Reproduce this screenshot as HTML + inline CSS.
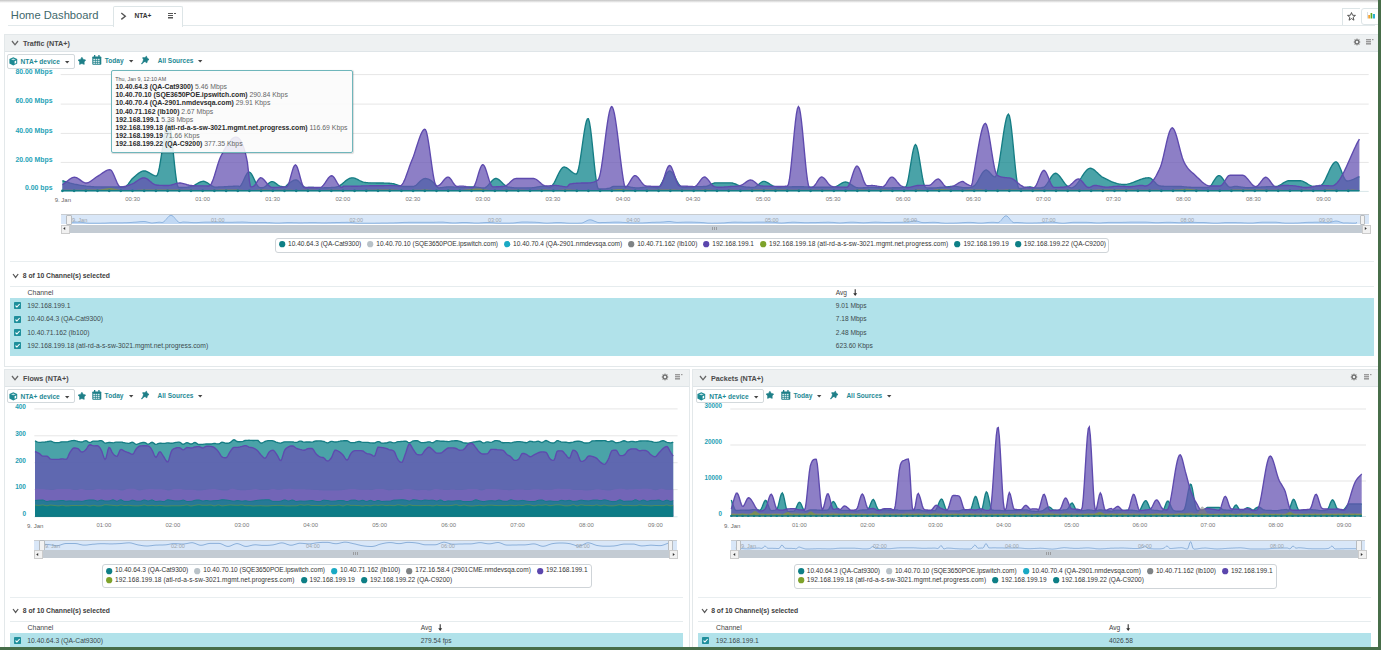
<!DOCTYPE html><html><head><meta charset="utf-8"><style>
html,body{margin:0;padding:0;}
body{width:1381px;height:650px;overflow:hidden;position:relative;background:#fff;font-family:"Liberation Sans", sans-serif;}
.t{position:absolute;white-space:nowrap;line-height:1;font-family:"Liberation Sans", sans-serif;}
svg{overflow:visible}
</style></head><body>
<div style="position:absolute;left:0px;top:0px;width:1381px;height:3px;background:linear-gradient(#c3c3c3,#e8e8e8 60%,#fff)"></div>
<div class="t" style="left:10.8px;top:9.82px;font-size:11.2px;font-weight:normal;color:#41686b;">Home Dashboard</div>
<div style="position:absolute;left:8px;top:25px;width:1367px;height:1px;background:#e2e9eb"></div>
<div style="position:absolute;left:113px;top:6px;width:68px;height:20px;border:1px solid #dde5e7;border-bottom:none;border-radius:2px 2px 0 0;background:#fff"></div>
<svg style="position:absolute;left:120px;top:12px" width="8" height="9"><path d="M1.3,1 L5.3,4.2 L1.3,7.4" fill="none" stroke="#555" stroke-width="1.4"/></svg>
<div class="t" style="left:134.5px;top:13.21px;font-size:6.6px;font-weight:bold;color:#333;">NTA+</div>
<svg style="position:absolute;left:168px;top:13px" width="9" height="7"><rect x="0" y="0" width="5" height="1" fill="#555"/><rect x="0" y="2" width="5" height="1" fill="#555"/><rect x="0" y="4" width="5" height="1.5" fill="#555"/><rect x="6" y="0" width="2" height="1" fill="#555"/></svg>
<div style="position:absolute;left:1342px;top:8px;width:17px;height:16px;border-left:1px solid #dde5e7;border-top:1px solid #dde5e7;background:#fff"></div>
<svg style="position:absolute;left:1347px;top:12px" width="9" height="9" viewBox="0 0 10 10"><path d="M5,0.6 L6.2,3.6 L9.4,3.8 L6.9,5.8 L7.7,9.1 L5,7.3 L2.3,9.1 L3.1,5.8 L0.6,3.8 L3.8,3.6 Z" fill="none" stroke="#444" stroke-width="1"/></svg>
<div style="position:absolute;left:1361px;top:8px;width:20px;height:15px;border:1px solid #dde5e7;border-radius:3px;background:#fff"></div>
<svg style="position:absolute;left:1367px;top:12px" width="9" height="7"><rect x="0" y="0" width="1" height="6.5" fill="#d8dde2"/><rect x="1.3" y="3" width="1.6" height="3.5" fill="#f39a1e"/><rect x="3.6" y="1" width="1.6" height="5.5" fill="#5eab1f"/><rect x="5.8" y="2" width="2.2" height="4.5" fill="#2ab0cf"/></svg>
<!--PANELS-->
<div style="position:absolute;left:4px;top:34px;width:1373px;height:331px;border:1px solid #e3e8ea;background:#fff"></div>
<div style="position:absolute;left:5px;top:35px;width:1373px;height:16px;background:#eef1f2;border-bottom:1px solid #dfe5e8"></div>
<svg style="position:absolute;left:10.5px;top:39.5px" width="8" height="5.8"><path d="M1,1 L4.0,4.8 L7,1" fill="none" stroke="#666" stroke-width="1.3"/></svg>
<div class="t" style="left:23.0px;top:39.51px;font-size:7.2px;font-weight:bold;color:#4a4a4a;">Traffic (NTA+)</div>
<svg style="position:absolute;left:1351.7px;top:36.6px" width="10" height="10"><g transform="translate(5,5)"><path d="M3.38,-0.33 L3.38,0.33 L2.34,0.71 L2.16,1.15 L2.63,2.16 L2.16,2.63 L1.15,2.16 L0.71,2.34 L0.33,3.38 L-0.33,3.38 L-0.71,2.34 L-1.15,2.16 L-2.16,2.63 L-2.63,2.16 L-2.16,1.15 L-2.34,0.71 L-3.38,0.33 L-3.38,-0.33 L-2.34,-0.71 L-2.16,-1.15 L-2.63,-2.16 L-2.16,-2.63 L-1.15,-2.16 L-0.71,-2.34 L-0.33,-3.38 L0.33,-3.38 L0.71,-2.34 L1.15,-2.16 L2.16,-2.63 L2.63,-2.16 L2.16,-1.15 L2.34,-0.71 Z M1.22,0 A1.22,1.22 0 1 0 -1.22,0 A1.22,1.22 0 1 0 1.22,0 Z" fill="#707070" fill-rule="evenodd"/></g></svg>
<svg style="position:absolute;left:1366px;top:39px" width="9" height="7"><rect x="0" y="0" width="5" height="1.4" fill="#9a9a9a"/><rect x="0" y="2" width="5" height="1.4" fill="#9a9a9a"/><rect x="0" y="4" width="5" height="1.6" fill="#9a9a9a"/><rect x="6" y="0" width="1.5" height="1.2" fill="#9a9a9a"/></svg>
<div style="position:absolute;left:4px;top:369px;width:684px;height:281px;border:1px solid #e3e8ea;border-bottom:none;background:#fff"></div>
<div style="position:absolute;left:5px;top:370px;width:684px;height:16px;background:#eef1f2;border-bottom:1px solid #dfe5e8"></div>
<svg style="position:absolute;left:10.5px;top:374.5px" width="8" height="5.8"><path d="M1,1 L4.0,4.8 L7,1" fill="none" stroke="#666" stroke-width="1.3"/></svg>
<div class="t" style="left:23.0px;top:374.51px;font-size:7.2px;font-weight:bold;color:#4a4a4a;">Flows (NTA+)</div>
<svg style="position:absolute;left:660.3px;top:371.6px" width="10" height="10"><g transform="translate(5,5)"><path d="M3.38,-0.33 L3.38,0.33 L2.34,0.71 L2.16,1.15 L2.63,2.16 L2.16,2.63 L1.15,2.16 L0.71,2.34 L0.33,3.38 L-0.33,3.38 L-0.71,2.34 L-1.15,2.16 L-2.16,2.63 L-2.63,2.16 L-2.16,1.15 L-2.34,0.71 L-3.38,0.33 L-3.38,-0.33 L-2.34,-0.71 L-2.16,-1.15 L-2.63,-2.16 L-2.16,-2.63 L-1.15,-2.16 L-0.71,-2.34 L-0.33,-3.38 L0.33,-3.38 L0.71,-2.34 L1.15,-2.16 L2.16,-2.63 L2.63,-2.16 L2.16,-1.15 L2.34,-0.71 Z M1.22,0 A1.22,1.22 0 1 0 -1.22,0 A1.22,1.22 0 1 0 1.22,0 Z" fill="#707070" fill-rule="evenodd"/></g></svg>
<svg style="position:absolute;left:675px;top:374px" width="9" height="7"><rect x="0" y="0" width="5" height="1.4" fill="#9a9a9a"/><rect x="0" y="2" width="5" height="1.4" fill="#9a9a9a"/><rect x="0" y="4" width="5" height="1.6" fill="#9a9a9a"/><rect x="6" y="0" width="1.5" height="1.2" fill="#9a9a9a"/></svg>
<div style="position:absolute;left:692px;top:369px;width:685px;height:281px;border:1px solid #e3e8ea;border-bottom:none;background:#fff"></div>
<div style="position:absolute;left:693px;top:370px;width:685px;height:16px;background:#eef1f2;border-bottom:1px solid #dfe5e8"></div>
<svg style="position:absolute;left:698.5px;top:374.5px" width="8" height="5.8"><path d="M1,1 L4.0,4.8 L7,1" fill="none" stroke="#666" stroke-width="1.3"/></svg>
<div class="t" style="left:711.0px;top:374.51px;font-size:7.2px;font-weight:bold;color:#4a4a4a;">Packets (NTA+)</div>
<svg style="position:absolute;left:1349px;top:371.6px" width="10" height="10"><g transform="translate(5,5)"><path d="M3.38,-0.33 L3.38,0.33 L2.34,0.71 L2.16,1.15 L2.63,2.16 L2.16,2.63 L1.15,2.16 L0.71,2.34 L0.33,3.38 L-0.33,3.38 L-0.71,2.34 L-1.15,2.16 L-2.16,2.63 L-2.63,2.16 L-2.16,1.15 L-2.34,0.71 L-3.38,0.33 L-3.38,-0.33 L-2.34,-0.71 L-2.16,-1.15 L-2.63,-2.16 L-2.16,-2.63 L-1.15,-2.16 L-0.71,-2.34 L-0.33,-3.38 L0.33,-3.38 L0.71,-2.34 L1.15,-2.16 L2.16,-2.63 L2.63,-2.16 L2.16,-1.15 L2.34,-0.71 Z M1.22,0 A1.22,1.22 0 1 0 -1.22,0 A1.22,1.22 0 1 0 1.22,0 Z" fill="#707070" fill-rule="evenodd"/></g></svg>
<svg style="position:absolute;left:1364px;top:374px" width="9" height="7"><rect x="0" y="0" width="5" height="1.4" fill="#9a9a9a"/><rect x="0" y="2" width="5" height="1.4" fill="#9a9a9a"/><rect x="0" y="4" width="5" height="1.6" fill="#9a9a9a"/><rect x="6" y="0" width="1.5" height="1.2" fill="#9a9a9a"/></svg>
<svg style="position:absolute;left:0;top:0" width="1381" height="650"><rect x="60.7" y="74.1" width="1308" height="1" fill="#e6e6e6"/><rect x="60.7" y="103.6" width="1308" height="1" fill="#e6e6e6"/><rect x="60.7" y="132.9" width="1308" height="1" fill="#e6e6e6"/><rect x="60.7" y="161.9" width="1308" height="1" fill="#e6e6e6"/><rect x="60.7" y="190.9" width="1308" height="1" fill="#d8e6e8"/><path d="M62.4,191.1 L62.4,180.7 63.4,181.0 64.4,181.3 65.4,181.6 66.4,181.9 67.4,182.2 68.4,182.5 69.4,182.8 70.4,183.1 71.4,183.3 72.4,183.6 73.4,183.8 74.4,184.1 75.4,184.3 76.4,184.5 77.4,184.7 78.4,184.9 79.4,185.1 80.4,185.3 81.4,185.4 82.4,185.6 83.4,185.7 84.4,185.9 85.4,186.0 86.4,186.2 87.4,186.3 88.4,186.4 89.4,186.5 90.4,186.5 91.4,186.6 92.4,186.7 93.4,186.7 94.4,186.8 95.4,186.8 96.4,186.8 97.4,186.9 98.4,186.9 99.4,186.9 100.4,186.9 101.4,187.0 102.4,187.0 103.4,187.0 104.4,187.0 105.4,187.0 106.4,187.0 107.4,187.0 108.4,187.0 109.4,187.0 110.4,187.0 111.4,187.0 112.4,187.0 113.4,187.0 114.4,187.0 115.4,187.0 116.4,187.0 117.4,187.0 118.4,187.0 119.4,187.0 120.4,187.0 121.4,187.0 122.4,187.0 123.4,187.0 124.4,187.0 125.4,186.8 126.4,186.1 127.4,185.1 128.4,183.9 129.4,182.5 130.4,181.1 131.4,179.7 132.4,178.6 133.4,177.7 134.4,176.8 135.4,175.9 136.4,175.0 137.4,174.2 138.4,173.4 139.4,172.7 140.4,172.1 141.4,171.6 142.4,171.2 143.4,171.0 144.4,170.9 145.4,171.0 146.4,171.3 147.4,171.8 148.4,172.3 149.4,172.9 150.4,173.5 151.4,174.1 152.4,174.7 153.4,175.2 154.4,175.6 155.4,175.9 156.4,176.0 157.4,174.9 158.4,171.9 159.4,167.4 160.4,161.7 161.4,155.3 162.4,148.5 163.4,141.7 164.4,135.3 165.4,129.6 166.4,125.1 167.4,122.1 168.4,121.0 169.4,122.8 170.4,127.8 171.4,135.1 172.4,144.0 173.4,153.8 174.4,163.5 175.4,172.6 176.4,180.1 177.4,185.3 178.4,187.5 179.4,187.5 180.4,187.5 181.4,187.5 182.4,187.5 183.4,187.4 184.4,187.4 185.4,187.3 186.4,187.3 187.4,187.2 188.4,187.0 189.4,186.9 190.4,186.7 191.4,186.5 192.4,186.2 193.4,185.8 194.4,185.3 195.4,184.7 196.4,184.1 197.4,183.5 198.4,182.9 199.4,182.4 200.4,182.0 201.4,181.6 202.4,181.4 203.4,181.3 204.4,181.4 205.4,181.8 206.4,182.3 207.4,182.9 208.4,183.5 209.4,184.3 210.4,185.0 211.4,185.7 212.4,186.2 213.4,186.7 214.4,187.0 215.4,187.1 216.4,187.1 217.4,187.1 218.4,187.0 219.4,187.0 220.4,186.9 221.4,186.9 222.4,186.8 223.4,186.8 224.4,186.7 225.4,186.7 226.4,186.6 227.4,186.6 228.4,186.5 229.4,186.5 230.4,186.4 231.4,186.3 232.4,186.3 233.4,186.2 234.4,186.2 235.4,186.1 236.4,186.1 237.4,186.1 238.4,186.1 239.4,186.7 240.4,186.0 241.4,184.6 242.4,182.8 243.4,180.7 244.4,178.5 245.4,176.4 246.4,174.5 247.4,173.0 248.4,172.2 249.4,172.1 250.4,172.7 251.4,174.0 252.4,175.7 253.4,177.6 254.4,179.8 255.4,181.9 256.4,183.9 257.4,185.5 258.4,186.8 259.4,187.4 260.4,187.7 261.4,187.7 262.4,187.7 263.4,187.5 264.4,187.0 265.4,186.4 266.4,185.5 267.4,184.5 268.4,183.6 269.4,182.7 270.4,182.1 271.4,181.7 272.4,181.6 273.4,181.9 274.4,182.4 275.4,183.1 276.4,183.8 277.4,184.6 278.4,185.3 279.4,185.9 280.4,186.3 281.4,186.5 282.4,186.7 283.4,186.9 284.4,186.9 285.4,186.9 286.4,185.7 287.4,184.7 288.4,183.9 289.4,183.0 290.4,182.3 291.4,181.6 292.4,181.0 293.4,180.5 294.4,180.2 295.4,180.0 296.4,180.0 297.4,180.4 298.4,181.1 299.4,182.1 300.4,183.2 301.4,184.3 302.4,185.4 303.4,186.4 304.4,187.1 305.4,187.6 306.4,187.7 307.4,187.6 308.4,187.4 309.4,187.4 310.4,187.5 311.4,187.5 312.4,187.5 313.4,187.5 314.4,187.6 315.4,187.6 316.4,187.7 317.4,187.7 318.4,187.7 319.4,187.8 320.4,187.8 321.4,187.8 322.4,187.8 323.4,187.8 324.4,187.7 325.4,187.7 326.4,187.7 327.4,187.7 328.4,187.7 329.4,187.6 330.4,187.6 331.4,187.5 332.4,187.4 333.4,187.3 334.4,187.3 335.4,187.1 336.4,187.0 337.4,186.7 338.4,186.3 339.4,185.8 340.4,185.2 341.4,184.4 342.4,183.7 343.4,182.8 344.4,182.0 345.4,181.1 346.4,180.3 347.4,179.6 348.4,179.0 349.4,178.4 350.4,178.1 351.4,177.8 352.4,177.8 353.4,177.9 354.4,178.2 355.4,178.5 356.4,179.0 357.4,179.4 358.4,179.9 359.4,180.5 360.4,181.0 361.4,181.4 362.4,181.8 363.4,182.2 364.4,182.4 365.4,182.5 366.4,182.6 367.4,182.7 368.4,182.8 369.4,182.8 370.4,182.8 371.4,182.9 372.4,182.9 373.4,182.9 374.4,182.9 375.4,182.9 376.4,183.0 377.4,183.0 378.4,183.0 379.4,183.0 380.4,183.0 381.4,183.0 382.4,183.0 383.4,183.0 384.4,183.1 385.4,183.1 386.4,183.1 387.4,183.1 388.4,183.2 389.4,183.2 390.4,183.3 391.4,183.4 392.4,183.6 393.4,183.7 394.4,184.0 395.4,184.3 396.4,184.6 397.4,185.0 398.4,185.3 399.4,185.6 400.4,185.9 401.4,186.2 402.4,186.4 403.4,186.5 404.4,186.5 405.4,186.5 406.4,186.5 407.4,186.5 408.4,186.5 409.4,186.5 410.4,186.5 411.4,186.5 412.4,186.5 413.4,186.5 414.4,186.2 415.4,185.7 416.4,185.0 417.4,184.1 418.4,183.1 419.4,182.1 420.4,181.1 421.4,180.2 422.4,179.5 423.4,178.9 424.4,178.6 425.4,178.5 426.4,178.6 427.4,178.9 428.4,179.2 429.4,179.7 430.4,180.2 431.4,180.9 432.4,181.7 433.4,182.6 434.4,183.5 435.4,184.6 436.4,185.7 437.4,187.3 438.4,187.8 439.4,187.8 440.4,187.7 441.4,187.6 442.4,187.5 443.4,187.3 444.4,187.2 445.4,187.1 446.4,187.0 447.4,186.9 448.4,186.8 449.4,186.8 450.4,186.8 451.4,186.8 452.4,186.9 453.4,187.0 454.4,187.1 455.4,187.2 456.4,187.3 457.4,187.4 458.4,187.5 459.4,187.5 460.4,187.6 461.4,187.6 462.4,187.6 463.4,187.5 464.4,187.5 465.4,187.4 466.4,187.3 467.4,187.2 468.4,187.1 469.4,187.0 470.4,187.0 471.4,186.9 472.4,186.9 473.4,186.9 474.4,186.9 475.4,187.0 476.4,187.1 477.4,187.3 478.4,187.4 479.4,187.6 480.4,187.7 481.4,187.8 482.4,187.9 483.4,188.0 484.4,187.9 485.4,187.6 486.4,186.9 487.4,186.0 488.4,185.0 489.4,183.8 490.4,182.7 491.4,181.5 492.4,180.5 493.4,179.6 494.4,178.9 495.4,178.5 496.4,178.5 497.4,178.8 498.4,179.4 499.4,180.1 500.4,180.9 501.4,181.9 502.4,182.9 503.4,183.9 504.4,184.8 505.4,185.6 506.4,186.3 507.4,186.8 508.4,187.1 509.4,187.2 510.4,187.4 511.4,187.5 512.4,187.6 513.4,187.7 514.4,187.8 515.4,187.8 516.4,187.8 517.4,187.9 518.4,187.9 519.4,187.9 520.4,187.9 521.4,187.9 522.4,187.9 523.4,187.9 524.4,187.9 525.4,187.9 526.4,187.9 527.4,187.8 528.4,187.8 529.4,187.8 530.4,187.8 531.4,187.8 532.4,187.7 533.4,187.6 534.4,187.5 535.4,187.3 536.4,187.1 537.4,186.9 538.4,186.8 539.4,186.6 540.4,186.4 541.4,186.3 542.4,186.2 543.4,186.2 544.4,186.3 545.4,186.4 546.4,186.5 547.4,186.7 548.4,186.9 549.4,187.0 550.4,187.0 551.4,186.4 552.4,185.4 553.4,184.0 554.4,182.3 555.4,180.4 556.4,178.3 557.4,176.1 558.4,174.0 559.4,172.1 560.4,170.3 561.4,168.8 562.4,167.7 563.4,167.1 564.4,167.0 565.4,167.3 566.4,167.7 567.4,168.3 568.4,169.0 569.4,169.9 570.4,170.7 571.4,171.6 572.4,172.3 573.4,173.0 574.4,173.6 575.4,173.9 576.4,174.0 577.4,172.6 578.4,169.3 579.4,164.4 580.4,158.3 581.4,151.6 582.4,144.5 583.4,137.5 584.4,131.0 585.4,125.5 586.4,121.3 587.4,118.9 588.4,118.8 589.4,121.9 590.4,127.9 591.4,135.9 592.4,145.3 593.4,155.3 594.4,165.1 595.4,174.2 596.4,181.7 597.4,186.8 598.4,189.0 599.4,189.0 600.4,189.0 601.4,189.0 602.4,189.0 603.4,188.9 604.4,188.9 605.4,188.8 606.4,188.7 607.4,188.5 608.4,188.4 609.4,188.1 610.4,187.9 611.4,187.3 612.4,186.7 613.4,186.3 614.4,186.3 615.4,186.3 616.4,186.3 617.4,186.3 618.4,186.3 619.4,186.3 620.4,186.3 621.4,186.3 622.4,186.3 623.4,186.4 624.4,186.4 625.4,186.4 626.4,186.5 627.4,186.6 628.4,186.7 629.4,186.9 630.4,187.1 631.4,187.3 632.4,187.4 633.4,187.6 634.4,187.7 635.4,187.8 636.4,187.9 637.4,187.9 638.4,187.9 639.4,187.8 640.4,187.7 641.4,187.6 642.4,187.5 643.4,187.4 644.4,187.2 645.4,187.1 646.4,187.0 647.4,186.9 648.4,186.9 649.4,186.9 650.4,186.9 651.4,187.0 652.4,187.2 653.4,187.3 654.4,187.4 655.4,187.5 656.4,187.6 657.4,187.7 658.4,187.5 659.4,186.7 660.4,185.4 661.4,183.7 662.4,181.8 663.4,179.8 664.4,177.7 665.4,175.7 666.4,173.9 667.4,172.5 668.4,171.5 669.4,171.0 670.4,171.2 671.4,171.9 672.4,173.0 673.4,174.5 674.4,176.2 675.4,178.1 676.4,180.0 677.4,181.8 678.4,183.5 679.4,185.0 680.4,186.2 681.4,186.9 682.4,187.2 683.4,187.2 684.4,187.3 685.4,187.2 686.4,187.2 687.4,187.1 688.4,187.1 689.4,187.0 690.4,186.9 691.4,186.8 692.4,186.7 693.4,186.7 694.4,186.6 695.4,186.6 696.4,186.6 697.4,186.6 698.4,186.6 699.4,186.6 700.4,186.6 701.4,186.6 702.4,186.6 703.4,186.5 704.4,186.5 705.4,186.5 706.4,186.3 707.4,186.0 708.4,185.6 709.4,185.1 710.4,184.7 711.4,184.2 712.4,183.7 713.4,183.3 714.4,183.0 715.4,182.8 716.4,182.8 717.4,182.8 718.4,182.8 719.4,182.8 720.4,182.8 721.4,182.8 722.4,182.8 723.4,182.8 724.4,182.8 725.4,182.8 726.4,182.8 727.4,182.8 728.4,182.8 729.4,182.8 730.4,182.8 731.4,182.9 732.4,183.0 733.4,183.3 734.4,183.6 735.4,184.0 736.4,184.4 737.4,184.9 738.4,185.3 739.4,185.7 740.4,186.1 741.4,186.4 742.4,186.6 743.4,186.7 744.4,186.9 745.4,187.0 746.4,187.1 747.4,187.1 748.4,187.2 749.4,187.2 750.4,187.3 751.4,187.3 752.4,187.3 753.4,187.3 754.4,187.2 755.4,186.9 756.4,186.3 757.4,185.5 758.4,184.7 759.4,183.8 760.4,183.0 761.4,182.3 762.4,181.7 763.4,181.4 764.4,181.4 765.4,181.7 766.4,182.1 767.4,182.6 768.4,183.2 769.4,183.8 770.4,184.5 771.4,185.1 772.4,185.7 773.4,186.2 774.4,186.5 775.4,186.7 776.4,186.9 777.4,187.0 778.4,187.0 779.4,187.0 780.4,187.0 781.4,187.0 782.4,186.9 783.4,186.9 784.4,186.9 785.4,186.9 786.4,186.8 787.4,186.8 788.4,186.8 789.4,186.8 790.4,186.8 791.4,186.8 792.4,186.7 793.4,186.7 794.4,186.7 795.4,186.7 796.4,186.7 797.4,186.7 798.4,186.7 799.4,186.7 800.4,186.7 801.4,186.7 802.4,186.7 803.4,186.7 804.4,186.8 805.4,186.8 806.4,186.9 807.4,186.9 808.4,187.0 809.4,187.1 810.4,187.1 811.4,187.1 812.4,187.2 813.4,187.2 814.4,187.2 815.4,187.2 816.4,187.2 817.4,187.2 818.4,187.2 819.4,187.2 820.4,187.2 821.4,187.2 822.4,187.2 823.4,187.2 824.4,187.2 825.4,187.2 826.4,187.2 827.4,187.2 828.4,187.2 829.4,187.2 830.4,187.2 831.4,187.3 832.4,187.3 833.4,187.3 834.4,187.2 835.4,186.9 836.4,186.4 837.4,185.9 838.4,185.3 839.4,184.6 840.4,184.0 841.4,183.4 842.4,182.8 843.4,182.4 844.4,182.1 845.4,182.0 846.4,182.1 847.4,182.4 848.4,182.9 849.4,183.4 850.4,184.1 851.4,184.7 852.4,185.4 853.4,186.1 854.4,186.7 855.4,187.2 856.4,187.6 857.4,187.7 858.4,187.8 859.4,187.8 860.4,187.8 861.4,187.8 862.4,187.8 863.4,187.7 864.4,187.7 865.4,187.6 866.4,187.6 867.4,187.5 868.4,187.5 869.4,187.4 870.4,187.4 871.4,187.4 872.4,187.4 873.4,187.4 874.4,187.4 875.4,187.5 876.4,187.5 877.4,187.6 878.4,187.7 879.4,187.7 880.4,187.8 881.4,187.8 882.4,187.8 883.4,187.9 884.4,187.9 885.4,187.8 886.4,187.8 887.4,187.8 888.4,187.8 889.4,187.8 890.4,187.8 891.4,187.8 892.4,187.7 893.4,187.7 894.4,187.7 895.4,187.7 896.4,187.7 897.4,187.7 898.4,187.7 899.4,187.7 900.4,187.6 901.4,187.6 902.4,187.5 903.4,187.4 904.4,187.2 905.4,187.1 906.4,185.9 907.4,182.8 908.4,178.1 909.4,172.4 910.4,166.2 911.4,160.0 912.4,154.2 913.4,149.4 914.4,146.0 915.4,144.6 916.4,145.6 917.4,148.6 918.4,153.1 919.4,158.8 920.4,165.0 921.4,171.3 922.4,177.2 923.4,182.2 924.4,185.8 925.4,187.4 926.4,187.7 927.4,187.9 928.4,187.9 929.4,188.0 930.4,188.0 931.4,188.0 932.4,188.0 933.4,187.9 934.4,187.9 935.4,187.8 936.4,187.8 937.4,187.7 938.4,187.6 939.4,187.5 940.4,187.5 941.4,187.4 942.4,187.3 943.4,187.2 944.4,187.1 945.4,187.0 946.4,186.9 947.4,186.8 948.4,186.7 949.4,186.6 950.4,186.5 951.4,186.4 952.4,186.4 953.4,186.3 954.4,186.3 955.4,186.4 956.4,186.5 957.4,186.6 958.4,186.8 959.4,187.0 960.4,187.1 961.4,187.3 962.4,187.5 963.4,187.6 964.4,187.7 965.4,187.7 966.4,187.7 967.4,187.7 968.4,187.7 969.4,187.6 970.4,187.4 971.4,187.2 972.4,186.8 973.4,186.3 974.4,185.7 975.4,184.7 976.4,183.4 977.4,181.8 978.4,180.0 979.4,178.2 980.4,176.3 981.4,174.6 982.4,173.0 983.4,171.7 984.4,170.7 985.4,170.1 986.4,170.0 987.4,170.5 988.4,171.2 989.4,172.2 990.4,173.4 991.4,174.5 992.4,175.6 993.4,176.4 994.4,176.9 995.4,176.8 996.4,175.1 997.4,171.8 998.4,167.1 999.4,161.3 1000.4,154.9 1001.4,148.0 1002.4,141.1 1003.4,134.3 1004.4,128.1 1005.4,122.6 1006.4,118.3 1007.4,115.4 1008.4,114.2 1009.4,115.7 1010.4,120.6 1011.4,128.1 1012.4,137.3 1013.4,147.6 1014.4,158.2 1015.4,168.3 1016.4,177.1 1017.4,183.9 1018.4,187.8 1019.4,188.5 1020.4,188.4 1021.4,188.3 1022.4,188.2 1023.4,188.0 1024.4,187.8 1025.4,187.6 1026.4,187.4 1027.4,187.2 1028.4,187.1 1029.4,187.0 1030.4,187.0 1031.4,187.1 1032.4,187.3 1033.4,187.6 1034.4,187.8 1035.4,187.9 1036.4,187.9 1037.4,187.9 1038.4,187.9 1039.4,187.9 1040.4,187.8 1041.4,187.7 1042.4,187.5 1043.4,187.3 1044.4,186.9 1045.4,186.0 1046.4,184.7 1047.4,183.3 1048.4,181.7 1049.4,180.0 1050.4,178.3 1051.4,176.7 1052.4,175.4 1053.4,174.3 1054.4,173.6 1055.4,173.3 1056.4,173.5 1057.4,174.0 1058.4,174.9 1059.4,176.0 1060.4,177.2 1061.4,178.6 1062.4,180.0 1063.4,181.5 1064.4,182.8 1065.4,184.1 1066.4,185.2 1067.4,186.1 1068.4,186.8 1069.4,187.4 1070.4,187.7 1071.4,187.8 1072.4,187.6 1073.4,187.1 1074.4,186.5 1075.4,185.7 1076.4,184.6 1077.4,183.4 1078.4,182.1 1079.4,180.6 1080.4,179.0 1081.4,177.5 1082.4,175.9 1083.4,174.4 1084.4,172.9 1085.4,171.6 1086.4,170.5 1087.4,169.5 1088.4,168.8 1089.4,168.4 1090.4,168.3 1091.4,168.5 1092.4,168.9 1093.4,169.4 1094.4,170.1 1095.4,171.0 1096.4,171.9 1097.4,172.8 1098.4,173.8 1099.4,174.7 1100.4,175.6 1101.4,176.5 1102.4,177.2 1103.4,177.7 1104.4,178.2 1105.4,178.7 1106.4,179.2 1107.4,179.7 1108.4,180.2 1109.4,180.7 1110.4,181.1 1111.4,181.6 1112.4,182.0 1113.4,182.3 1114.4,182.7 1115.4,183.0 1116.4,183.3 1117.4,183.6 1118.4,183.8 1119.4,184.1 1120.4,184.2 1121.4,184.4 1122.4,184.4 1123.4,184.5 1124.4,184.5 1125.4,184.4 1126.4,184.3 1127.4,184.2 1128.4,183.9 1129.4,183.7 1130.4,183.4 1131.4,183.0 1132.4,182.7 1133.4,182.3 1134.4,181.9 1135.4,181.5 1136.4,181.1 1137.4,180.7 1138.4,180.3 1139.4,179.9 1140.4,179.5 1141.4,179.2 1142.4,178.8 1143.4,178.5 1144.4,178.3 1145.4,178.0 1146.4,177.9 1147.4,177.8 1148.4,177.7 1149.4,177.8 1150.4,178.1 1151.4,178.8 1152.4,179.7 1153.4,180.7 1154.4,181.7 1155.4,182.8 1156.4,183.9 1157.4,184.8 1158.4,185.5 1159.4,185.9 1160.4,186.0 1161.4,186.1 1162.4,186.2 1163.4,186.2 1164.4,186.3 1165.4,186.3 1166.4,186.3 1167.4,186.4 1168.4,186.4 1169.4,186.4 1170.4,186.4 1171.4,186.4 1172.4,186.4 1173.4,186.5 1174.4,186.5 1175.4,186.5 1176.4,186.5 1177.4,186.5 1178.4,186.5 1179.4,186.5 1180.4,186.5 1181.4,186.5 1182.4,186.6 1183.4,186.7 1184.4,186.8 1185.4,186.9 1186.4,187.0 1187.4,187.1 1188.4,187.1 1189.4,187.2 1190.4,187.2 1191.4,187.3 1192.4,187.3 1193.4,187.3 1194.4,187.3 1195.4,187.3 1196.4,187.4 1197.4,187.4 1198.4,187.4 1199.4,187.4 1200.4,187.4 1201.4,187.4 1202.4,187.5 1203.4,187.5 1204.4,187.5 1205.4,187.5 1206.4,187.5 1207.4,187.5 1208.4,187.5 1209.4,187.0 1210.4,186.1 1211.4,184.8 1212.4,183.3 1213.4,181.7 1214.4,180.1 1215.4,178.6 1216.4,177.3 1217.4,176.3 1218.4,175.7 1219.4,175.6 1220.4,176.1 1221.4,177.0 1222.4,178.2 1223.4,179.7 1224.4,181.2 1225.4,182.8 1226.4,184.3 1227.4,185.5 1228.4,186.5 1229.4,187.1 1230.4,187.2 1231.4,187.1 1232.4,186.9 1233.4,186.7 1234.4,186.5 1235.4,186.4 1236.4,186.4 1237.4,186.5 1238.4,186.6 1239.4,186.8 1240.4,186.9 1241.4,187.1 1242.4,187.2 1243.4,187.4 1244.4,187.5 1245.4,187.6 1246.4,187.6 1247.4,187.7 1248.4,187.7 1249.4,187.6 1250.4,187.6 1251.4,187.6 1252.4,187.5 1253.4,187.5 1254.4,187.4 1255.4,187.3 1256.4,187.3 1257.4,187.2 1258.4,187.2 1259.4,187.1 1260.4,187.1 1261.4,187.0 1262.4,186.9 1263.4,186.9 1264.4,186.8 1265.4,186.8 1266.4,186.7 1267.4,186.7 1268.4,186.6 1269.4,186.6 1270.4,186.6 1271.4,186.6 1272.4,186.6 1273.4,186.6 1274.4,186.5 1275.4,186.5 1276.4,186.5 1277.4,186.3 1278.4,185.9 1279.4,185.4 1280.4,184.9 1281.4,184.3 1282.4,183.6 1283.4,182.9 1284.4,182.3 1285.4,181.8 1286.4,181.3 1287.4,180.9 1288.4,180.7 1289.4,180.7 1290.4,180.7 1291.4,180.7 1292.4,180.7 1293.4,180.7 1294.4,180.7 1295.4,180.7 1296.4,180.7 1297.4,180.7 1298.4,180.7 1299.4,180.7 1300.4,180.7 1301.4,180.9 1302.4,181.2 1303.4,181.6 1304.4,182.1 1305.4,182.6 1306.4,183.2 1307.4,183.8 1308.4,184.5 1309.4,185.0 1310.4,185.5 1311.4,186.0 1312.4,186.3 1313.4,186.5 1314.4,186.5 1315.4,186.4 1316.4,186.2 1317.4,186.1 1318.4,186.1 1319.4,186.1 1320.4,185.9 1321.4,185.3 1322.4,184.3 1323.4,182.9 1324.4,181.2 1325.4,179.2 1326.4,177.1 1327.4,174.9 1328.4,172.7 1329.4,170.5 1330.4,168.4 1331.4,166.5 1332.4,164.8 1333.4,163.5 1334.4,162.5 1335.4,161.9 1336.4,161.9 1337.4,162.7 1338.4,164.1 1339.4,166.2 1340.4,168.6 1341.4,171.1 1342.4,173.7 1343.4,176.2 1344.4,178.3 1345.4,179.9 1346.4,180.8 1347.4,181.0 1348.4,180.9 1349.4,180.7 1350.4,180.4 1351.4,180.1 1352.4,179.7 1353.4,179.3 1354.4,178.8 1355.4,178.3 1356.4,177.9 1357.4,177.4 1358.4,177.0 1359.4,176.6 L1359.4,191.1 Z" fill="rgba(14,132,139,0.75)"/><path d="M62.4,180.7 L63.4,181.0 L64.4,181.3 L65.4,181.6 L66.4,181.9 L67.4,182.2 L68.4,182.5 L69.4,182.8 L70.4,183.1 L71.4,183.3 L72.4,183.6 L73.4,183.8 L74.4,184.1 L75.4,184.3 L76.4,184.5 L77.4,184.7 L78.4,184.9 L79.4,185.1 L80.4,185.3 L81.4,185.4 L82.4,185.6 L83.4,185.7 L84.4,185.9 L85.4,186.0 L86.4,186.2 L87.4,186.3 L88.4,186.4 L89.4,186.5 L90.4,186.5 L91.4,186.6 L92.4,186.7 L93.4,186.7 L94.4,186.8 L95.4,186.8 L96.4,186.8 L97.4,186.9 L98.4,186.9 L99.4,186.9 L100.4,186.9 L101.4,187.0 L102.4,187.0 L103.4,187.0 L104.4,187.0 L105.4,187.0 L106.4,187.0 L107.4,187.0 L108.4,187.0 L109.4,187.0 L110.4,187.0 L111.4,187.0 L112.4,187.0 L113.4,187.0 L114.4,187.0 L115.4,187.0 L116.4,187.0 L117.4,187.0 L118.4,187.0 L119.4,187.0 L120.4,187.0 L121.4,187.0 L122.4,187.0 L123.4,187.0 L124.4,187.0 L125.4,186.8 L126.4,186.1 L127.4,185.1 L128.4,183.9 L129.4,182.5 L130.4,181.1 L131.4,179.7 L132.4,178.6 L133.4,177.7 L134.4,176.8 L135.4,175.9 L136.4,175.0 L137.4,174.2 L138.4,173.4 L139.4,172.7 L140.4,172.1 L141.4,171.6 L142.4,171.2 L143.4,171.0 L144.4,170.9 L145.4,171.0 L146.4,171.3 L147.4,171.8 L148.4,172.3 L149.4,172.9 L150.4,173.5 L151.4,174.1 L152.4,174.7 L153.4,175.2 L154.4,175.6 L155.4,175.9 L156.4,176.0 L157.4,174.9 L158.4,171.9 L159.4,167.4 L160.4,161.7 L161.4,155.3 L162.4,148.5 L163.4,141.7 L164.4,135.3 L165.4,129.6 L166.4,125.1 L167.4,122.1 L168.4,121.0 L169.4,122.8 L170.4,127.8 L171.4,135.1 L172.4,144.0 L173.4,153.8 L174.4,163.5 L175.4,172.6 L176.4,180.1 L177.4,185.3 L178.4,187.5 L179.4,187.5 L180.4,187.5 L181.4,187.5 L182.4,187.5 L183.4,187.4 L184.4,187.4 L185.4,187.3 L186.4,187.3 L187.4,187.2 L188.4,187.0 L189.4,186.9 L190.4,186.7 L191.4,186.5 L192.4,186.2 L193.4,185.8 L194.4,185.3 L195.4,184.7 L196.4,184.1 L197.4,183.5 L198.4,182.9 L199.4,182.4 L200.4,182.0 L201.4,181.6 L202.4,181.4 L203.4,181.3 L204.4,181.4 L205.4,181.8 L206.4,182.3 L207.4,182.9 L208.4,183.5 L209.4,184.3 L210.4,185.0 L211.4,185.7 L212.4,186.2 L213.4,186.7 L214.4,187.0 L215.4,187.1 L216.4,187.1 L217.4,187.1 L218.4,187.0 L219.4,187.0 L220.4,186.9 L221.4,186.9 L222.4,186.8 L223.4,186.8 L224.4,186.7 L225.4,186.7 L226.4,186.6 L227.4,186.6 L228.4,186.5 L229.4,186.5 L230.4,186.4 L231.4,186.3 L232.4,186.3 L233.4,186.2 L234.4,186.2 L235.4,186.1 L236.4,186.1 L237.4,186.1 L238.4,186.1 L239.4,186.7 L240.4,186.0 L241.4,184.6 L242.4,182.8 L243.4,180.7 L244.4,178.5 L245.4,176.4 L246.4,174.5 L247.4,173.0 L248.4,172.2 L249.4,172.1 L250.4,172.7 L251.4,174.0 L252.4,175.7 L253.4,177.6 L254.4,179.8 L255.4,181.9 L256.4,183.9 L257.4,185.5 L258.4,186.8 L259.4,187.4 L260.4,187.7 L261.4,187.7 L262.4,187.7 L263.4,187.5 L264.4,187.0 L265.4,186.4 L266.4,185.5 L267.4,184.5 L268.4,183.6 L269.4,182.7 L270.4,182.1 L271.4,181.7 L272.4,181.6 L273.4,181.9 L274.4,182.4 L275.4,183.1 L276.4,183.8 L277.4,184.6 L278.4,185.3 L279.4,185.9 L280.4,186.3 L281.4,186.5 L282.4,186.7 L283.4,186.9 L284.4,186.9 L285.4,186.9 L286.4,185.7 L287.4,184.7 L288.4,183.9 L289.4,183.0 L290.4,182.3 L291.4,181.6 L292.4,181.0 L293.4,180.5 L294.4,180.2 L295.4,180.0 L296.4,180.0 L297.4,180.4 L298.4,181.1 L299.4,182.1 L300.4,183.2 L301.4,184.3 L302.4,185.4 L303.4,186.4 L304.4,187.1 L305.4,187.6 L306.4,187.7 L307.4,187.6 L308.4,187.4 L309.4,187.4 L310.4,187.5 L311.4,187.5 L312.4,187.5 L313.4,187.5 L314.4,187.6 L315.4,187.6 L316.4,187.7 L317.4,187.7 L318.4,187.7 L319.4,187.8 L320.4,187.8 L321.4,187.8 L322.4,187.8 L323.4,187.8 L324.4,187.7 L325.4,187.7 L326.4,187.7 L327.4,187.7 L328.4,187.7 L329.4,187.6 L330.4,187.6 L331.4,187.5 L332.4,187.4 L333.4,187.3 L334.4,187.3 L335.4,187.1 L336.4,187.0 L337.4,186.7 L338.4,186.3 L339.4,185.8 L340.4,185.2 L341.4,184.4 L342.4,183.7 L343.4,182.8 L344.4,182.0 L345.4,181.1 L346.4,180.3 L347.4,179.6 L348.4,179.0 L349.4,178.4 L350.4,178.1 L351.4,177.8 L352.4,177.8 L353.4,177.9 L354.4,178.2 L355.4,178.5 L356.4,179.0 L357.4,179.4 L358.4,179.9 L359.4,180.5 L360.4,181.0 L361.4,181.4 L362.4,181.8 L363.4,182.2 L364.4,182.4 L365.4,182.5 L366.4,182.6 L367.4,182.7 L368.4,182.8 L369.4,182.8 L370.4,182.8 L371.4,182.9 L372.4,182.9 L373.4,182.9 L374.4,182.9 L375.4,182.9 L376.4,183.0 L377.4,183.0 L378.4,183.0 L379.4,183.0 L380.4,183.0 L381.4,183.0 L382.4,183.0 L383.4,183.0 L384.4,183.1 L385.4,183.1 L386.4,183.1 L387.4,183.1 L388.4,183.2 L389.4,183.2 L390.4,183.3 L391.4,183.4 L392.4,183.6 L393.4,183.7 L394.4,184.0 L395.4,184.3 L396.4,184.6 L397.4,185.0 L398.4,185.3 L399.4,185.6 L400.4,185.9 L401.4,186.2 L402.4,186.4 L403.4,186.5 L404.4,186.5 L405.4,186.5 L406.4,186.5 L407.4,186.5 L408.4,186.5 L409.4,186.5 L410.4,186.5 L411.4,186.5 L412.4,186.5 L413.4,186.5 L414.4,186.2 L415.4,185.7 L416.4,185.0 L417.4,184.1 L418.4,183.1 L419.4,182.1 L420.4,181.1 L421.4,180.2 L422.4,179.5 L423.4,178.9 L424.4,178.6 L425.4,178.5 L426.4,178.6 L427.4,178.9 L428.4,179.2 L429.4,179.7 L430.4,180.2 L431.4,180.9 L432.4,181.7 L433.4,182.6 L434.4,183.5 L435.4,184.6 L436.4,185.7 L437.4,187.3 L438.4,187.8 L439.4,187.8 L440.4,187.7 L441.4,187.6 L442.4,187.5 L443.4,187.3 L444.4,187.2 L445.4,187.1 L446.4,187.0 L447.4,186.9 L448.4,186.8 L449.4,186.8 L450.4,186.8 L451.4,186.8 L452.4,186.9 L453.4,187.0 L454.4,187.1 L455.4,187.2 L456.4,187.3 L457.4,187.4 L458.4,187.5 L459.4,187.5 L460.4,187.6 L461.4,187.6 L462.4,187.6 L463.4,187.5 L464.4,187.5 L465.4,187.4 L466.4,187.3 L467.4,187.2 L468.4,187.1 L469.4,187.0 L470.4,187.0 L471.4,186.9 L472.4,186.9 L473.4,186.9 L474.4,186.9 L475.4,187.0 L476.4,187.1 L477.4,187.3 L478.4,187.4 L479.4,187.6 L480.4,187.7 L481.4,187.8 L482.4,187.9 L483.4,188.0 L484.4,187.9 L485.4,187.6 L486.4,186.9 L487.4,186.0 L488.4,185.0 L489.4,183.8 L490.4,182.7 L491.4,181.5 L492.4,180.5 L493.4,179.6 L494.4,178.9 L495.4,178.5 L496.4,178.5 L497.4,178.8 L498.4,179.4 L499.4,180.1 L500.4,180.9 L501.4,181.9 L502.4,182.9 L503.4,183.9 L504.4,184.8 L505.4,185.6 L506.4,186.3 L507.4,186.8 L508.4,187.1 L509.4,187.2 L510.4,187.4 L511.4,187.5 L512.4,187.6 L513.4,187.7 L514.4,187.8 L515.4,187.8 L516.4,187.8 L517.4,187.9 L518.4,187.9 L519.4,187.9 L520.4,187.9 L521.4,187.9 L522.4,187.9 L523.4,187.9 L524.4,187.9 L525.4,187.9 L526.4,187.9 L527.4,187.8 L528.4,187.8 L529.4,187.8 L530.4,187.8 L531.4,187.8 L532.4,187.7 L533.4,187.6 L534.4,187.5 L535.4,187.3 L536.4,187.1 L537.4,186.9 L538.4,186.8 L539.4,186.6 L540.4,186.4 L541.4,186.3 L542.4,186.2 L543.4,186.2 L544.4,186.3 L545.4,186.4 L546.4,186.5 L547.4,186.7 L548.4,186.9 L549.4,187.0 L550.4,187.0 L551.4,186.4 L552.4,185.4 L553.4,184.0 L554.4,182.3 L555.4,180.4 L556.4,178.3 L557.4,176.1 L558.4,174.0 L559.4,172.1 L560.4,170.3 L561.4,168.8 L562.4,167.7 L563.4,167.1 L564.4,167.0 L565.4,167.3 L566.4,167.7 L567.4,168.3 L568.4,169.0 L569.4,169.9 L570.4,170.7 L571.4,171.6 L572.4,172.3 L573.4,173.0 L574.4,173.6 L575.4,173.9 L576.4,174.0 L577.4,172.6 L578.4,169.3 L579.4,164.4 L580.4,158.3 L581.4,151.6 L582.4,144.5 L583.4,137.5 L584.4,131.0 L585.4,125.5 L586.4,121.3 L587.4,118.9 L588.4,118.8 L589.4,121.9 L590.4,127.9 L591.4,135.9 L592.4,145.3 L593.4,155.3 L594.4,165.1 L595.4,174.2 L596.4,181.7 L597.4,186.8 L598.4,189.0 L599.4,189.0 L600.4,189.0 L601.4,189.0 L602.4,189.0 L603.4,188.9 L604.4,188.9 L605.4,188.8 L606.4,188.7 L607.4,188.5 L608.4,188.4 L609.4,188.1 L610.4,187.9 L611.4,187.3 L612.4,186.7 L613.4,186.3 L614.4,186.3 L615.4,186.3 L616.4,186.3 L617.4,186.3 L618.4,186.3 L619.4,186.3 L620.4,186.3 L621.4,186.3 L622.4,186.3 L623.4,186.4 L624.4,186.4 L625.4,186.4 L626.4,186.5 L627.4,186.6 L628.4,186.7 L629.4,186.9 L630.4,187.1 L631.4,187.3 L632.4,187.4 L633.4,187.6 L634.4,187.7 L635.4,187.8 L636.4,187.9 L637.4,187.9 L638.4,187.9 L639.4,187.8 L640.4,187.7 L641.4,187.6 L642.4,187.5 L643.4,187.4 L644.4,187.2 L645.4,187.1 L646.4,187.0 L647.4,186.9 L648.4,186.9 L649.4,186.9 L650.4,186.9 L651.4,187.0 L652.4,187.2 L653.4,187.3 L654.4,187.4 L655.4,187.5 L656.4,187.6 L657.4,187.7 L658.4,187.5 L659.4,186.7 L660.4,185.4 L661.4,183.7 L662.4,181.8 L663.4,179.8 L664.4,177.7 L665.4,175.7 L666.4,173.9 L667.4,172.5 L668.4,171.5 L669.4,171.0 L670.4,171.2 L671.4,171.9 L672.4,173.0 L673.4,174.5 L674.4,176.2 L675.4,178.1 L676.4,180.0 L677.4,181.8 L678.4,183.5 L679.4,185.0 L680.4,186.2 L681.4,186.9 L682.4,187.2 L683.4,187.2 L684.4,187.3 L685.4,187.2 L686.4,187.2 L687.4,187.1 L688.4,187.1 L689.4,187.0 L690.4,186.9 L691.4,186.8 L692.4,186.7 L693.4,186.7 L694.4,186.6 L695.4,186.6 L696.4,186.6 L697.4,186.6 L698.4,186.6 L699.4,186.6 L700.4,186.6 L701.4,186.6 L702.4,186.6 L703.4,186.5 L704.4,186.5 L705.4,186.5 L706.4,186.3 L707.4,186.0 L708.4,185.6 L709.4,185.1 L710.4,184.7 L711.4,184.2 L712.4,183.7 L713.4,183.3 L714.4,183.0 L715.4,182.8 L716.4,182.8 L717.4,182.8 L718.4,182.8 L719.4,182.8 L720.4,182.8 L721.4,182.8 L722.4,182.8 L723.4,182.8 L724.4,182.8 L725.4,182.8 L726.4,182.8 L727.4,182.8 L728.4,182.8 L729.4,182.8 L730.4,182.8 L731.4,182.9 L732.4,183.0 L733.4,183.3 L734.4,183.6 L735.4,184.0 L736.4,184.4 L737.4,184.9 L738.4,185.3 L739.4,185.7 L740.4,186.1 L741.4,186.4 L742.4,186.6 L743.4,186.7 L744.4,186.9 L745.4,187.0 L746.4,187.1 L747.4,187.1 L748.4,187.2 L749.4,187.2 L750.4,187.3 L751.4,187.3 L752.4,187.3 L753.4,187.3 L754.4,187.2 L755.4,186.9 L756.4,186.3 L757.4,185.5 L758.4,184.7 L759.4,183.8 L760.4,183.0 L761.4,182.3 L762.4,181.7 L763.4,181.4 L764.4,181.4 L765.4,181.7 L766.4,182.1 L767.4,182.6 L768.4,183.2 L769.4,183.8 L770.4,184.5 L771.4,185.1 L772.4,185.7 L773.4,186.2 L774.4,186.5 L775.4,186.7 L776.4,186.9 L777.4,187.0 L778.4,187.0 L779.4,187.0 L780.4,187.0 L781.4,187.0 L782.4,186.9 L783.4,186.9 L784.4,186.9 L785.4,186.9 L786.4,186.8 L787.4,186.8 L788.4,186.8 L789.4,186.8 L790.4,186.8 L791.4,186.8 L792.4,186.7 L793.4,186.7 L794.4,186.7 L795.4,186.7 L796.4,186.7 L797.4,186.7 L798.4,186.7 L799.4,186.7 L800.4,186.7 L801.4,186.7 L802.4,186.7 L803.4,186.7 L804.4,186.8 L805.4,186.8 L806.4,186.9 L807.4,186.9 L808.4,187.0 L809.4,187.1 L810.4,187.1 L811.4,187.1 L812.4,187.2 L813.4,187.2 L814.4,187.2 L815.4,187.2 L816.4,187.2 L817.4,187.2 L818.4,187.2 L819.4,187.2 L820.4,187.2 L821.4,187.2 L822.4,187.2 L823.4,187.2 L824.4,187.2 L825.4,187.2 L826.4,187.2 L827.4,187.2 L828.4,187.2 L829.4,187.2 L830.4,187.2 L831.4,187.3 L832.4,187.3 L833.4,187.3 L834.4,187.2 L835.4,186.9 L836.4,186.4 L837.4,185.9 L838.4,185.3 L839.4,184.6 L840.4,184.0 L841.4,183.4 L842.4,182.8 L843.4,182.4 L844.4,182.1 L845.4,182.0 L846.4,182.1 L847.4,182.4 L848.4,182.9 L849.4,183.4 L850.4,184.1 L851.4,184.7 L852.4,185.4 L853.4,186.1 L854.4,186.7 L855.4,187.2 L856.4,187.6 L857.4,187.7 L858.4,187.8 L859.4,187.8 L860.4,187.8 L861.4,187.8 L862.4,187.8 L863.4,187.7 L864.4,187.7 L865.4,187.6 L866.4,187.6 L867.4,187.5 L868.4,187.5 L869.4,187.4 L870.4,187.4 L871.4,187.4 L872.4,187.4 L873.4,187.4 L874.4,187.4 L875.4,187.5 L876.4,187.5 L877.4,187.6 L878.4,187.7 L879.4,187.7 L880.4,187.8 L881.4,187.8 L882.4,187.8 L883.4,187.9 L884.4,187.9 L885.4,187.8 L886.4,187.8 L887.4,187.8 L888.4,187.8 L889.4,187.8 L890.4,187.8 L891.4,187.8 L892.4,187.7 L893.4,187.7 L894.4,187.7 L895.4,187.7 L896.4,187.7 L897.4,187.7 L898.4,187.7 L899.4,187.7 L900.4,187.6 L901.4,187.6 L902.4,187.5 L903.4,187.4 L904.4,187.2 L905.4,187.1 L906.4,185.9 L907.4,182.8 L908.4,178.1 L909.4,172.4 L910.4,166.2 L911.4,160.0 L912.4,154.2 L913.4,149.4 L914.4,146.0 L915.4,144.6 L916.4,145.6 L917.4,148.6 L918.4,153.1 L919.4,158.8 L920.4,165.0 L921.4,171.3 L922.4,177.2 L923.4,182.2 L924.4,185.8 L925.4,187.4 L926.4,187.7 L927.4,187.9 L928.4,187.9 L929.4,188.0 L930.4,188.0 L931.4,188.0 L932.4,188.0 L933.4,187.9 L934.4,187.9 L935.4,187.8 L936.4,187.8 L937.4,187.7 L938.4,187.6 L939.4,187.5 L940.4,187.5 L941.4,187.4 L942.4,187.3 L943.4,187.2 L944.4,187.1 L945.4,187.0 L946.4,186.9 L947.4,186.8 L948.4,186.7 L949.4,186.6 L950.4,186.5 L951.4,186.4 L952.4,186.4 L953.4,186.3 L954.4,186.3 L955.4,186.4 L956.4,186.5 L957.4,186.6 L958.4,186.8 L959.4,187.0 L960.4,187.1 L961.4,187.3 L962.4,187.5 L963.4,187.6 L964.4,187.7 L965.4,187.7 L966.4,187.7 L967.4,187.7 L968.4,187.7 L969.4,187.6 L970.4,187.4 L971.4,187.2 L972.4,186.8 L973.4,186.3 L974.4,185.7 L975.4,184.7 L976.4,183.4 L977.4,181.8 L978.4,180.0 L979.4,178.2 L980.4,176.3 L981.4,174.6 L982.4,173.0 L983.4,171.7 L984.4,170.7 L985.4,170.1 L986.4,170.0 L987.4,170.5 L988.4,171.2 L989.4,172.2 L990.4,173.4 L991.4,174.5 L992.4,175.6 L993.4,176.4 L994.4,176.9 L995.4,176.8 L996.4,175.1 L997.4,171.8 L998.4,167.1 L999.4,161.3 L1000.4,154.9 L1001.4,148.0 L1002.4,141.1 L1003.4,134.3 L1004.4,128.1 L1005.4,122.6 L1006.4,118.3 L1007.4,115.4 L1008.4,114.2 L1009.4,115.7 L1010.4,120.6 L1011.4,128.1 L1012.4,137.3 L1013.4,147.6 L1014.4,158.2 L1015.4,168.3 L1016.4,177.1 L1017.4,183.9 L1018.4,187.8 L1019.4,188.5 L1020.4,188.4 L1021.4,188.3 L1022.4,188.2 L1023.4,188.0 L1024.4,187.8 L1025.4,187.6 L1026.4,187.4 L1027.4,187.2 L1028.4,187.1 L1029.4,187.0 L1030.4,187.0 L1031.4,187.1 L1032.4,187.3 L1033.4,187.6 L1034.4,187.8 L1035.4,187.9 L1036.4,187.9 L1037.4,187.9 L1038.4,187.9 L1039.4,187.9 L1040.4,187.8 L1041.4,187.7 L1042.4,187.5 L1043.4,187.3 L1044.4,186.9 L1045.4,186.0 L1046.4,184.7 L1047.4,183.3 L1048.4,181.7 L1049.4,180.0 L1050.4,178.3 L1051.4,176.7 L1052.4,175.4 L1053.4,174.3 L1054.4,173.6 L1055.4,173.3 L1056.4,173.5 L1057.4,174.0 L1058.4,174.9 L1059.4,176.0 L1060.4,177.2 L1061.4,178.6 L1062.4,180.0 L1063.4,181.5 L1064.4,182.8 L1065.4,184.1 L1066.4,185.2 L1067.4,186.1 L1068.4,186.8 L1069.4,187.4 L1070.4,187.7 L1071.4,187.8 L1072.4,187.6 L1073.4,187.1 L1074.4,186.5 L1075.4,185.7 L1076.4,184.6 L1077.4,183.4 L1078.4,182.1 L1079.4,180.6 L1080.4,179.0 L1081.4,177.5 L1082.4,175.9 L1083.4,174.4 L1084.4,172.9 L1085.4,171.6 L1086.4,170.5 L1087.4,169.5 L1088.4,168.8 L1089.4,168.4 L1090.4,168.3 L1091.4,168.5 L1092.4,168.9 L1093.4,169.4 L1094.4,170.1 L1095.4,171.0 L1096.4,171.9 L1097.4,172.8 L1098.4,173.8 L1099.4,174.7 L1100.4,175.6 L1101.4,176.5 L1102.4,177.2 L1103.4,177.7 L1104.4,178.2 L1105.4,178.7 L1106.4,179.2 L1107.4,179.7 L1108.4,180.2 L1109.4,180.7 L1110.4,181.1 L1111.4,181.6 L1112.4,182.0 L1113.4,182.3 L1114.4,182.7 L1115.4,183.0 L1116.4,183.3 L1117.4,183.6 L1118.4,183.8 L1119.4,184.1 L1120.4,184.2 L1121.4,184.4 L1122.4,184.4 L1123.4,184.5 L1124.4,184.5 L1125.4,184.4 L1126.4,184.3 L1127.4,184.2 L1128.4,183.9 L1129.4,183.7 L1130.4,183.4 L1131.4,183.0 L1132.4,182.7 L1133.4,182.3 L1134.4,181.9 L1135.4,181.5 L1136.4,181.1 L1137.4,180.7 L1138.4,180.3 L1139.4,179.9 L1140.4,179.5 L1141.4,179.2 L1142.4,178.8 L1143.4,178.5 L1144.4,178.3 L1145.4,178.0 L1146.4,177.9 L1147.4,177.8 L1148.4,177.7 L1149.4,177.8 L1150.4,178.1 L1151.4,178.8 L1152.4,179.7 L1153.4,180.7 L1154.4,181.7 L1155.4,182.8 L1156.4,183.9 L1157.4,184.8 L1158.4,185.5 L1159.4,185.9 L1160.4,186.0 L1161.4,186.1 L1162.4,186.2 L1163.4,186.2 L1164.4,186.3 L1165.4,186.3 L1166.4,186.3 L1167.4,186.4 L1168.4,186.4 L1169.4,186.4 L1170.4,186.4 L1171.4,186.4 L1172.4,186.4 L1173.4,186.5 L1174.4,186.5 L1175.4,186.5 L1176.4,186.5 L1177.4,186.5 L1178.4,186.5 L1179.4,186.5 L1180.4,186.5 L1181.4,186.5 L1182.4,186.6 L1183.4,186.7 L1184.4,186.8 L1185.4,186.9 L1186.4,187.0 L1187.4,187.1 L1188.4,187.1 L1189.4,187.2 L1190.4,187.2 L1191.4,187.3 L1192.4,187.3 L1193.4,187.3 L1194.4,187.3 L1195.4,187.3 L1196.4,187.4 L1197.4,187.4 L1198.4,187.4 L1199.4,187.4 L1200.4,187.4 L1201.4,187.4 L1202.4,187.5 L1203.4,187.5 L1204.4,187.5 L1205.4,187.5 L1206.4,187.5 L1207.4,187.5 L1208.4,187.5 L1209.4,187.0 L1210.4,186.1 L1211.4,184.8 L1212.4,183.3 L1213.4,181.7 L1214.4,180.1 L1215.4,178.6 L1216.4,177.3 L1217.4,176.3 L1218.4,175.7 L1219.4,175.6 L1220.4,176.1 L1221.4,177.0 L1222.4,178.2 L1223.4,179.7 L1224.4,181.2 L1225.4,182.8 L1226.4,184.3 L1227.4,185.5 L1228.4,186.5 L1229.4,187.1 L1230.4,187.2 L1231.4,187.1 L1232.4,186.9 L1233.4,186.7 L1234.4,186.5 L1235.4,186.4 L1236.4,186.4 L1237.4,186.5 L1238.4,186.6 L1239.4,186.8 L1240.4,186.9 L1241.4,187.1 L1242.4,187.2 L1243.4,187.4 L1244.4,187.5 L1245.4,187.6 L1246.4,187.6 L1247.4,187.7 L1248.4,187.7 L1249.4,187.6 L1250.4,187.6 L1251.4,187.6 L1252.4,187.5 L1253.4,187.5 L1254.4,187.4 L1255.4,187.3 L1256.4,187.3 L1257.4,187.2 L1258.4,187.2 L1259.4,187.1 L1260.4,187.1 L1261.4,187.0 L1262.4,186.9 L1263.4,186.9 L1264.4,186.8 L1265.4,186.8 L1266.4,186.7 L1267.4,186.7 L1268.4,186.6 L1269.4,186.6 L1270.4,186.6 L1271.4,186.6 L1272.4,186.6 L1273.4,186.6 L1274.4,186.5 L1275.4,186.5 L1276.4,186.5 L1277.4,186.3 L1278.4,185.9 L1279.4,185.4 L1280.4,184.9 L1281.4,184.3 L1282.4,183.6 L1283.4,182.9 L1284.4,182.3 L1285.4,181.8 L1286.4,181.3 L1287.4,180.9 L1288.4,180.7 L1289.4,180.7 L1290.4,180.7 L1291.4,180.7 L1292.4,180.7 L1293.4,180.7 L1294.4,180.7 L1295.4,180.7 L1296.4,180.7 L1297.4,180.7 L1298.4,180.7 L1299.4,180.7 L1300.4,180.7 L1301.4,180.9 L1302.4,181.2 L1303.4,181.6 L1304.4,182.1 L1305.4,182.6 L1306.4,183.2 L1307.4,183.8 L1308.4,184.5 L1309.4,185.0 L1310.4,185.5 L1311.4,186.0 L1312.4,186.3 L1313.4,186.5 L1314.4,186.5 L1315.4,186.4 L1316.4,186.2 L1317.4,186.1 L1318.4,186.1 L1319.4,186.1 L1320.4,185.9 L1321.4,185.3 L1322.4,184.3 L1323.4,182.9 L1324.4,181.2 L1325.4,179.2 L1326.4,177.1 L1327.4,174.9 L1328.4,172.7 L1329.4,170.5 L1330.4,168.4 L1331.4,166.5 L1332.4,164.8 L1333.4,163.5 L1334.4,162.5 L1335.4,161.9 L1336.4,161.9 L1337.4,162.7 L1338.4,164.1 L1339.4,166.2 L1340.4,168.6 L1341.4,171.1 L1342.4,173.7 L1343.4,176.2 L1344.4,178.3 L1345.4,179.9 L1346.4,180.8 L1347.4,181.0 L1348.4,180.9 L1349.4,180.7 L1350.4,180.4 L1351.4,180.1 L1352.4,179.7 L1353.4,179.3 L1354.4,178.8 L1355.4,178.3 L1356.4,177.9 L1357.4,177.4 L1358.4,177.0 L1359.4,176.6" fill="none" stroke="#157d84" stroke-width="1.35"/><path d="M62.4,191.1 L62.4,184.8 63.4,184.1 64.4,183.4 65.4,182.6 66.4,181.8 67.4,181.0 68.4,180.2 69.4,179.4 70.4,178.7 71.4,178.1 72.4,177.7 73.4,177.4 74.4,177.2 75.4,177.3 76.4,177.6 77.4,178.0 78.4,178.7 79.4,179.4 80.4,180.1 81.4,180.9 82.4,181.6 83.4,182.2 84.4,182.7 85.4,183.0 86.4,183.0 87.4,182.8 88.4,182.5 89.4,182.0 90.4,181.4 91.4,180.8 92.4,180.0 93.4,179.3 94.4,178.5 95.4,177.7 96.4,177.0 97.4,176.4 98.4,175.8 99.4,175.2 100.4,174.5 101.4,173.8 102.4,173.1 103.4,172.4 104.4,171.8 105.4,171.2 106.4,170.6 107.4,170.2 108.4,169.9 109.4,169.7 110.4,169.8 111.4,170.5 112.4,172.0 113.4,174.0 114.4,176.3 115.4,178.7 116.4,181.1 117.4,183.4 118.4,185.2 119.4,186.5 120.4,187.0 121.4,187.0 122.4,186.9 123.4,186.7 124.4,186.5 125.4,186.3 126.4,186.0 127.4,185.7 128.4,185.4 129.4,185.0 130.4,184.6 131.4,184.2 132.4,183.8 133.4,183.3 134.4,182.8 135.4,182.1 136.4,181.4 137.4,180.7 138.4,180.0 139.4,179.4 140.4,178.8 141.4,178.4 142.4,178.0 143.4,177.8 144.4,177.8 145.4,178.1 146.4,178.5 147.4,179.1 148.4,179.9 149.4,180.7 150.4,181.6 151.4,182.4 152.4,183.2 153.4,183.9 154.4,184.5 155.4,184.9 156.4,185.0 157.4,185.2 158.4,185.2 159.4,185.3 160.4,185.4 161.4,185.4 162.4,185.4 163.4,185.5 164.4,185.5 165.4,185.5 166.4,185.5 167.4,185.5 168.4,185.5 169.4,185.4 170.4,185.2 171.4,185.0 172.4,184.7 173.4,184.4 174.4,184.1 175.4,183.7 176.4,183.5 177.4,183.2 178.4,183.1 179.4,183.0 180.4,183.0 181.4,183.1 182.4,183.3 183.4,183.6 184.4,183.9 185.4,184.2 186.4,184.5 187.4,184.8 188.4,185.0 189.4,185.3 190.4,185.4 191.4,185.5 192.4,185.6 193.4,185.7 194.4,185.7 195.4,185.7 196.4,185.8 197.4,185.8 198.4,185.8 199.4,185.8 200.4,185.8 201.4,185.8 202.4,185.8 203.4,185.9 204.4,185.9 205.4,185.9 206.4,185.9 207.4,186.0 208.4,186.0 209.4,185.9 210.4,185.1 211.4,183.6 212.4,181.4 213.4,178.8 214.4,175.8 215.4,172.5 216.4,169.1 217.4,165.8 218.4,162.6 219.4,159.7 220.4,157.2 221.4,155.2 222.4,153.4 223.4,151.5 224.4,149.7 225.4,147.9 226.4,146.3 227.4,144.7 228.4,143.2 229.4,141.8 230.4,140.6 231.4,139.5 232.4,138.6 233.4,137.9 234.4,137.4 235.4,137.1 236.4,137.1 237.4,137.4 238.4,138.0 239.4,138.9 240.4,140.2 241.4,142.0 242.4,144.1 243.4,146.7 244.4,149.7 245.4,153.2 246.4,157.3 247.4,162.4 248.4,171.1 249.4,180.6 250.4,186.4 251.4,186.8 252.4,186.7 253.4,186.3 254.4,185.7 255.4,184.5 256.4,182.9 257.4,181.2 258.4,179.7 259.4,178.5 260.4,177.8 261.4,177.9 262.4,178.4 263.4,179.2 264.4,180.3 265.4,181.5 266.4,182.7 267.4,184.0 268.4,185.2 269.4,186.1 270.4,186.9 271.4,187.3 272.4,187.4 273.4,187.5 274.4,187.5 275.4,187.4 276.4,187.4 277.4,187.3 278.4,187.3 279.4,187.2 280.4,187.1 281.4,187.1 282.4,187.0 283.4,187.0 284.4,186.9 285.4,186.9 286.4,187.1 287.4,186.4 288.4,184.3 289.4,181.4 290.4,177.8 291.4,174.1 292.4,170.6 293.4,167.6 294.4,165.6 295.4,164.8 296.4,165.6 297.4,167.6 298.4,170.7 299.4,174.2 300.4,178.0 301.4,181.5 302.4,184.6 303.4,186.7 304.4,187.5 305.4,187.5 306.4,187.5 307.4,187.5 308.4,187.5 309.4,187.5 310.4,187.5 311.4,187.5 312.4,187.5 313.4,187.5 314.4,187.5 315.4,187.5 316.4,187.5 317.4,187.5 318.4,187.4 319.4,187.4 320.4,187.4 321.4,187.2 322.4,186.3 323.4,185.2 324.4,183.8 325.4,182.4 326.4,180.8 327.4,179.4 328.4,178.0 329.4,176.9 330.4,176.2 331.4,175.8 332.4,176.0 333.4,176.8 334.4,178.0 335.4,179.6 336.4,181.3 337.4,183.0 338.4,184.6 339.4,186.0 340.4,187.0 341.4,187.4 342.4,187.1 343.4,186.2 344.4,186.1 345.4,186.1 346.4,186.1 347.4,186.1 348.4,186.1 349.4,186.1 350.4,186.1 351.4,186.2 352.4,186.2 353.4,186.2 354.4,186.2 355.4,186.2 356.4,186.2 357.4,186.2 358.4,186.1 359.4,186.1 360.4,186.1 361.4,186.0 362.4,185.9 363.4,185.9 364.4,185.9 365.4,185.8 366.4,185.8 367.4,185.8 368.4,185.8 369.4,185.7 370.4,185.7 371.4,185.7 372.4,185.7 373.4,185.7 374.4,185.7 375.4,185.7 376.4,185.7 377.4,185.7 378.4,185.7 379.4,185.7 380.4,185.7 381.4,185.7 382.4,185.7 383.4,185.7 384.4,185.6 385.4,185.6 386.4,185.6 387.4,185.6 388.4,185.6 389.4,185.5 390.4,185.5 391.4,185.5 392.4,185.6 393.4,185.6 394.4,185.7 395.4,185.8 396.4,185.8 397.4,185.9 398.4,186.0 399.4,186.0 400.4,185.9 401.4,185.3 402.4,184.2 403.4,182.5 404.4,180.4 405.4,178.0 406.4,175.3 407.4,172.5 408.4,169.6 409.4,166.8 410.4,164.0 411.4,161.4 412.4,159.1 413.4,156.5 414.4,153.6 415.4,150.5 416.4,147.3 417.4,144.2 418.4,141.1 419.4,138.2 420.4,135.5 421.4,133.2 422.4,131.3 423.4,130.0 424.4,129.3 425.4,129.5 426.4,131.8 427.4,136.0 428.4,141.6 429.4,148.2 430.4,155.4 431.4,162.7 432.4,169.7 433.4,176.0 434.4,181.1 435.4,184.6 436.4,186.0 437.4,186.0 438.4,185.7 439.4,185.2 440.4,184.3 441.4,183.2 442.4,182.0 443.4,180.7 444.4,179.5 445.4,178.4 446.4,177.6 447.4,177.1 448.4,177.1 449.4,177.6 450.4,178.7 451.4,180.0 452.4,181.6 453.4,183.1 454.4,184.5 455.4,185.6 456.4,186.3 457.4,186.4 458.4,186.3 459.4,186.2 460.4,186.1 461.4,186.1 462.4,186.1 463.4,186.2 464.4,186.3 465.4,186.5 466.4,186.7 467.4,186.8 468.4,187.0 469.4,187.2 470.4,187.3 471.4,187.4 472.4,187.5 473.4,187.2 474.4,185.9 475.4,183.6 476.4,180.7 477.4,177.4 478.4,174.0 479.4,170.7 480.4,167.9 481.4,165.8 482.4,164.7 483.4,164.8 484.4,166.1 485.4,168.3 486.4,171.2 487.4,174.4 488.4,177.7 489.4,180.9 490.4,183.6 491.4,185.6 492.4,186.7 493.4,186.8 494.4,186.8 495.4,186.8 496.4,186.7 497.4,186.7 498.4,186.7 499.4,186.6 500.4,186.6 501.4,186.5 502.4,186.5 503.4,186.3 504.4,186.1 505.4,185.9 506.4,185.4 507.4,184.7 508.4,183.9 509.4,183.0 510.4,182.0 511.4,181.1 512.4,180.2 513.4,179.4 514.4,178.9 515.4,178.6 516.4,178.5 517.4,178.5 518.4,178.5 519.4,178.5 520.4,178.5 521.4,178.5 522.4,178.5 523.4,178.5 524.4,178.5 525.4,178.5 526.4,178.5 527.4,178.5 528.4,178.5 529.4,178.5 530.4,178.5 531.4,178.5 532.4,178.5 533.4,178.5 534.4,178.6 535.4,179.0 536.4,179.5 537.4,180.2 538.4,181.1 539.4,181.9 540.4,182.8 541.4,183.7 542.4,184.5 543.4,185.2 544.4,185.7 545.4,185.9 546.4,186.0 547.4,186.0 548.4,185.9 549.4,185.8 550.4,185.7 551.4,185.6 552.4,185.5 553.4,185.5 554.4,185.4 555.4,185.4 556.4,185.5 557.4,185.6 558.4,185.7 559.4,185.9 560.4,186.1 561.4,186.2 562.4,186.4 563.4,186.6 564.4,186.7 565.4,186.8 566.4,186.9 567.4,186.6 568.4,185.5 569.4,184.3 570.4,183.9 571.4,183.8 572.4,183.6 573.4,183.5 574.4,183.4 575.4,183.3 576.4,183.2 577.4,183.2 578.4,183.1 579.4,183.1 580.4,183.1 581.4,183.0 582.4,183.0 583.4,183.0 584.4,183.0 585.4,183.0 586.4,183.0 587.4,183.0 588.4,182.9 589.4,182.9 590.4,182.8 591.4,182.6 592.4,182.4 593.4,182.2 594.4,181.9 595.4,181.5 596.4,181.0 597.4,180.4 598.4,179.6 599.4,177.1 600.4,172.9 601.4,167.4 602.4,160.7 603.4,153.4 604.4,145.7 605.4,137.8 606.4,130.2 607.4,123.1 608.4,116.9 609.4,111.9 610.4,108.4 611.4,106.7 612.4,107.1 613.4,109.6 614.4,113.7 615.4,119.3 616.4,126.0 617.4,133.5 618.4,141.6 619.4,150.0 620.4,158.3 621.4,166.3 622.4,173.7 623.4,180.2 624.4,185.5 625.4,187.3 626.4,186.8 627.4,185.7 628.4,184.2 629.4,182.5 630.4,180.8 631.4,179.1 632.4,177.6 633.4,176.4 634.4,175.7 635.4,175.6 636.4,176.1 637.4,176.9 638.4,178.0 639.4,179.3 640.4,180.7 641.4,182.1 642.4,183.4 643.4,184.5 644.4,185.3 645.4,185.8 646.4,186.0 647.4,186.1 648.4,186.1 649.4,186.2 650.4,186.2 651.4,186.3 652.4,186.3 653.4,186.3 654.4,186.4 655.4,186.4 656.4,186.4 657.4,186.4 658.4,186.4 659.4,186.4 660.4,186.1 661.4,184.6 662.4,182.4 663.4,179.7 664.4,176.6 665.4,173.5 666.4,170.6 667.4,168.1 668.4,166.3 669.4,165.5 670.4,165.9 671.4,167.2 672.4,169.4 673.4,172.0 674.4,175.0 675.4,178.0 676.4,180.9 677.4,183.3 678.4,185.0 679.4,185.9 680.4,186.0 681.4,186.1 682.4,186.1 683.4,186.1 684.4,186.1 685.4,186.1 686.4,186.2 687.4,186.2 688.4,186.3 689.4,186.4 690.4,186.4 691.4,186.5 692.4,186.5 693.4,186.6 694.4,186.6 695.4,186.3 696.4,185.6 697.4,184.5 698.4,183.2 699.4,181.8 700.4,180.4 701.4,179.1 702.4,178.0 703.4,177.3 704.4,177.0 705.4,177.2 706.4,177.9 707.4,178.9 708.4,180.1 709.4,181.4 710.4,182.8 711.4,184.1 712.4,185.2 713.4,186.1 714.4,186.7 715.4,186.9 716.4,187.1 717.4,187.2 718.4,187.2 719.4,187.2 720.4,187.2 721.4,187.2 722.4,187.1 723.4,187.1 724.4,187.0 725.4,186.9 726.4,186.8 727.4,186.8 728.4,186.7 729.4,186.6 730.4,186.5 731.4,186.4 732.4,186.4 733.4,186.3 734.4,186.3 735.4,186.2 736.4,186.2 737.4,186.1 738.4,186.0 739.4,185.8 740.4,185.5 741.4,185.2 742.4,184.7 743.4,184.0 744.4,183.3 745.4,182.6 746.4,181.8 747.4,181.2 748.4,180.6 749.4,180.2 750.4,180.0 751.4,180.1 752.4,180.4 753.4,181.0 754.4,181.7 755.4,182.5 756.4,183.4 757.4,184.2 758.4,184.9 759.4,185.5 760.4,185.8 761.4,185.9 762.4,186.0 763.4,186.1 764.4,186.1 765.4,186.1 766.4,186.1 767.4,186.1 768.4,186.1 769.4,186.2 770.4,186.2 771.4,186.3 772.4,186.3 773.4,186.4 774.4,186.4 775.4,186.4 776.4,186.4 777.4,186.5 778.4,186.5 779.4,186.5 780.4,186.5 781.4,186.4 782.4,186.4 783.4,186.4 784.4,186.3 785.4,186.2 786.4,186.2 787.4,186.0 788.4,184.4 789.4,179.5 790.4,172.1 791.4,162.9 792.4,152.6 793.4,141.8 794.4,131.3 795.4,121.9 796.4,114.1 797.4,108.8 798.4,106.6 799.4,108.1 800.4,113.0 801.4,120.5 802.4,129.9 803.4,140.4 804.4,151.4 805.4,162.1 806.4,171.8 807.4,179.7 808.4,185.2 809.4,187.4 810.4,187.4 811.4,187.3 812.4,187.2 813.4,186.7 814.4,185.8 815.4,184.5 816.4,183.0 817.4,181.4 818.4,179.8 819.4,178.5 820.4,177.5 821.4,177.0 822.4,177.1 823.4,177.7 824.4,178.6 825.4,179.7 826.4,181.0 827.4,182.3 828.4,183.6 829.4,184.7 830.4,185.6 831.4,186.1 832.4,186.5 833.4,186.7 834.4,186.8 835.4,186.9 836.4,186.9 837.4,187.0 838.4,187.0 839.4,187.1 840.4,187.1 841.4,187.1 842.4,187.1 843.4,187.1 844.4,187.2 845.4,187.2 846.4,187.2 847.4,187.1 848.4,186.0 849.4,184.1 850.4,181.5 851.4,178.5 852.4,175.3 853.4,172.3 854.4,169.5 855.4,167.5 856.4,166.2 857.4,166.1 858.4,167.1 859.4,168.9 860.4,171.3 861.4,174.1 862.4,177.0 863.4,179.9 864.4,182.4 865.4,184.4 866.4,185.5 867.4,185.7 868.4,185.7 869.4,185.6 870.4,185.6 871.4,185.5 872.4,185.5 873.4,185.6 874.4,185.7 875.4,185.8 876.4,186.0 877.4,186.2 878.4,186.3 879.4,186.5 880.4,186.6 881.4,186.7 882.4,186.8 883.4,186.6 884.4,185.9 885.4,184.8 886.4,183.3 887.4,181.7 888.4,180.1 889.4,178.7 890.4,177.6 891.4,177.1 892.4,177.1 893.4,177.6 894.4,178.4 895.4,179.5 896.4,180.8 897.4,182.1 898.4,183.3 899.4,184.5 900.4,185.4 901.4,186.0 902.4,186.5 903.4,186.9 904.4,187.2 905.4,187.4 906.4,187.5 907.4,187.5 908.4,187.5 909.4,187.3 910.4,187.1 911.4,186.9 912.4,186.6 913.4,186.3 914.4,186.1 915.4,185.9 916.4,185.7 917.4,185.5 918.4,185.5 919.4,185.4 920.4,185.4 921.4,185.4 922.4,185.4 923.4,185.4 924.4,185.4 925.4,185.4 926.4,185.4 927.4,185.4 928.4,185.4 929.4,185.4 930.4,185.0 931.4,184.3 932.4,183.3 933.4,182.3 934.4,181.2 935.4,180.3 936.4,179.5 937.4,179.1 938.4,179.0 939.4,179.5 940.4,180.5 941.4,181.7 942.4,183.0 943.4,184.4 944.4,185.6 945.4,186.6 946.4,187.2 947.4,187.3 948.4,187.2 949.4,187.1 950.4,186.9 951.4,186.6 952.4,186.3 953.4,186.0 954.4,185.6 955.4,185.0 956.4,184.4 957.4,183.8 958.4,183.1 959.4,182.5 960.4,182.0 961.4,181.6 962.4,181.4 963.4,181.7 964.4,182.5 965.4,183.2 966.4,183.8 967.4,184.4 968.4,184.9 969.4,185.4 970.4,185.7 971.4,185.9 972.4,182.4 973.4,175.9 974.4,170.3 975.4,164.4 976.4,158.4 977.4,152.5 978.4,146.8 979.4,141.3 980.4,136.3 981.4,132.0 982.4,128.3 983.4,125.6 984.4,123.9 985.4,123.4 986.4,124.6 987.4,127.6 988.4,131.9 989.4,137.3 990.4,143.4 991.4,149.8 992.4,156.2 993.4,162.2 994.4,167.4 995.4,171.6 996.4,174.2 997.4,175.3 998.4,175.8 999.4,176.3 1000.4,176.7 1001.4,177.0 1002.4,177.2 1003.4,177.4 1004.4,177.5 1005.4,177.6 1006.4,177.7 1007.4,177.8 1008.4,177.8 1009.4,177.9 1010.4,178.1 1011.4,178.4 1012.4,178.8 1013.4,179.4 1014.4,180.1 1015.4,180.9 1016.4,181.7 1017.4,182.5 1018.4,183.4 1019.4,184.2 1020.4,185.0 1021.4,185.6 1022.4,186.2 1023.4,186.8 1024.4,187.1 1025.4,187.2 1026.4,187.3 1027.4,187.4 1028.4,187.5 1029.4,187.5 1030.4,187.5 1031.4,187.6 1032.4,187.6 1033.4,187.6 1034.4,187.4 1035.4,186.5 1036.4,184.9 1037.4,182.7 1038.4,180.3 1039.4,177.7 1040.4,175.2 1041.4,173.1 1042.4,171.4 1043.4,170.5 1044.4,170.5 1045.4,171.4 1046.4,173.0 1047.4,175.2 1048.4,177.6 1049.4,180.1 1050.4,182.6 1051.4,184.7 1052.4,186.3 1053.4,187.2 1054.4,187.3 1055.4,187.3 1056.4,187.3 1057.4,187.3 1058.4,187.3 1059.4,187.3 1060.4,187.2 1061.4,187.2 1062.4,187.2 1063.4,187.1 1064.4,187.0 1065.4,186.9 1066.4,186.7 1067.4,186.5 1068.4,186.1 1069.4,185.6 1070.4,185.0 1071.4,184.1 1072.4,183.2 1073.4,182.2 1074.4,181.3 1075.4,180.4 1076.4,179.7 1077.4,179.2 1078.4,179.0 1079.4,179.2 1080.4,179.7 1081.4,180.6 1082.4,181.8 1083.4,183.0 1084.4,184.3 1085.4,185.5 1086.4,186.5 1087.4,187.2 1088.4,187.5 1089.4,187.4 1090.4,187.1 1091.4,186.6 1092.4,186.1 1093.4,185.7 1094.4,185.4 1095.4,185.5 1096.4,185.5 1097.4,185.7 1098.4,185.9 1099.4,186.0 1100.4,186.3 1101.4,186.5 1102.4,186.7 1103.4,186.9 1104.4,187.0 1105.4,187.1 1106.4,187.1 1107.4,187.1 1108.4,187.1 1109.4,187.0 1110.4,186.9 1111.4,186.8 1112.4,186.6 1113.4,186.5 1114.4,186.4 1115.4,186.3 1116.4,186.3 1117.4,186.2 1118.4,186.2 1119.4,186.2 1120.4,186.3 1121.4,186.3 1122.4,186.3 1123.4,186.4 1124.4,186.5 1125.4,186.5 1126.4,186.6 1127.4,186.6 1128.4,186.7 1129.4,186.7 1130.4,186.7 1131.4,186.6 1132.4,186.5 1133.4,186.4 1134.4,186.3 1135.4,186.1 1136.4,185.9 1137.4,185.8 1138.4,185.6 1139.4,185.5 1140.4,185.5 1141.4,185.4 1142.4,185.5 1143.4,185.7 1144.4,186.0 1145.4,186.0 1146.4,185.8 1147.4,185.5 1148.4,185.0 1149.4,184.3 1150.4,183.5 1151.4,182.5 1152.4,181.3 1153.4,180.0 1154.4,178.6 1155.4,177.0 1156.4,175.3 1157.4,173.4 1158.4,171.4 1159.4,169.3 1160.4,167.0 1161.4,164.1 1162.4,160.5 1163.4,156.4 1164.4,152.0 1165.4,147.6 1166.4,143.2 1167.4,139.0 1168.4,135.2 1169.4,132.1 1170.4,129.7 1171.4,128.2 1172.4,127.8 1173.4,128.6 1174.4,130.2 1175.4,132.7 1176.4,135.8 1177.4,139.3 1178.4,143.1 1179.4,147.0 1180.4,150.9 1181.4,154.5 1182.4,157.9 1183.4,160.6 1184.4,162.8 1185.4,164.6 1186.4,166.2 1187.4,167.6 1188.4,168.9 1189.4,170.0 1190.4,171.0 1191.4,171.9 1192.4,172.8 1193.4,173.6 1194.4,174.5 1195.4,175.4 1196.4,176.4 1197.4,177.4 1198.4,178.3 1199.4,179.3 1200.4,180.3 1201.4,181.3 1202.4,182.2 1203.4,183.0 1204.4,183.8 1205.4,184.4 1206.4,185.0 1207.4,185.5 1208.4,185.8 1209.4,186.0 1210.4,186.0 1211.4,186.0 1212.4,186.0 1213.4,186.0 1214.4,186.0 1215.4,186.0 1216.4,186.0 1217.4,186.0 1218.4,186.0 1219.4,186.0 1220.4,185.9 1221.4,185.4 1222.4,184.4 1223.4,183.1 1224.4,181.6 1225.4,180.0 1226.4,178.4 1227.4,177.0 1228.4,175.9 1229.4,175.3 1230.4,175.2 1231.4,175.2 1232.4,175.2 1233.4,175.2 1234.4,175.2 1235.4,175.2 1236.4,175.2 1237.4,175.2 1238.4,175.2 1239.4,175.2 1240.4,175.2 1241.4,175.2 1242.4,175.2 1243.4,175.4 1244.4,175.9 1245.4,176.6 1246.4,177.6 1247.4,178.7 1248.4,179.9 1249.4,181.2 1250.4,182.4 1251.4,183.6 1252.4,184.7 1253.4,185.6 1254.4,186.2 1255.4,186.6 1256.4,186.5 1257.4,185.9 1258.4,185.0 1259.4,183.8 1260.4,182.5 1261.4,181.1 1262.4,179.8 1263.4,178.6 1264.4,177.8 1265.4,177.3 1266.4,177.4 1267.4,178.0 1268.4,178.9 1269.4,180.1 1270.4,181.5 1271.4,183.0 1272.4,184.3 1273.4,185.5 1274.4,186.4 1275.4,186.8 1276.4,186.9 1277.4,186.7 1278.4,186.4 1279.4,186.1 1280.4,185.8 1281.4,185.6 1282.4,185.5 1283.4,185.5 1284.4,185.5 1285.4,185.5 1286.4,185.5 1287.4,185.5 1288.4,185.5 1289.4,185.6 1290.4,185.6 1291.4,185.6 1292.4,185.7 1293.4,185.8 1294.4,185.8 1295.4,185.9 1296.4,186.1 1297.4,186.3 1298.4,186.5 1299.4,186.7 1300.4,186.9 1301.4,187.0 1302.4,187.2 1303.4,187.3 1304.4,187.4 1305.4,187.5 1306.4,187.5 1307.4,187.4 1308.4,187.4 1309.4,187.2 1310.4,187.1 1311.4,186.9 1312.4,186.7 1313.4,186.5 1314.4,186.4 1315.4,186.2 1316.4,186.0 1317.4,185.8 1318.4,185.7 1319.4,185.5 1320.4,185.5 1321.4,185.5 1322.4,185.5 1323.4,185.6 1324.4,185.6 1325.4,185.6 1326.4,185.7 1327.4,185.7 1328.4,185.7 1329.4,185.8 1330.4,185.8 1331.4,185.8 1332.4,185.8 1333.4,185.6 1334.4,185.1 1335.4,184.4 1336.4,183.6 1337.4,182.5 1338.4,181.3 1339.4,179.9 1340.4,178.4 1341.4,176.7 1342.4,174.9 1343.4,173.0 1344.4,171.0 1345.4,168.9 1346.4,166.7 1347.4,164.5 1348.4,162.3 1349.4,160.0 1350.4,157.8 1351.4,155.5 1352.4,153.2 1353.4,151.0 1354.4,148.8 1355.4,146.7 1356.4,144.6 1357.4,142.6 1358.4,140.8 1359.4,139.0 L1359.4,191.1 Z" fill="rgba(103,84,179,0.75)"/><path d="M62.4,184.8 L63.4,184.1 L64.4,183.4 L65.4,182.6 L66.4,181.8 L67.4,181.0 L68.4,180.2 L69.4,179.4 L70.4,178.7 L71.4,178.1 L72.4,177.7 L73.4,177.4 L74.4,177.2 L75.4,177.3 L76.4,177.6 L77.4,178.0 L78.4,178.7 L79.4,179.4 L80.4,180.1 L81.4,180.9 L82.4,181.6 L83.4,182.2 L84.4,182.7 L85.4,183.0 L86.4,183.0 L87.4,182.8 L88.4,182.5 L89.4,182.0 L90.4,181.4 L91.4,180.8 L92.4,180.0 L93.4,179.3 L94.4,178.5 L95.4,177.7 L96.4,177.0 L97.4,176.4 L98.4,175.8 L99.4,175.2 L100.4,174.5 L101.4,173.8 L102.4,173.1 L103.4,172.4 L104.4,171.8 L105.4,171.2 L106.4,170.6 L107.4,170.2 L108.4,169.9 L109.4,169.7 L110.4,169.8 L111.4,170.5 L112.4,172.0 L113.4,174.0 L114.4,176.3 L115.4,178.7 L116.4,181.1 L117.4,183.4 L118.4,185.2 L119.4,186.5 L120.4,187.0 L121.4,187.0 L122.4,186.9 L123.4,186.7 L124.4,186.5 L125.4,186.3 L126.4,186.0 L127.4,185.7 L128.4,185.4 L129.4,185.0 L130.4,184.6 L131.4,184.2 L132.4,183.8 L133.4,183.3 L134.4,182.8 L135.4,182.1 L136.4,181.4 L137.4,180.7 L138.4,180.0 L139.4,179.4 L140.4,178.8 L141.4,178.4 L142.4,178.0 L143.4,177.8 L144.4,177.8 L145.4,178.1 L146.4,178.5 L147.4,179.1 L148.4,179.9 L149.4,180.7 L150.4,181.6 L151.4,182.4 L152.4,183.2 L153.4,183.9 L154.4,184.5 L155.4,184.9 L156.4,185.0 L157.4,185.2 L158.4,185.2 L159.4,185.3 L160.4,185.4 L161.4,185.4 L162.4,185.4 L163.4,185.5 L164.4,185.5 L165.4,185.5 L166.4,185.5 L167.4,185.5 L168.4,185.5 L169.4,185.4 L170.4,185.2 L171.4,185.0 L172.4,184.7 L173.4,184.4 L174.4,184.1 L175.4,183.7 L176.4,183.5 L177.4,183.2 L178.4,183.1 L179.4,183.0 L180.4,183.0 L181.4,183.1 L182.4,183.3 L183.4,183.6 L184.4,183.9 L185.4,184.2 L186.4,184.5 L187.4,184.8 L188.4,185.0 L189.4,185.3 L190.4,185.4 L191.4,185.5 L192.4,185.6 L193.4,185.7 L194.4,185.7 L195.4,185.7 L196.4,185.8 L197.4,185.8 L198.4,185.8 L199.4,185.8 L200.4,185.8 L201.4,185.8 L202.4,185.8 L203.4,185.9 L204.4,185.9 L205.4,185.9 L206.4,185.9 L207.4,186.0 L208.4,186.0 L209.4,185.9 L210.4,185.1 L211.4,183.6 L212.4,181.4 L213.4,178.8 L214.4,175.8 L215.4,172.5 L216.4,169.1 L217.4,165.8 L218.4,162.6 L219.4,159.7 L220.4,157.2 L221.4,155.2 L222.4,153.4 L223.4,151.5 L224.4,149.7 L225.4,147.9 L226.4,146.3 L227.4,144.7 L228.4,143.2 L229.4,141.8 L230.4,140.6 L231.4,139.5 L232.4,138.6 L233.4,137.9 L234.4,137.4 L235.4,137.1 L236.4,137.1 L237.4,137.4 L238.4,138.0 L239.4,138.9 L240.4,140.2 L241.4,142.0 L242.4,144.1 L243.4,146.7 L244.4,149.7 L245.4,153.2 L246.4,157.3 L247.4,162.4 L248.4,171.1 L249.4,180.6 L250.4,186.4 L251.4,186.8 L252.4,186.7 L253.4,186.3 L254.4,185.7 L255.4,184.5 L256.4,182.9 L257.4,181.2 L258.4,179.7 L259.4,178.5 L260.4,177.8 L261.4,177.9 L262.4,178.4 L263.4,179.2 L264.4,180.3 L265.4,181.5 L266.4,182.7 L267.4,184.0 L268.4,185.2 L269.4,186.1 L270.4,186.9 L271.4,187.3 L272.4,187.4 L273.4,187.5 L274.4,187.5 L275.4,187.4 L276.4,187.4 L277.4,187.3 L278.4,187.3 L279.4,187.2 L280.4,187.1 L281.4,187.1 L282.4,187.0 L283.4,187.0 L284.4,186.9 L285.4,186.9 L286.4,187.1 L287.4,186.4 L288.4,184.3 L289.4,181.4 L290.4,177.8 L291.4,174.1 L292.4,170.6 L293.4,167.6 L294.4,165.6 L295.4,164.8 L296.4,165.6 L297.4,167.6 L298.4,170.7 L299.4,174.2 L300.4,178.0 L301.4,181.5 L302.4,184.6 L303.4,186.7 L304.4,187.5 L305.4,187.5 L306.4,187.5 L307.4,187.5 L308.4,187.5 L309.4,187.5 L310.4,187.5 L311.4,187.5 L312.4,187.5 L313.4,187.5 L314.4,187.5 L315.4,187.5 L316.4,187.5 L317.4,187.5 L318.4,187.4 L319.4,187.4 L320.4,187.4 L321.4,187.2 L322.4,186.3 L323.4,185.2 L324.4,183.8 L325.4,182.4 L326.4,180.8 L327.4,179.4 L328.4,178.0 L329.4,176.9 L330.4,176.2 L331.4,175.8 L332.4,176.0 L333.4,176.8 L334.4,178.0 L335.4,179.6 L336.4,181.3 L337.4,183.0 L338.4,184.6 L339.4,186.0 L340.4,187.0 L341.4,187.4 L342.4,187.1 L343.4,186.2 L344.4,186.1 L345.4,186.1 L346.4,186.1 L347.4,186.1 L348.4,186.1 L349.4,186.1 L350.4,186.1 L351.4,186.2 L352.4,186.2 L353.4,186.2 L354.4,186.2 L355.4,186.2 L356.4,186.2 L357.4,186.2 L358.4,186.1 L359.4,186.1 L360.4,186.1 L361.4,186.0 L362.4,185.9 L363.4,185.9 L364.4,185.9 L365.4,185.8 L366.4,185.8 L367.4,185.8 L368.4,185.8 L369.4,185.7 L370.4,185.7 L371.4,185.7 L372.4,185.7 L373.4,185.7 L374.4,185.7 L375.4,185.7 L376.4,185.7 L377.4,185.7 L378.4,185.7 L379.4,185.7 L380.4,185.7 L381.4,185.7 L382.4,185.7 L383.4,185.7 L384.4,185.6 L385.4,185.6 L386.4,185.6 L387.4,185.6 L388.4,185.6 L389.4,185.5 L390.4,185.5 L391.4,185.5 L392.4,185.6 L393.4,185.6 L394.4,185.7 L395.4,185.8 L396.4,185.8 L397.4,185.9 L398.4,186.0 L399.4,186.0 L400.4,185.9 L401.4,185.3 L402.4,184.2 L403.4,182.5 L404.4,180.4 L405.4,178.0 L406.4,175.3 L407.4,172.5 L408.4,169.6 L409.4,166.8 L410.4,164.0 L411.4,161.4 L412.4,159.1 L413.4,156.5 L414.4,153.6 L415.4,150.5 L416.4,147.3 L417.4,144.2 L418.4,141.1 L419.4,138.2 L420.4,135.5 L421.4,133.2 L422.4,131.3 L423.4,130.0 L424.4,129.3 L425.4,129.5 L426.4,131.8 L427.4,136.0 L428.4,141.6 L429.4,148.2 L430.4,155.4 L431.4,162.7 L432.4,169.7 L433.4,176.0 L434.4,181.1 L435.4,184.6 L436.4,186.0 L437.4,186.0 L438.4,185.7 L439.4,185.2 L440.4,184.3 L441.4,183.2 L442.4,182.0 L443.4,180.7 L444.4,179.5 L445.4,178.4 L446.4,177.6 L447.4,177.1 L448.4,177.1 L449.4,177.6 L450.4,178.7 L451.4,180.0 L452.4,181.6 L453.4,183.1 L454.4,184.5 L455.4,185.6 L456.4,186.3 L457.4,186.4 L458.4,186.3 L459.4,186.2 L460.4,186.1 L461.4,186.1 L462.4,186.1 L463.4,186.2 L464.4,186.3 L465.4,186.5 L466.4,186.7 L467.4,186.8 L468.4,187.0 L469.4,187.2 L470.4,187.3 L471.4,187.4 L472.4,187.5 L473.4,187.2 L474.4,185.9 L475.4,183.6 L476.4,180.7 L477.4,177.4 L478.4,174.0 L479.4,170.7 L480.4,167.9 L481.4,165.8 L482.4,164.7 L483.4,164.8 L484.4,166.1 L485.4,168.3 L486.4,171.2 L487.4,174.4 L488.4,177.7 L489.4,180.9 L490.4,183.6 L491.4,185.6 L492.4,186.7 L493.4,186.8 L494.4,186.8 L495.4,186.8 L496.4,186.7 L497.4,186.7 L498.4,186.7 L499.4,186.6 L500.4,186.6 L501.4,186.5 L502.4,186.5 L503.4,186.3 L504.4,186.1 L505.4,185.9 L506.4,185.4 L507.4,184.7 L508.4,183.9 L509.4,183.0 L510.4,182.0 L511.4,181.1 L512.4,180.2 L513.4,179.4 L514.4,178.9 L515.4,178.6 L516.4,178.5 L517.4,178.5 L518.4,178.5 L519.4,178.5 L520.4,178.5 L521.4,178.5 L522.4,178.5 L523.4,178.5 L524.4,178.5 L525.4,178.5 L526.4,178.5 L527.4,178.5 L528.4,178.5 L529.4,178.5 L530.4,178.5 L531.4,178.5 L532.4,178.5 L533.4,178.5 L534.4,178.6 L535.4,179.0 L536.4,179.5 L537.4,180.2 L538.4,181.1 L539.4,181.9 L540.4,182.8 L541.4,183.7 L542.4,184.5 L543.4,185.2 L544.4,185.7 L545.4,185.9 L546.4,186.0 L547.4,186.0 L548.4,185.9 L549.4,185.8 L550.4,185.7 L551.4,185.6 L552.4,185.5 L553.4,185.5 L554.4,185.4 L555.4,185.4 L556.4,185.5 L557.4,185.6 L558.4,185.7 L559.4,185.9 L560.4,186.1 L561.4,186.2 L562.4,186.4 L563.4,186.6 L564.4,186.7 L565.4,186.8 L566.4,186.9 L567.4,186.6 L568.4,185.5 L569.4,184.3 L570.4,183.9 L571.4,183.8 L572.4,183.6 L573.4,183.5 L574.4,183.4 L575.4,183.3 L576.4,183.2 L577.4,183.2 L578.4,183.1 L579.4,183.1 L580.4,183.1 L581.4,183.0 L582.4,183.0 L583.4,183.0 L584.4,183.0 L585.4,183.0 L586.4,183.0 L587.4,183.0 L588.4,182.9 L589.4,182.9 L590.4,182.8 L591.4,182.6 L592.4,182.4 L593.4,182.2 L594.4,181.9 L595.4,181.5 L596.4,181.0 L597.4,180.4 L598.4,179.6 L599.4,177.1 L600.4,172.9 L601.4,167.4 L602.4,160.7 L603.4,153.4 L604.4,145.7 L605.4,137.8 L606.4,130.2 L607.4,123.1 L608.4,116.9 L609.4,111.9 L610.4,108.4 L611.4,106.7 L612.4,107.1 L613.4,109.6 L614.4,113.7 L615.4,119.3 L616.4,126.0 L617.4,133.5 L618.4,141.6 L619.4,150.0 L620.4,158.3 L621.4,166.3 L622.4,173.7 L623.4,180.2 L624.4,185.5 L625.4,187.3 L626.4,186.8 L627.4,185.7 L628.4,184.2 L629.4,182.5 L630.4,180.8 L631.4,179.1 L632.4,177.6 L633.4,176.4 L634.4,175.7 L635.4,175.6 L636.4,176.1 L637.4,176.9 L638.4,178.0 L639.4,179.3 L640.4,180.7 L641.4,182.1 L642.4,183.4 L643.4,184.5 L644.4,185.3 L645.4,185.8 L646.4,186.0 L647.4,186.1 L648.4,186.1 L649.4,186.2 L650.4,186.2 L651.4,186.3 L652.4,186.3 L653.4,186.3 L654.4,186.4 L655.4,186.4 L656.4,186.4 L657.4,186.4 L658.4,186.4 L659.4,186.4 L660.4,186.1 L661.4,184.6 L662.4,182.4 L663.4,179.7 L664.4,176.6 L665.4,173.5 L666.4,170.6 L667.4,168.1 L668.4,166.3 L669.4,165.5 L670.4,165.9 L671.4,167.2 L672.4,169.4 L673.4,172.0 L674.4,175.0 L675.4,178.0 L676.4,180.9 L677.4,183.3 L678.4,185.0 L679.4,185.9 L680.4,186.0 L681.4,186.1 L682.4,186.1 L683.4,186.1 L684.4,186.1 L685.4,186.1 L686.4,186.2 L687.4,186.2 L688.4,186.3 L689.4,186.4 L690.4,186.4 L691.4,186.5 L692.4,186.5 L693.4,186.6 L694.4,186.6 L695.4,186.3 L696.4,185.6 L697.4,184.5 L698.4,183.2 L699.4,181.8 L700.4,180.4 L701.4,179.1 L702.4,178.0 L703.4,177.3 L704.4,177.0 L705.4,177.2 L706.4,177.9 L707.4,178.9 L708.4,180.1 L709.4,181.4 L710.4,182.8 L711.4,184.1 L712.4,185.2 L713.4,186.1 L714.4,186.7 L715.4,186.9 L716.4,187.1 L717.4,187.2 L718.4,187.2 L719.4,187.2 L720.4,187.2 L721.4,187.2 L722.4,187.1 L723.4,187.1 L724.4,187.0 L725.4,186.9 L726.4,186.8 L727.4,186.8 L728.4,186.7 L729.4,186.6 L730.4,186.5 L731.4,186.4 L732.4,186.4 L733.4,186.3 L734.4,186.3 L735.4,186.2 L736.4,186.2 L737.4,186.1 L738.4,186.0 L739.4,185.8 L740.4,185.5 L741.4,185.2 L742.4,184.7 L743.4,184.0 L744.4,183.3 L745.4,182.6 L746.4,181.8 L747.4,181.2 L748.4,180.6 L749.4,180.2 L750.4,180.0 L751.4,180.1 L752.4,180.4 L753.4,181.0 L754.4,181.7 L755.4,182.5 L756.4,183.4 L757.4,184.2 L758.4,184.9 L759.4,185.5 L760.4,185.8 L761.4,185.9 L762.4,186.0 L763.4,186.1 L764.4,186.1 L765.4,186.1 L766.4,186.1 L767.4,186.1 L768.4,186.1 L769.4,186.2 L770.4,186.2 L771.4,186.3 L772.4,186.3 L773.4,186.4 L774.4,186.4 L775.4,186.4 L776.4,186.4 L777.4,186.5 L778.4,186.5 L779.4,186.5 L780.4,186.5 L781.4,186.4 L782.4,186.4 L783.4,186.4 L784.4,186.3 L785.4,186.2 L786.4,186.2 L787.4,186.0 L788.4,184.4 L789.4,179.5 L790.4,172.1 L791.4,162.9 L792.4,152.6 L793.4,141.8 L794.4,131.3 L795.4,121.9 L796.4,114.1 L797.4,108.8 L798.4,106.6 L799.4,108.1 L800.4,113.0 L801.4,120.5 L802.4,129.9 L803.4,140.4 L804.4,151.4 L805.4,162.1 L806.4,171.8 L807.4,179.7 L808.4,185.2 L809.4,187.4 L810.4,187.4 L811.4,187.3 L812.4,187.2 L813.4,186.7 L814.4,185.8 L815.4,184.5 L816.4,183.0 L817.4,181.4 L818.4,179.8 L819.4,178.5 L820.4,177.5 L821.4,177.0 L822.4,177.1 L823.4,177.7 L824.4,178.6 L825.4,179.7 L826.4,181.0 L827.4,182.3 L828.4,183.6 L829.4,184.7 L830.4,185.6 L831.4,186.1 L832.4,186.5 L833.4,186.7 L834.4,186.8 L835.4,186.9 L836.4,186.9 L837.4,187.0 L838.4,187.0 L839.4,187.1 L840.4,187.1 L841.4,187.1 L842.4,187.1 L843.4,187.1 L844.4,187.2 L845.4,187.2 L846.4,187.2 L847.4,187.1 L848.4,186.0 L849.4,184.1 L850.4,181.5 L851.4,178.5 L852.4,175.3 L853.4,172.3 L854.4,169.5 L855.4,167.5 L856.4,166.2 L857.4,166.1 L858.4,167.1 L859.4,168.9 L860.4,171.3 L861.4,174.1 L862.4,177.0 L863.4,179.9 L864.4,182.4 L865.4,184.4 L866.4,185.5 L867.4,185.7 L868.4,185.7 L869.4,185.6 L870.4,185.6 L871.4,185.5 L872.4,185.5 L873.4,185.6 L874.4,185.7 L875.4,185.8 L876.4,186.0 L877.4,186.2 L878.4,186.3 L879.4,186.5 L880.4,186.6 L881.4,186.7 L882.4,186.8 L883.4,186.6 L884.4,185.9 L885.4,184.8 L886.4,183.3 L887.4,181.7 L888.4,180.1 L889.4,178.7 L890.4,177.6 L891.4,177.1 L892.4,177.1 L893.4,177.6 L894.4,178.4 L895.4,179.5 L896.4,180.8 L897.4,182.1 L898.4,183.3 L899.4,184.5 L900.4,185.4 L901.4,186.0 L902.4,186.5 L903.4,186.9 L904.4,187.2 L905.4,187.4 L906.4,187.5 L907.4,187.5 L908.4,187.5 L909.4,187.3 L910.4,187.1 L911.4,186.9 L912.4,186.6 L913.4,186.3 L914.4,186.1 L915.4,185.9 L916.4,185.7 L917.4,185.5 L918.4,185.5 L919.4,185.4 L920.4,185.4 L921.4,185.4 L922.4,185.4 L923.4,185.4 L924.4,185.4 L925.4,185.4 L926.4,185.4 L927.4,185.4 L928.4,185.4 L929.4,185.4 L930.4,185.0 L931.4,184.3 L932.4,183.3 L933.4,182.3 L934.4,181.2 L935.4,180.3 L936.4,179.5 L937.4,179.1 L938.4,179.0 L939.4,179.5 L940.4,180.5 L941.4,181.7 L942.4,183.0 L943.4,184.4 L944.4,185.6 L945.4,186.6 L946.4,187.2 L947.4,187.3 L948.4,187.2 L949.4,187.1 L950.4,186.9 L951.4,186.6 L952.4,186.3 L953.4,186.0 L954.4,185.6 L955.4,185.0 L956.4,184.4 L957.4,183.8 L958.4,183.1 L959.4,182.5 L960.4,182.0 L961.4,181.6 L962.4,181.4 L963.4,181.7 L964.4,182.5 L965.4,183.2 L966.4,183.8 L967.4,184.4 L968.4,184.9 L969.4,185.4 L970.4,185.7 L971.4,185.9 L972.4,182.4 L973.4,175.9 L974.4,170.3 L975.4,164.4 L976.4,158.4 L977.4,152.5 L978.4,146.8 L979.4,141.3 L980.4,136.3 L981.4,132.0 L982.4,128.3 L983.4,125.6 L984.4,123.9 L985.4,123.4 L986.4,124.6 L987.4,127.6 L988.4,131.9 L989.4,137.3 L990.4,143.4 L991.4,149.8 L992.4,156.2 L993.4,162.2 L994.4,167.4 L995.4,171.6 L996.4,174.2 L997.4,175.3 L998.4,175.8 L999.4,176.3 L1000.4,176.7 L1001.4,177.0 L1002.4,177.2 L1003.4,177.4 L1004.4,177.5 L1005.4,177.6 L1006.4,177.7 L1007.4,177.8 L1008.4,177.8 L1009.4,177.9 L1010.4,178.1 L1011.4,178.4 L1012.4,178.8 L1013.4,179.4 L1014.4,180.1 L1015.4,180.9 L1016.4,181.7 L1017.4,182.5 L1018.4,183.4 L1019.4,184.2 L1020.4,185.0 L1021.4,185.6 L1022.4,186.2 L1023.4,186.8 L1024.4,187.1 L1025.4,187.2 L1026.4,187.3 L1027.4,187.4 L1028.4,187.5 L1029.4,187.5 L1030.4,187.5 L1031.4,187.6 L1032.4,187.6 L1033.4,187.6 L1034.4,187.4 L1035.4,186.5 L1036.4,184.9 L1037.4,182.7 L1038.4,180.3 L1039.4,177.7 L1040.4,175.2 L1041.4,173.1 L1042.4,171.4 L1043.4,170.5 L1044.4,170.5 L1045.4,171.4 L1046.4,173.0 L1047.4,175.2 L1048.4,177.6 L1049.4,180.1 L1050.4,182.6 L1051.4,184.7 L1052.4,186.3 L1053.4,187.2 L1054.4,187.3 L1055.4,187.3 L1056.4,187.3 L1057.4,187.3 L1058.4,187.3 L1059.4,187.3 L1060.4,187.2 L1061.4,187.2 L1062.4,187.2 L1063.4,187.1 L1064.4,187.0 L1065.4,186.9 L1066.4,186.7 L1067.4,186.5 L1068.4,186.1 L1069.4,185.6 L1070.4,185.0 L1071.4,184.1 L1072.4,183.2 L1073.4,182.2 L1074.4,181.3 L1075.4,180.4 L1076.4,179.7 L1077.4,179.2 L1078.4,179.0 L1079.4,179.2 L1080.4,179.7 L1081.4,180.6 L1082.4,181.8 L1083.4,183.0 L1084.4,184.3 L1085.4,185.5 L1086.4,186.5 L1087.4,187.2 L1088.4,187.5 L1089.4,187.4 L1090.4,187.1 L1091.4,186.6 L1092.4,186.1 L1093.4,185.7 L1094.4,185.4 L1095.4,185.5 L1096.4,185.5 L1097.4,185.7 L1098.4,185.9 L1099.4,186.0 L1100.4,186.3 L1101.4,186.5 L1102.4,186.7 L1103.4,186.9 L1104.4,187.0 L1105.4,187.1 L1106.4,187.1 L1107.4,187.1 L1108.4,187.1 L1109.4,187.0 L1110.4,186.9 L1111.4,186.8 L1112.4,186.6 L1113.4,186.5 L1114.4,186.4 L1115.4,186.3 L1116.4,186.3 L1117.4,186.2 L1118.4,186.2 L1119.4,186.2 L1120.4,186.3 L1121.4,186.3 L1122.4,186.3 L1123.4,186.4 L1124.4,186.5 L1125.4,186.5 L1126.4,186.6 L1127.4,186.6 L1128.4,186.7 L1129.4,186.7 L1130.4,186.7 L1131.4,186.6 L1132.4,186.5 L1133.4,186.4 L1134.4,186.3 L1135.4,186.1 L1136.4,185.9 L1137.4,185.8 L1138.4,185.6 L1139.4,185.5 L1140.4,185.5 L1141.4,185.4 L1142.4,185.5 L1143.4,185.7 L1144.4,186.0 L1145.4,186.0 L1146.4,185.8 L1147.4,185.5 L1148.4,185.0 L1149.4,184.3 L1150.4,183.5 L1151.4,182.5 L1152.4,181.3 L1153.4,180.0 L1154.4,178.6 L1155.4,177.0 L1156.4,175.3 L1157.4,173.4 L1158.4,171.4 L1159.4,169.3 L1160.4,167.0 L1161.4,164.1 L1162.4,160.5 L1163.4,156.4 L1164.4,152.0 L1165.4,147.6 L1166.4,143.2 L1167.4,139.0 L1168.4,135.2 L1169.4,132.1 L1170.4,129.7 L1171.4,128.2 L1172.4,127.8 L1173.4,128.6 L1174.4,130.2 L1175.4,132.7 L1176.4,135.8 L1177.4,139.3 L1178.4,143.1 L1179.4,147.0 L1180.4,150.9 L1181.4,154.5 L1182.4,157.9 L1183.4,160.6 L1184.4,162.8 L1185.4,164.6 L1186.4,166.2 L1187.4,167.6 L1188.4,168.9 L1189.4,170.0 L1190.4,171.0 L1191.4,171.9 L1192.4,172.8 L1193.4,173.6 L1194.4,174.5 L1195.4,175.4 L1196.4,176.4 L1197.4,177.4 L1198.4,178.3 L1199.4,179.3 L1200.4,180.3 L1201.4,181.3 L1202.4,182.2 L1203.4,183.0 L1204.4,183.8 L1205.4,184.4 L1206.4,185.0 L1207.4,185.5 L1208.4,185.8 L1209.4,186.0 L1210.4,186.0 L1211.4,186.0 L1212.4,186.0 L1213.4,186.0 L1214.4,186.0 L1215.4,186.0 L1216.4,186.0 L1217.4,186.0 L1218.4,186.0 L1219.4,186.0 L1220.4,185.9 L1221.4,185.4 L1222.4,184.4 L1223.4,183.1 L1224.4,181.6 L1225.4,180.0 L1226.4,178.4 L1227.4,177.0 L1228.4,175.9 L1229.4,175.3 L1230.4,175.2 L1231.4,175.2 L1232.4,175.2 L1233.4,175.2 L1234.4,175.2 L1235.4,175.2 L1236.4,175.2 L1237.4,175.2 L1238.4,175.2 L1239.4,175.2 L1240.4,175.2 L1241.4,175.2 L1242.4,175.2 L1243.4,175.4 L1244.4,175.9 L1245.4,176.6 L1246.4,177.6 L1247.4,178.7 L1248.4,179.9 L1249.4,181.2 L1250.4,182.4 L1251.4,183.6 L1252.4,184.7 L1253.4,185.6 L1254.4,186.2 L1255.4,186.6 L1256.4,186.5 L1257.4,185.9 L1258.4,185.0 L1259.4,183.8 L1260.4,182.5 L1261.4,181.1 L1262.4,179.8 L1263.4,178.6 L1264.4,177.8 L1265.4,177.3 L1266.4,177.4 L1267.4,178.0 L1268.4,178.9 L1269.4,180.1 L1270.4,181.5 L1271.4,183.0 L1272.4,184.3 L1273.4,185.5 L1274.4,186.4 L1275.4,186.8 L1276.4,186.9 L1277.4,186.7 L1278.4,186.4 L1279.4,186.1 L1280.4,185.8 L1281.4,185.6 L1282.4,185.5 L1283.4,185.5 L1284.4,185.5 L1285.4,185.5 L1286.4,185.5 L1287.4,185.5 L1288.4,185.5 L1289.4,185.6 L1290.4,185.6 L1291.4,185.6 L1292.4,185.7 L1293.4,185.8 L1294.4,185.8 L1295.4,185.9 L1296.4,186.1 L1297.4,186.3 L1298.4,186.5 L1299.4,186.7 L1300.4,186.9 L1301.4,187.0 L1302.4,187.2 L1303.4,187.3 L1304.4,187.4 L1305.4,187.5 L1306.4,187.5 L1307.4,187.4 L1308.4,187.4 L1309.4,187.2 L1310.4,187.1 L1311.4,186.9 L1312.4,186.7 L1313.4,186.5 L1314.4,186.4 L1315.4,186.2 L1316.4,186.0 L1317.4,185.8 L1318.4,185.7 L1319.4,185.5 L1320.4,185.5 L1321.4,185.5 L1322.4,185.5 L1323.4,185.6 L1324.4,185.6 L1325.4,185.6 L1326.4,185.7 L1327.4,185.7 L1328.4,185.7 L1329.4,185.8 L1330.4,185.8 L1331.4,185.8 L1332.4,185.8 L1333.4,185.6 L1334.4,185.1 L1335.4,184.4 L1336.4,183.6 L1337.4,182.5 L1338.4,181.3 L1339.4,179.9 L1340.4,178.4 L1341.4,176.7 L1342.4,174.9 L1343.4,173.0 L1344.4,171.0 L1345.4,168.9 L1346.4,166.7 L1347.4,164.5 L1348.4,162.3 L1349.4,160.0 L1350.4,157.8 L1351.4,155.5 L1352.4,153.2 L1353.4,151.0 L1354.4,148.8 L1355.4,146.7 L1356.4,144.6 L1357.4,142.6 L1358.4,140.8 L1359.4,139.0" fill="none" stroke="#5e4aae" stroke-width="1.35"/><path d="M62.4,191.1 L62.4,189.8 63.4,189.8 64.4,189.8 65.4,189.8 66.4,189.8 67.4,189.8 68.4,189.8 69.4,189.8 70.4,189.8 71.4,189.8 72.4,189.8 73.4,189.8 74.4,189.8 75.4,189.8 76.4,189.8 77.4,189.8 78.4,189.7 79.4,189.7 80.4,189.7 81.4,189.7 82.4,189.7 83.4,189.6 84.4,189.6 85.4,189.6 86.4,189.6 87.4,189.6 88.4,189.6 89.4,189.6 90.4,189.6 91.4,189.6 92.4,189.6 93.4,189.6 94.4,189.6 95.4,189.6 96.4,189.6 97.4,189.6 98.4,189.6 99.4,189.6 100.4,189.5 101.4,189.3 102.4,189.1 103.4,188.9 104.4,188.7 105.4,188.5 106.4,188.4 107.4,188.2 108.4,188.1 109.4,188.0 110.4,188.0 111.4,188.1 112.4,188.2 113.4,188.4 114.4,188.6 115.4,188.9 116.4,189.1 117.4,189.4 118.4,189.6 119.4,189.8 120.4,190.0 121.4,190.1 122.4,190.1 123.4,190.1 124.4,190.1 125.4,190.1 126.4,190.1 127.4,190.1 128.4,190.1 129.4,190.1 130.4,190.0 131.4,190.0 132.4,190.0 133.4,190.0 134.4,189.9 135.4,189.9 136.4,189.9 137.4,189.8 138.4,189.8 139.4,189.7 140.4,189.7 141.4,189.6 142.4,189.6 143.4,189.6 144.4,189.6 145.4,189.6 146.4,189.6 147.4,189.6 148.4,189.6 149.4,189.6 150.4,189.6 151.4,189.6 152.4,189.6 153.4,189.6 154.4,189.6 155.4,189.6 156.4,189.6 157.4,189.6 158.4,189.6 159.4,189.6 160.4,189.6 161.4,189.6 162.4,189.6 163.4,189.6 164.4,189.5 165.4,189.5 166.4,189.5 167.4,189.5 168.4,189.5 169.4,189.5 170.4,189.5 171.4,189.5 172.4,189.5 173.4,189.6 174.4,189.6 175.4,189.6 176.4,189.6 177.4,189.6 178.4,189.6 179.4,189.7 180.4,189.7 181.4,189.7 182.4,189.7 183.4,189.7 184.4,189.7 185.4,189.7 186.4,189.7 187.4,189.7 188.4,189.7 189.4,189.7 190.4,189.7 191.4,189.7 192.4,189.8 193.4,189.8 194.4,189.8 195.4,189.9 196.4,189.9 197.4,189.9 198.4,190.0 199.4,190.0 200.4,190.0 201.4,190.0 202.4,190.0 203.4,190.0 204.4,190.0 205.4,190.0 206.4,190.0 207.4,190.0 208.4,189.9 209.4,189.9 210.4,189.9 211.4,189.8 212.4,189.8 213.4,189.8 214.4,189.7 215.4,189.7 216.4,189.7 217.4,189.7 218.4,189.7 219.4,189.6 220.4,189.6 221.4,189.6 222.4,189.6 223.4,189.6 224.4,189.6 225.4,189.6 226.4,189.6 227.4,189.6 228.4,189.6 229.4,189.6 230.4,189.6 231.4,189.6 232.4,189.6 233.4,189.6 234.4,189.6 235.4,189.6 236.4,189.6 237.4,189.6 238.4,189.7 239.4,189.7 240.4,189.7 241.4,189.8 242.4,189.8 243.4,189.9 244.4,189.9 245.4,190.0 246.4,190.0 247.4,190.0 248.4,190.1 249.4,190.1 250.4,190.1 251.4,190.1 252.4,190.0 253.4,190.0 254.4,189.9 255.4,189.9 256.4,189.8 257.4,189.7 258.4,189.7 259.4,189.6 260.4,189.6 261.4,189.5 262.4,189.5 263.4,189.6 264.4,189.6 265.4,189.6 266.4,189.7 267.4,189.7 268.4,189.7 269.4,189.8 270.4,189.8 271.4,189.8 272.4,189.9 273.4,189.9 274.4,189.9 275.4,189.9 276.4,189.9 277.4,189.8 278.4,189.8 279.4,189.8 280.4,189.8 281.4,189.8 282.4,189.7 283.4,189.7 284.4,189.7 285.4,189.7 286.4,189.7 287.4,189.7 288.4,189.8 289.4,189.8 290.4,189.8 291.4,189.8 292.4,189.8 293.4,189.9 294.4,189.9 295.4,189.9 296.4,189.9 297.4,189.9 298.4,189.9 299.4,189.9 300.4,189.9 301.4,189.8 302.4,189.8 303.4,189.8 304.4,189.8 305.4,189.7 306.4,189.7 307.4,189.7 308.4,189.7 309.4,189.7 310.4,189.7 311.4,189.7 312.4,189.8 313.4,189.8 314.4,189.8 315.4,189.8 316.4,189.9 317.4,189.9 318.4,189.9 319.4,189.9 320.4,189.9 321.4,189.9 322.4,189.9 323.4,189.9 324.4,189.9 325.4,189.9 326.4,189.9 327.4,189.8 328.4,189.8 329.4,189.8 330.4,189.8 331.4,189.8 332.4,189.8 333.4,189.8 334.4,189.8 335.4,189.8 336.4,189.8 337.4,189.8 338.4,189.8 339.4,189.8 340.4,189.9 341.4,189.9 342.4,189.9 343.4,189.9 344.4,189.9 345.4,189.9 346.4,189.9 347.4,189.9 348.4,190.0 349.4,190.0 350.4,190.0 351.4,190.0 352.4,190.0 353.4,190.0 354.4,190.0 355.4,190.0 356.4,190.0 357.4,190.0 358.4,190.0 359.4,190.0 360.4,190.0 361.4,190.0 362.4,190.0 363.4,189.9 364.4,189.9 365.4,189.9 366.4,189.9 367.4,189.8 368.4,189.8 369.4,189.8 370.4,189.8 371.4,189.8 372.4,189.7 373.4,189.7 374.4,189.7 375.4,189.7 376.4,189.6 377.4,189.6 378.4,189.6 379.4,189.6 380.4,189.6 381.4,189.6 382.4,189.6 383.4,189.6 384.4,189.5 385.4,189.5 386.4,189.5 387.4,189.5 388.4,189.5 389.4,189.5 390.4,189.5 391.4,189.5 392.4,189.6 393.4,189.6 394.4,189.7 395.4,189.7 396.4,189.8 397.4,189.8 398.4,189.9 399.4,190.0 400.4,190.0 401.4,190.1 402.4,190.1 403.4,190.1 404.4,190.1 405.4,190.0 406.4,190.0 407.4,190.0 408.4,190.0 409.4,189.9 410.4,189.9 411.4,189.9 412.4,189.8 413.4,189.8 414.4,189.8 415.4,189.8 416.4,189.8 417.4,189.7 418.4,189.7 419.4,189.7 420.4,189.7 421.4,189.7 422.4,189.6 423.4,189.6 424.4,189.6 425.4,189.6 426.4,189.6 427.4,189.6 428.4,189.7 429.4,189.7 430.4,189.8 431.4,189.8 432.4,189.9 433.4,189.9 434.4,190.0 435.4,190.0 436.4,190.1 437.4,190.1 438.4,190.1 439.4,190.1 440.4,190.0 441.4,190.0 442.4,190.0 443.4,190.0 444.4,189.9 445.4,189.9 446.4,189.9 447.4,189.9 448.4,189.9 449.4,189.8 450.4,189.8 451.4,189.9 452.4,189.9 453.4,189.9 454.4,189.9 455.4,189.9 456.4,189.9 457.4,189.9 458.4,189.9 459.4,189.9 460.4,189.9 461.4,189.9 462.4,189.9 463.4,189.8 464.4,189.7 465.4,189.6 466.4,189.5 467.4,189.4 468.4,189.3 469.4,189.2 470.4,189.1 471.4,189.0 472.4,188.9 473.4,188.8 474.4,188.7 475.4,188.6 476.4,188.5 477.4,188.5 478.4,188.5 479.4,188.5 480.4,188.6 481.4,188.7 482.4,188.9 483.4,189.0 484.4,189.2 485.4,189.4 486.4,189.5 487.4,189.7 488.4,189.8 489.4,189.9 490.4,189.9 491.4,190.0 492.4,190.0 493.4,190.0 494.4,190.0 495.4,190.0 496.4,190.0 497.4,190.0 498.4,190.0 499.4,190.0 500.4,189.9 501.4,189.9 502.4,189.8 503.4,189.8 504.4,189.8 505.4,189.7 506.4,189.7 507.4,189.7 508.4,189.7 509.4,189.7 510.4,189.7 511.4,189.7 512.4,189.7 513.4,189.7 514.4,189.7 515.4,189.7 516.4,189.7 517.4,189.7 518.4,189.7 519.4,189.7 520.4,189.7 521.4,189.7 522.4,189.8 523.4,189.8 524.4,189.8 525.4,189.9 526.4,189.9 527.4,189.9 528.4,190.0 529.4,190.0 530.4,190.0 531.4,190.0 532.4,190.0 533.4,190.0 534.4,190.0 535.4,189.9 536.4,189.9 537.4,189.8 538.4,189.8 539.4,189.7 540.4,189.7 541.4,189.6 542.4,189.6 543.4,189.6 544.4,189.6 545.4,189.6 546.4,189.6 547.4,189.7 548.4,189.7 549.4,189.8 550.4,189.8 551.4,189.9 552.4,189.9 553.4,189.9 554.4,190.0 555.4,190.0 556.4,189.9 557.4,189.9 558.4,189.9 559.4,189.8 560.4,189.8 561.4,189.7 562.4,189.7 563.4,189.6 564.4,189.6 565.4,189.6 566.4,189.6 567.4,189.6 568.4,189.6 569.4,189.6 570.4,189.6 571.4,189.7 572.4,189.7 573.4,189.8 574.4,189.8 575.4,189.8 576.4,189.9 577.4,189.9 578.4,189.9 579.4,189.9 580.4,189.9 581.4,189.9 582.4,189.9 583.4,189.9 584.4,189.9 585.4,189.9 586.4,189.9 587.4,189.9 588.4,189.9 589.4,189.9 590.4,189.9 591.4,189.9 592.4,189.9 593.4,189.9 594.4,190.0 595.4,190.0 596.4,190.0 597.4,190.0 598.4,190.0 599.4,190.1 600.4,190.1 601.4,190.1 602.4,190.1 603.4,190.1 604.4,190.1 605.4,190.0 606.4,190.0 607.4,190.0 608.4,190.0 609.4,189.9 610.4,189.9 611.4,189.8 612.4,189.7 613.4,189.6 614.4,189.4 615.4,189.3 616.4,189.2 617.4,189.1 618.4,189.0 619.4,189.0 620.4,189.0 621.4,189.0 622.4,189.1 623.4,189.2 624.4,189.3 625.4,189.4 626.4,189.5 627.4,189.6 628.4,189.7 629.4,189.7 630.4,189.8 631.4,189.8 632.4,189.9 633.4,189.9 634.4,190.0 635.4,190.0 636.4,190.0 637.4,190.0 638.4,190.0 639.4,190.0 640.4,190.0 641.4,190.0 642.4,189.9 643.4,189.9 644.4,189.9 645.4,189.9 646.4,189.9 647.4,189.8 648.4,189.8 649.4,189.8 650.4,189.8 651.4,189.8 652.4,189.7 653.4,189.7 654.4,189.7 655.4,189.7 656.4,189.7 657.4,189.7 658.4,189.6 659.4,189.6 660.4,189.6 661.4,189.6 662.4,189.6 663.4,189.6 664.4,189.6 665.4,189.6 666.4,189.6 667.4,189.6 668.4,189.6 669.4,189.6 670.4,189.6 671.4,189.6 672.4,189.6 673.4,189.6 674.4,189.6 675.4,189.6 676.4,189.7 677.4,189.7 678.4,189.7 679.4,189.7 680.4,189.8 681.4,189.8 682.4,189.8 683.4,189.8 684.4,189.8 685.4,189.8 686.4,189.8 687.4,189.8 688.4,189.8 689.4,189.8 690.4,189.8 691.4,189.8 692.4,189.8 693.4,189.8 694.4,189.8 695.4,189.8 696.4,189.8 697.4,189.8 698.4,189.8 699.4,189.7 700.4,189.7 701.4,189.7 702.4,189.6 703.4,189.6 704.4,189.6 705.4,189.6 706.4,189.5 707.4,189.5 708.4,189.6 709.4,189.6 710.4,189.6 711.4,189.7 712.4,189.7 713.4,189.8 714.4,189.9 715.4,189.9 716.4,190.0 717.4,190.0 718.4,190.0 719.4,190.0 720.4,190.0 721.4,190.0 722.4,190.0 723.4,190.0 724.4,189.9 725.4,189.9 726.4,189.9 727.4,189.9 728.4,189.8 729.4,189.8 730.4,189.8 731.4,189.8 732.4,189.8 733.4,189.8 734.4,189.8 735.4,189.8 736.4,189.9 737.4,189.9 738.4,189.9 739.4,189.9 740.4,189.9 741.4,189.9 742.4,189.9 743.4,189.9 744.4,189.9 745.4,189.9 746.4,189.9 747.4,189.8 748.4,189.8 749.4,189.7 750.4,189.7 751.4,189.7 752.4,189.7 753.4,189.6 754.4,189.6 755.4,189.6 756.4,189.6 757.4,189.6 758.4,189.6 759.4,189.6 760.4,189.6 761.4,189.6 762.4,189.6 763.4,189.6 764.4,189.6 765.4,189.6 766.4,189.6 767.4,189.6 768.4,189.6 769.4,189.6 770.4,189.6 771.4,189.6 772.4,189.6 773.4,189.6 774.4,189.5 775.4,189.5 776.4,189.5 777.4,189.5 778.4,189.5 779.4,189.5 780.4,189.5 781.4,189.5 782.4,189.6 783.4,189.6 784.4,189.6 785.4,189.6 786.4,189.7 787.4,189.7 788.4,189.7 789.4,189.7 790.4,189.7 791.4,189.7 792.4,189.7 793.4,189.7 794.4,189.7 795.4,189.7 796.4,189.7 797.4,189.7 798.4,189.7 799.4,189.7 800.4,189.7 801.4,189.7 802.4,189.7 803.4,189.7 804.4,189.7 805.4,189.7 806.4,189.7 807.4,189.7 808.4,189.7 809.4,189.7 810.4,189.7 811.4,189.7 812.4,189.8 813.4,189.8 814.4,189.8 815.4,189.8 816.4,189.7 817.4,189.7 818.4,189.7 819.4,189.7 820.4,189.7 821.4,189.7 822.4,189.7 823.4,189.7 824.4,189.7 825.4,189.7 826.4,189.7 827.4,189.8 828.4,189.8 829.4,189.8 830.4,189.8 831.4,189.9 832.4,189.9 833.4,189.9 834.4,190.0 835.4,190.0 836.4,190.0 837.4,190.0 838.4,190.0 839.4,190.0 840.4,190.0 841.4,190.0 842.4,190.0 843.4,190.0 844.4,190.0 845.4,190.0 846.4,190.0 847.4,190.0 848.4,190.0 849.4,190.0 850.4,190.0 851.4,190.0 852.4,189.9 853.4,189.9 854.4,189.8 855.4,189.8 856.4,189.7 857.4,189.7 858.4,189.6 859.4,189.6 860.4,189.6 861.4,189.6 862.4,189.6 863.4,189.6 864.4,189.6 865.4,189.7 866.4,189.7 867.4,189.7 868.4,189.7 869.4,189.7 870.4,189.7 871.4,189.7 872.4,189.7 873.4,189.7 874.4,189.7 875.4,189.7 876.4,189.7 877.4,189.7 878.4,189.7 879.4,189.6 880.4,189.6 881.4,189.6 882.4,189.6 883.4,189.6 884.4,189.6 885.4,189.6 886.4,189.6 887.4,189.7 888.4,189.7 889.4,189.7 890.4,189.8 891.4,189.8 892.4,189.8 893.4,189.9 894.4,189.9 895.4,189.9 896.4,189.9 897.4,189.9 898.4,190.0 899.4,190.0 900.4,190.0 901.4,190.0 902.4,190.0 903.4,190.1 904.4,190.1 905.4,190.1 906.4,190.1 907.4,190.1 908.4,190.1 909.4,190.0 910.4,190.0 911.4,189.9 912.4,189.9 913.4,189.8 914.4,189.8 915.4,189.7 916.4,189.7 917.4,189.6 918.4,189.6 919.4,189.6 920.4,189.7 921.4,189.7 922.4,189.7 923.4,189.8 924.4,189.9 925.4,189.9 926.4,190.0 927.4,190.0 928.4,190.1 929.4,190.1 930.4,190.1 931.4,190.0 932.4,189.9 933.4,189.8 934.4,189.6 935.4,189.5 936.4,189.3 937.4,189.2 938.4,189.1 939.4,189.0 940.4,189.0 941.4,189.0 942.4,189.1 943.4,189.1 944.4,189.2 945.4,189.3 946.4,189.3 947.4,189.4 948.4,189.5 949.4,189.6 950.4,189.7 951.4,189.8 952.4,189.9 953.4,189.9 954.4,190.0 955.4,190.0 956.4,189.9 957.4,189.9 958.4,189.9 959.4,189.9 960.4,189.8 961.4,189.8 962.4,189.8 963.4,189.7 964.4,189.7 965.4,189.7 966.4,189.7 967.4,189.6 968.4,189.6 969.4,189.6 970.4,189.6 971.4,189.6 972.4,189.6 973.4,189.5 974.4,189.5 975.4,189.5 976.4,189.5 977.4,189.5 978.4,189.5 979.4,189.5 980.4,189.6 981.4,189.6 982.4,189.7 983.4,189.7 984.4,189.8 985.4,189.9 986.4,189.9 987.4,189.9 988.4,190.0 989.4,190.0 990.4,190.0 991.4,189.9 992.4,189.9 993.4,189.9 994.4,189.9 995.4,189.8 996.4,189.8 997.4,189.8 998.4,189.8 999.4,189.7 1000.4,189.7 1001.4,189.7 1002.4,189.7 1003.4,189.7 1004.4,189.7 1005.4,189.6 1006.4,189.6 1007.4,189.6 1008.4,189.6 1009.4,189.6 1010.4,189.6 1011.4,189.6 1012.4,189.6 1013.4,189.6 1014.4,189.6 1015.4,189.6 1016.4,189.6 1017.4,189.7 1018.4,189.7 1019.4,189.7 1020.4,189.7 1021.4,189.7 1022.4,189.8 1023.4,189.8 1024.4,189.8 1025.4,189.8 1026.4,189.8 1027.4,189.7 1028.4,189.7 1029.4,189.7 1030.4,189.7 1031.4,189.7 1032.4,189.7 1033.4,189.7 1034.4,189.6 1035.4,189.6 1036.4,189.6 1037.4,189.6 1038.4,189.6 1039.4,189.7 1040.4,189.7 1041.4,189.7 1042.4,189.7 1043.4,189.7 1044.4,189.7 1045.4,189.7 1046.4,189.7 1047.4,189.7 1048.4,189.7 1049.4,189.8 1050.4,189.8 1051.4,189.8 1052.4,189.8 1053.4,189.8 1054.4,189.8 1055.4,189.8 1056.4,189.8 1057.4,189.8 1058.4,189.8 1059.4,189.8 1060.4,189.8 1061.4,189.8 1062.4,189.8 1063.4,189.8 1064.4,189.8 1065.4,189.8 1066.4,189.8 1067.4,189.8 1068.4,189.8 1069.4,189.8 1070.4,189.8 1071.4,189.8 1072.4,189.8 1073.4,189.8 1074.4,189.8 1075.4,189.8 1076.4,189.8 1077.4,189.8 1078.4,189.8 1079.4,189.8 1080.4,189.8 1081.4,189.8 1082.4,189.9 1083.4,189.9 1084.4,189.8 1085.4,189.8 1086.4,189.8 1087.4,189.8 1088.4,189.8 1089.4,189.8 1090.4,189.7 1091.4,189.7 1092.4,189.7 1093.4,189.7 1094.4,189.7 1095.4,189.7 1096.4,189.7 1097.4,189.6 1098.4,189.6 1099.4,189.6 1100.4,189.6 1101.4,189.6 1102.4,189.6 1103.4,189.6 1104.4,189.6 1105.4,189.6 1106.4,189.6 1107.4,189.6 1108.4,189.6 1109.4,189.6 1110.4,189.6 1111.4,189.6 1112.4,189.6 1113.4,189.6 1114.4,189.6 1115.4,189.6 1116.4,189.6 1117.4,189.6 1118.4,189.6 1119.4,189.6 1120.4,189.6 1121.4,189.6 1122.4,189.6 1123.4,189.6 1124.4,189.6 1125.4,189.6 1126.4,189.6 1127.4,189.6 1128.4,189.6 1129.4,189.6 1130.4,189.6 1131.4,189.6 1132.4,189.6 1133.4,189.6 1134.4,189.7 1135.4,189.7 1136.4,189.7 1137.4,189.7 1138.4,189.8 1139.4,189.8 1140.4,189.8 1141.4,189.8 1142.4,189.8 1143.4,189.8 1144.4,189.8 1145.4,189.8 1146.4,189.8 1147.4,189.8 1148.4,189.8 1149.4,189.7 1150.4,189.7 1151.4,189.7 1152.4,189.7 1153.4,189.7 1154.4,189.7 1155.4,189.7 1156.4,189.8 1157.4,189.8 1158.4,189.8 1159.4,189.9 1160.4,189.9 1161.4,189.9 1162.4,190.0 1163.4,190.0 1164.4,190.0 1165.4,190.0 1166.4,190.0 1167.4,190.0 1168.4,189.9 1169.4,189.9 1170.4,189.9 1171.4,189.8 1172.4,189.8 1173.4,189.7 1174.4,189.7 1175.4,189.6 1176.4,189.6 1177.4,189.5 1178.4,189.5 1179.4,189.4 1180.4,189.3 1181.4,189.2 1182.4,189.1 1183.4,189.0 1184.4,188.9 1185.4,188.8 1186.4,188.8 1187.4,188.8 1188.4,188.8 1189.4,188.9 1190.4,189.0 1191.4,189.1 1192.4,189.2 1193.4,189.3 1194.4,189.4 1195.4,189.5 1196.4,189.6 1197.4,189.7 1198.4,189.7 1199.4,189.8 1200.4,189.8 1201.4,189.8 1202.4,189.9 1203.4,189.9 1204.4,189.9 1205.4,189.9 1206.4,189.9 1207.4,189.9 1208.4,189.9 1209.4,189.9 1210.4,189.9 1211.4,189.9 1212.4,189.9 1213.4,189.9 1214.4,190.0 1215.4,190.0 1216.4,190.0 1217.4,190.0 1218.4,190.0 1219.4,190.1 1220.4,190.1 1221.4,190.1 1222.4,190.1 1223.4,190.1 1224.4,190.1 1225.4,190.1 1226.4,190.0 1227.4,190.0 1228.4,189.9 1229.4,189.8 1230.4,189.8 1231.4,189.7 1232.4,189.6 1233.4,189.6 1234.4,189.6 1235.4,189.5 1236.4,189.5 1237.4,189.5 1238.4,189.5 1239.4,189.5 1240.4,189.5 1241.4,189.5 1242.4,189.5 1243.4,189.5 1244.4,189.5 1245.4,189.5 1246.4,189.5 1247.4,189.5 1248.4,189.5 1249.4,189.5 1250.4,189.5 1251.4,189.5 1252.4,189.5 1253.4,189.5 1254.4,189.5 1255.4,189.6 1256.4,189.6 1257.4,189.6 1258.4,189.6 1259.4,189.6 1260.4,189.6 1261.4,189.6 1262.4,189.6 1263.4,189.6 1264.4,189.7 1265.4,189.7 1266.4,189.7 1267.4,189.7 1268.4,189.7 1269.4,189.7 1270.4,189.7 1271.4,189.7 1272.4,189.8 1273.4,189.8 1274.4,189.8 1275.4,189.8 1276.4,189.8 1277.4,189.8 1278.4,189.8 1279.4,189.8 1280.4,189.8 1281.4,189.8 1282.4,189.8 1283.4,189.9 1284.4,189.9 1285.4,189.9 1286.4,189.9 1287.4,189.9 1288.4,189.9 1289.4,189.9 1290.4,189.9 1291.4,189.9 1292.4,189.9 1293.4,189.9 1294.4,189.9 1295.4,189.9 1296.4,189.9 1297.4,189.9 1298.4,189.9 1299.4,189.8 1300.4,189.8 1301.4,189.8 1302.4,189.8 1303.4,189.7 1304.4,189.7 1305.4,189.7 1306.4,189.7 1307.4,189.7 1308.4,189.8 1309.4,189.8 1310.4,189.8 1311.4,189.9 1312.4,189.9 1313.4,190.0 1314.4,190.0 1315.4,190.0 1316.4,190.1 1317.4,190.1 1318.4,190.1 1319.4,190.0 1320.4,190.0 1321.4,189.9 1322.4,189.9 1323.4,189.8 1324.4,189.7 1325.4,189.6 1326.4,189.6 1327.4,189.5 1328.4,189.5 1329.4,189.5 1330.4,189.5 1331.4,189.5 1332.4,189.6 1333.4,189.6 1334.4,189.7 1335.4,189.8 1336.4,189.8 1337.4,189.9 1338.4,189.9 1339.4,190.0 1340.4,190.0 1341.4,190.0 1342.4,190.0 1343.4,190.0 1344.4,189.9 1345.4,189.9 1346.4,189.8 1347.4,189.8 1348.4,189.7 1349.4,189.7 1350.4,189.7 1351.4,189.6 1352.4,189.6 1353.4,189.6 1354.4,189.7 1355.4,189.7 1356.4,189.8 1357.4,189.9 1358.4,190.0 1359.4,190.0 L1359.4,191.1 Z" fill="rgba(130,160,40,0.6)"/><path d="M62.4,190.79999999999998 L1359.4,190.79999999999998" stroke="#137f88" stroke-width="1.4"/><circle cx="62.4" cy="190.79999999999998" r="1.35" fill="#137f88"/><circle cx="74.1" cy="190.79999999999998" r="1.35" fill="#137f88"/><circle cx="85.8" cy="190.79999999999998" r="1.35" fill="#137f88"/><circle cx="97.5" cy="190.79999999999998" r="1.35" fill="#137f88"/><circle cx="109.2" cy="190.79999999999998" r="1.35" fill="#137f88"/><circle cx="120.8" cy="190.79999999999998" r="1.35" fill="#137f88"/><circle cx="132.5" cy="190.79999999999998" r="1.35" fill="#137f88"/><circle cx="144.2" cy="190.79999999999998" r="1.35" fill="#137f88"/><circle cx="155.9" cy="190.79999999999998" r="1.35" fill="#137f88"/><circle cx="167.6" cy="190.79999999999998" r="1.35" fill="#137f88"/><circle cx="179.3" cy="190.79999999999998" r="1.35" fill="#137f88"/><circle cx="191.0" cy="190.79999999999998" r="1.35" fill="#137f88"/><circle cx="202.7" cy="190.79999999999998" r="1.35" fill="#137f88"/><circle cx="214.4" cy="190.79999999999998" r="1.35" fill="#137f88"/><circle cx="226.1" cy="190.79999999999998" r="1.35" fill="#137f88"/><circle cx="237.8" cy="190.79999999999998" r="1.35" fill="#137f88"/><circle cx="249.4" cy="190.79999999999998" r="1.35" fill="#137f88"/><circle cx="261.1" cy="190.79999999999998" r="1.35" fill="#137f88"/><circle cx="272.8" cy="190.79999999999998" r="1.35" fill="#137f88"/><circle cx="284.5" cy="190.79999999999998" r="1.35" fill="#137f88"/><circle cx="296.2" cy="190.79999999999998" r="1.35" fill="#137f88"/><circle cx="307.9" cy="190.79999999999998" r="1.35" fill="#137f88"/><circle cx="319.6" cy="190.79999999999998" r="1.35" fill="#137f88"/><circle cx="331.3" cy="190.79999999999998" r="1.35" fill="#137f88"/><circle cx="343.0" cy="190.79999999999998" r="1.35" fill="#137f88"/><circle cx="354.6" cy="190.79999999999998" r="1.35" fill="#137f88"/><circle cx="366.3" cy="190.79999999999998" r="1.35" fill="#137f88"/><circle cx="378.0" cy="190.79999999999998" r="1.35" fill="#137f88"/><circle cx="389.7" cy="190.79999999999998" r="1.35" fill="#137f88"/><circle cx="401.4" cy="190.79999999999998" r="1.35" fill="#137f88"/><circle cx="413.1" cy="190.79999999999998" r="1.35" fill="#137f88"/><circle cx="424.8" cy="190.79999999999998" r="1.35" fill="#137f88"/><circle cx="436.5" cy="190.79999999999998" r="1.35" fill="#137f88"/><circle cx="448.2" cy="190.79999999999998" r="1.35" fill="#137f88"/><circle cx="459.9" cy="190.79999999999998" r="1.35" fill="#137f88"/><circle cx="471.5" cy="190.79999999999998" r="1.35" fill="#137f88"/><circle cx="483.2" cy="190.79999999999998" r="1.35" fill="#137f88"/><circle cx="494.9" cy="190.79999999999998" r="1.35" fill="#137f88"/><circle cx="506.6" cy="190.79999999999998" r="1.35" fill="#137f88"/><circle cx="518.3" cy="190.79999999999998" r="1.35" fill="#137f88"/><circle cx="530.0" cy="190.79999999999998" r="1.35" fill="#137f88"/><circle cx="541.7" cy="190.79999999999998" r="1.35" fill="#137f88"/><circle cx="553.4" cy="190.79999999999998" r="1.35" fill="#137f88"/><circle cx="565.1" cy="190.79999999999998" r="1.35" fill="#137f88"/><circle cx="576.8" cy="190.79999999999998" r="1.35" fill="#137f88"/><circle cx="588.4" cy="190.79999999999998" r="1.35" fill="#137f88"/><circle cx="600.1" cy="190.79999999999998" r="1.35" fill="#137f88"/><circle cx="611.8" cy="190.79999999999998" r="1.35" fill="#137f88"/><circle cx="623.5" cy="190.79999999999998" r="1.35" fill="#137f88"/><circle cx="635.2" cy="190.79999999999998" r="1.35" fill="#137f88"/><circle cx="646.9" cy="190.79999999999998" r="1.35" fill="#137f88"/><circle cx="658.6" cy="190.79999999999998" r="1.35" fill="#137f88"/><circle cx="670.3" cy="190.79999999999998" r="1.35" fill="#137f88"/><circle cx="682.0" cy="190.79999999999998" r="1.35" fill="#137f88"/><circle cx="693.7" cy="190.79999999999998" r="1.35" fill="#137f88"/><circle cx="705.3" cy="190.79999999999998" r="1.35" fill="#137f88"/><circle cx="717.0" cy="190.79999999999998" r="1.35" fill="#137f88"/><circle cx="728.7" cy="190.79999999999998" r="1.35" fill="#137f88"/><circle cx="740.4" cy="190.79999999999998" r="1.35" fill="#137f88"/><circle cx="752.1" cy="190.79999999999998" r="1.35" fill="#137f88"/><circle cx="763.8" cy="190.79999999999998" r="1.35" fill="#137f88"/><circle cx="775.5" cy="190.79999999999998" r="1.35" fill="#137f88"/><circle cx="787.2" cy="190.79999999999998" r="1.35" fill="#137f88"/><circle cx="798.9" cy="190.79999999999998" r="1.35" fill="#137f88"/><circle cx="810.6" cy="190.79999999999998" r="1.35" fill="#137f88"/><circle cx="822.2" cy="190.79999999999998" r="1.35" fill="#137f88"/><circle cx="833.9" cy="190.79999999999998" r="1.35" fill="#137f88"/><circle cx="845.6" cy="190.79999999999998" r="1.35" fill="#137f88"/><circle cx="857.3" cy="190.79999999999998" r="1.35" fill="#137f88"/><circle cx="869.0" cy="190.79999999999998" r="1.35" fill="#137f88"/><circle cx="880.7" cy="190.79999999999998" r="1.35" fill="#137f88"/><circle cx="892.4" cy="190.79999999999998" r="1.35" fill="#137f88"/><circle cx="904.1" cy="190.79999999999998" r="1.35" fill="#137f88"/><circle cx="915.8" cy="190.79999999999998" r="1.35" fill="#137f88"/><circle cx="927.5" cy="190.79999999999998" r="1.35" fill="#137f88"/><circle cx="939.1" cy="190.79999999999998" r="1.35" fill="#137f88"/><circle cx="950.8" cy="190.79999999999998" r="1.35" fill="#137f88"/><circle cx="962.5" cy="190.79999999999998" r="1.35" fill="#137f88"/><circle cx="974.2" cy="190.79999999999998" r="1.35" fill="#137f88"/><circle cx="985.9" cy="190.79999999999998" r="1.35" fill="#137f88"/><circle cx="997.6" cy="190.79999999999998" r="1.35" fill="#137f88"/><circle cx="1009.3" cy="190.79999999999998" r="1.35" fill="#137f88"/><circle cx="1021.0" cy="190.79999999999998" r="1.35" fill="#137f88"/><circle cx="1032.7" cy="190.79999999999998" r="1.35" fill="#137f88"/><circle cx="1044.4" cy="190.79999999999998" r="1.35" fill="#137f88"/><circle cx="1056.0" cy="190.79999999999998" r="1.35" fill="#137f88"/><circle cx="1067.7" cy="190.79999999999998" r="1.35" fill="#137f88"/><circle cx="1079.4" cy="190.79999999999998" r="1.35" fill="#137f88"/><circle cx="1091.1" cy="190.79999999999998" r="1.35" fill="#137f88"/><circle cx="1102.8" cy="190.79999999999998" r="1.35" fill="#137f88"/><circle cx="1114.5" cy="190.79999999999998" r="1.35" fill="#137f88"/><circle cx="1126.2" cy="190.79999999999998" r="1.35" fill="#137f88"/><circle cx="1137.9" cy="190.79999999999998" r="1.35" fill="#137f88"/><circle cx="1149.6" cy="190.79999999999998" r="1.35" fill="#137f88"/><circle cx="1161.3" cy="190.79999999999998" r="1.35" fill="#137f88"/><circle cx="1173.0" cy="190.79999999999998" r="1.35" fill="#137f88"/><circle cx="1184.6" cy="190.79999999999998" r="1.35" fill="#137f88"/><circle cx="1196.3" cy="190.79999999999998" r="1.35" fill="#137f88"/><circle cx="1208.0" cy="190.79999999999998" r="1.35" fill="#137f88"/><circle cx="1219.7" cy="190.79999999999998" r="1.35" fill="#137f88"/><circle cx="1231.4" cy="190.79999999999998" r="1.35" fill="#137f88"/><circle cx="1243.1" cy="190.79999999999998" r="1.35" fill="#137f88"/><circle cx="1254.8" cy="190.79999999999998" r="1.35" fill="#137f88"/><circle cx="1266.5" cy="190.79999999999998" r="1.35" fill="#137f88"/><circle cx="1278.2" cy="190.79999999999998" r="1.35" fill="#137f88"/><circle cx="1289.9" cy="190.79999999999998" r="1.35" fill="#137f88"/><circle cx="1301.5" cy="190.79999999999998" r="1.35" fill="#137f88"/><circle cx="1313.2" cy="190.79999999999998" r="1.35" fill="#137f88"/><circle cx="1324.9" cy="190.79999999999998" r="1.35" fill="#137f88"/><circle cx="1336.6" cy="190.79999999999998" r="1.35" fill="#137f88"/><circle cx="1348.3" cy="190.79999999999998" r="1.35" fill="#137f88"/></svg>
<div class="t" style="left:15.1px;top:68.86px;font-size:6.9px;font-weight:bold;color:#26a3b8;width:37.5px;text-align:right">80.00 Mbps</div>
<div class="t" style="left:15.1px;top:98.36px;font-size:6.9px;font-weight:bold;color:#26a3b8;width:37.5px;text-align:right">60.00 Mbps</div>
<div class="t" style="left:15.1px;top:127.66px;font-size:6.9px;font-weight:bold;color:#26a3b8;width:37.5px;text-align:right">40.00 Mbps</div>
<div class="t" style="left:15.1px;top:156.66px;font-size:6.9px;font-weight:bold;color:#26a3b8;width:37.5px;text-align:right">20.00 Mbps</div>
<div class="t" style="left:24.5px;top:185.46px;font-size:6.9px;font-weight:bold;color:#26a3b8;width:28px;text-align:right">0.00 bps</div>
<div class="t" style="left:54.7px;top:196.72px;font-size:6.0px;font-weight:normal;color:#666;">9. Jan</div>
<div class="t" style="left:124.2px;top:196.81px;font-size:5.9px;font-weight:normal;color:#777;width:17px;text-align:center">00:30</div>
<div class="t" style="left:194.2px;top:196.81px;font-size:5.9px;font-weight:normal;color:#777;width:17px;text-align:center">01:00</div>
<div class="t" style="left:264.2px;top:196.81px;font-size:5.9px;font-weight:normal;color:#777;width:17px;text-align:center">01:30</div>
<div class="t" style="left:334.3px;top:196.81px;font-size:5.9px;font-weight:normal;color:#777;width:17px;text-align:center">02:00</div>
<div class="t" style="left:404.4px;top:196.81px;font-size:5.9px;font-weight:normal;color:#777;width:17px;text-align:center">02:30</div>
<div class="t" style="left:474.4px;top:196.81px;font-size:5.9px;font-weight:normal;color:#777;width:17px;text-align:center">03:00</div>
<div class="t" style="left:544.4px;top:196.81px;font-size:5.9px;font-weight:normal;color:#777;width:17px;text-align:center">03:30</div>
<div class="t" style="left:614.5px;top:196.81px;font-size:5.9px;font-weight:normal;color:#777;width:17px;text-align:center">04:00</div>
<div class="t" style="left:684.5px;top:196.81px;font-size:5.9px;font-weight:normal;color:#777;width:17px;text-align:center">04:30</div>
<div class="t" style="left:754.6px;top:196.81px;font-size:5.9px;font-weight:normal;color:#777;width:17px;text-align:center">05:00</div>
<div class="t" style="left:824.6px;top:196.81px;font-size:5.9px;font-weight:normal;color:#777;width:17px;text-align:center">05:30</div>
<div class="t" style="left:894.7px;top:196.81px;font-size:5.9px;font-weight:normal;color:#777;width:17px;text-align:center">06:00</div>
<div class="t" style="left:964.8px;top:196.81px;font-size:5.9px;font-weight:normal;color:#777;width:17px;text-align:center">06:30</div>
<div class="t" style="left:1034.8px;top:196.81px;font-size:5.9px;font-weight:normal;color:#777;width:17px;text-align:center">07:00</div>
<div class="t" style="left:1104.8px;top:196.81px;font-size:5.9px;font-weight:normal;color:#777;width:17px;text-align:center">07:30</div>
<div class="t" style="left:1174.9px;top:196.81px;font-size:5.9px;font-weight:normal;color:#777;width:17px;text-align:center">08:00</div>
<div class="t" style="left:1244.9px;top:196.81px;font-size:5.9px;font-weight:normal;color:#777;width:17px;text-align:center">08:30</div>
<div class="t" style="left:1315.0px;top:196.81px;font-size:5.9px;font-weight:normal;color:#777;width:17px;text-align:center">09:00</div>
<div style="position:absolute;left:61px;top:214px;width:1308px;height:1px;background:#c8ccd0"></div>
<div style="position:absolute;left:61px;top:215px;width:1308px;height:9px;background:#d9e7f8"></div>
<svg style="position:absolute;left:0;top:0" width="1381" height="650"><path d="M66.0,224 L66.0,222.8 67.0,222.8 68.0,222.7 69.0,222.6 70.0,222.5 71.0,222.4 72.0,222.3 73.0,222.3 74.0,222.2 75.0,222.1 76.0,222.1 77.0,222.1 78.0,222.1 79.0,222.1 80.0,222.2 81.0,222.3 82.0,222.4 83.0,222.5 84.0,222.7 85.0,222.8 86.0,222.9 87.0,223.1 88.0,223.1 89.0,223.2 90.0,223.2 91.0,223.2 92.0,223.2 93.0,223.2 94.0,223.2 95.0,223.2 96.0,223.2 97.0,223.2 98.0,223.2 99.0,223.2 100.0,223.2 101.0,223.2 102.0,223.1 103.0,223.1 104.0,223.1 105.0,223.1 106.0,223.0 107.0,223.0 108.0,222.9 109.0,222.9 110.0,222.8 111.0,222.8 112.0,222.8 113.0,222.8 114.0,222.8 115.0,222.8 116.0,222.8 117.0,222.8 118.0,222.8 119.0,222.8 120.0,222.8 121.0,222.8 122.0,222.8 123.0,222.8 124.0,222.7 125.0,222.7 126.0,222.7 127.0,222.7 128.0,222.6 129.0,222.6 130.0,222.5 131.0,222.5 132.0,222.4 133.0,222.3 134.0,222.2 135.0,222.2 136.0,222.1 137.0,222.0 138.0,221.9 139.0,221.8 140.0,221.7 141.0,221.6 142.0,221.6 143.0,221.5 144.0,221.5 145.0,221.6 146.0,221.7 147.0,222.0 148.0,222.2 149.0,222.5 150.0,222.7 151.0,222.9 152.0,223.0 153.0,222.9 154.0,222.8 155.0,222.7 156.0,222.6 157.0,222.4 158.0,222.3 159.0,222.2 160.0,222.2 161.0,222.4 162.0,222.5 163.0,222.3 164.0,221.6 165.0,220.7 166.0,219.5 167.0,218.3 168.0,217.2 169.0,216.2 170.0,215.5 171.0,215.3 172.0,215.6 173.0,216.2 174.0,217.2 175.0,218.4 176.0,219.6 177.0,220.8 178.0,221.7 179.0,222.4 180.0,222.7 181.0,222.5 182.0,222.2 183.0,222.0 184.0,222.0 185.0,222.1 186.0,222.1 187.0,222.2 188.0,222.2 189.0,222.3 190.0,222.4 191.0,222.5 192.0,222.5 193.0,222.6 194.0,222.6 195.0,222.6 196.0,222.6 197.0,222.6 198.0,222.5 199.0,222.5 200.0,222.4 201.0,222.3 202.0,222.3 203.0,222.2 204.0,222.2 205.0,222.1 206.0,222.1 207.0,222.1 208.0,222.1 209.0,222.1 210.0,222.1 211.0,222.1 212.0,222.1 213.0,222.1 214.0,222.2 215.0,222.2 216.0,222.2 217.0,222.2 218.0,222.2 219.0,222.2 220.0,222.2 221.0,222.3 222.0,222.3 223.0,222.3 224.0,222.3 225.0,222.3 226.0,222.3 227.0,222.3 228.0,222.3 229.0,222.3 230.0,222.3 231.0,222.3 232.0,222.3 233.0,222.3 234.0,222.2 235.0,222.2 236.0,222.2 237.0,222.1 238.0,222.1 239.0,222.1 240.0,222.1 241.0,222.0 242.0,222.0 243.0,222.0 244.0,222.1 245.0,222.1 246.0,222.2 247.0,222.2 248.0,222.3 249.0,222.4 250.0,222.4 251.0,222.5 252.0,222.5 253.0,222.6 254.0,222.6 255.0,222.6 256.0,222.6 257.0,222.6 258.0,222.5 259.0,222.5 260.0,222.5 261.0,222.5 262.0,222.5 263.0,222.5 264.0,222.5 265.0,222.5 266.0,222.5 267.0,222.6 268.0,222.6 269.0,222.6 270.0,222.7 271.0,222.8 272.0,222.8 273.0,222.9 274.0,222.9 275.0,223.0 276.0,223.0 277.0,223.0 278.0,223.0 279.0,223.0 280.0,223.0 281.0,222.9 282.0,222.9 283.0,222.8 284.0,222.8 285.0,222.7 286.0,222.7 287.0,222.6 288.0,222.6 289.0,222.6 290.0,222.6 291.0,222.6 292.0,222.6 293.0,222.7 294.0,222.7 295.0,222.7 296.0,222.7 297.0,222.7 298.0,222.8 299.0,222.8 300.0,222.8 301.0,222.8 302.0,222.8 303.0,222.8 304.0,222.7 305.0,222.7 306.0,222.7 307.0,222.7 308.0,222.7 309.0,222.6 310.0,222.6 311.0,222.6 312.0,222.6 313.0,222.6 314.0,222.6 315.0,222.6 316.0,222.6 317.0,222.7 318.0,222.7 319.0,222.7 320.0,222.7 321.0,222.8 322.0,222.8 323.0,222.8 324.0,222.8 325.0,222.8 326.0,222.8 327.0,222.8 328.0,222.7 329.0,222.7 330.0,222.7 331.0,222.7 332.0,222.6 333.0,222.6 334.0,222.6 335.0,222.6 336.0,222.5 337.0,222.5 338.0,222.5 339.0,222.5 340.0,222.5 341.0,222.4 342.0,222.4 343.0,222.4 344.0,222.4 345.0,222.4 346.0,222.3 347.0,222.3 348.0,222.3 349.0,222.4 350.0,222.4 351.0,222.5 352.0,222.6 353.0,222.7 354.0,222.8 355.0,222.9 356.0,223.0 357.0,223.1 358.0,223.2 359.0,223.2 360.0,223.2 361.0,223.2 362.0,223.2 363.0,223.2 364.0,223.2 365.0,223.2 366.0,223.2 367.0,223.2 368.0,223.2 369.0,223.2 370.0,223.2 371.0,223.2 372.0,223.2 373.0,223.2 374.0,223.2 375.0,223.2 376.0,223.1 377.0,223.1 378.0,223.1 379.0,223.1 380.0,223.1 381.0,223.0 382.0,223.0 383.0,223.0 384.0,223.0 385.0,223.0 386.0,223.0 387.0,223.0 388.0,223.0 389.0,222.9 390.0,222.9 391.0,222.9 392.0,222.9 393.0,222.9 394.0,222.9 395.0,222.8 396.0,222.8 397.0,222.8 398.0,222.7 399.0,222.7 400.0,222.6 401.0,222.6 402.0,222.5 403.0,222.5 404.0,222.4 405.0,222.4 406.0,222.4 407.0,222.4 408.0,222.3 409.0,222.3 410.0,222.3 411.0,222.3 412.0,222.3 413.0,222.3 414.0,222.3 415.0,222.3 416.0,222.3 417.0,222.3 418.0,222.3 419.0,222.3 420.0,222.3 421.0,222.3 422.0,222.3 423.0,222.3 424.0,222.3 425.0,222.3 426.0,222.3 427.0,222.3 428.0,222.3 429.0,222.3 430.0,222.3 431.0,222.3 432.0,222.3 433.0,222.3 434.0,222.3 435.0,222.2 436.0,222.2 437.0,222.2 438.0,222.1 439.0,222.1 440.0,222.1 441.0,222.1 442.0,222.1 443.0,222.1 444.0,222.2 445.0,222.3 446.0,222.4 447.0,222.5 448.0,222.6 449.0,222.7 450.0,222.8 451.0,222.8 452.0,222.9 453.0,222.9 454.0,222.9 455.0,222.9 456.0,222.9 457.0,222.8 458.0,222.8 459.0,222.7 460.0,222.6 461.0,222.6 462.0,222.5 463.0,222.5 464.0,222.5 465.0,222.5 466.0,222.5 467.0,222.5 468.0,222.6 469.0,222.6 470.0,222.7 471.0,222.8 472.0,222.8 473.0,222.9 474.0,223.0 475.0,223.0 476.0,223.0 477.0,223.0 478.0,223.0 479.0,223.0 480.0,222.9 481.0,222.8 482.0,222.8 483.0,222.7 484.0,222.6 485.0,222.6 486.0,222.5 487.0,222.5 488.0,222.5 489.0,222.5 490.0,222.5 491.0,222.6 492.0,222.6 493.0,222.7 494.0,222.8 495.0,222.9 496.0,223.0 497.0,223.0 498.0,223.1 499.0,223.1 500.0,223.1 501.0,223.1 502.0,223.1 503.0,223.1 504.0,223.1 505.0,223.1 506.0,223.1 507.0,223.1 508.0,223.1 509.0,223.1 510.0,223.1 511.0,223.0 512.0,223.0 513.0,223.0 514.0,222.9 515.0,222.8 516.0,222.7 517.0,222.5 518.0,222.4 519.0,222.3 520.0,222.2 521.0,222.1 522.0,222.0 523.0,222.0 524.0,222.0 525.0,222.0 526.0,222.0 527.0,222.0 528.0,222.0 529.0,222.1 530.0,222.1 531.0,222.1 532.0,222.1 533.0,222.2 534.0,222.2 535.0,222.2 536.0,222.3 537.0,222.4 538.0,222.4 539.0,222.5 540.0,222.6 541.0,222.7 542.0,222.8 543.0,222.9 544.0,223.0 545.0,223.0 546.0,223.1 547.0,223.1 548.0,223.1 549.0,223.0 550.0,223.0 551.0,222.9 552.0,222.9 553.0,222.8 554.0,222.7 555.0,222.7 556.0,222.6 557.0,222.6 558.0,222.6 559.0,222.6 560.0,222.6 561.0,222.6 562.0,222.7 563.0,222.8 564.0,222.8 565.0,222.9 566.0,223.0 567.0,223.1 568.0,223.1 569.0,223.2 570.0,223.2 571.0,223.2 572.0,223.2 573.0,223.2 574.0,223.2 575.0,223.2 576.0,223.2 577.0,223.2 578.0,223.2 579.0,223.1 580.0,223.1 581.0,223.1 582.0,223.0 583.0,222.7 584.0,222.2 585.0,221.7 586.0,221.2 587.0,220.6 588.0,220.2 589.0,219.9 590.0,219.8 591.0,219.9 592.0,220.1 593.0,220.5 594.0,221.0 595.0,221.4 596.0,221.8 597.0,222.2 598.0,222.5 599.0,222.6 600.0,222.6 601.0,222.6 602.0,222.5 603.0,222.5 604.0,222.5 605.0,222.5 606.0,222.5 607.0,222.4 608.0,222.4 609.0,222.4 610.0,222.3 611.0,222.3 612.0,222.2 613.0,222.2 614.0,222.1 615.0,222.1 616.0,222.1 617.0,222.1 618.0,222.1 619.0,222.1 620.0,222.2 621.0,222.2 622.0,222.3 623.0,222.4 624.0,222.4 625.0,222.5 626.0,222.6 627.0,222.7 628.0,222.7 629.0,222.8 630.0,222.8 631.0,222.8 632.0,222.8 633.0,222.9 634.0,222.9 635.0,222.9 636.0,222.9 637.0,222.9 638.0,222.9 639.0,222.9 640.0,222.9 641.0,222.9 642.0,222.9 643.0,222.9 644.0,222.8 645.0,222.8 646.0,222.7 647.0,222.7 648.0,222.6 649.0,222.5 650.0,222.5 651.0,222.4 652.0,222.3 653.0,222.3 654.0,222.3 655.0,222.3 656.0,222.2 657.0,222.2 658.0,222.2 659.0,222.2 660.0,222.2 661.0,222.1 662.0,222.0 663.0,222.0 664.0,221.9 665.0,221.8 666.0,221.7 667.0,221.6 668.0,221.5 669.0,221.5 670.0,221.5 671.0,221.6 672.0,221.8 673.0,221.9 674.0,222.1 675.0,222.2 676.0,222.3 677.0,222.4 678.0,222.4 679.0,222.3 680.0,222.3 681.0,222.3 682.0,222.2 683.0,222.2 684.0,222.2 685.0,222.1 686.0,222.1 687.0,222.1 688.0,222.1 689.0,222.1 690.0,222.1 691.0,222.1 692.0,222.1 693.0,222.2 694.0,222.2 695.0,222.2 696.0,222.3 697.0,222.3 698.0,222.3 699.0,222.4 700.0,222.4 701.0,222.5 702.0,222.6 703.0,222.6 704.0,222.7 705.0,222.8 706.0,222.9 707.0,223.0 708.0,223.1 709.0,223.1 710.0,223.1 711.0,223.2 712.0,223.2 713.0,223.2 714.0,223.1 715.0,223.1 716.0,223.1 717.0,223.1 718.0,223.1 719.0,223.0 720.0,223.0 721.0,223.0 722.0,222.9 723.0,222.9 724.0,222.9 725.0,222.8 726.0,222.7 727.0,222.6 728.0,222.5 729.0,222.4 730.0,222.4 731.0,222.3 732.0,222.2 733.0,222.2 734.0,222.1 735.0,222.1 736.0,222.1 737.0,222.2 738.0,222.2 739.0,222.2 740.0,222.2 741.0,222.2 742.0,222.2 743.0,222.3 744.0,222.3 745.0,222.3 746.0,222.3 747.0,222.3 748.0,222.3 749.0,222.3 750.0,222.3 751.0,222.2 752.0,222.2 753.0,222.2 754.0,222.2 755.0,222.2 756.0,222.1 757.0,222.1 758.0,222.1 759.0,222.1 760.0,222.1 761.0,222.1 762.0,222.1 763.0,222.1 764.0,222.1 765.0,222.1 766.0,222.1 767.0,222.1 768.0,222.1 769.0,222.1 770.0,222.1 771.0,222.1 772.0,222.2 773.0,222.2 774.0,222.3 775.0,222.4 776.0,222.6 777.0,222.7 778.0,222.8 779.0,222.9 780.0,222.9 781.0,223.0 782.0,223.0 783.0,222.9 784.0,222.9 785.0,222.8 786.0,222.7 787.0,222.6 788.0,222.5 789.0,222.4 790.0,222.4 791.0,222.3 792.0,222.2 793.0,222.2 794.0,222.2 795.0,222.2 796.0,222.3 797.0,222.3 798.0,222.4 799.0,222.4 800.0,222.5 801.0,222.5 802.0,222.6 803.0,222.6 804.0,222.7 805.0,222.7 806.0,222.7 807.0,222.7 808.0,222.7 809.0,222.7 810.0,222.6 811.0,222.6 812.0,222.6 813.0,222.6 814.0,222.6 815.0,222.6 816.0,222.6 817.0,222.5 818.0,222.5 819.0,222.5 820.0,222.4 821.0,222.4 822.0,222.4 823.0,222.3 824.0,222.3 825.0,222.3 826.0,222.3 827.0,222.2 828.0,222.2 829.0,222.2 830.0,222.3 831.0,222.3 832.0,222.4 833.0,222.4 834.0,222.5 835.0,222.6 836.0,222.7 837.0,222.8 838.0,222.8 839.0,222.9 840.0,222.9 841.0,222.9 842.0,222.8 843.0,222.8 844.0,222.7 845.0,222.6 846.0,222.5 847.0,222.4 848.0,222.3 849.0,222.3 850.0,222.2 851.0,222.2 852.0,222.2 853.0,222.2 854.0,222.2 855.0,222.3 856.0,222.3 857.0,222.4 858.0,222.5 859.0,222.6 860.0,222.6 861.0,222.7 862.0,222.7 863.0,222.8 864.0,222.8 865.0,222.7 866.0,222.7 867.0,222.6 868.0,222.6 869.0,222.5 870.0,222.4 871.0,222.3 872.0,222.3 873.0,222.2 874.0,222.2 875.0,222.1 876.0,222.1 877.0,222.2 878.0,222.2 879.0,222.2 880.0,222.3 881.0,222.3 882.0,222.4 883.0,222.4 884.0,222.4 885.0,222.5 886.0,222.5 887.0,222.5 888.0,222.5 889.0,222.5 890.0,222.5 891.0,222.4 892.0,222.4 893.0,222.4 894.0,222.4 895.0,222.3 896.0,222.3 897.0,222.3 898.0,222.3 899.0,222.3 900.0,222.3 901.0,222.3 902.0,222.3 903.0,222.2 904.0,222.2 905.0,222.2 906.0,222.2 907.0,222.2 908.0,222.2 909.0,222.0 910.0,221.8 911.0,221.5 912.0,221.2 913.0,221.0 914.0,220.9 915.0,220.8 916.0,220.9 917.0,221.1 918.0,221.4 919.0,221.7 920.0,222.0 921.0,222.3 922.0,222.5 923.0,222.6 924.0,222.6 925.0,222.6 926.0,222.6 927.0,222.5 928.0,222.5 929.0,222.4 930.0,222.4 931.0,222.4 932.0,222.3 933.0,222.3 934.0,222.3 935.0,222.3 936.0,222.4 937.0,222.5 938.0,222.5 939.0,222.6 940.0,222.8 941.0,222.9 942.0,223.0 943.0,223.0 944.0,223.1 945.0,223.2 946.0,223.2 947.0,223.2 948.0,223.2 949.0,223.1 950.0,223.1 951.0,223.1 952.0,223.1 953.0,223.1 954.0,223.1 955.0,223.0 956.0,223.0 957.0,223.0 958.0,222.9 959.0,222.9 960.0,222.8 961.0,222.8 962.0,222.7 963.0,222.6 964.0,222.6 965.0,222.5 966.0,222.5 967.0,222.4 968.0,222.4 969.0,222.4 970.0,222.4 971.0,222.4 972.0,222.5 973.0,222.5 974.0,222.6 975.0,222.7 976.0,222.8 977.0,222.9 978.0,223.0 979.0,223.0 980.0,223.0 981.0,223.1 982.0,223.0 983.0,223.0 984.0,222.9 985.0,222.8 986.0,222.7 987.0,222.6 988.0,222.5 989.0,222.4 990.0,222.4 991.0,222.3 992.0,222.3 993.0,222.3 994.0,222.3 995.0,222.4 996.0,222.5 997.0,222.6 998.0,222.6 999.0,222.3 1000.0,221.5 1001.0,220.5 1002.0,219.2 1003.0,218.0 1004.0,216.9 1005.0,216.1 1006.0,215.8 1007.0,216.1 1008.0,216.9 1009.0,218.0 1010.0,219.3 1011.0,220.5 1012.0,221.6 1013.0,222.4 1014.0,222.7 1015.0,222.6 1016.0,222.5 1017.0,222.5 1018.0,222.5 1019.0,222.6 1020.0,222.6 1021.0,222.7 1022.0,222.7 1023.0,222.8 1024.0,222.9 1025.0,222.9 1026.0,223.0 1027.0,223.0 1028.0,223.0 1029.0,223.0 1030.0,223.0 1031.0,223.0 1032.0,223.0 1033.0,223.0 1034.0,222.9 1035.0,222.9 1036.0,222.9 1037.0,222.9 1038.0,222.8 1039.0,222.8 1040.0,222.8 1041.0,222.7 1042.0,222.6 1043.0,222.6 1044.0,222.5 1045.0,222.4 1046.0,222.3 1047.0,222.3 1048.0,222.2 1049.0,222.2 1050.0,222.1 1051.0,222.1 1052.0,222.1 1053.0,222.2 1054.0,222.3 1055.0,222.4 1056.0,222.5 1057.0,222.6 1058.0,222.8 1059.0,222.9 1060.0,223.0 1061.0,223.1 1062.0,223.2 1063.0,223.2 1064.0,223.2 1065.0,223.1 1066.0,223.0 1067.0,222.9 1068.0,222.8 1069.0,222.7 1070.0,222.6 1071.0,222.5 1072.0,222.4 1073.0,222.3 1074.0,222.3 1075.0,222.3 1076.0,222.3 1077.0,222.3 1078.0,222.3 1079.0,222.3 1080.0,222.3 1081.0,222.3 1082.0,222.3 1083.0,222.3 1084.0,222.3 1085.0,222.3 1086.0,222.3 1087.0,222.3 1088.0,222.4 1089.0,222.4 1090.0,222.5 1091.0,222.5 1092.0,222.6 1093.0,222.7 1094.0,222.8 1095.0,222.8 1096.0,222.9 1097.0,222.9 1098.0,222.9 1099.0,222.9 1100.0,222.9 1101.0,222.9 1102.0,222.8 1103.0,222.7 1104.0,222.7 1105.0,222.6 1106.0,222.6 1107.0,222.5 1108.0,222.4 1109.0,222.4 1110.0,222.4 1111.0,222.4 1112.0,222.4 1113.0,222.4 1114.0,222.4 1115.0,222.4 1116.0,222.4 1117.0,222.4 1118.0,222.4 1119.0,222.4 1120.0,222.4 1121.0,222.4 1122.0,222.4 1123.0,222.3 1124.0,222.3 1125.0,222.3 1126.0,222.3 1127.0,222.2 1128.0,222.2 1129.0,222.2 1130.0,222.1 1131.0,222.1 1132.0,222.1 1133.0,222.1 1134.0,222.1 1135.0,222.1 1136.0,222.1 1137.0,222.1 1138.0,222.1 1139.0,222.1 1140.0,222.1 1141.0,222.1 1142.0,222.1 1143.0,222.1 1144.0,222.1 1145.0,222.1 1146.0,222.1 1147.0,222.2 1148.0,222.2 1149.0,222.3 1150.0,222.3 1151.0,222.4 1152.0,222.5 1153.0,222.6 1154.0,222.6 1155.0,222.7 1156.0,222.7 1157.0,222.7 1158.0,222.7 1159.0,222.7 1160.0,222.6 1161.0,222.6 1162.0,222.5 1163.0,222.5 1164.0,222.4 1165.0,222.4 1166.0,222.3 1167.0,222.3 1168.0,222.3 1169.0,222.3 1170.0,222.3 1171.0,222.3 1172.0,222.4 1173.0,222.4 1174.0,222.5 1175.0,222.5 1176.0,222.6 1177.0,222.6 1178.0,222.7 1179.0,222.7 1180.0,222.7 1181.0,222.7 1182.0,222.7 1183.0,222.7 1184.0,222.7 1185.0,222.6 1186.0,222.6 1187.0,222.6 1188.0,222.5 1189.0,222.5 1190.0,222.5 1191.0,222.5 1192.0,222.4 1193.0,222.4 1194.0,222.4 1195.0,222.4 1196.0,222.4 1197.0,222.5 1198.0,222.5 1199.0,222.5 1200.0,222.5 1201.0,222.5 1202.0,222.5 1203.0,222.5 1204.0,222.5 1205.0,222.6 1206.0,222.6 1207.0,222.7 1208.0,222.8 1209.0,222.8 1210.0,222.9 1211.0,223.0 1212.0,223.0 1213.0,223.1 1214.0,223.1 1215.0,223.1 1216.0,223.1 1217.0,223.1 1218.0,223.1 1219.0,223.0 1220.0,223.0 1221.0,222.9 1222.0,222.8 1223.0,222.8 1224.0,222.7 1225.0,222.6 1226.0,222.6 1227.0,222.6 1228.0,222.6 1229.0,222.6 1230.0,222.6 1231.0,222.6 1232.0,222.6 1233.0,222.6 1234.0,222.6 1235.0,222.6 1236.0,222.6 1237.0,222.7 1238.0,222.7 1239.0,222.7 1240.0,222.7 1241.0,222.7 1242.0,222.8 1243.0,222.8 1244.0,222.9 1245.0,222.9 1246.0,222.9 1247.0,223.0 1248.0,223.0 1249.0,223.0 1250.0,223.0 1251.0,223.0 1252.0,223.0 1253.0,223.0 1254.0,222.9 1255.0,222.8 1256.0,222.7 1257.0,222.6 1258.0,222.5 1259.0,222.4 1260.0,222.3 1261.0,222.3 1262.0,222.2 1263.0,222.2 1264.0,222.2 1265.0,222.2 1266.0,222.2 1267.0,222.2 1268.0,222.2 1269.0,222.2 1270.0,222.2 1271.0,222.2 1272.0,222.2 1273.0,222.2 1274.0,222.2 1275.0,222.2 1276.0,222.2 1277.0,222.3 1278.0,222.4 1279.0,222.5 1280.0,222.6 1281.0,222.7 1282.0,222.9 1283.0,222.9 1284.0,223.0 1285.0,223.1 1286.0,223.1 1287.0,223.1 1288.0,223.1 1289.0,223.1 1290.0,223.1 1291.0,223.1 1292.0,223.1 1293.0,223.1 1294.0,223.1 1295.0,223.0 1296.0,223.0 1297.0,223.0 1298.0,223.0 1299.0,222.9 1300.0,222.9 1301.0,222.8 1302.0,222.7 1303.0,222.7 1304.0,222.6 1305.0,222.5 1306.0,222.4 1307.0,222.4 1308.0,222.3 1309.0,222.3 1310.0,222.3 1311.0,222.3 1312.0,222.3 1313.0,222.3 1314.0,222.2 1315.0,222.2 1316.0,222.2 1317.0,222.2 1318.0,222.2 1319.0,222.2 1320.0,222.2 1321.0,222.2 1322.0,222.3 1323.0,222.3 1324.0,222.4 1325.0,222.5 1326.0,222.6 1327.0,222.7 1328.0,222.8 1329.0,222.7 1330.0,222.5 1331.0,222.2 1332.0,221.9 1333.0,221.6 1334.0,221.3 1335.0,221.1 1336.0,221.0 1337.0,221.1 1338.0,221.3 1339.0,221.6 1340.0,222.0 1341.0,222.3 1342.0,222.6 1343.0,222.9 1344.0,223.0 1345.0,222.9 1346.0,222.9 1347.0,222.9 1348.0,222.9 1349.0,223.0 1350.0,223.0 1351.0,223.0 1352.0,223.1 1353.0,223.1 1354.0,223.1 1355.0,223.1 1356.0,223.1 1357.0,222.2 L1357.0,224 Z" fill="rgba(120,170,230,0.25)"/><path d="M66.0,222.8 L67.0,222.8 L68.0,222.7 L69.0,222.6 L70.0,222.5 L71.0,222.4 L72.0,222.3 L73.0,222.3 L74.0,222.2 L75.0,222.1 L76.0,222.1 L77.0,222.1 L78.0,222.1 L79.0,222.1 L80.0,222.2 L81.0,222.3 L82.0,222.4 L83.0,222.5 L84.0,222.7 L85.0,222.8 L86.0,222.9 L87.0,223.1 L88.0,223.1 L89.0,223.2 L90.0,223.2 L91.0,223.2 L92.0,223.2 L93.0,223.2 L94.0,223.2 L95.0,223.2 L96.0,223.2 L97.0,223.2 L98.0,223.2 L99.0,223.2 L100.0,223.2 L101.0,223.2 L102.0,223.1 L103.0,223.1 L104.0,223.1 L105.0,223.1 L106.0,223.0 L107.0,223.0 L108.0,222.9 L109.0,222.9 L110.0,222.8 L111.0,222.8 L112.0,222.8 L113.0,222.8 L114.0,222.8 L115.0,222.8 L116.0,222.8 L117.0,222.8 L118.0,222.8 L119.0,222.8 L120.0,222.8 L121.0,222.8 L122.0,222.8 L123.0,222.8 L124.0,222.7 L125.0,222.7 L126.0,222.7 L127.0,222.7 L128.0,222.6 L129.0,222.6 L130.0,222.5 L131.0,222.5 L132.0,222.4 L133.0,222.3 L134.0,222.2 L135.0,222.2 L136.0,222.1 L137.0,222.0 L138.0,221.9 L139.0,221.8 L140.0,221.7 L141.0,221.6 L142.0,221.6 L143.0,221.5 L144.0,221.5 L145.0,221.6 L146.0,221.7 L147.0,222.0 L148.0,222.2 L149.0,222.5 L150.0,222.7 L151.0,222.9 L152.0,223.0 L153.0,222.9 L154.0,222.8 L155.0,222.7 L156.0,222.6 L157.0,222.4 L158.0,222.3 L159.0,222.2 L160.0,222.2 L161.0,222.4 L162.0,222.5 L163.0,222.3 L164.0,221.6 L165.0,220.7 L166.0,219.5 L167.0,218.3 L168.0,217.2 L169.0,216.2 L170.0,215.5 L171.0,215.3 L172.0,215.6 L173.0,216.2 L174.0,217.2 L175.0,218.4 L176.0,219.6 L177.0,220.8 L178.0,221.7 L179.0,222.4 L180.0,222.7 L181.0,222.5 L182.0,222.2 L183.0,222.0 L184.0,222.0 L185.0,222.1 L186.0,222.1 L187.0,222.2 L188.0,222.2 L189.0,222.3 L190.0,222.4 L191.0,222.5 L192.0,222.5 L193.0,222.6 L194.0,222.6 L195.0,222.6 L196.0,222.6 L197.0,222.6 L198.0,222.5 L199.0,222.5 L200.0,222.4 L201.0,222.3 L202.0,222.3 L203.0,222.2 L204.0,222.2 L205.0,222.1 L206.0,222.1 L207.0,222.1 L208.0,222.1 L209.0,222.1 L210.0,222.1 L211.0,222.1 L212.0,222.1 L213.0,222.1 L214.0,222.2 L215.0,222.2 L216.0,222.2 L217.0,222.2 L218.0,222.2 L219.0,222.2 L220.0,222.2 L221.0,222.3 L222.0,222.3 L223.0,222.3 L224.0,222.3 L225.0,222.3 L226.0,222.3 L227.0,222.3 L228.0,222.3 L229.0,222.3 L230.0,222.3 L231.0,222.3 L232.0,222.3 L233.0,222.3 L234.0,222.2 L235.0,222.2 L236.0,222.2 L237.0,222.1 L238.0,222.1 L239.0,222.1 L240.0,222.1 L241.0,222.0 L242.0,222.0 L243.0,222.0 L244.0,222.1 L245.0,222.1 L246.0,222.2 L247.0,222.2 L248.0,222.3 L249.0,222.4 L250.0,222.4 L251.0,222.5 L252.0,222.5 L253.0,222.6 L254.0,222.6 L255.0,222.6 L256.0,222.6 L257.0,222.6 L258.0,222.5 L259.0,222.5 L260.0,222.5 L261.0,222.5 L262.0,222.5 L263.0,222.5 L264.0,222.5 L265.0,222.5 L266.0,222.5 L267.0,222.6 L268.0,222.6 L269.0,222.6 L270.0,222.7 L271.0,222.8 L272.0,222.8 L273.0,222.9 L274.0,222.9 L275.0,223.0 L276.0,223.0 L277.0,223.0 L278.0,223.0 L279.0,223.0 L280.0,223.0 L281.0,222.9 L282.0,222.9 L283.0,222.8 L284.0,222.8 L285.0,222.7 L286.0,222.7 L287.0,222.6 L288.0,222.6 L289.0,222.6 L290.0,222.6 L291.0,222.6 L292.0,222.6 L293.0,222.7 L294.0,222.7 L295.0,222.7 L296.0,222.7 L297.0,222.7 L298.0,222.8 L299.0,222.8 L300.0,222.8 L301.0,222.8 L302.0,222.8 L303.0,222.8 L304.0,222.7 L305.0,222.7 L306.0,222.7 L307.0,222.7 L308.0,222.7 L309.0,222.6 L310.0,222.6 L311.0,222.6 L312.0,222.6 L313.0,222.6 L314.0,222.6 L315.0,222.6 L316.0,222.6 L317.0,222.7 L318.0,222.7 L319.0,222.7 L320.0,222.7 L321.0,222.8 L322.0,222.8 L323.0,222.8 L324.0,222.8 L325.0,222.8 L326.0,222.8 L327.0,222.8 L328.0,222.7 L329.0,222.7 L330.0,222.7 L331.0,222.7 L332.0,222.6 L333.0,222.6 L334.0,222.6 L335.0,222.6 L336.0,222.5 L337.0,222.5 L338.0,222.5 L339.0,222.5 L340.0,222.5 L341.0,222.4 L342.0,222.4 L343.0,222.4 L344.0,222.4 L345.0,222.4 L346.0,222.3 L347.0,222.3 L348.0,222.3 L349.0,222.4 L350.0,222.4 L351.0,222.5 L352.0,222.6 L353.0,222.7 L354.0,222.8 L355.0,222.9 L356.0,223.0 L357.0,223.1 L358.0,223.2 L359.0,223.2 L360.0,223.2 L361.0,223.2 L362.0,223.2 L363.0,223.2 L364.0,223.2 L365.0,223.2 L366.0,223.2 L367.0,223.2 L368.0,223.2 L369.0,223.2 L370.0,223.2 L371.0,223.2 L372.0,223.2 L373.0,223.2 L374.0,223.2 L375.0,223.2 L376.0,223.1 L377.0,223.1 L378.0,223.1 L379.0,223.1 L380.0,223.1 L381.0,223.0 L382.0,223.0 L383.0,223.0 L384.0,223.0 L385.0,223.0 L386.0,223.0 L387.0,223.0 L388.0,223.0 L389.0,222.9 L390.0,222.9 L391.0,222.9 L392.0,222.9 L393.0,222.9 L394.0,222.9 L395.0,222.8 L396.0,222.8 L397.0,222.8 L398.0,222.7 L399.0,222.7 L400.0,222.6 L401.0,222.6 L402.0,222.5 L403.0,222.5 L404.0,222.4 L405.0,222.4 L406.0,222.4 L407.0,222.4 L408.0,222.3 L409.0,222.3 L410.0,222.3 L411.0,222.3 L412.0,222.3 L413.0,222.3 L414.0,222.3 L415.0,222.3 L416.0,222.3 L417.0,222.3 L418.0,222.3 L419.0,222.3 L420.0,222.3 L421.0,222.3 L422.0,222.3 L423.0,222.3 L424.0,222.3 L425.0,222.3 L426.0,222.3 L427.0,222.3 L428.0,222.3 L429.0,222.3 L430.0,222.3 L431.0,222.3 L432.0,222.3 L433.0,222.3 L434.0,222.3 L435.0,222.2 L436.0,222.2 L437.0,222.2 L438.0,222.1 L439.0,222.1 L440.0,222.1 L441.0,222.1 L442.0,222.1 L443.0,222.1 L444.0,222.2 L445.0,222.3 L446.0,222.4 L447.0,222.5 L448.0,222.6 L449.0,222.7 L450.0,222.8 L451.0,222.8 L452.0,222.9 L453.0,222.9 L454.0,222.9 L455.0,222.9 L456.0,222.9 L457.0,222.8 L458.0,222.8 L459.0,222.7 L460.0,222.6 L461.0,222.6 L462.0,222.5 L463.0,222.5 L464.0,222.5 L465.0,222.5 L466.0,222.5 L467.0,222.5 L468.0,222.6 L469.0,222.6 L470.0,222.7 L471.0,222.8 L472.0,222.8 L473.0,222.9 L474.0,223.0 L475.0,223.0 L476.0,223.0 L477.0,223.0 L478.0,223.0 L479.0,223.0 L480.0,222.9 L481.0,222.8 L482.0,222.8 L483.0,222.7 L484.0,222.6 L485.0,222.6 L486.0,222.5 L487.0,222.5 L488.0,222.5 L489.0,222.5 L490.0,222.5 L491.0,222.6 L492.0,222.6 L493.0,222.7 L494.0,222.8 L495.0,222.9 L496.0,223.0 L497.0,223.0 L498.0,223.1 L499.0,223.1 L500.0,223.1 L501.0,223.1 L502.0,223.1 L503.0,223.1 L504.0,223.1 L505.0,223.1 L506.0,223.1 L507.0,223.1 L508.0,223.1 L509.0,223.1 L510.0,223.1 L511.0,223.0 L512.0,223.0 L513.0,223.0 L514.0,222.9 L515.0,222.8 L516.0,222.7 L517.0,222.5 L518.0,222.4 L519.0,222.3 L520.0,222.2 L521.0,222.1 L522.0,222.0 L523.0,222.0 L524.0,222.0 L525.0,222.0 L526.0,222.0 L527.0,222.0 L528.0,222.0 L529.0,222.1 L530.0,222.1 L531.0,222.1 L532.0,222.1 L533.0,222.2 L534.0,222.2 L535.0,222.2 L536.0,222.3 L537.0,222.4 L538.0,222.4 L539.0,222.5 L540.0,222.6 L541.0,222.7 L542.0,222.8 L543.0,222.9 L544.0,223.0 L545.0,223.0 L546.0,223.1 L547.0,223.1 L548.0,223.1 L549.0,223.0 L550.0,223.0 L551.0,222.9 L552.0,222.9 L553.0,222.8 L554.0,222.7 L555.0,222.7 L556.0,222.6 L557.0,222.6 L558.0,222.6 L559.0,222.6 L560.0,222.6 L561.0,222.6 L562.0,222.7 L563.0,222.8 L564.0,222.8 L565.0,222.9 L566.0,223.0 L567.0,223.1 L568.0,223.1 L569.0,223.2 L570.0,223.2 L571.0,223.2 L572.0,223.2 L573.0,223.2 L574.0,223.2 L575.0,223.2 L576.0,223.2 L577.0,223.2 L578.0,223.2 L579.0,223.1 L580.0,223.1 L581.0,223.1 L582.0,223.0 L583.0,222.7 L584.0,222.2 L585.0,221.7 L586.0,221.2 L587.0,220.6 L588.0,220.2 L589.0,219.9 L590.0,219.8 L591.0,219.9 L592.0,220.1 L593.0,220.5 L594.0,221.0 L595.0,221.4 L596.0,221.8 L597.0,222.2 L598.0,222.5 L599.0,222.6 L600.0,222.6 L601.0,222.6 L602.0,222.5 L603.0,222.5 L604.0,222.5 L605.0,222.5 L606.0,222.5 L607.0,222.4 L608.0,222.4 L609.0,222.4 L610.0,222.3 L611.0,222.3 L612.0,222.2 L613.0,222.2 L614.0,222.1 L615.0,222.1 L616.0,222.1 L617.0,222.1 L618.0,222.1 L619.0,222.1 L620.0,222.2 L621.0,222.2 L622.0,222.3 L623.0,222.4 L624.0,222.4 L625.0,222.5 L626.0,222.6 L627.0,222.7 L628.0,222.7 L629.0,222.8 L630.0,222.8 L631.0,222.8 L632.0,222.8 L633.0,222.9 L634.0,222.9 L635.0,222.9 L636.0,222.9 L637.0,222.9 L638.0,222.9 L639.0,222.9 L640.0,222.9 L641.0,222.9 L642.0,222.9 L643.0,222.9 L644.0,222.8 L645.0,222.8 L646.0,222.7 L647.0,222.7 L648.0,222.6 L649.0,222.5 L650.0,222.5 L651.0,222.4 L652.0,222.3 L653.0,222.3 L654.0,222.3 L655.0,222.3 L656.0,222.2 L657.0,222.2 L658.0,222.2 L659.0,222.2 L660.0,222.2 L661.0,222.1 L662.0,222.0 L663.0,222.0 L664.0,221.9 L665.0,221.8 L666.0,221.7 L667.0,221.6 L668.0,221.5 L669.0,221.5 L670.0,221.5 L671.0,221.6 L672.0,221.8 L673.0,221.9 L674.0,222.1 L675.0,222.2 L676.0,222.3 L677.0,222.4 L678.0,222.4 L679.0,222.3 L680.0,222.3 L681.0,222.3 L682.0,222.2 L683.0,222.2 L684.0,222.2 L685.0,222.1 L686.0,222.1 L687.0,222.1 L688.0,222.1 L689.0,222.1 L690.0,222.1 L691.0,222.1 L692.0,222.1 L693.0,222.2 L694.0,222.2 L695.0,222.2 L696.0,222.3 L697.0,222.3 L698.0,222.3 L699.0,222.4 L700.0,222.4 L701.0,222.5 L702.0,222.6 L703.0,222.6 L704.0,222.7 L705.0,222.8 L706.0,222.9 L707.0,223.0 L708.0,223.1 L709.0,223.1 L710.0,223.1 L711.0,223.2 L712.0,223.2 L713.0,223.2 L714.0,223.1 L715.0,223.1 L716.0,223.1 L717.0,223.1 L718.0,223.1 L719.0,223.0 L720.0,223.0 L721.0,223.0 L722.0,222.9 L723.0,222.9 L724.0,222.9 L725.0,222.8 L726.0,222.7 L727.0,222.6 L728.0,222.5 L729.0,222.4 L730.0,222.4 L731.0,222.3 L732.0,222.2 L733.0,222.2 L734.0,222.1 L735.0,222.1 L736.0,222.1 L737.0,222.2 L738.0,222.2 L739.0,222.2 L740.0,222.2 L741.0,222.2 L742.0,222.2 L743.0,222.3 L744.0,222.3 L745.0,222.3 L746.0,222.3 L747.0,222.3 L748.0,222.3 L749.0,222.3 L750.0,222.3 L751.0,222.2 L752.0,222.2 L753.0,222.2 L754.0,222.2 L755.0,222.2 L756.0,222.1 L757.0,222.1 L758.0,222.1 L759.0,222.1 L760.0,222.1 L761.0,222.1 L762.0,222.1 L763.0,222.1 L764.0,222.1 L765.0,222.1 L766.0,222.1 L767.0,222.1 L768.0,222.1 L769.0,222.1 L770.0,222.1 L771.0,222.1 L772.0,222.2 L773.0,222.2 L774.0,222.3 L775.0,222.4 L776.0,222.6 L777.0,222.7 L778.0,222.8 L779.0,222.9 L780.0,222.9 L781.0,223.0 L782.0,223.0 L783.0,222.9 L784.0,222.9 L785.0,222.8 L786.0,222.7 L787.0,222.6 L788.0,222.5 L789.0,222.4 L790.0,222.4 L791.0,222.3 L792.0,222.2 L793.0,222.2 L794.0,222.2 L795.0,222.2 L796.0,222.3 L797.0,222.3 L798.0,222.4 L799.0,222.4 L800.0,222.5 L801.0,222.5 L802.0,222.6 L803.0,222.6 L804.0,222.7 L805.0,222.7 L806.0,222.7 L807.0,222.7 L808.0,222.7 L809.0,222.7 L810.0,222.6 L811.0,222.6 L812.0,222.6 L813.0,222.6 L814.0,222.6 L815.0,222.6 L816.0,222.6 L817.0,222.5 L818.0,222.5 L819.0,222.5 L820.0,222.4 L821.0,222.4 L822.0,222.4 L823.0,222.3 L824.0,222.3 L825.0,222.3 L826.0,222.3 L827.0,222.2 L828.0,222.2 L829.0,222.2 L830.0,222.3 L831.0,222.3 L832.0,222.4 L833.0,222.4 L834.0,222.5 L835.0,222.6 L836.0,222.7 L837.0,222.8 L838.0,222.8 L839.0,222.9 L840.0,222.9 L841.0,222.9 L842.0,222.8 L843.0,222.8 L844.0,222.7 L845.0,222.6 L846.0,222.5 L847.0,222.4 L848.0,222.3 L849.0,222.3 L850.0,222.2 L851.0,222.2 L852.0,222.2 L853.0,222.2 L854.0,222.2 L855.0,222.3 L856.0,222.3 L857.0,222.4 L858.0,222.5 L859.0,222.6 L860.0,222.6 L861.0,222.7 L862.0,222.7 L863.0,222.8 L864.0,222.8 L865.0,222.7 L866.0,222.7 L867.0,222.6 L868.0,222.6 L869.0,222.5 L870.0,222.4 L871.0,222.3 L872.0,222.3 L873.0,222.2 L874.0,222.2 L875.0,222.1 L876.0,222.1 L877.0,222.2 L878.0,222.2 L879.0,222.2 L880.0,222.3 L881.0,222.3 L882.0,222.4 L883.0,222.4 L884.0,222.4 L885.0,222.5 L886.0,222.5 L887.0,222.5 L888.0,222.5 L889.0,222.5 L890.0,222.5 L891.0,222.4 L892.0,222.4 L893.0,222.4 L894.0,222.4 L895.0,222.3 L896.0,222.3 L897.0,222.3 L898.0,222.3 L899.0,222.3 L900.0,222.3 L901.0,222.3 L902.0,222.3 L903.0,222.2 L904.0,222.2 L905.0,222.2 L906.0,222.2 L907.0,222.2 L908.0,222.2 L909.0,222.0 L910.0,221.8 L911.0,221.5 L912.0,221.2 L913.0,221.0 L914.0,220.9 L915.0,220.8 L916.0,220.9 L917.0,221.1 L918.0,221.4 L919.0,221.7 L920.0,222.0 L921.0,222.3 L922.0,222.5 L923.0,222.6 L924.0,222.6 L925.0,222.6 L926.0,222.6 L927.0,222.5 L928.0,222.5 L929.0,222.4 L930.0,222.4 L931.0,222.4 L932.0,222.3 L933.0,222.3 L934.0,222.3 L935.0,222.3 L936.0,222.4 L937.0,222.5 L938.0,222.5 L939.0,222.6 L940.0,222.8 L941.0,222.9 L942.0,223.0 L943.0,223.0 L944.0,223.1 L945.0,223.2 L946.0,223.2 L947.0,223.2 L948.0,223.2 L949.0,223.1 L950.0,223.1 L951.0,223.1 L952.0,223.1 L953.0,223.1 L954.0,223.1 L955.0,223.0 L956.0,223.0 L957.0,223.0 L958.0,222.9 L959.0,222.9 L960.0,222.8 L961.0,222.8 L962.0,222.7 L963.0,222.6 L964.0,222.6 L965.0,222.5 L966.0,222.5 L967.0,222.4 L968.0,222.4 L969.0,222.4 L970.0,222.4 L971.0,222.4 L972.0,222.5 L973.0,222.5 L974.0,222.6 L975.0,222.7 L976.0,222.8 L977.0,222.9 L978.0,223.0 L979.0,223.0 L980.0,223.0 L981.0,223.1 L982.0,223.0 L983.0,223.0 L984.0,222.9 L985.0,222.8 L986.0,222.7 L987.0,222.6 L988.0,222.5 L989.0,222.4 L990.0,222.4 L991.0,222.3 L992.0,222.3 L993.0,222.3 L994.0,222.3 L995.0,222.4 L996.0,222.5 L997.0,222.6 L998.0,222.6 L999.0,222.3 L1000.0,221.5 L1001.0,220.5 L1002.0,219.2 L1003.0,218.0 L1004.0,216.9 L1005.0,216.1 L1006.0,215.8 L1007.0,216.1 L1008.0,216.9 L1009.0,218.0 L1010.0,219.3 L1011.0,220.5 L1012.0,221.6 L1013.0,222.4 L1014.0,222.7 L1015.0,222.6 L1016.0,222.5 L1017.0,222.5 L1018.0,222.5 L1019.0,222.6 L1020.0,222.6 L1021.0,222.7 L1022.0,222.7 L1023.0,222.8 L1024.0,222.9 L1025.0,222.9 L1026.0,223.0 L1027.0,223.0 L1028.0,223.0 L1029.0,223.0 L1030.0,223.0 L1031.0,223.0 L1032.0,223.0 L1033.0,223.0 L1034.0,222.9 L1035.0,222.9 L1036.0,222.9 L1037.0,222.9 L1038.0,222.8 L1039.0,222.8 L1040.0,222.8 L1041.0,222.7 L1042.0,222.6 L1043.0,222.6 L1044.0,222.5 L1045.0,222.4 L1046.0,222.3 L1047.0,222.3 L1048.0,222.2 L1049.0,222.2 L1050.0,222.1 L1051.0,222.1 L1052.0,222.1 L1053.0,222.2 L1054.0,222.3 L1055.0,222.4 L1056.0,222.5 L1057.0,222.6 L1058.0,222.8 L1059.0,222.9 L1060.0,223.0 L1061.0,223.1 L1062.0,223.2 L1063.0,223.2 L1064.0,223.2 L1065.0,223.1 L1066.0,223.0 L1067.0,222.9 L1068.0,222.8 L1069.0,222.7 L1070.0,222.6 L1071.0,222.5 L1072.0,222.4 L1073.0,222.3 L1074.0,222.3 L1075.0,222.3 L1076.0,222.3 L1077.0,222.3 L1078.0,222.3 L1079.0,222.3 L1080.0,222.3 L1081.0,222.3 L1082.0,222.3 L1083.0,222.3 L1084.0,222.3 L1085.0,222.3 L1086.0,222.3 L1087.0,222.3 L1088.0,222.4 L1089.0,222.4 L1090.0,222.5 L1091.0,222.5 L1092.0,222.6 L1093.0,222.7 L1094.0,222.8 L1095.0,222.8 L1096.0,222.9 L1097.0,222.9 L1098.0,222.9 L1099.0,222.9 L1100.0,222.9 L1101.0,222.9 L1102.0,222.8 L1103.0,222.7 L1104.0,222.7 L1105.0,222.6 L1106.0,222.6 L1107.0,222.5 L1108.0,222.4 L1109.0,222.4 L1110.0,222.4 L1111.0,222.4 L1112.0,222.4 L1113.0,222.4 L1114.0,222.4 L1115.0,222.4 L1116.0,222.4 L1117.0,222.4 L1118.0,222.4 L1119.0,222.4 L1120.0,222.4 L1121.0,222.4 L1122.0,222.4 L1123.0,222.3 L1124.0,222.3 L1125.0,222.3 L1126.0,222.3 L1127.0,222.2 L1128.0,222.2 L1129.0,222.2 L1130.0,222.1 L1131.0,222.1 L1132.0,222.1 L1133.0,222.1 L1134.0,222.1 L1135.0,222.1 L1136.0,222.1 L1137.0,222.1 L1138.0,222.1 L1139.0,222.1 L1140.0,222.1 L1141.0,222.1 L1142.0,222.1 L1143.0,222.1 L1144.0,222.1 L1145.0,222.1 L1146.0,222.1 L1147.0,222.2 L1148.0,222.2 L1149.0,222.3 L1150.0,222.3 L1151.0,222.4 L1152.0,222.5 L1153.0,222.6 L1154.0,222.6 L1155.0,222.7 L1156.0,222.7 L1157.0,222.7 L1158.0,222.7 L1159.0,222.7 L1160.0,222.6 L1161.0,222.6 L1162.0,222.5 L1163.0,222.5 L1164.0,222.4 L1165.0,222.4 L1166.0,222.3 L1167.0,222.3 L1168.0,222.3 L1169.0,222.3 L1170.0,222.3 L1171.0,222.3 L1172.0,222.4 L1173.0,222.4 L1174.0,222.5 L1175.0,222.5 L1176.0,222.6 L1177.0,222.6 L1178.0,222.7 L1179.0,222.7 L1180.0,222.7 L1181.0,222.7 L1182.0,222.7 L1183.0,222.7 L1184.0,222.7 L1185.0,222.6 L1186.0,222.6 L1187.0,222.6 L1188.0,222.5 L1189.0,222.5 L1190.0,222.5 L1191.0,222.5 L1192.0,222.4 L1193.0,222.4 L1194.0,222.4 L1195.0,222.4 L1196.0,222.4 L1197.0,222.5 L1198.0,222.5 L1199.0,222.5 L1200.0,222.5 L1201.0,222.5 L1202.0,222.5 L1203.0,222.5 L1204.0,222.5 L1205.0,222.6 L1206.0,222.6 L1207.0,222.7 L1208.0,222.8 L1209.0,222.8 L1210.0,222.9 L1211.0,223.0 L1212.0,223.0 L1213.0,223.1 L1214.0,223.1 L1215.0,223.1 L1216.0,223.1 L1217.0,223.1 L1218.0,223.1 L1219.0,223.0 L1220.0,223.0 L1221.0,222.9 L1222.0,222.8 L1223.0,222.8 L1224.0,222.7 L1225.0,222.6 L1226.0,222.6 L1227.0,222.6 L1228.0,222.6 L1229.0,222.6 L1230.0,222.6 L1231.0,222.6 L1232.0,222.6 L1233.0,222.6 L1234.0,222.6 L1235.0,222.6 L1236.0,222.6 L1237.0,222.7 L1238.0,222.7 L1239.0,222.7 L1240.0,222.7 L1241.0,222.7 L1242.0,222.8 L1243.0,222.8 L1244.0,222.9 L1245.0,222.9 L1246.0,222.9 L1247.0,223.0 L1248.0,223.0 L1249.0,223.0 L1250.0,223.0 L1251.0,223.0 L1252.0,223.0 L1253.0,223.0 L1254.0,222.9 L1255.0,222.8 L1256.0,222.7 L1257.0,222.6 L1258.0,222.5 L1259.0,222.4 L1260.0,222.3 L1261.0,222.3 L1262.0,222.2 L1263.0,222.2 L1264.0,222.2 L1265.0,222.2 L1266.0,222.2 L1267.0,222.2 L1268.0,222.2 L1269.0,222.2 L1270.0,222.2 L1271.0,222.2 L1272.0,222.2 L1273.0,222.2 L1274.0,222.2 L1275.0,222.2 L1276.0,222.2 L1277.0,222.3 L1278.0,222.4 L1279.0,222.5 L1280.0,222.6 L1281.0,222.7 L1282.0,222.9 L1283.0,222.9 L1284.0,223.0 L1285.0,223.1 L1286.0,223.1 L1287.0,223.1 L1288.0,223.1 L1289.0,223.1 L1290.0,223.1 L1291.0,223.1 L1292.0,223.1 L1293.0,223.1 L1294.0,223.1 L1295.0,223.0 L1296.0,223.0 L1297.0,223.0 L1298.0,223.0 L1299.0,222.9 L1300.0,222.9 L1301.0,222.8 L1302.0,222.7 L1303.0,222.7 L1304.0,222.6 L1305.0,222.5 L1306.0,222.4 L1307.0,222.4 L1308.0,222.3 L1309.0,222.3 L1310.0,222.3 L1311.0,222.3 L1312.0,222.3 L1313.0,222.3 L1314.0,222.2 L1315.0,222.2 L1316.0,222.2 L1317.0,222.2 L1318.0,222.2 L1319.0,222.2 L1320.0,222.2 L1321.0,222.2 L1322.0,222.3 L1323.0,222.3 L1324.0,222.4 L1325.0,222.5 L1326.0,222.6 L1327.0,222.7 L1328.0,222.8 L1329.0,222.7 L1330.0,222.5 L1331.0,222.2 L1332.0,221.9 L1333.0,221.6 L1334.0,221.3 L1335.0,221.1 L1336.0,221.0 L1337.0,221.1 L1338.0,221.3 L1339.0,221.6 L1340.0,222.0 L1341.0,222.3 L1342.0,222.6 L1343.0,222.9 L1344.0,223.0 L1345.0,222.9 L1346.0,222.9 L1347.0,222.9 L1348.0,222.9 L1349.0,223.0 L1350.0,223.0 L1351.0,223.0 L1352.0,223.1 L1353.0,223.1 L1354.0,223.1 L1355.0,223.1 L1356.0,223.1 L1357.0,222.2" fill="none" stroke="#7fa9d9" stroke-width="0.8"/></svg>
<div class="t" style="left:211.0px;top:217.73px;font-size:5.4px;font-weight:normal;color:#9aa3aa;">01:00</div>
<div class="t" style="left:349.5px;top:217.73px;font-size:5.4px;font-weight:normal;color:#9aa3aa;">02:00</div>
<div class="t" style="left:488.0px;top:217.73px;font-size:5.4px;font-weight:normal;color:#9aa3aa;">03:00</div>
<div class="t" style="left:626.5px;top:217.73px;font-size:5.4px;font-weight:normal;color:#9aa3aa;">04:00</div>
<div class="t" style="left:765.0px;top:217.73px;font-size:5.4px;font-weight:normal;color:#9aa3aa;">05:00</div>
<div class="t" style="left:903.5px;top:217.73px;font-size:5.4px;font-weight:normal;color:#9aa3aa;">06:00</div>
<div class="t" style="left:1042.0px;top:217.73px;font-size:5.4px;font-weight:normal;color:#9aa3aa;">07:00</div>
<div class="t" style="left:1180.5px;top:217.73px;font-size:5.4px;font-weight:normal;color:#9aa3aa;">08:00</div>
<div class="t" style="left:1319.0px;top:217.73px;font-size:5.4px;font-weight:normal;color:#9aa3aa;">09:00</div>
<div class="t" style="left:72.0px;top:217.56px;font-size:5.6px;font-weight:normal;color:#9aa3aa;">9. Jan</div>
<div style="position:absolute;left:65.5px;top:214.5px;width:4px;height:8.5px;border:0.5px solid #b8bcc0;background:#f2f2f2;border-radius:1px"></div>
<div style="position:absolute;left:1359.5px;top:214.5px;width:3px;height:8.5px;border:0.5px solid #b8bcc0;background:#f2f2f2;border-radius:1px"></div>
<div style="position:absolute;left:61px;top:224.5px;width:1308px;height:8px;background:#c3cbd3"></div>
<div style="position:absolute;left:60.5px;top:224.5px;width:7px;height:7.5px;background:#f1f1f1;border:0.5px solid #ccc"></div>
<div style="position:absolute;left:1361.5px;top:224.5px;width:7px;height:7.5px;background:#f1f1f1;border:0.5px solid #ccc"></div>
<svg style="position:absolute;left:62px;top:226px" width="5" height="5"><path d="M3.2,1 L1.2,2.5 L3.2,4 Z" fill="#333"/></svg>
<svg style="position:absolute;left:1363px;top:226px" width="5" height="5"><path d="M1.8,1 L3.8,2.5 L1.8,4 Z" fill="#333"/></svg>
<svg style="position:absolute;left:712px;top:226.5px" width="6" height="4"><rect x="0" y="0" width="0.7" height="3" fill="#888"/><rect x="2" y="0" width="0.7" height="3" fill="#888"/><rect x="4" y="0" width="0.7" height="3" fill="#888"/></svg>
<div style="position:absolute;left:275px;top:237.5px;width:832px;height:13px;border:1px solid #cfd4d8;border-radius:3px;background:#fff"></div>
<svg style="position:absolute;left:279.1px;top:241.4px" width="7" height="7"><circle cx="3.2" cy="3.2" r="3.1" fill="#0e7f86"/></svg>
<div class="t" style="left:288.1px;top:241.38px;font-size:6.52px;font-weight:normal;color:#333;">10.40.64.3 (QA-Cat9300)</div>
<svg style="position:absolute;left:367.31310546875005px;top:241.4px" width="7" height="7"><circle cx="3.2" cy="3.2" r="3.1" fill="#b9c2c8"/></svg>
<div class="t" style="left:376.3px;top:241.38px;font-size:6.52px;font-weight:normal;color:#333;">10.40.70.10 (SQE3650POE.ipswitch.com)</div>
<svg style="position:absolute;left:504.08238281250004px;top:241.4px" width="7" height="7"><circle cx="3.2" cy="3.2" r="3.1" fill="#1aa9c4"/></svg>
<div class="t" style="left:513.1px;top:241.38px;font-size:6.52px;font-weight:normal;color:#333;">10.40.70.4 (QA-2901.nmdevsqa.com)</div>
<svg style="position:absolute;left:628.17140625px;top:241.4px" width="7" height="7"><circle cx="3.2" cy="3.2" r="3.1" fill="#7f8385"/></svg>
<div class="t" style="left:637.2px;top:241.38px;font-size:6.52px;font-weight:normal;color:#333;">10.40.71.162 (lb100)</div>
<svg style="position:absolute;left:703.3476953125px;top:241.4px" width="7" height="7"><circle cx="3.2" cy="3.2" r="3.1" fill="#5b46ad"/></svg>
<div class="t" style="left:712.3px;top:241.38px;font-size:6.52px;font-weight:normal;color:#333;">192.168.199.1</div>
<svg style="position:absolute;left:760.04322265625px;top:241.4px" width="7" height="7"><circle cx="3.2" cy="3.2" r="3.1" fill="#7ea22a"/></svg>
<div class="t" style="left:769.0px;top:241.38px;font-size:6.52px;font-weight:normal;color:#333;letter-spacing:0.084px">192.168.199.18 (atl-rd-a-s-sw-3021.mgmt.net.progress.com)</div>
<svg style="position:absolute;left:954.49909375px;top:241.4px" width="7" height="7"><circle cx="3.2" cy="3.2" r="3.1" fill="#0e7f86"/></svg>
<div class="t" style="left:963.5px;top:241.38px;font-size:6.52px;font-weight:normal;color:#333;">192.168.199.19</div>
<svg style="position:absolute;left:1014.820734375px;top:241.4px" width="7" height="7"><circle cx="3.2" cy="3.2" r="3.1" fill="#0e7f86"/></svg>
<div class="t" style="left:1023.8px;top:241.38px;font-size:6.52px;font-weight:normal;color:#333;">192.168.199.22 (QA-C9200)</div>
<div style="position:absolute;left:10px;top:261px;width:1364px;height:1px;background:#e9eef0"></div>
<svg style="position:absolute;left:12.4px;top:272.8px" width="7.2" height="5.4"><path d="M1,1 L3.6,4.4 L6.2,1" fill="none" stroke="#555" stroke-width="1.2"/></svg>
<div class="t" style="left:22.8px;top:272.79px;font-size:6.75px;font-weight:bold;color:#404040;">8 of 10 Channel(s) selected</div>
<div style="position:absolute;left:10px;top:285.9px;width:1364px;height:1px;background:#e6ecee"></div>
<div class="t" style="left:27.6px;top:289.96px;font-size:6.9px;font-weight:normal;color:#444;">Channel</div>
<div class="t" style="left:835.8px;top:290.21px;font-size:6.6px;font-weight:normal;color:#444;">Avg</div>
<svg style="position:absolute;left:852.8px;top:289px" width="5" height="8"><path d="M2.2,0.3 L2.2,6" stroke="#333" stroke-width="1.1"/><path d="M0.2,4.3 L2.2,7 L4.2,4.3 Z" fill="#333"/></svg>
<div style="position:absolute;left:10px;top:298.4px;width:1364px;height:57.32px;background:#b1e2ea"></div>
<svg style="position:absolute;left:13.6px;top:302.265px" width="7" height="7" viewBox="0 0 7 7"><rect x="0" y="0" width="7" height="7" rx="0.8" fill="#1f8f9c"/><path d="M1.5,3.6 L2.9,5 L5.6,2" fill="none" stroke="#fff" stroke-width="1.1"/></svg>
<div class="t" style="left:27.3px;top:302.85px;font-size:6.75px;font-weight:normal;color:#3d4a4d;">192.168.199.1</div>
<div class="t" style="left:835.8px;top:302.98px;font-size:6.6px;font-weight:normal;color:#3d4a4d;">9.01 Mbps</div>
<svg style="position:absolute;left:13.6px;top:315.59499999999997px" width="7" height="7" viewBox="0 0 7 7"><rect x="0" y="0" width="7" height="7" rx="0.8" fill="#1f8f9c"/><path d="M1.5,3.6 L2.9,5 L5.6,2" fill="none" stroke="#fff" stroke-width="1.1"/></svg>
<div class="t" style="left:27.3px;top:316.18px;font-size:6.75px;font-weight:normal;color:#3d4a4d;">10.40.64.3 (QA-Cat9300)</div>
<div class="t" style="left:835.8px;top:316.31px;font-size:6.6px;font-weight:normal;color:#3d4a4d;">7.18 Mbps</div>
<svg style="position:absolute;left:13.6px;top:328.92499999999995px" width="7" height="7" viewBox="0 0 7 7"><rect x="0" y="0" width="7" height="7" rx="0.8" fill="#1f8f9c"/><path d="M1.5,3.6 L2.9,5 L5.6,2" fill="none" stroke="#fff" stroke-width="1.1"/></svg>
<div class="t" style="left:27.3px;top:329.51px;font-size:6.75px;font-weight:normal;color:#3d4a4d;">10.40.71.162 (lb100)</div>
<div class="t" style="left:835.8px;top:329.64px;font-size:6.6px;font-weight:normal;color:#3d4a4d;">2.48 Mbps</div>
<svg style="position:absolute;left:13.6px;top:342.25499999999994px" width="7" height="7" viewBox="0 0 7 7"><rect x="0" y="0" width="7" height="7" rx="0.8" fill="#1f8f9c"/><path d="M1.5,3.6 L2.9,5 L5.6,2" fill="none" stroke="#fff" stroke-width="1.1"/></svg>
<div class="t" style="left:27.3px;top:342.84px;font-size:6.75px;font-weight:normal;color:#3d4a4d;">192.168.199.18 (atl-rd-a-s-sw-3021.mgmt.net.progress.com)</div>
<div class="t" style="left:835.8px;top:342.97px;font-size:6.6px;font-weight:normal;color:#3d4a4d;">623.60 Kbps</div>
<div style="position:absolute;left:111px;top:70px;width:240px;height:81px;border:1px solid #6fb6bb;border-radius:2px;background:rgba(250,250,250,0.88);box-shadow:0.5px 0.5px 1px rgba(0,0,0,0.15)"></div>
<div class="t" style="left:115.3px;top:76.87px;font-size:5.35px;font-weight:normal;color:#555;">Thu, Jan 9, 12:10 AM</div>
<div class="t" style="left:115.5px;top:84.20px;font-size:6.85px;font-weight:normal;color:#333;"><b style="color:#2a2a2a">10.40.64.3 (QA-Cat9300)</b> <span style="color:#666">5.46 Mbps</span></div>
<div class="t" style="left:115.5px;top:92.30px;font-size:6.85px;font-weight:normal;color:#333;"><b style="color:#2a2a2a">10.40.70.10 (SQE3650POE.ipswitch.com)</b> <span style="color:#666">290.84 Kbps</span></div>
<div class="t" style="left:115.5px;top:100.40px;font-size:6.85px;font-weight:normal;color:#333;"><b style="color:#2a2a2a">10.40.70.4 (QA-2901.nmdevsqa.com)</b> <span style="color:#666">29.91 Kbps</span></div>
<div class="t" style="left:115.5px;top:108.50px;font-size:6.85px;font-weight:normal;color:#333;"><b style="color:#2a2a2a">10.40.71.162 (lb100)</b> <span style="color:#666">2.67 Mbps</span></div>
<div class="t" style="left:115.5px;top:116.60px;font-size:6.85px;font-weight:normal;color:#333;"><b style="color:#2a2a2a">192.168.199.1</b> <span style="color:#666">5.38 Mbps</span></div>
<div class="t" style="left:115.5px;top:124.70px;font-size:6.85px;font-weight:normal;color:#333;"><b style="color:#2a2a2a">192.168.199.18 (atl-rd-a-s-sw-3021.mgmt.net.progress.com)</b> <span style="color:#666">116.69 Kbps</span></div>
<div class="t" style="left:115.5px;top:132.80px;font-size:6.85px;font-weight:normal;color:#333;"><b style="color:#2a2a2a">192.168.199.19</b> <span style="color:#666">71.66 Kbps</span></div>
<div class="t" style="left:115.5px;top:140.90px;font-size:6.85px;font-weight:normal;color:#333;"><b style="color:#2a2a2a">192.168.199.22 (QA-C9200)</b> <span style="color:#666">377.35 Kbps</span></div>
<svg style="position:absolute;left:0;top:0" width="1381" height="650"><rect x="34.3" y="408.4" width="643.3" height="1" fill="#e6e6e6"/><rect x="34.3" y="435.3" width="643.3" height="1" fill="#e6e6e6"/><rect x="34.3" y="462.2" width="643.3" height="1" fill="#e6e6e6"/><rect x="34.3" y="489.1" width="643.3" height="1" fill="#e6e6e6"/><rect x="34.3" y="516.3" width="643.3" height="1" fill="#d8e6e8"/><path d="M35.0,516.5 L35.0,440.9 36.0,441.3 37.0,441.8 38.0,442.2 39.0,442.3 40.0,442.3 41.0,442.3 42.0,442.2 43.0,442.1 44.0,442.1 45.0,442.0 46.0,441.8 47.0,441.7 48.0,441.5 49.0,441.3 50.0,441.1 51.0,441.1 52.0,441.5 53.0,442.0 54.0,442.5 55.0,442.6 56.0,442.6 57.0,442.6 58.0,442.6 59.0,442.6 60.0,442.3 61.0,442.0 62.0,441.8 63.0,441.8 64.0,441.8 65.0,441.8 66.0,441.8 67.0,441.8 68.0,441.6 69.0,441.3 70.0,441.1 71.0,440.9 72.0,440.7 73.0,440.6 74.0,440.5 75.0,440.6 76.0,440.9 77.0,441.2 78.0,441.5 79.0,441.7 80.0,441.9 81.0,442.0 82.0,442.0 83.0,441.7 84.0,441.2 85.0,440.8 86.0,440.7 87.0,441.2 88.0,441.9 89.0,442.4 90.0,442.5 91.0,442.1 92.0,441.6 93.0,441.2 94.0,441.1 95.0,441.1 96.0,441.1 97.0,441.1 98.0,441.1 99.0,440.9 100.0,440.7 101.0,440.6 102.0,440.8 103.0,441.6 104.0,442.5 105.0,443.1 106.0,443.0 107.0,442.8 108.0,442.6 109.0,442.4 110.0,442.5 111.0,442.6 112.0,442.7 113.0,442.8 114.0,442.7 115.0,442.4 116.0,442.2 117.0,442.1 118.0,442.1 119.0,442.1 120.0,442.1 121.0,442.1 122.0,442.2 123.0,442.5 124.0,442.7 125.0,442.9 126.0,443.1 127.0,443.2 128.0,443.3 129.0,443.3 130.0,443.0 131.0,442.6 132.0,442.3 133.0,442.4 134.0,443.0 135.0,443.8 136.0,444.4 137.0,444.4 138.0,444.0 139.0,443.5 140.0,443.1 141.0,442.8 142.0,442.6 143.0,442.5 144.0,442.4 145.0,442.6 146.0,443.2 147.0,443.8 148.0,444.1 149.0,443.9 150.0,443.3 151.0,442.6 152.0,442.3 153.0,442.7 154.0,443.4 155.0,444.1 156.0,444.4 157.0,444.2 158.0,443.7 159.0,443.3 160.0,443.2 161.0,443.2 162.0,443.3 163.0,443.4 164.0,443.4 165.0,443.3 166.0,443.1 167.0,442.9 168.0,442.9 169.0,443.0 170.0,443.1 171.0,443.2 172.0,443.2 173.0,443.1 174.0,442.8 175.0,442.6 176.0,442.4 177.0,442.3 178.0,442.2 179.0,442.1 180.0,442.3 181.0,443.0 182.0,443.8 183.0,444.2 184.0,444.1 185.0,443.5 186.0,442.9 187.0,442.6 188.0,442.8 189.0,443.3 190.0,443.8 191.0,444.0 192.0,443.8 193.0,443.3 194.0,442.7 195.0,442.5 196.0,442.9 197.0,443.6 198.0,444.3 199.0,444.5 200.0,444.5 201.0,444.4 202.0,444.4 203.0,444.3 204.0,444.2 205.0,444.1 206.0,444.0 207.0,444.0 208.0,444.0 209.0,444.0 210.0,444.0 211.0,444.0 212.0,443.8 213.0,443.6 214.0,443.5 215.0,443.5 216.0,443.7 217.0,443.8 218.0,443.9 219.0,443.8 220.0,443.3 221.0,442.7 222.0,442.3 223.0,442.4 224.0,442.7 225.0,443.1 226.0,443.2 227.0,443.2 228.0,443.2 229.0,443.0 230.0,442.7 231.0,441.9 232.0,441.0 233.0,440.1 234.0,439.8 235.0,440.2 236.0,440.9 237.0,441.5 238.0,441.7 239.0,441.7 240.0,441.7 241.0,441.6 242.0,441.6 243.0,441.3 244.0,440.8 245.0,440.5 246.0,440.3 247.0,440.3 248.0,440.3 249.0,440.2 250.0,440.3 251.0,440.3 252.0,440.4 253.0,440.5 254.0,440.5 255.0,440.4 256.0,440.3 257.0,440.3 258.0,440.5 259.0,441.4 260.0,442.5 261.0,443.1 262.0,443.0 263.0,442.5 264.0,442.0 265.0,441.5 266.0,441.2 267.0,440.9 268.0,440.7 269.0,440.6 270.0,440.6 271.0,440.6 272.0,440.6 273.0,440.8 274.0,441.1 275.0,441.6 276.0,442.1 277.0,442.4 278.0,442.7 279.0,442.9 280.0,443.1 281.0,443.1 282.0,442.7 283.0,442.3 284.0,441.9 285.0,441.8 286.0,441.8 287.0,441.8 288.0,441.8 289.0,441.8 290.0,441.8 291.0,441.8 292.0,441.9 293.0,442.0 294.0,442.2 295.0,442.3 296.0,442.4 297.0,442.3 298.0,441.9 299.0,441.4 300.0,441.1 301.0,441.2 302.0,441.5 303.0,441.9 304.0,442.1 305.0,442.1 306.0,442.0 307.0,442.0 308.0,441.9 309.0,442.0 310.0,442.0 311.0,442.1 312.0,442.1 313.0,441.9 314.0,441.5 315.0,441.1 316.0,441.0 317.0,441.0 318.0,440.9 319.0,440.9 320.0,440.9 321.0,441.0 322.0,441.1 323.0,441.3 324.0,441.5 325.0,442.0 326.0,442.5 327.0,442.9 328.0,442.8 329.0,442.4 330.0,441.8 331.0,441.4 332.0,441.4 333.0,441.6 334.0,441.9 335.0,442.0 336.0,442.0 337.0,441.8 338.0,441.6 339.0,441.3 340.0,441.2 341.0,441.0 342.0,440.9 343.0,440.8 344.0,440.7 345.0,440.7 346.0,440.7 347.0,440.7 348.0,441.0 349.0,441.7 350.0,442.4 351.0,442.6 352.0,442.6 353.0,442.6 354.0,442.6 355.0,442.5 356.0,442.2 357.0,441.9 358.0,441.6 359.0,441.5 360.0,441.7 361.0,442.0 362.0,442.2 363.0,442.3 364.0,442.3 365.0,442.3 366.0,442.3 367.0,442.3 368.0,442.4 369.0,442.6 370.0,442.8 371.0,442.9 372.0,442.9 373.0,443.0 374.0,443.0 375.0,442.9 376.0,442.4 377.0,441.9 378.0,441.6 379.0,441.7 380.0,442.2 381.0,442.8 382.0,443.1 383.0,443.1 384.0,443.1 385.0,443.0 386.0,443.0 387.0,442.8 388.0,442.5 389.0,442.2 390.0,442.0 391.0,442.2 392.0,442.5 393.0,442.7 394.0,442.8 395.0,442.6 396.0,442.3 397.0,441.9 398.0,441.7 399.0,441.6 400.0,441.6 401.0,441.5 402.0,441.4 403.0,441.3 404.0,441.2 405.0,441.2 406.0,441.2 407.0,441.7 408.0,442.3 409.0,442.7 410.0,442.7 411.0,442.2 412.0,441.5 413.0,441.0 414.0,440.8 415.0,440.7 416.0,440.7 417.0,440.7 418.0,440.9 419.0,441.5 420.0,442.2 421.0,442.6 422.0,442.6 423.0,442.6 424.0,442.6 425.0,442.5 426.0,442.4 427.0,442.1 428.0,441.8 429.0,441.8 430.0,441.9 431.0,442.3 432.0,442.6 433.0,442.7 434.0,442.2 435.0,441.5 436.0,440.8 437.0,440.6 438.0,440.8 439.0,440.9 440.0,441.1 441.0,441.2 442.0,441.2 443.0,441.2 444.0,441.2 445.0,441.3 446.0,441.4 447.0,441.5 448.0,441.6 449.0,441.6 450.0,441.4 451.0,441.2 452.0,441.0 453.0,440.9 454.0,440.8 455.0,440.7 456.0,440.7 457.0,440.7 458.0,440.9 459.0,441.1 460.0,441.4 461.0,441.7 462.0,442.1 463.0,442.6 464.0,442.8 465.0,443.0 466.0,443.0 467.0,443.1 468.0,443.1 469.0,443.0 470.0,442.8 471.0,442.6 472.0,442.4 473.0,442.2 474.0,442.0 475.0,441.9 476.0,441.7 477.0,441.5 478.0,441.3 479.0,441.2 480.0,441.2 481.0,441.7 482.0,442.4 483.0,442.9 484.0,442.9 485.0,442.6 486.0,442.2 487.0,441.9 488.0,441.9 489.0,442.1 490.0,442.3 491.0,442.4 492.0,442.2 493.0,441.7 494.0,441.0 495.0,440.6 496.0,440.6 497.0,440.7 498.0,440.8 499.0,441.0 500.0,441.4 501.0,442.0 502.0,442.5 503.0,442.7 504.0,442.7 505.0,442.6 506.0,442.6 507.0,442.6 508.0,442.6 509.0,442.7 510.0,442.8 511.0,442.8 512.0,442.7 513.0,442.4 514.0,442.2 515.0,442.0 516.0,441.9 517.0,441.7 518.0,441.6 519.0,441.6 520.0,441.7 521.0,441.8 522.0,441.9 523.0,442.1 524.0,442.3 525.0,442.5 526.0,442.7 527.0,442.6 528.0,442.2 529.0,441.7 530.0,441.3 531.0,441.4 532.0,441.5 533.0,441.8 534.0,441.9 535.0,441.8 536.0,441.6 537.0,441.3 538.0,441.2 539.0,441.4 540.0,441.8 541.0,442.3 542.0,442.5 543.0,442.2 544.0,441.5 545.0,440.8 546.0,440.5 547.0,440.8 548.0,441.3 549.0,441.9 550.0,442.3 551.0,442.6 552.0,442.8 553.0,443.0 554.0,442.9 555.0,442.4 556.0,441.4 557.0,440.7 558.0,440.6 559.0,441.0 560.0,441.5 561.0,441.9 562.0,442.1 563.0,442.1 564.0,442.1 565.0,442.2 566.0,442.2 567.0,442.4 568.0,442.6 569.0,442.7 570.0,442.7 571.0,442.5 572.0,442.3 573.0,442.1 574.0,441.8 575.0,441.5 576.0,441.3 577.0,441.2 578.0,441.2 579.0,441.2 580.0,441.4 581.0,441.6 582.0,441.9 583.0,442.4 584.0,442.8 585.0,443.0 586.0,443.0 587.0,443.0 588.0,442.9 589.0,442.8 590.0,442.4 591.0,441.7 592.0,441.0 593.0,440.8 594.0,440.8 595.0,440.8 596.0,440.7 597.0,440.7 598.0,440.7 599.0,440.7 600.0,440.7 601.0,440.7 602.0,440.7 603.0,440.6 604.0,440.6 605.0,440.6 606.0,441.0 607.0,441.4 608.0,441.6 609.0,441.6 610.0,441.3 611.0,441.0 612.0,440.9 613.0,441.1 614.0,441.7 615.0,442.4 616.0,442.8 617.0,442.7 618.0,442.6 619.0,442.4 620.0,442.2 621.0,441.8 622.0,441.4 623.0,441.0 624.0,440.8 625.0,441.0 626.0,441.4 627.0,441.8 628.0,441.9 629.0,441.8 630.0,441.6 631.0,441.4 632.0,441.4 633.0,441.5 634.0,441.6 635.0,441.8 636.0,441.8 637.0,441.6 638.0,441.4 639.0,441.1 640.0,441.0 641.0,441.0 642.0,440.9 643.0,440.9 644.0,440.9 645.0,440.9 646.0,440.9 647.0,441.0 648.0,441.0 649.0,441.1 650.0,441.3 651.0,441.4 652.0,441.7 653.0,442.0 654.0,442.2 655.0,442.3 656.0,442.3 657.0,442.3 658.0,442.1 659.0,441.9 660.0,441.6 661.0,441.1 662.0,440.8 663.0,440.6 664.0,440.9 665.0,441.4 666.0,442.0 667.0,442.4 668.0,442.6 669.0,442.7 670.0,442.8 671.0,442.8 672.0,442.5 673.0,442.1 673.2,442.0 L673.2,516.5 Z" fill="rgba(14,132,139,0.75)"/><path d="M35.0,440.9 L36.0,441.3 L37.0,441.8 L38.0,442.2 L39.0,442.3 L40.0,442.3 L41.0,442.3 L42.0,442.2 L43.0,442.1 L44.0,442.1 L45.0,442.0 L46.0,441.8 L47.0,441.7 L48.0,441.5 L49.0,441.3 L50.0,441.1 L51.0,441.1 L52.0,441.5 L53.0,442.0 L54.0,442.5 L55.0,442.6 L56.0,442.6 L57.0,442.6 L58.0,442.6 L59.0,442.6 L60.0,442.3 L61.0,442.0 L62.0,441.8 L63.0,441.8 L64.0,441.8 L65.0,441.8 L66.0,441.8 L67.0,441.8 L68.0,441.6 L69.0,441.3 L70.0,441.1 L71.0,440.9 L72.0,440.7 L73.0,440.6 L74.0,440.5 L75.0,440.6 L76.0,440.9 L77.0,441.2 L78.0,441.5 L79.0,441.7 L80.0,441.9 L81.0,442.0 L82.0,442.0 L83.0,441.7 L84.0,441.2 L85.0,440.8 L86.0,440.7 L87.0,441.2 L88.0,441.9 L89.0,442.4 L90.0,442.5 L91.0,442.1 L92.0,441.6 L93.0,441.2 L94.0,441.1 L95.0,441.1 L96.0,441.1 L97.0,441.1 L98.0,441.1 L99.0,440.9 L100.0,440.7 L101.0,440.6 L102.0,440.8 L103.0,441.6 L104.0,442.5 L105.0,443.1 L106.0,443.0 L107.0,442.8 L108.0,442.6 L109.0,442.4 L110.0,442.5 L111.0,442.6 L112.0,442.7 L113.0,442.8 L114.0,442.7 L115.0,442.4 L116.0,442.2 L117.0,442.1 L118.0,442.1 L119.0,442.1 L120.0,442.1 L121.0,442.1 L122.0,442.2 L123.0,442.5 L124.0,442.7 L125.0,442.9 L126.0,443.1 L127.0,443.2 L128.0,443.3 L129.0,443.3 L130.0,443.0 L131.0,442.6 L132.0,442.3 L133.0,442.4 L134.0,443.0 L135.0,443.8 L136.0,444.4 L137.0,444.4 L138.0,444.0 L139.0,443.5 L140.0,443.1 L141.0,442.8 L142.0,442.6 L143.0,442.5 L144.0,442.4 L145.0,442.6 L146.0,443.2 L147.0,443.8 L148.0,444.1 L149.0,443.9 L150.0,443.3 L151.0,442.6 L152.0,442.3 L153.0,442.7 L154.0,443.4 L155.0,444.1 L156.0,444.4 L157.0,444.2 L158.0,443.7 L159.0,443.3 L160.0,443.2 L161.0,443.2 L162.0,443.3 L163.0,443.4 L164.0,443.4 L165.0,443.3 L166.0,443.1 L167.0,442.9 L168.0,442.9 L169.0,443.0 L170.0,443.1 L171.0,443.2 L172.0,443.2 L173.0,443.1 L174.0,442.8 L175.0,442.6 L176.0,442.4 L177.0,442.3 L178.0,442.2 L179.0,442.1 L180.0,442.3 L181.0,443.0 L182.0,443.8 L183.0,444.2 L184.0,444.1 L185.0,443.5 L186.0,442.9 L187.0,442.6 L188.0,442.8 L189.0,443.3 L190.0,443.8 L191.0,444.0 L192.0,443.8 L193.0,443.3 L194.0,442.7 L195.0,442.5 L196.0,442.9 L197.0,443.6 L198.0,444.3 L199.0,444.5 L200.0,444.5 L201.0,444.4 L202.0,444.4 L203.0,444.3 L204.0,444.2 L205.0,444.1 L206.0,444.0 L207.0,444.0 L208.0,444.0 L209.0,444.0 L210.0,444.0 L211.0,444.0 L212.0,443.8 L213.0,443.6 L214.0,443.5 L215.0,443.5 L216.0,443.7 L217.0,443.8 L218.0,443.9 L219.0,443.8 L220.0,443.3 L221.0,442.7 L222.0,442.3 L223.0,442.4 L224.0,442.7 L225.0,443.1 L226.0,443.2 L227.0,443.2 L228.0,443.2 L229.0,443.0 L230.0,442.7 L231.0,441.9 L232.0,441.0 L233.0,440.1 L234.0,439.8 L235.0,440.2 L236.0,440.9 L237.0,441.5 L238.0,441.7 L239.0,441.7 L240.0,441.7 L241.0,441.6 L242.0,441.6 L243.0,441.3 L244.0,440.8 L245.0,440.5 L246.0,440.3 L247.0,440.3 L248.0,440.3 L249.0,440.2 L250.0,440.3 L251.0,440.3 L252.0,440.4 L253.0,440.5 L254.0,440.5 L255.0,440.4 L256.0,440.3 L257.0,440.3 L258.0,440.5 L259.0,441.4 L260.0,442.5 L261.0,443.1 L262.0,443.0 L263.0,442.5 L264.0,442.0 L265.0,441.5 L266.0,441.2 L267.0,440.9 L268.0,440.7 L269.0,440.6 L270.0,440.6 L271.0,440.6 L272.0,440.6 L273.0,440.8 L274.0,441.1 L275.0,441.6 L276.0,442.1 L277.0,442.4 L278.0,442.7 L279.0,442.9 L280.0,443.1 L281.0,443.1 L282.0,442.7 L283.0,442.3 L284.0,441.9 L285.0,441.8 L286.0,441.8 L287.0,441.8 L288.0,441.8 L289.0,441.8 L290.0,441.8 L291.0,441.8 L292.0,441.9 L293.0,442.0 L294.0,442.2 L295.0,442.3 L296.0,442.4 L297.0,442.3 L298.0,441.9 L299.0,441.4 L300.0,441.1 L301.0,441.2 L302.0,441.5 L303.0,441.9 L304.0,442.1 L305.0,442.1 L306.0,442.0 L307.0,442.0 L308.0,441.9 L309.0,442.0 L310.0,442.0 L311.0,442.1 L312.0,442.1 L313.0,441.9 L314.0,441.5 L315.0,441.1 L316.0,441.0 L317.0,441.0 L318.0,440.9 L319.0,440.9 L320.0,440.9 L321.0,441.0 L322.0,441.1 L323.0,441.3 L324.0,441.5 L325.0,442.0 L326.0,442.5 L327.0,442.9 L328.0,442.8 L329.0,442.4 L330.0,441.8 L331.0,441.4 L332.0,441.4 L333.0,441.6 L334.0,441.9 L335.0,442.0 L336.0,442.0 L337.0,441.8 L338.0,441.6 L339.0,441.3 L340.0,441.2 L341.0,441.0 L342.0,440.9 L343.0,440.8 L344.0,440.7 L345.0,440.7 L346.0,440.7 L347.0,440.7 L348.0,441.0 L349.0,441.7 L350.0,442.4 L351.0,442.6 L352.0,442.6 L353.0,442.6 L354.0,442.6 L355.0,442.5 L356.0,442.2 L357.0,441.9 L358.0,441.6 L359.0,441.5 L360.0,441.7 L361.0,442.0 L362.0,442.2 L363.0,442.3 L364.0,442.3 L365.0,442.3 L366.0,442.3 L367.0,442.3 L368.0,442.4 L369.0,442.6 L370.0,442.8 L371.0,442.9 L372.0,442.9 L373.0,443.0 L374.0,443.0 L375.0,442.9 L376.0,442.4 L377.0,441.9 L378.0,441.6 L379.0,441.7 L380.0,442.2 L381.0,442.8 L382.0,443.1 L383.0,443.1 L384.0,443.1 L385.0,443.0 L386.0,443.0 L387.0,442.8 L388.0,442.5 L389.0,442.2 L390.0,442.0 L391.0,442.2 L392.0,442.5 L393.0,442.7 L394.0,442.8 L395.0,442.6 L396.0,442.3 L397.0,441.9 L398.0,441.7 L399.0,441.6 L400.0,441.6 L401.0,441.5 L402.0,441.4 L403.0,441.3 L404.0,441.2 L405.0,441.2 L406.0,441.2 L407.0,441.7 L408.0,442.3 L409.0,442.7 L410.0,442.7 L411.0,442.2 L412.0,441.5 L413.0,441.0 L414.0,440.8 L415.0,440.7 L416.0,440.7 L417.0,440.7 L418.0,440.9 L419.0,441.5 L420.0,442.2 L421.0,442.6 L422.0,442.6 L423.0,442.6 L424.0,442.6 L425.0,442.5 L426.0,442.4 L427.0,442.1 L428.0,441.8 L429.0,441.8 L430.0,441.9 L431.0,442.3 L432.0,442.6 L433.0,442.7 L434.0,442.2 L435.0,441.5 L436.0,440.8 L437.0,440.6 L438.0,440.8 L439.0,440.9 L440.0,441.1 L441.0,441.2 L442.0,441.2 L443.0,441.2 L444.0,441.2 L445.0,441.3 L446.0,441.4 L447.0,441.5 L448.0,441.6 L449.0,441.6 L450.0,441.4 L451.0,441.2 L452.0,441.0 L453.0,440.9 L454.0,440.8 L455.0,440.7 L456.0,440.7 L457.0,440.7 L458.0,440.9 L459.0,441.1 L460.0,441.4 L461.0,441.7 L462.0,442.1 L463.0,442.6 L464.0,442.8 L465.0,443.0 L466.0,443.0 L467.0,443.1 L468.0,443.1 L469.0,443.0 L470.0,442.8 L471.0,442.6 L472.0,442.4 L473.0,442.2 L474.0,442.0 L475.0,441.9 L476.0,441.7 L477.0,441.5 L478.0,441.3 L479.0,441.2 L480.0,441.2 L481.0,441.7 L482.0,442.4 L483.0,442.9 L484.0,442.9 L485.0,442.6 L486.0,442.2 L487.0,441.9 L488.0,441.9 L489.0,442.1 L490.0,442.3 L491.0,442.4 L492.0,442.2 L493.0,441.7 L494.0,441.0 L495.0,440.6 L496.0,440.6 L497.0,440.7 L498.0,440.8 L499.0,441.0 L500.0,441.4 L501.0,442.0 L502.0,442.5 L503.0,442.7 L504.0,442.7 L505.0,442.6 L506.0,442.6 L507.0,442.6 L508.0,442.6 L509.0,442.7 L510.0,442.8 L511.0,442.8 L512.0,442.7 L513.0,442.4 L514.0,442.2 L515.0,442.0 L516.0,441.9 L517.0,441.7 L518.0,441.6 L519.0,441.6 L520.0,441.7 L521.0,441.8 L522.0,441.9 L523.0,442.1 L524.0,442.3 L525.0,442.5 L526.0,442.7 L527.0,442.6 L528.0,442.2 L529.0,441.7 L530.0,441.3 L531.0,441.4 L532.0,441.5 L533.0,441.8 L534.0,441.9 L535.0,441.8 L536.0,441.6 L537.0,441.3 L538.0,441.2 L539.0,441.4 L540.0,441.8 L541.0,442.3 L542.0,442.5 L543.0,442.2 L544.0,441.5 L545.0,440.8 L546.0,440.5 L547.0,440.8 L548.0,441.3 L549.0,441.9 L550.0,442.3 L551.0,442.6 L552.0,442.8 L553.0,443.0 L554.0,442.9 L555.0,442.4 L556.0,441.4 L557.0,440.7 L558.0,440.6 L559.0,441.0 L560.0,441.5 L561.0,441.9 L562.0,442.1 L563.0,442.1 L564.0,442.1 L565.0,442.2 L566.0,442.2 L567.0,442.4 L568.0,442.6 L569.0,442.7 L570.0,442.7 L571.0,442.5 L572.0,442.3 L573.0,442.1 L574.0,441.8 L575.0,441.5 L576.0,441.3 L577.0,441.2 L578.0,441.2 L579.0,441.2 L580.0,441.4 L581.0,441.6 L582.0,441.9 L583.0,442.4 L584.0,442.8 L585.0,443.0 L586.0,443.0 L587.0,443.0 L588.0,442.9 L589.0,442.8 L590.0,442.4 L591.0,441.7 L592.0,441.0 L593.0,440.8 L594.0,440.8 L595.0,440.8 L596.0,440.7 L597.0,440.7 L598.0,440.7 L599.0,440.7 L600.0,440.7 L601.0,440.7 L602.0,440.7 L603.0,440.6 L604.0,440.6 L605.0,440.6 L606.0,441.0 L607.0,441.4 L608.0,441.6 L609.0,441.6 L610.0,441.3 L611.0,441.0 L612.0,440.9 L613.0,441.1 L614.0,441.7 L615.0,442.4 L616.0,442.8 L617.0,442.7 L618.0,442.6 L619.0,442.4 L620.0,442.2 L621.0,441.8 L622.0,441.4 L623.0,441.0 L624.0,440.8 L625.0,441.0 L626.0,441.4 L627.0,441.8 L628.0,441.9 L629.0,441.8 L630.0,441.6 L631.0,441.4 L632.0,441.4 L633.0,441.5 L634.0,441.6 L635.0,441.8 L636.0,441.8 L637.0,441.6 L638.0,441.4 L639.0,441.1 L640.0,441.0 L641.0,441.0 L642.0,440.9 L643.0,440.9 L644.0,440.9 L645.0,440.9 L646.0,440.9 L647.0,441.0 L648.0,441.0 L649.0,441.1 L650.0,441.3 L651.0,441.4 L652.0,441.7 L653.0,442.0 L654.0,442.2 L655.0,442.3 L656.0,442.3 L657.0,442.3 L658.0,442.1 L659.0,441.9 L660.0,441.6 L661.0,441.1 L662.0,440.8 L663.0,440.6 L664.0,440.9 L665.0,441.4 L666.0,442.0 L667.0,442.4 L668.0,442.6 L669.0,442.7 L670.0,442.8 L671.0,442.8 L672.0,442.5 L673.0,442.1 L673.2,442.0" fill="none" stroke="#157d84" stroke-width="1.35"/><path d="M35.0,516.5 L35.0,451.5 36.0,451.9 37.0,452.3 38.0,452.8 39.0,453.3 40.0,454.1 41.0,455.1 42.0,455.9 43.0,456.1 44.0,456.1 45.0,456.1 46.0,456.1 47.0,456.1 48.0,456.8 49.0,457.8 50.0,458.8 51.0,459.2 52.0,459.3 53.0,459.4 54.0,459.4 55.0,459.4 56.0,459.4 57.0,459.4 58.0,459.4 59.0,459.4 60.0,459.2 61.0,459.0 62.0,458.9 63.0,458.9 64.0,459.1 65.0,459.2 66.0,459.3 67.0,458.8 68.0,456.8 69.0,454.4 70.0,452.4 71.0,450.9 72.0,449.5 73.0,448.4 74.0,448.0 75.0,448.0 76.0,448.1 77.0,448.3 78.0,448.6 79.0,449.5 80.0,450.7 81.0,451.7 82.0,452.0 83.0,451.8 84.0,451.3 85.0,450.5 86.0,449.6 87.0,448.0 88.0,446.3 89.0,445.0 90.0,444.8 91.0,445.0 92.0,445.4 93.0,445.7 94.0,445.8 95.0,445.8 96.0,445.7 97.0,445.7 98.0,445.8 99.0,446.6 100.0,448.0 101.0,449.6 102.0,451.8 103.0,454.9 104.0,457.8 105.0,459.4 106.0,458.1 107.0,454.1 108.0,449.7 109.0,447.4 110.0,448.0 111.0,449.9 112.0,452.1 113.0,453.7 114.0,454.8 115.0,455.7 116.0,456.2 117.0,456.4 118.0,455.0 119.0,452.5 120.0,450.2 121.0,449.4 122.0,449.7 123.0,450.3 124.0,450.9 125.0,451.4 126.0,451.8 127.0,452.2 128.0,452.5 129.0,452.9 130.0,453.4 131.0,453.9 132.0,454.2 133.0,454.1 134.0,452.8 135.0,450.8 136.0,449.1 137.0,447.9 138.0,447.1 139.0,446.4 140.0,446.0 141.0,445.8 142.0,445.8 143.0,445.7 144.0,445.7 145.0,445.7 146.0,445.7 147.0,445.8 148.0,445.9 149.0,446.3 150.0,447.2 151.0,448.5 152.0,450.0 153.0,452.0 154.0,454.5 155.0,456.5 156.0,457.3 157.0,456.2 158.0,454.1 159.0,452.2 160.0,451.7 161.0,452.5 162.0,454.0 163.0,455.7 164.0,457.2 165.0,458.9 166.0,460.5 167.0,461.7 168.0,461.7 169.0,459.3 170.0,455.6 171.0,452.2 172.0,450.2 173.0,449.2 174.0,448.7 175.0,448.3 176.0,448.0 177.0,447.7 178.0,447.6 179.0,447.6 180.0,447.8 181.0,448.5 182.0,449.4 183.0,449.9 184.0,449.7 185.0,448.8 186.0,448.0 187.0,447.5 188.0,447.6 189.0,447.7 190.0,447.9 191.0,448.0 192.0,447.9 193.0,447.6 194.0,447.2 195.0,447.0 196.0,446.8 197.0,446.7 198.0,446.6 199.0,446.6 200.0,446.9 201.0,447.4 202.0,447.9 203.0,448.0 204.0,447.5 205.0,446.8 206.0,446.3 207.0,446.2 208.0,446.2 209.0,446.2 210.0,446.3 211.0,446.4 212.0,446.6 213.0,446.9 214.0,447.4 215.0,448.1 216.0,448.9 217.0,449.9 218.0,451.1 219.0,452.5 220.0,454.2 221.0,455.9 222.0,457.0 223.0,457.4 224.0,457.6 225.0,457.7 226.0,457.7 227.0,457.1 228.0,455.5 229.0,453.5 230.0,451.8 231.0,450.4 232.0,449.0 233.0,447.9 234.0,447.4 235.0,447.3 236.0,447.3 237.0,447.3 238.0,447.3 239.0,447.1 240.0,446.9 241.0,446.6 242.0,446.4 243.0,446.1 244.0,445.8 245.0,445.7 246.0,445.6 247.0,446.0 248.0,446.5 249.0,447.1 250.0,447.4 251.0,447.5 252.0,447.6 253.0,447.8 254.0,448.3 255.0,448.8 256.0,449.5 257.0,450.3 258.0,451.2 259.0,452.5 260.0,453.7 261.0,454.9 262.0,456.0 263.0,457.0 264.0,457.9 265.0,458.2 266.0,457.6 267.0,455.8 268.0,453.8 269.0,452.2 270.0,451.3 271.0,450.7 272.0,450.3 273.0,450.2 274.0,450.7 275.0,451.9 276.0,453.3 277.0,454.8 278.0,456.6 279.0,458.7 280.0,460.3 281.0,460.5 282.0,458.5 283.0,455.1 284.0,451.8 285.0,449.7 286.0,448.5 287.0,447.7 288.0,447.1 289.0,446.6 290.0,446.2 291.0,446.0 292.0,445.9 293.0,446.0 294.0,446.5 295.0,447.3 296.0,448.0 297.0,448.5 298.0,448.8 299.0,449.1 300.0,449.4 301.0,449.6 302.0,449.9 303.0,450.1 304.0,450.2 305.0,450.0 306.0,449.5 307.0,448.9 308.0,448.6 309.0,448.5 310.0,448.5 311.0,448.5 312.0,448.5 313.0,449.2 314.0,450.7 315.0,452.4 316.0,453.7 317.0,454.7 318.0,455.6 319.0,456.3 320.0,456.9 321.0,457.2 322.0,457.3 323.0,457.5 324.0,458.0 325.0,459.0 326.0,460.2 327.0,460.9 328.0,461.0 329.0,460.5 330.0,459.5 331.0,458.3 332.0,456.7 333.0,454.1 334.0,451.6 335.0,450.1 336.0,450.1 337.0,450.5 338.0,451.0 339.0,451.6 340.0,452.3 341.0,453.1 342.0,454.0 343.0,455.0 344.0,456.3 345.0,458.0 346.0,459.5 347.0,460.1 348.0,459.3 349.0,457.3 350.0,455.1 351.0,453.4 352.0,452.3 353.0,451.4 354.0,450.9 355.0,450.7 356.0,450.6 357.0,450.6 358.0,450.6 359.0,450.6 360.0,450.6 361.0,450.6 362.0,450.8 363.0,451.0 364.0,451.7 365.0,452.5 366.0,453.2 367.0,453.7 368.0,453.8 369.0,453.9 370.0,454.1 371.0,454.5 372.0,455.1 373.0,455.8 374.0,456.2 375.0,455.5 376.0,452.6 377.0,449.2 378.0,447.2 379.0,447.2 380.0,447.3 381.0,447.4 382.0,447.6 383.0,447.7 384.0,447.9 385.0,448.1 386.0,448.3 387.0,448.7 388.0,449.1 389.0,449.6 390.0,449.9 391.0,450.0 392.0,450.1 393.0,450.5 394.0,451.2 395.0,452.9 396.0,455.4 397.0,457.8 398.0,459.6 399.0,460.9 400.0,461.9 401.0,462.4 402.0,462.4 403.0,460.7 404.0,457.9 405.0,454.9 406.0,452.3 407.0,449.0 408.0,446.0 409.0,444.1 410.0,444.2 411.0,445.5 412.0,447.4 413.0,449.2 414.0,450.7 415.0,452.2 416.0,453.5 417.0,454.4 418.0,454.6 419.0,454.8 420.0,454.8 421.0,454.9 422.0,454.4 423.0,453.1 424.0,451.6 425.0,450.3 426.0,449.2 427.0,448.2 428.0,447.4 429.0,447.1 430.0,447.4 431.0,448.2 432.0,449.1 433.0,449.9 434.0,450.9 435.0,452.1 436.0,452.9 437.0,453.1 438.0,453.1 439.0,453.1 440.0,453.1 441.0,453.0 442.0,452.5 443.0,451.7 444.0,450.9 445.0,450.1 446.0,449.3 447.0,448.5 448.0,448.0 449.0,447.9 450.0,447.9 451.0,447.9 452.0,447.9 453.0,447.9 454.0,448.0 455.0,448.2 456.0,448.5 457.0,448.9 458.0,449.5 459.0,450.0 460.0,450.3 461.0,450.2 462.0,450.1 463.0,449.8 464.0,449.2 465.0,448.2 466.0,446.8 467.0,445.4 468.0,444.5 469.0,443.9 470.0,443.6 471.0,443.5 472.0,443.5 473.0,444.1 474.0,445.2 475.0,446.6 476.0,447.8 477.0,449.2 478.0,450.6 479.0,451.8 480.0,452.7 481.0,453.3 482.0,453.8 483.0,454.0 484.0,454.0 485.0,454.0 486.0,453.9 487.0,453.8 488.0,453.3 489.0,452.0 490.0,450.4 491.0,449.5 492.0,449.4 493.0,449.4 494.0,449.4 495.0,449.5 496.0,449.5 497.0,449.7 498.0,449.8 499.0,449.9 500.0,449.9 501.0,450.0 502.0,450.1 503.0,450.3 504.0,451.0 505.0,452.2 506.0,453.5 507.0,454.5 508.0,455.2 509.0,455.7 510.0,456.2 511.0,456.9 512.0,458.0 513.0,459.2 514.0,460.1 515.0,460.3 516.0,460.3 517.0,460.1 518.0,459.7 519.0,458.8 520.0,457.0 521.0,455.0 522.0,453.6 523.0,453.4 524.0,453.5 525.0,453.8 526.0,454.2 527.0,454.7 528.0,455.5 529.0,456.2 530.0,456.7 531.0,456.6 532.0,456.1 533.0,455.5 534.0,454.9 535.0,454.3 536.0,453.8 537.0,453.3 538.0,452.9 539.0,452.5 540.0,452.2 541.0,452.0 542.0,451.9 543.0,451.9 544.0,452.0 545.0,452.1 546.0,452.3 547.0,453.4 548.0,455.4 549.0,457.5 550.0,458.9 551.0,459.7 552.0,460.1 553.0,460.3 554.0,460.2 555.0,457.9 556.0,454.3 557.0,451.4 558.0,450.8 559.0,450.8 560.0,450.8 561.0,450.8 562.0,450.9 563.0,451.6 564.0,452.7 565.0,453.9 566.0,454.9 567.0,456.3 568.0,457.6 569.0,458.3 570.0,457.7 571.0,455.0 572.0,452.0 573.0,450.2 574.0,450.3 575.0,450.7 576.0,451.4 577.0,452.6 578.0,454.7 579.0,457.6 580.0,460.3 581.0,461.4 582.0,461.3 583.0,461.1 584.0,460.6 585.0,460.0 586.0,458.9 587.0,457.5 588.0,456.3 589.0,456.0 590.0,456.0 591.0,456.2 592.0,456.4 593.0,456.6 594.0,457.0 595.0,457.3 596.0,457.9 597.0,458.6 598.0,459.6 599.0,460.7 600.0,461.8 601.0,462.6 602.0,463.4 603.0,464.0 604.0,464.4 605.0,464.2 606.0,463.2 607.0,461.6 608.0,459.8 609.0,457.7 610.0,454.8 611.0,452.1 612.0,450.5 613.0,450.3 614.0,450.2 615.0,450.2 616.0,450.2 617.0,450.9 618.0,452.8 619.0,454.7 620.0,455.6 621.0,455.6 622.0,455.6 623.0,455.5 624.0,455.2 625.0,454.4 626.0,453.1 627.0,451.6 628.0,450.6 629.0,449.9 630.0,449.3 631.0,449.0 632.0,448.9 633.0,448.9 634.0,448.9 635.0,448.9 636.0,448.9 637.0,449.4 638.0,450.1 639.0,450.6 640.0,450.7 641.0,450.6 642.0,450.4 643.0,450.3 644.0,450.3 645.0,450.5 646.0,450.7 647.0,451.1 648.0,451.8 649.0,452.8 650.0,453.9 651.0,454.8 652.0,455.5 653.0,456.1 654.0,456.5 655.0,456.7 656.0,456.3 657.0,455.3 658.0,454.0 659.0,452.8 660.0,451.7 661.0,450.6 662.0,449.5 663.0,448.6 664.0,447.8 665.0,447.1 666.0,446.6 667.0,446.5 668.0,447.4 669.0,449.2 670.0,451.1 671.0,452.8 672.0,454.4 673.0,455.9 673.2,456.2 L673.2,516.5 Z" fill="rgba(103,84,179,0.75)"/><path d="M35.0,451.5 L36.0,451.9 L37.0,452.3 L38.0,452.8 L39.0,453.3 L40.0,454.1 L41.0,455.1 L42.0,455.9 L43.0,456.1 L44.0,456.1 L45.0,456.1 L46.0,456.1 L47.0,456.1 L48.0,456.8 L49.0,457.8 L50.0,458.8 L51.0,459.2 L52.0,459.3 L53.0,459.4 L54.0,459.4 L55.0,459.4 L56.0,459.4 L57.0,459.4 L58.0,459.4 L59.0,459.4 L60.0,459.2 L61.0,459.0 L62.0,458.9 L63.0,458.9 L64.0,459.1 L65.0,459.2 L66.0,459.3 L67.0,458.8 L68.0,456.8 L69.0,454.4 L70.0,452.4 L71.0,450.9 L72.0,449.5 L73.0,448.4 L74.0,448.0 L75.0,448.0 L76.0,448.1 L77.0,448.3 L78.0,448.6 L79.0,449.5 L80.0,450.7 L81.0,451.7 L82.0,452.0 L83.0,451.8 L84.0,451.3 L85.0,450.5 L86.0,449.6 L87.0,448.0 L88.0,446.3 L89.0,445.0 L90.0,444.8 L91.0,445.0 L92.0,445.4 L93.0,445.7 L94.0,445.8 L95.0,445.8 L96.0,445.7 L97.0,445.7 L98.0,445.8 L99.0,446.6 L100.0,448.0 L101.0,449.6 L102.0,451.8 L103.0,454.9 L104.0,457.8 L105.0,459.4 L106.0,458.1 L107.0,454.1 L108.0,449.7 L109.0,447.4 L110.0,448.0 L111.0,449.9 L112.0,452.1 L113.0,453.7 L114.0,454.8 L115.0,455.7 L116.0,456.2 L117.0,456.4 L118.0,455.0 L119.0,452.5 L120.0,450.2 L121.0,449.4 L122.0,449.7 L123.0,450.3 L124.0,450.9 L125.0,451.4 L126.0,451.8 L127.0,452.2 L128.0,452.5 L129.0,452.9 L130.0,453.4 L131.0,453.9 L132.0,454.2 L133.0,454.1 L134.0,452.8 L135.0,450.8 L136.0,449.1 L137.0,447.9 L138.0,447.1 L139.0,446.4 L140.0,446.0 L141.0,445.8 L142.0,445.8 L143.0,445.7 L144.0,445.7 L145.0,445.7 L146.0,445.7 L147.0,445.8 L148.0,445.9 L149.0,446.3 L150.0,447.2 L151.0,448.5 L152.0,450.0 L153.0,452.0 L154.0,454.5 L155.0,456.5 L156.0,457.3 L157.0,456.2 L158.0,454.1 L159.0,452.2 L160.0,451.7 L161.0,452.5 L162.0,454.0 L163.0,455.7 L164.0,457.2 L165.0,458.9 L166.0,460.5 L167.0,461.7 L168.0,461.7 L169.0,459.3 L170.0,455.6 L171.0,452.2 L172.0,450.2 L173.0,449.2 L174.0,448.7 L175.0,448.3 L176.0,448.0 L177.0,447.7 L178.0,447.6 L179.0,447.6 L180.0,447.8 L181.0,448.5 L182.0,449.4 L183.0,449.9 L184.0,449.7 L185.0,448.8 L186.0,448.0 L187.0,447.5 L188.0,447.6 L189.0,447.7 L190.0,447.9 L191.0,448.0 L192.0,447.9 L193.0,447.6 L194.0,447.2 L195.0,447.0 L196.0,446.8 L197.0,446.7 L198.0,446.6 L199.0,446.6 L200.0,446.9 L201.0,447.4 L202.0,447.9 L203.0,448.0 L204.0,447.5 L205.0,446.8 L206.0,446.3 L207.0,446.2 L208.0,446.2 L209.0,446.2 L210.0,446.3 L211.0,446.4 L212.0,446.6 L213.0,446.9 L214.0,447.4 L215.0,448.1 L216.0,448.9 L217.0,449.9 L218.0,451.1 L219.0,452.5 L220.0,454.2 L221.0,455.9 L222.0,457.0 L223.0,457.4 L224.0,457.6 L225.0,457.7 L226.0,457.7 L227.0,457.1 L228.0,455.5 L229.0,453.5 L230.0,451.8 L231.0,450.4 L232.0,449.0 L233.0,447.9 L234.0,447.4 L235.0,447.3 L236.0,447.3 L237.0,447.3 L238.0,447.3 L239.0,447.1 L240.0,446.9 L241.0,446.6 L242.0,446.4 L243.0,446.1 L244.0,445.8 L245.0,445.7 L246.0,445.6 L247.0,446.0 L248.0,446.5 L249.0,447.1 L250.0,447.4 L251.0,447.5 L252.0,447.6 L253.0,447.8 L254.0,448.3 L255.0,448.8 L256.0,449.5 L257.0,450.3 L258.0,451.2 L259.0,452.5 L260.0,453.7 L261.0,454.9 L262.0,456.0 L263.0,457.0 L264.0,457.9 L265.0,458.2 L266.0,457.6 L267.0,455.8 L268.0,453.8 L269.0,452.2 L270.0,451.3 L271.0,450.7 L272.0,450.3 L273.0,450.2 L274.0,450.7 L275.0,451.9 L276.0,453.3 L277.0,454.8 L278.0,456.6 L279.0,458.7 L280.0,460.3 L281.0,460.5 L282.0,458.5 L283.0,455.1 L284.0,451.8 L285.0,449.7 L286.0,448.5 L287.0,447.7 L288.0,447.1 L289.0,446.6 L290.0,446.2 L291.0,446.0 L292.0,445.9 L293.0,446.0 L294.0,446.5 L295.0,447.3 L296.0,448.0 L297.0,448.5 L298.0,448.8 L299.0,449.1 L300.0,449.4 L301.0,449.6 L302.0,449.9 L303.0,450.1 L304.0,450.2 L305.0,450.0 L306.0,449.5 L307.0,448.9 L308.0,448.6 L309.0,448.5 L310.0,448.5 L311.0,448.5 L312.0,448.5 L313.0,449.2 L314.0,450.7 L315.0,452.4 L316.0,453.7 L317.0,454.7 L318.0,455.6 L319.0,456.3 L320.0,456.9 L321.0,457.2 L322.0,457.3 L323.0,457.5 L324.0,458.0 L325.0,459.0 L326.0,460.2 L327.0,460.9 L328.0,461.0 L329.0,460.5 L330.0,459.5 L331.0,458.3 L332.0,456.7 L333.0,454.1 L334.0,451.6 L335.0,450.1 L336.0,450.1 L337.0,450.5 L338.0,451.0 L339.0,451.6 L340.0,452.3 L341.0,453.1 L342.0,454.0 L343.0,455.0 L344.0,456.3 L345.0,458.0 L346.0,459.5 L347.0,460.1 L348.0,459.3 L349.0,457.3 L350.0,455.1 L351.0,453.4 L352.0,452.3 L353.0,451.4 L354.0,450.9 L355.0,450.7 L356.0,450.6 L357.0,450.6 L358.0,450.6 L359.0,450.6 L360.0,450.6 L361.0,450.6 L362.0,450.8 L363.0,451.0 L364.0,451.7 L365.0,452.5 L366.0,453.2 L367.0,453.7 L368.0,453.8 L369.0,453.9 L370.0,454.1 L371.0,454.5 L372.0,455.1 L373.0,455.8 L374.0,456.2 L375.0,455.5 L376.0,452.6 L377.0,449.2 L378.0,447.2 L379.0,447.2 L380.0,447.3 L381.0,447.4 L382.0,447.6 L383.0,447.7 L384.0,447.9 L385.0,448.1 L386.0,448.3 L387.0,448.7 L388.0,449.1 L389.0,449.6 L390.0,449.9 L391.0,450.0 L392.0,450.1 L393.0,450.5 L394.0,451.2 L395.0,452.9 L396.0,455.4 L397.0,457.8 L398.0,459.6 L399.0,460.9 L400.0,461.9 L401.0,462.4 L402.0,462.4 L403.0,460.7 L404.0,457.9 L405.0,454.9 L406.0,452.3 L407.0,449.0 L408.0,446.0 L409.0,444.1 L410.0,444.2 L411.0,445.5 L412.0,447.4 L413.0,449.2 L414.0,450.7 L415.0,452.2 L416.0,453.5 L417.0,454.4 L418.0,454.6 L419.0,454.8 L420.0,454.8 L421.0,454.9 L422.0,454.4 L423.0,453.1 L424.0,451.6 L425.0,450.3 L426.0,449.2 L427.0,448.2 L428.0,447.4 L429.0,447.1 L430.0,447.4 L431.0,448.2 L432.0,449.1 L433.0,449.9 L434.0,450.9 L435.0,452.1 L436.0,452.9 L437.0,453.1 L438.0,453.1 L439.0,453.1 L440.0,453.1 L441.0,453.0 L442.0,452.5 L443.0,451.7 L444.0,450.9 L445.0,450.1 L446.0,449.3 L447.0,448.5 L448.0,448.0 L449.0,447.9 L450.0,447.9 L451.0,447.9 L452.0,447.9 L453.0,447.9 L454.0,448.0 L455.0,448.2 L456.0,448.5 L457.0,448.9 L458.0,449.5 L459.0,450.0 L460.0,450.3 L461.0,450.2 L462.0,450.1 L463.0,449.8 L464.0,449.2 L465.0,448.2 L466.0,446.8 L467.0,445.4 L468.0,444.5 L469.0,443.9 L470.0,443.6 L471.0,443.5 L472.0,443.5 L473.0,444.1 L474.0,445.2 L475.0,446.6 L476.0,447.8 L477.0,449.2 L478.0,450.6 L479.0,451.8 L480.0,452.7 L481.0,453.3 L482.0,453.8 L483.0,454.0 L484.0,454.0 L485.0,454.0 L486.0,453.9 L487.0,453.8 L488.0,453.3 L489.0,452.0 L490.0,450.4 L491.0,449.5 L492.0,449.4 L493.0,449.4 L494.0,449.4 L495.0,449.5 L496.0,449.5 L497.0,449.7 L498.0,449.8 L499.0,449.9 L500.0,449.9 L501.0,450.0 L502.0,450.1 L503.0,450.3 L504.0,451.0 L505.0,452.2 L506.0,453.5 L507.0,454.5 L508.0,455.2 L509.0,455.7 L510.0,456.2 L511.0,456.9 L512.0,458.0 L513.0,459.2 L514.0,460.1 L515.0,460.3 L516.0,460.3 L517.0,460.1 L518.0,459.7 L519.0,458.8 L520.0,457.0 L521.0,455.0 L522.0,453.6 L523.0,453.4 L524.0,453.5 L525.0,453.8 L526.0,454.2 L527.0,454.7 L528.0,455.5 L529.0,456.2 L530.0,456.7 L531.0,456.6 L532.0,456.1 L533.0,455.5 L534.0,454.9 L535.0,454.3 L536.0,453.8 L537.0,453.3 L538.0,452.9 L539.0,452.5 L540.0,452.2 L541.0,452.0 L542.0,451.9 L543.0,451.9 L544.0,452.0 L545.0,452.1 L546.0,452.3 L547.0,453.4 L548.0,455.4 L549.0,457.5 L550.0,458.9 L551.0,459.7 L552.0,460.1 L553.0,460.3 L554.0,460.2 L555.0,457.9 L556.0,454.3 L557.0,451.4 L558.0,450.8 L559.0,450.8 L560.0,450.8 L561.0,450.8 L562.0,450.9 L563.0,451.6 L564.0,452.7 L565.0,453.9 L566.0,454.9 L567.0,456.3 L568.0,457.6 L569.0,458.3 L570.0,457.7 L571.0,455.0 L572.0,452.0 L573.0,450.2 L574.0,450.3 L575.0,450.7 L576.0,451.4 L577.0,452.6 L578.0,454.7 L579.0,457.6 L580.0,460.3 L581.0,461.4 L582.0,461.3 L583.0,461.1 L584.0,460.6 L585.0,460.0 L586.0,458.9 L587.0,457.5 L588.0,456.3 L589.0,456.0 L590.0,456.0 L591.0,456.2 L592.0,456.4 L593.0,456.6 L594.0,457.0 L595.0,457.3 L596.0,457.9 L597.0,458.6 L598.0,459.6 L599.0,460.7 L600.0,461.8 L601.0,462.6 L602.0,463.4 L603.0,464.0 L604.0,464.4 L605.0,464.2 L606.0,463.2 L607.0,461.6 L608.0,459.8 L609.0,457.7 L610.0,454.8 L611.0,452.1 L612.0,450.5 L613.0,450.3 L614.0,450.2 L615.0,450.2 L616.0,450.2 L617.0,450.9 L618.0,452.8 L619.0,454.7 L620.0,455.6 L621.0,455.6 L622.0,455.6 L623.0,455.5 L624.0,455.2 L625.0,454.4 L626.0,453.1 L627.0,451.6 L628.0,450.6 L629.0,449.9 L630.0,449.3 L631.0,449.0 L632.0,448.9 L633.0,448.9 L634.0,448.9 L635.0,448.9 L636.0,448.9 L637.0,449.4 L638.0,450.1 L639.0,450.6 L640.0,450.7 L641.0,450.6 L642.0,450.4 L643.0,450.3 L644.0,450.3 L645.0,450.5 L646.0,450.7 L647.0,451.1 L648.0,451.8 L649.0,452.8 L650.0,453.9 L651.0,454.8 L652.0,455.5 L653.0,456.1 L654.0,456.5 L655.0,456.7 L656.0,456.3 L657.0,455.3 L658.0,454.0 L659.0,452.8 L660.0,451.7 L661.0,450.6 L662.0,449.5 L663.0,448.6 L664.0,447.8 L665.0,447.1 L666.0,446.6 L667.0,446.5 L668.0,447.4 L669.0,449.2 L670.0,451.1 L671.0,452.8 L672.0,454.4 L673.0,455.9 L673.2,456.2" fill="none" stroke="#5e4aae" stroke-width="1.35"/><path d="M35.0,516.5 L35.0,488.7 36.0,488.7 37.0,488.8 38.0,488.8 39.0,488.8 40.0,488.9 41.0,488.9 42.0,489.0 43.0,489.1 44.0,489.2 45.0,489.3 46.0,489.4 47.0,489.4 48.0,489.6 49.0,489.7 50.0,489.8 51.0,489.9 52.0,489.9 53.0,489.9 54.0,489.8 55.0,489.5 56.0,489.3 57.0,489.1 58.0,489.0 59.0,488.9 60.0,488.9 61.0,488.9 62.0,488.9 63.0,488.9 64.0,488.9 65.0,488.9 66.0,488.9 67.0,488.9 68.0,489.0 69.0,489.0 70.0,489.1 71.0,489.3 72.0,489.5 73.0,489.7 74.0,489.9 75.0,490.0 76.0,490.0 77.0,489.9 78.0,489.7 79.0,489.4 80.0,489.1 81.0,489.0 82.0,489.0 83.0,489.2 84.0,489.4 85.0,489.7 86.0,489.9 87.0,490.0 88.0,490.0 89.0,490.0 90.0,490.0 91.0,490.0 92.0,490.0 93.0,489.9 94.0,489.8 95.0,489.6 96.0,489.3 97.0,489.1 98.0,489.0 99.0,488.9 100.0,489.0 101.0,489.2 102.0,489.4 103.0,489.5 104.0,489.6 105.0,489.7 106.0,489.6 107.0,489.6 108.0,489.6 109.0,489.5 110.0,489.5 111.0,489.5 112.0,489.5 113.0,489.5 114.0,489.5 115.0,489.4 116.0,489.4 117.0,489.5 118.0,489.7 119.0,489.9 120.0,490.2 121.0,490.4 122.0,490.5 123.0,490.4 124.0,490.1 125.0,489.7 126.0,489.3 127.0,489.0 128.0,488.9 129.0,488.8 130.0,488.8 131.0,488.7 132.0,488.7 133.0,488.7 134.0,488.8 135.0,489.0 136.0,489.4 137.0,489.8 138.0,490.1 139.0,490.4 140.0,490.4 141.0,490.2 142.0,490.1 143.0,489.8 144.0,489.6 145.0,489.5 146.0,489.3 147.0,489.2 148.0,489.2 149.0,489.1 150.0,489.1 151.0,489.1 152.0,489.1 153.0,489.1 154.0,489.2 155.0,489.2 156.0,489.3 157.0,489.3 158.0,489.3 159.0,489.3 160.0,489.3 161.0,489.3 162.0,489.3 163.0,489.4 164.0,489.5 165.0,489.8 166.0,490.0 167.0,490.3 168.0,490.4 169.0,490.4 170.0,490.2 171.0,489.9 172.0,489.5 173.0,489.2 174.0,489.1 175.0,489.1 176.0,489.1 177.0,489.1 178.0,489.1 179.0,489.1 180.0,489.1 181.0,489.1 182.0,489.3 183.0,489.4 184.0,489.6 185.0,489.7 186.0,489.8 187.0,489.7 188.0,489.7 189.0,489.7 190.0,489.7 191.0,489.7 192.0,489.7 193.0,489.8 194.0,490.0 195.0,490.1 196.0,490.3 197.0,490.4 198.0,490.4 199.0,490.4 200.0,490.4 201.0,490.4 202.0,490.3 203.0,490.2 204.0,490.1 205.0,490.0 206.0,489.8 207.0,489.6 208.0,489.5 209.0,489.3 210.0,489.3 211.0,489.2 212.0,489.1 213.0,489.1 214.0,489.1 215.0,489.1 216.0,489.2 217.0,489.4 218.0,489.6 219.0,489.9 220.0,490.1 221.0,490.3 222.0,490.3 223.0,490.4 224.0,490.4 225.0,490.5 226.0,490.5 227.0,490.4 228.0,490.2 229.0,489.8 230.0,489.3 231.0,488.9 232.0,488.8 233.0,488.8 234.0,489.0 235.0,489.3 236.0,489.6 237.0,489.8 238.0,490.0 239.0,490.1 240.0,490.2 241.0,490.2 242.0,490.3 243.0,490.3 244.0,490.3 245.0,490.2 246.0,490.2 247.0,490.1 248.0,490.0 249.0,489.9 250.0,489.8 251.0,489.7 252.0,489.5 253.0,489.3 254.0,489.2 255.0,489.1 256.0,489.1 257.0,489.3 258.0,489.5 259.0,489.8 260.0,490.0 261.0,490.1 262.0,490.1 263.0,490.1 264.0,490.1 265.0,490.1 266.0,490.1 267.0,490.0 268.0,489.9 269.0,489.7 270.0,489.5 271.0,489.2 272.0,489.1 273.0,489.1 274.0,489.1 275.0,489.3 276.0,489.5 277.0,489.7 278.0,489.8 279.0,489.8 280.0,489.8 281.0,489.6 282.0,489.5 283.0,489.3 284.0,489.1 285.0,489.0 286.0,489.0 287.0,488.9 288.0,488.8 289.0,488.8 290.0,488.8 291.0,488.8 292.0,488.9 293.0,489.0 294.0,489.2 295.0,489.3 296.0,489.3 297.0,489.3 298.0,489.3 299.0,489.3 300.0,489.3 301.0,489.3 302.0,489.3 303.0,489.3 304.0,489.3 305.0,489.3 306.0,489.4 307.0,489.4 308.0,489.4 309.0,489.5 310.0,489.6 311.0,489.7 312.0,489.8 313.0,489.8 314.0,489.9 315.0,490.0 316.0,490.0 317.0,490.1 318.0,490.1 319.0,490.2 320.0,490.2 321.0,490.3 322.0,490.3 323.0,490.4 324.0,490.4 325.0,490.4 326.0,490.4 327.0,490.4 328.0,490.5 329.0,490.5 330.0,490.5 331.0,490.5 332.0,490.5 333.0,490.5 334.0,490.5 335.0,490.5 336.0,490.5 337.0,490.5 338.0,490.5 339.0,490.4 340.0,490.3 341.0,490.3 342.0,490.2 343.0,490.0 344.0,489.9 345.0,489.7 346.0,489.6 347.0,489.4 348.0,489.3 349.0,489.2 350.0,489.1 351.0,489.1 352.0,489.0 353.0,489.0 354.0,489.0 355.0,489.1 356.0,489.2 357.0,489.4 358.0,489.6 359.0,489.8 360.0,489.8 361.0,489.8 362.0,489.8 363.0,489.7 364.0,489.7 365.0,489.7 366.0,489.7 367.0,489.7 368.0,489.8 369.0,489.8 370.0,489.9 371.0,489.9 372.0,489.9 373.0,489.7 374.0,489.5 375.0,489.2 376.0,489.0 377.0,488.9 378.0,488.9 379.0,488.9 380.0,488.9 381.0,488.9 382.0,489.0 383.0,489.0 384.0,489.2 385.0,489.5 386.0,489.8 387.0,490.1 388.0,490.3 389.0,490.4 390.0,490.3 391.0,490.2 392.0,490.0 393.0,489.9 394.0,489.8 395.0,489.8 396.0,489.8 397.0,489.8 398.0,489.9 399.0,489.9 400.0,489.9 401.0,489.9 402.0,489.8 403.0,489.5 404.0,489.2 405.0,489.0 406.0,488.9 407.0,488.9 408.0,488.9 409.0,489.0 410.0,489.2 411.0,489.3 412.0,489.4 413.0,489.6 414.0,489.8 415.0,490.0 416.0,490.2 417.0,490.3 418.0,490.3 419.0,490.3 420.0,490.2 421.0,490.1 422.0,490.0 423.0,489.9 424.0,489.9 425.0,490.0 426.0,490.1 427.0,490.3 428.0,490.4 429.0,490.5 430.0,490.4 431.0,490.2 432.0,489.9 433.0,489.5 434.0,489.2 435.0,489.1 436.0,489.1 437.0,489.1 438.0,489.2 439.0,489.3 440.0,489.4 441.0,489.5 442.0,489.6 443.0,489.8 444.0,489.9 445.0,490.0 446.0,490.1 447.0,490.1 448.0,490.1 449.0,489.9 450.0,489.8 451.0,489.6 452.0,489.5 453.0,489.5 454.0,489.6 455.0,489.7 456.0,489.9 457.0,490.0 458.0,490.1 459.0,490.1 460.0,490.1 461.0,490.0 462.0,489.9 463.0,489.8 464.0,489.7 465.0,489.6 466.0,489.4 467.0,489.3 468.0,489.1 469.0,489.0 470.0,488.9 471.0,488.9 472.0,488.9 473.0,488.9 474.0,488.9 475.0,488.9 476.0,488.9 477.0,489.1 478.0,489.4 479.0,489.8 480.0,490.2 481.0,490.4 482.0,490.4 483.0,490.2 484.0,489.9 485.0,489.5 486.0,489.1 487.0,488.9 488.0,488.9 489.0,488.9 490.0,489.0 491.0,489.0 492.0,489.0 493.0,489.0 494.0,489.1 495.0,489.1 496.0,489.1 497.0,489.2 498.0,489.2 499.0,489.3 500.0,489.4 501.0,489.5 502.0,489.7 503.0,489.8 504.0,489.9 505.0,490.0 506.0,490.1 507.0,490.1 508.0,490.2 509.0,490.2 510.0,490.2 511.0,490.2 512.0,490.1 513.0,490.0 514.0,489.8 515.0,489.7 516.0,489.6 517.0,489.6 518.0,489.6 519.0,489.6 520.0,489.6 521.0,489.6 522.0,489.6 523.0,489.6 524.0,489.7 525.0,489.9 526.0,490.0 527.0,490.1 528.0,490.1 529.0,490.0 530.0,489.9 531.0,489.6 532.0,489.4 533.0,489.2 534.0,489.2 535.0,489.2 536.0,489.2 537.0,489.3 538.0,489.3 539.0,489.3 540.0,489.4 541.0,489.5 542.0,489.6 543.0,489.7 544.0,489.7 545.0,489.8 546.0,489.8 547.0,489.8 548.0,489.8 549.0,489.8 550.0,489.8 551.0,489.8 552.0,489.8 553.0,489.6 554.0,489.3 555.0,489.1 556.0,488.9 557.0,488.8 558.0,488.8 559.0,488.8 560.0,488.8 561.0,488.9 562.0,488.9 563.0,488.9 564.0,488.9 565.0,488.9 566.0,488.9 567.0,488.9 568.0,488.9 569.0,489.0 570.0,489.1 571.0,489.4 572.0,489.6 573.0,489.9 574.0,490.0 575.0,490.0 576.0,490.0 577.0,490.0 578.0,490.0 579.0,490.0 580.0,489.9 581.0,490.0 582.0,490.1 583.0,490.2 584.0,490.3 585.0,490.4 586.0,490.5 587.0,490.4 588.0,490.4 589.0,490.3 590.0,490.3 591.0,490.2 592.0,490.1 593.0,489.9 594.0,489.7 595.0,489.5 596.0,489.3 597.0,489.2 598.0,489.2 599.0,489.3 600.0,489.4 601.0,489.6 602.0,489.9 603.0,490.0 604.0,490.1 605.0,490.2 606.0,490.3 607.0,490.4 608.0,490.5 609.0,490.5 610.0,490.4 611.0,490.3 612.0,490.0 613.0,489.8 614.0,489.5 615.0,489.3 616.0,489.2 617.0,489.0 618.0,488.9 619.0,488.8 620.0,488.7 621.0,488.7 622.0,488.8 623.0,488.9 624.0,489.1 625.0,489.3 626.0,489.4 627.0,489.4 628.0,489.4 629.0,489.3 630.0,489.3 631.0,489.3 632.0,489.2 633.0,489.2 634.0,489.2 635.0,489.1 636.0,489.1 637.0,489.1 638.0,489.0 639.0,489.0 640.0,488.9 641.0,488.9 642.0,488.8 643.0,488.8 644.0,488.8 645.0,488.8 646.0,488.8 647.0,488.8 648.0,488.8 649.0,488.9 650.0,488.9 651.0,489.1 652.0,489.4 653.0,489.7 654.0,490.0 655.0,490.2 656.0,490.2 657.0,490.0 658.0,489.7 659.0,489.3 660.0,489.0 661.0,488.8 662.0,488.8 663.0,489.0 664.0,489.2 665.0,489.5 666.0,489.7 667.0,489.8 668.0,489.8 669.0,489.8 670.0,489.7 671.0,489.7 672.0,489.6 673.0,489.6 673.2,489.6 L673.2,516.5 Z" fill="rgba(120,100,185,0.75)"/><path d="M35.0,516.5 L35.0,500.5 36.0,500.4 37.0,500.3 38.0,500.2 39.0,500.2 40.0,500.1 41.0,500.1 42.0,500.0 43.0,500.0 44.0,500.4 45.0,500.9 46.0,501.4 47.0,501.5 48.0,501.4 49.0,501.1 50.0,500.9 51.0,500.9 52.0,500.9 53.0,501.0 54.0,501.1 55.0,501.1 56.0,501.0 57.0,500.9 58.0,500.8 59.0,500.8 60.0,500.6 61.0,500.5 62.0,500.5 63.0,500.5 64.0,500.7 65.0,501.0 66.0,501.2 67.0,501.1 68.0,501.0 69.0,500.9 70.0,500.9 71.0,500.9 72.0,501.0 73.0,501.2 74.0,501.3 75.0,501.2 76.0,501.1 77.0,501.1 78.0,501.0 79.0,501.1 80.0,501.2 81.0,501.3 82.0,501.4 83.0,501.2 84.0,501.0 85.0,500.7 86.0,500.5 87.0,500.3 88.0,500.2 89.0,500.0 90.0,500.0 91.0,500.0 92.0,500.0 93.0,500.0 94.0,500.1 95.0,500.4 96.0,500.8 97.0,501.1 98.0,501.1 99.0,500.7 100.0,500.3 101.0,500.1 102.0,500.1 103.0,500.4 104.0,500.8 105.0,501.0 106.0,501.0 107.0,501.0 108.0,501.0 109.0,500.9 110.0,500.8 111.0,500.4 112.0,500.0 113.0,499.8 114.0,500.1 115.0,500.6 116.0,501.1 117.0,501.3 118.0,501.0 119.0,500.4 120.0,499.9 121.0,499.8 122.0,500.1 123.0,500.8 124.0,501.3 125.0,501.4 126.0,501.4 127.0,501.4 128.0,501.4 129.0,501.3 130.0,501.0 131.0,500.5 132.0,500.2 133.0,500.2 134.0,500.5 135.0,500.8 136.0,501.1 137.0,501.2 138.0,501.2 139.0,501.2 140.0,501.2 141.0,501.1 142.0,500.7 143.0,500.2 144.0,500.0 145.0,500.1 146.0,500.4 147.0,500.8 148.0,501.0 149.0,500.9 150.0,500.5 151.0,500.1 152.0,499.9 153.0,500.2 154.0,500.8 155.0,501.3 156.0,501.5 157.0,501.4 158.0,501.3 159.0,501.1 160.0,501.1 161.0,501.2 162.0,501.4 163.0,501.6 164.0,501.6 165.0,501.2 166.0,500.5 167.0,499.9 168.0,499.8 169.0,499.9 170.0,500.1 171.0,500.3 172.0,500.4 173.0,500.6 174.0,500.8 175.0,500.9 176.0,500.9 177.0,500.9 178.0,500.9 179.0,500.9 180.0,500.8 181.0,500.6 182.0,500.3 183.0,500.1 184.0,500.2 185.0,500.7 186.0,501.2 187.0,501.5 188.0,501.5 189.0,501.5 190.0,501.4 191.0,501.4 192.0,501.2 193.0,500.9 194.0,500.5 195.0,500.3 196.0,500.1 197.0,500.0 198.0,500.0 199.0,500.0 200.0,500.2 201.0,500.6 202.0,500.9 203.0,501.0 204.0,500.9 205.0,500.7 206.0,500.5 207.0,500.5 208.0,500.7 209.0,500.9 210.0,501.0 211.0,501.0 212.0,500.9 213.0,500.8 214.0,500.7 215.0,500.7 216.0,500.6 217.0,500.6 218.0,500.5 219.0,500.4 220.0,500.1 221.0,499.9 222.0,499.7 223.0,499.8 224.0,499.8 225.0,499.9 226.0,500.0 227.0,500.1 228.0,500.3 229.0,500.4 230.0,500.6 231.0,500.8 232.0,501.0 233.0,501.1 234.0,501.2 235.0,501.0 236.0,500.8 237.0,500.6 238.0,500.6 239.0,500.7 240.0,500.9 241.0,501.1 242.0,501.2 243.0,501.1 244.0,500.9 245.0,500.8 246.0,500.8 247.0,501.0 248.0,501.2 249.0,501.4 250.0,501.4 251.0,501.4 252.0,501.2 253.0,501.1 254.0,500.9 255.0,500.7 256.0,500.6 257.0,500.4 258.0,500.3 259.0,500.2 260.0,500.1 261.0,500.0 262.0,499.9 263.0,499.9 264.0,499.9 265.0,499.8 266.0,499.8 267.0,499.8 268.0,499.8 269.0,499.8 270.0,500.0 271.0,500.6 272.0,501.2 273.0,501.4 274.0,501.4 275.0,501.4 276.0,501.4 277.0,501.4 278.0,501.4 279.0,501.4 280.0,501.3 281.0,501.1 282.0,500.8 283.0,500.3 284.0,500.0 285.0,500.0 286.0,500.2 287.0,500.7 288.0,501.0 289.0,501.0 290.0,500.7 291.0,500.3 292.0,500.0 293.0,500.1 294.0,500.5 295.0,501.1 296.0,501.5 297.0,501.4 298.0,501.3 299.0,501.1 300.0,501.0 301.0,501.0 302.0,501.1 303.0,501.2 304.0,501.2 305.0,501.2 306.0,501.1 307.0,501.0 308.0,500.9 309.0,500.8 310.0,500.7 311.0,500.6 312.0,500.5 313.0,500.7 314.0,500.9 315.0,501.2 316.0,501.4 317.0,501.5 318.0,501.6 319.0,501.6 320.0,501.6 321.0,501.3 322.0,500.7 323.0,500.3 324.0,500.2 325.0,500.3 326.0,500.4 327.0,500.5 328.0,500.6 329.0,500.8 330.0,501.0 331.0,501.2 332.0,501.2 333.0,501.2 334.0,501.1 335.0,501.1 336.0,501.0 337.0,500.8 338.0,500.6 339.0,500.5 340.0,500.5 341.0,500.5 342.0,500.6 343.0,500.6 344.0,500.8 345.0,501.1 346.0,501.5 347.0,501.6 348.0,501.4 349.0,501.0 350.0,500.5 351.0,500.2 352.0,500.2 353.0,500.1 354.0,500.1 355.0,500.1 356.0,500.3 357.0,500.7 358.0,501.0 359.0,501.1 360.0,500.9 361.0,500.6 362.0,500.3 363.0,500.3 364.0,500.6 365.0,501.1 366.0,501.4 367.0,501.4 368.0,501.1 369.0,500.7 370.0,500.4 371.0,500.4 372.0,500.8 373.0,501.2 374.0,501.5 375.0,501.5 376.0,501.1 377.0,500.7 378.0,500.5 379.0,500.6 380.0,500.9 381.0,501.3 382.0,501.5 383.0,501.4 384.0,501.3 385.0,501.3 386.0,501.2 387.0,501.2 388.0,501.2 389.0,501.2 390.0,501.2 391.0,501.0 392.0,500.6 393.0,500.3 394.0,500.1 395.0,500.1 396.0,500.1 397.0,500.0 398.0,500.0 399.0,499.9 400.0,499.9 401.0,499.8 402.0,499.8 403.0,499.8 404.0,499.9 405.0,500.0 406.0,500.2 407.0,500.5 408.0,500.8 409.0,501.0 410.0,501.0 411.0,500.6 412.0,500.1 413.0,499.8 414.0,499.8 415.0,499.9 416.0,500.0 417.0,500.1 418.0,500.3 419.0,500.5 420.0,500.7 421.0,500.8 422.0,500.7 423.0,500.4 424.0,500.1 425.0,500.0 426.0,500.1 427.0,500.2 428.0,500.3 429.0,500.4 430.0,500.3 431.0,500.2 432.0,500.2 433.0,500.2 434.0,500.4 435.0,500.7 436.0,501.0 437.0,501.0 438.0,500.8 439.0,500.3 440.0,500.0 441.0,500.0 442.0,500.5 443.0,501.1 444.0,501.6 445.0,501.7 446.0,501.4 447.0,501.1 448.0,500.9 449.0,500.9 450.0,501.0 451.0,501.1 452.0,501.1 453.0,501.1 454.0,501.0 455.0,500.9 456.0,500.8 457.0,500.8 458.0,500.7 459.0,500.7 460.0,500.7 461.0,500.8 462.0,501.2 463.0,501.5 464.0,501.6 465.0,501.6 466.0,501.6 467.0,501.5 468.0,501.5 469.0,501.5 470.0,501.5 471.0,501.4 472.0,501.3 473.0,500.9 474.0,500.4 475.0,499.9 476.0,499.8 477.0,500.0 478.0,500.3 479.0,500.7 480.0,501.0 481.0,501.2 482.0,501.4 483.0,501.6 484.0,501.6 485.0,501.4 486.0,501.2 487.0,501.0 488.0,500.9 489.0,500.8 490.0,500.8 491.0,500.7 492.0,500.7 493.0,500.8 494.0,500.9 495.0,501.0 496.0,500.9 497.0,500.6 498.0,500.2 499.0,500.1 500.0,500.2 501.0,500.5 502.0,500.9 503.0,501.2 504.0,501.2 505.0,501.3 506.0,501.3 507.0,501.3 508.0,501.0 509.0,500.5 510.0,500.0 511.0,499.8 512.0,500.0 513.0,500.3 514.0,500.6 515.0,500.8 516.0,500.8 517.0,500.9 518.0,500.9 519.0,500.9 520.0,500.7 521.0,500.6 522.0,500.4 523.0,500.4 524.0,500.6 525.0,500.8 526.0,501.0 527.0,501.2 528.0,501.3 529.0,501.5 530.0,501.5 531.0,501.5 532.0,501.5 533.0,501.5 534.0,501.5 535.0,501.4 536.0,501.1 537.0,500.7 538.0,500.3 539.0,500.2 540.0,500.1 541.0,500.0 542.0,500.0 543.0,500.2 544.0,500.7 545.0,501.2 546.0,501.4 547.0,501.3 548.0,501.1 549.0,501.0 550.0,500.9 551.0,501.0 552.0,501.2 553.0,501.3 554.0,501.4 555.0,501.4 556.0,501.4 557.0,501.4 558.0,501.4 559.0,501.1 560.0,500.6 561.0,500.3 562.0,500.3 563.0,500.5 564.0,500.7 565.0,500.9 566.0,500.8 567.0,500.7 568.0,500.5 569.0,500.3 570.0,500.4 571.0,500.7 572.0,501.1 573.0,501.3 574.0,501.3 575.0,501.3 576.0,501.2 577.0,501.1 578.0,500.9 579.0,500.6 580.0,500.3 581.0,500.2 582.0,500.2 583.0,500.4 584.0,500.6 585.0,500.7 586.0,500.8 587.0,500.8 588.0,500.9 589.0,500.9 590.0,500.7 591.0,500.5 592.0,500.3 593.0,500.1 594.0,500.1 595.0,500.1 596.0,500.1 597.0,500.1 598.0,500.2 599.0,500.5 600.0,500.6 601.0,500.6 602.0,500.4 603.0,500.1 604.0,499.9 605.0,499.9 606.0,500.1 607.0,500.3 608.0,500.6 609.0,500.9 610.0,501.2 611.0,501.4 612.0,501.6 613.0,501.6 614.0,501.6 615.0,501.5 616.0,501.4 617.0,501.0 618.0,500.5 619.0,500.0 620.0,499.8 621.0,500.1 622.0,500.6 623.0,501.1 624.0,501.4 625.0,501.3 626.0,501.2 627.0,501.2 628.0,501.1 629.0,501.1 630.0,501.1 631.0,501.1 632.0,501.1 633.0,500.8 634.0,500.2 635.0,499.8 636.0,499.8 637.0,500.2 638.0,500.7 639.0,501.2 640.0,501.2 641.0,500.8 642.0,500.4 643.0,500.1 644.0,500.2 645.0,500.5 646.0,501.0 647.0,501.3 648.0,501.2 649.0,500.9 650.0,500.6 651.0,500.4 652.0,500.4 653.0,500.4 654.0,500.4 655.0,500.4 656.0,500.4 657.0,500.2 658.0,500.1 659.0,500.0 660.0,500.3 661.0,500.8 662.0,501.2 663.0,501.4 664.0,501.2 665.0,500.7 666.0,500.3 667.0,500.2 668.0,500.4 669.0,500.9 670.0,501.3 671.0,501.4 672.0,501.1 673.0,500.8 673.2,500.7 L673.2,516.5 Z" fill="rgba(14,128,140,0.75)"/><path d="M35.0,500.5 L36.0,500.4 L37.0,500.3 L38.0,500.2 L39.0,500.2 L40.0,500.1 L41.0,500.1 L42.0,500.0 L43.0,500.0 L44.0,500.4 L45.0,500.9 L46.0,501.4 L47.0,501.5 L48.0,501.4 L49.0,501.1 L50.0,500.9 L51.0,500.9 L52.0,500.9 L53.0,501.0 L54.0,501.1 L55.0,501.1 L56.0,501.0 L57.0,500.9 L58.0,500.8 L59.0,500.8 L60.0,500.6 L61.0,500.5 L62.0,500.5 L63.0,500.5 L64.0,500.7 L65.0,501.0 L66.0,501.2 L67.0,501.1 L68.0,501.0 L69.0,500.9 L70.0,500.9 L71.0,500.9 L72.0,501.0 L73.0,501.2 L74.0,501.3 L75.0,501.2 L76.0,501.1 L77.0,501.1 L78.0,501.0 L79.0,501.1 L80.0,501.2 L81.0,501.3 L82.0,501.4 L83.0,501.2 L84.0,501.0 L85.0,500.7 L86.0,500.5 L87.0,500.3 L88.0,500.2 L89.0,500.0 L90.0,500.0 L91.0,500.0 L92.0,500.0 L93.0,500.0 L94.0,500.1 L95.0,500.4 L96.0,500.8 L97.0,501.1 L98.0,501.1 L99.0,500.7 L100.0,500.3 L101.0,500.1 L102.0,500.1 L103.0,500.4 L104.0,500.8 L105.0,501.0 L106.0,501.0 L107.0,501.0 L108.0,501.0 L109.0,500.9 L110.0,500.8 L111.0,500.4 L112.0,500.0 L113.0,499.8 L114.0,500.1 L115.0,500.6 L116.0,501.1 L117.0,501.3 L118.0,501.0 L119.0,500.4 L120.0,499.9 L121.0,499.8 L122.0,500.1 L123.0,500.8 L124.0,501.3 L125.0,501.4 L126.0,501.4 L127.0,501.4 L128.0,501.4 L129.0,501.3 L130.0,501.0 L131.0,500.5 L132.0,500.2 L133.0,500.2 L134.0,500.5 L135.0,500.8 L136.0,501.1 L137.0,501.2 L138.0,501.2 L139.0,501.2 L140.0,501.2 L141.0,501.1 L142.0,500.7 L143.0,500.2 L144.0,500.0 L145.0,500.1 L146.0,500.4 L147.0,500.8 L148.0,501.0 L149.0,500.9 L150.0,500.5 L151.0,500.1 L152.0,499.9 L153.0,500.2 L154.0,500.8 L155.0,501.3 L156.0,501.5 L157.0,501.4 L158.0,501.3 L159.0,501.1 L160.0,501.1 L161.0,501.2 L162.0,501.4 L163.0,501.6 L164.0,501.6 L165.0,501.2 L166.0,500.5 L167.0,499.9 L168.0,499.8 L169.0,499.9 L170.0,500.1 L171.0,500.3 L172.0,500.4 L173.0,500.6 L174.0,500.8 L175.0,500.9 L176.0,500.9 L177.0,500.9 L178.0,500.9 L179.0,500.9 L180.0,500.8 L181.0,500.6 L182.0,500.3 L183.0,500.1 L184.0,500.2 L185.0,500.7 L186.0,501.2 L187.0,501.5 L188.0,501.5 L189.0,501.5 L190.0,501.4 L191.0,501.4 L192.0,501.2 L193.0,500.9 L194.0,500.5 L195.0,500.3 L196.0,500.1 L197.0,500.0 L198.0,500.0 L199.0,500.0 L200.0,500.2 L201.0,500.6 L202.0,500.9 L203.0,501.0 L204.0,500.9 L205.0,500.7 L206.0,500.5 L207.0,500.5 L208.0,500.7 L209.0,500.9 L210.0,501.0 L211.0,501.0 L212.0,500.9 L213.0,500.8 L214.0,500.7 L215.0,500.7 L216.0,500.6 L217.0,500.6 L218.0,500.5 L219.0,500.4 L220.0,500.1 L221.0,499.9 L222.0,499.7 L223.0,499.8 L224.0,499.8 L225.0,499.9 L226.0,500.0 L227.0,500.1 L228.0,500.3 L229.0,500.4 L230.0,500.6 L231.0,500.8 L232.0,501.0 L233.0,501.1 L234.0,501.2 L235.0,501.0 L236.0,500.8 L237.0,500.6 L238.0,500.6 L239.0,500.7 L240.0,500.9 L241.0,501.1 L242.0,501.2 L243.0,501.1 L244.0,500.9 L245.0,500.8 L246.0,500.8 L247.0,501.0 L248.0,501.2 L249.0,501.4 L250.0,501.4 L251.0,501.4 L252.0,501.2 L253.0,501.1 L254.0,500.9 L255.0,500.7 L256.0,500.6 L257.0,500.4 L258.0,500.3 L259.0,500.2 L260.0,500.1 L261.0,500.0 L262.0,499.9 L263.0,499.9 L264.0,499.9 L265.0,499.8 L266.0,499.8 L267.0,499.8 L268.0,499.8 L269.0,499.8 L270.0,500.0 L271.0,500.6 L272.0,501.2 L273.0,501.4 L274.0,501.4 L275.0,501.4 L276.0,501.4 L277.0,501.4 L278.0,501.4 L279.0,501.4 L280.0,501.3 L281.0,501.1 L282.0,500.8 L283.0,500.3 L284.0,500.0 L285.0,500.0 L286.0,500.2 L287.0,500.7 L288.0,501.0 L289.0,501.0 L290.0,500.7 L291.0,500.3 L292.0,500.0 L293.0,500.1 L294.0,500.5 L295.0,501.1 L296.0,501.5 L297.0,501.4 L298.0,501.3 L299.0,501.1 L300.0,501.0 L301.0,501.0 L302.0,501.1 L303.0,501.2 L304.0,501.2 L305.0,501.2 L306.0,501.1 L307.0,501.0 L308.0,500.9 L309.0,500.8 L310.0,500.7 L311.0,500.6 L312.0,500.5 L313.0,500.7 L314.0,500.9 L315.0,501.2 L316.0,501.4 L317.0,501.5 L318.0,501.6 L319.0,501.6 L320.0,501.6 L321.0,501.3 L322.0,500.7 L323.0,500.3 L324.0,500.2 L325.0,500.3 L326.0,500.4 L327.0,500.5 L328.0,500.6 L329.0,500.8 L330.0,501.0 L331.0,501.2 L332.0,501.2 L333.0,501.2 L334.0,501.1 L335.0,501.1 L336.0,501.0 L337.0,500.8 L338.0,500.6 L339.0,500.5 L340.0,500.5 L341.0,500.5 L342.0,500.6 L343.0,500.6 L344.0,500.8 L345.0,501.1 L346.0,501.5 L347.0,501.6 L348.0,501.4 L349.0,501.0 L350.0,500.5 L351.0,500.2 L352.0,500.2 L353.0,500.1 L354.0,500.1 L355.0,500.1 L356.0,500.3 L357.0,500.7 L358.0,501.0 L359.0,501.1 L360.0,500.9 L361.0,500.6 L362.0,500.3 L363.0,500.3 L364.0,500.6 L365.0,501.1 L366.0,501.4 L367.0,501.4 L368.0,501.1 L369.0,500.7 L370.0,500.4 L371.0,500.4 L372.0,500.8 L373.0,501.2 L374.0,501.5 L375.0,501.5 L376.0,501.1 L377.0,500.7 L378.0,500.5 L379.0,500.6 L380.0,500.9 L381.0,501.3 L382.0,501.5 L383.0,501.4 L384.0,501.3 L385.0,501.3 L386.0,501.2 L387.0,501.2 L388.0,501.2 L389.0,501.2 L390.0,501.2 L391.0,501.0 L392.0,500.6 L393.0,500.3 L394.0,500.1 L395.0,500.1 L396.0,500.1 L397.0,500.0 L398.0,500.0 L399.0,499.9 L400.0,499.9 L401.0,499.8 L402.0,499.8 L403.0,499.8 L404.0,499.9 L405.0,500.0 L406.0,500.2 L407.0,500.5 L408.0,500.8 L409.0,501.0 L410.0,501.0 L411.0,500.6 L412.0,500.1 L413.0,499.8 L414.0,499.8 L415.0,499.9 L416.0,500.0 L417.0,500.1 L418.0,500.3 L419.0,500.5 L420.0,500.7 L421.0,500.8 L422.0,500.7 L423.0,500.4 L424.0,500.1 L425.0,500.0 L426.0,500.1 L427.0,500.2 L428.0,500.3 L429.0,500.4 L430.0,500.3 L431.0,500.2 L432.0,500.2 L433.0,500.2 L434.0,500.4 L435.0,500.7 L436.0,501.0 L437.0,501.0 L438.0,500.8 L439.0,500.3 L440.0,500.0 L441.0,500.0 L442.0,500.5 L443.0,501.1 L444.0,501.6 L445.0,501.7 L446.0,501.4 L447.0,501.1 L448.0,500.9 L449.0,500.9 L450.0,501.0 L451.0,501.1 L452.0,501.1 L453.0,501.1 L454.0,501.0 L455.0,500.9 L456.0,500.8 L457.0,500.8 L458.0,500.7 L459.0,500.7 L460.0,500.7 L461.0,500.8 L462.0,501.2 L463.0,501.5 L464.0,501.6 L465.0,501.6 L466.0,501.6 L467.0,501.5 L468.0,501.5 L469.0,501.5 L470.0,501.5 L471.0,501.4 L472.0,501.3 L473.0,500.9 L474.0,500.4 L475.0,499.9 L476.0,499.8 L477.0,500.0 L478.0,500.3 L479.0,500.7 L480.0,501.0 L481.0,501.2 L482.0,501.4 L483.0,501.6 L484.0,501.6 L485.0,501.4 L486.0,501.2 L487.0,501.0 L488.0,500.9 L489.0,500.8 L490.0,500.8 L491.0,500.7 L492.0,500.7 L493.0,500.8 L494.0,500.9 L495.0,501.0 L496.0,500.9 L497.0,500.6 L498.0,500.2 L499.0,500.1 L500.0,500.2 L501.0,500.5 L502.0,500.9 L503.0,501.2 L504.0,501.2 L505.0,501.3 L506.0,501.3 L507.0,501.3 L508.0,501.0 L509.0,500.5 L510.0,500.0 L511.0,499.8 L512.0,500.0 L513.0,500.3 L514.0,500.6 L515.0,500.8 L516.0,500.8 L517.0,500.9 L518.0,500.9 L519.0,500.9 L520.0,500.7 L521.0,500.6 L522.0,500.4 L523.0,500.4 L524.0,500.6 L525.0,500.8 L526.0,501.0 L527.0,501.2 L528.0,501.3 L529.0,501.5 L530.0,501.5 L531.0,501.5 L532.0,501.5 L533.0,501.5 L534.0,501.5 L535.0,501.4 L536.0,501.1 L537.0,500.7 L538.0,500.3 L539.0,500.2 L540.0,500.1 L541.0,500.0 L542.0,500.0 L543.0,500.2 L544.0,500.7 L545.0,501.2 L546.0,501.4 L547.0,501.3 L548.0,501.1 L549.0,501.0 L550.0,500.9 L551.0,501.0 L552.0,501.2 L553.0,501.3 L554.0,501.4 L555.0,501.4 L556.0,501.4 L557.0,501.4 L558.0,501.4 L559.0,501.1 L560.0,500.6 L561.0,500.3 L562.0,500.3 L563.0,500.5 L564.0,500.7 L565.0,500.9 L566.0,500.8 L567.0,500.7 L568.0,500.5 L569.0,500.3 L570.0,500.4 L571.0,500.7 L572.0,501.1 L573.0,501.3 L574.0,501.3 L575.0,501.3 L576.0,501.2 L577.0,501.1 L578.0,500.9 L579.0,500.6 L580.0,500.3 L581.0,500.2 L582.0,500.2 L583.0,500.4 L584.0,500.6 L585.0,500.7 L586.0,500.8 L587.0,500.8 L588.0,500.9 L589.0,500.9 L590.0,500.7 L591.0,500.5 L592.0,500.3 L593.0,500.1 L594.0,500.1 L595.0,500.1 L596.0,500.1 L597.0,500.1 L598.0,500.2 L599.0,500.5 L600.0,500.6 L601.0,500.6 L602.0,500.4 L603.0,500.1 L604.0,499.9 L605.0,499.9 L606.0,500.1 L607.0,500.3 L608.0,500.6 L609.0,500.9 L610.0,501.2 L611.0,501.4 L612.0,501.6 L613.0,501.6 L614.0,501.6 L615.0,501.5 L616.0,501.4 L617.0,501.0 L618.0,500.5 L619.0,500.0 L620.0,499.8 L621.0,500.1 L622.0,500.6 L623.0,501.1 L624.0,501.4 L625.0,501.3 L626.0,501.2 L627.0,501.2 L628.0,501.1 L629.0,501.1 L630.0,501.1 L631.0,501.1 L632.0,501.1 L633.0,500.8 L634.0,500.2 L635.0,499.8 L636.0,499.8 L637.0,500.2 L638.0,500.7 L639.0,501.2 L640.0,501.2 L641.0,500.8 L642.0,500.4 L643.0,500.1 L644.0,500.2 L645.0,500.5 L646.0,501.0 L647.0,501.3 L648.0,501.2 L649.0,500.9 L650.0,500.6 L651.0,500.4 L652.0,500.4 L653.0,500.4 L654.0,500.4 L655.0,500.4 L656.0,500.4 L657.0,500.2 L658.0,500.1 L659.0,500.0 L660.0,500.3 L661.0,500.8 L662.0,501.2 L663.0,501.4 L664.0,501.2 L665.0,500.7 L666.0,500.3 L667.0,500.2 L668.0,500.4 L669.0,500.9 L670.0,501.3 L671.0,501.4 L672.0,501.1 L673.0,500.8 L673.2,500.7" fill="none" stroke="#15788a" stroke-width="1"/><path d="M35.0,516.5 L35.0,505.1 36.0,505.2 37.0,505.3 38.0,505.4 39.0,505.4 40.0,505.3 41.0,505.2 42.0,505.0 43.0,505.0 44.0,505.2 45.0,505.5 46.0,505.7 47.0,505.8 48.0,505.6 49.0,505.3 50.0,505.1 51.0,505.1 52.0,505.2 53.0,505.3 54.0,505.4 55.0,505.5 56.0,505.7 57.0,505.8 58.0,505.9 59.0,505.9 60.0,505.7 61.0,505.4 62.0,505.3 63.0,505.3 64.0,505.6 65.0,505.8 66.0,506.0 67.0,505.9 68.0,505.9 69.0,505.8 70.0,505.7 71.0,505.6 72.0,505.5 73.0,505.5 74.0,505.5 75.0,505.5 76.0,505.5 77.0,505.5 78.0,505.6 79.0,505.6 80.0,505.5 81.0,505.5 82.0,505.5 83.0,505.4 84.0,505.3 85.0,505.3 86.0,505.2 87.0,505.4 88.0,505.7 89.0,505.9 90.0,506.0 91.0,505.8 92.0,505.5 93.0,505.3 94.0,505.3 95.0,505.5 96.0,505.8 97.0,506.0 98.0,506.0 99.0,506.0 100.0,505.9 101.0,505.9 102.0,505.7 103.0,505.4 104.0,505.0 105.0,504.8 106.0,504.9 107.0,504.9 108.0,505.0 109.0,505.1 110.0,505.2 111.0,505.2 112.0,505.3 113.0,505.4 114.0,505.5 115.0,505.6 116.0,505.7 117.0,505.8 118.0,505.6 119.0,505.4 120.0,505.1 121.0,505.0 122.0,505.1 123.0,505.3 124.0,505.5 125.0,505.5 126.0,505.5 127.0,505.4 128.0,505.3 129.0,505.3 130.0,505.4 131.0,505.5 132.0,505.7 133.0,505.8 134.0,505.8 135.0,505.9 136.0,505.9 137.0,505.9 138.0,505.9 139.0,505.8 140.0,505.7 141.0,505.6 142.0,505.4 143.0,505.2 144.0,505.0 145.0,505.1 146.0,505.3 147.0,505.6 148.0,505.7 149.0,505.7 150.0,505.5 151.0,505.4 152.0,505.3 153.0,505.4 154.0,505.6 155.0,505.7 156.0,505.8 157.0,505.7 158.0,505.6 159.0,505.4 160.0,505.4 161.0,505.5 162.0,505.6 163.0,505.8 164.0,505.9 165.0,506.0 166.0,506.0 167.0,506.0 168.0,506.0 169.0,505.9 170.0,505.9 171.0,505.8 172.0,505.8 173.0,505.8 174.0,505.8 175.0,505.8 176.0,505.8 177.0,505.8 178.0,505.8 179.0,505.8 180.0,505.8 181.0,505.7 182.0,505.6 183.0,505.5 184.0,505.4 185.0,505.2 186.0,505.1 187.0,505.0 188.0,505.1 189.0,505.5 190.0,505.8 191.0,506.0 192.0,505.9 193.0,505.7 194.0,505.5 195.0,505.3 196.0,505.2 197.0,505.0 198.0,504.9 199.0,504.8 200.0,504.9 201.0,505.1 202.0,505.3 203.0,505.3 204.0,505.3 205.0,505.3 206.0,505.3 207.0,505.3 208.0,505.2 209.0,505.1 210.0,505.1 211.0,505.1 212.0,505.3 213.0,505.7 214.0,505.9 215.0,505.9 216.0,505.6 217.0,505.2 218.0,505.0 219.0,505.0 220.0,505.3 221.0,505.7 222.0,505.9 223.0,505.9 224.0,505.7 225.0,505.6 226.0,505.5 227.0,505.3 228.0,505.2 229.0,505.1 230.0,505.0 231.0,505.0 232.0,505.1 233.0,505.2 234.0,505.2 235.0,505.3 236.0,505.3 237.0,505.3 238.0,505.3 239.0,505.3 240.0,505.1 241.0,505.0 242.0,505.0 243.0,505.1 244.0,505.4 245.0,505.7 246.0,505.7 247.0,505.7 248.0,505.6 249.0,505.6 250.0,505.6 251.0,505.7 252.0,505.9 253.0,506.0 254.0,506.0 255.0,505.9 256.0,505.9 257.0,505.8 258.0,505.8 259.0,505.8 260.0,505.7 261.0,505.7 262.0,505.8 263.0,505.9 264.0,505.9 265.0,506.0 266.0,506.0 267.0,506.0 268.0,506.0 269.0,505.9 270.0,505.8 271.0,505.7 272.0,505.6 273.0,505.6 274.0,505.5 275.0,505.5 276.0,505.5 277.0,505.4 278.0,505.4 279.0,505.4 280.0,505.4 281.0,505.4 282.0,505.5 283.0,505.6 284.0,505.7 285.0,505.8 286.0,505.9 287.0,505.9 288.0,505.9 289.0,505.9 290.0,505.9 291.0,505.8 292.0,505.8 293.0,505.8 294.0,505.8 295.0,505.8 296.0,505.8 297.0,505.7 298.0,505.4 299.0,505.1 300.0,504.8 301.0,504.9 302.0,505.0 303.0,505.2 304.0,505.3 305.0,505.3 306.0,505.1 307.0,505.0 308.0,504.9 309.0,505.0 310.0,505.2 311.0,505.4 312.0,505.5 313.0,505.5 314.0,505.5 315.0,505.5 316.0,505.5 317.0,505.5 318.0,505.5 319.0,505.5 320.0,505.5 321.0,505.6 322.0,505.7 323.0,505.8 324.0,505.8 325.0,505.6 326.0,505.3 327.0,505.1 328.0,505.1 329.0,505.3 330.0,505.5 331.0,505.7 332.0,505.7 333.0,505.6 334.0,505.6 335.0,505.5 336.0,505.4 337.0,505.3 338.0,505.1 339.0,505.1 340.0,505.2 341.0,505.5 342.0,505.8 343.0,506.0 344.0,505.8 345.0,505.4 346.0,505.0 347.0,504.9 348.0,504.9 349.0,505.1 350.0,505.3 351.0,505.4 352.0,505.4 353.0,505.4 354.0,505.4 355.0,505.4 356.0,505.5 357.0,505.5 358.0,505.5 359.0,505.5 360.0,505.7 361.0,505.8 362.0,506.0 363.0,506.0 364.0,505.8 365.0,505.6 366.0,505.5 367.0,505.5 368.0,505.6 369.0,505.7 370.0,505.9 371.0,505.8 372.0,505.6 373.0,505.3 374.0,505.2 375.0,505.2 376.0,505.2 377.0,505.3 378.0,505.4 379.0,505.3 380.0,505.2 381.0,505.1 382.0,505.0 383.0,505.1 384.0,505.3 385.0,505.5 386.0,505.6 387.0,505.5 388.0,505.4 389.0,505.3 390.0,505.3 391.0,505.4 392.0,505.5 393.0,505.7 394.0,505.7 395.0,505.6 396.0,505.3 397.0,505.0 398.0,504.9 399.0,505.0 400.0,505.1 401.0,505.3 402.0,505.4 403.0,505.6 404.0,505.8 405.0,505.9 406.0,505.9 407.0,505.6 408.0,505.1 409.0,504.8 410.0,504.9 411.0,505.1 412.0,505.4 413.0,505.6 414.0,505.6 415.0,505.6 416.0,505.6 417.0,505.6 418.0,505.6 419.0,505.6 420.0,505.7 421.0,505.7 422.0,505.6 423.0,505.6 424.0,505.5 425.0,505.5 426.0,505.4 427.0,505.4 428.0,505.4 429.0,505.4 430.0,505.5 431.0,505.7 432.0,505.9 433.0,505.9 434.0,505.8 435.0,505.5 436.0,505.2 437.0,505.1 438.0,505.3 439.0,505.5 440.0,505.6 441.0,505.6 442.0,505.6 443.0,505.6 444.0,505.6 445.0,505.6 446.0,505.6 447.0,505.7 448.0,505.7 449.0,505.7 450.0,505.6 451.0,505.5 452.0,505.4 453.0,505.3 454.0,505.1 455.0,504.9 456.0,504.8 457.0,504.9 458.0,505.2 459.0,505.6 460.0,505.7 461.0,505.7 462.0,505.4 463.0,505.2 464.0,505.1 465.0,505.2 466.0,505.4 467.0,505.6 468.0,505.7 469.0,505.8 470.0,505.9 471.0,506.0 472.0,506.0 473.0,506.0 474.0,505.9 475.0,505.8 476.0,505.7 477.0,505.6 478.0,505.4 479.0,505.3 480.0,505.3 481.0,505.4 482.0,505.6 483.0,505.8 484.0,505.8 485.0,505.7 486.0,505.5 487.0,505.3 488.0,505.2 489.0,505.2 490.0,505.2 491.0,505.2 492.0,505.2 493.0,505.3 494.0,505.4 495.0,505.5 496.0,505.5 497.0,505.5 498.0,505.6 499.0,505.6 500.0,505.6 501.0,505.6 502.0,505.6 503.0,505.6 504.0,505.6 505.0,505.6 506.0,505.5 507.0,505.5 508.0,505.4 509.0,505.3 510.0,505.3 511.0,505.3 512.0,505.4 513.0,505.5 514.0,505.7 515.0,505.7 516.0,505.6 517.0,505.4 518.0,505.2 519.0,505.2 520.0,505.3 521.0,505.4 522.0,505.5 523.0,505.5 524.0,505.3 525.0,505.0 526.0,504.8 527.0,504.8 528.0,504.8 529.0,504.9 530.0,504.9 531.0,505.1 532.0,505.4 533.0,505.7 534.0,505.8 535.0,505.8 536.0,505.5 537.0,505.2 538.0,505.1 539.0,505.1 540.0,505.2 541.0,505.3 542.0,505.3 543.0,505.2 544.0,505.1 545.0,504.9 546.0,504.9 547.0,505.0 548.0,505.3 549.0,505.6 550.0,505.7 551.0,505.6 552.0,505.5 553.0,505.3 554.0,505.2 555.0,505.0 556.0,504.9 557.0,504.9 558.0,504.9 559.0,504.9 560.0,505.0 561.0,505.1 562.0,505.2 563.0,505.5 564.0,505.7 565.0,505.9 566.0,505.9 567.0,505.9 568.0,505.8 569.0,505.7 570.0,505.6 571.0,505.3 572.0,505.0 573.0,504.8 574.0,504.9 575.0,505.3 576.0,505.7 577.0,505.9 578.0,505.8 579.0,505.4 580.0,505.1 581.0,504.9 582.0,505.0 583.0,505.1 584.0,505.3 585.0,505.4 586.0,505.4 587.0,505.4 588.0,505.4 589.0,505.4 590.0,505.5 591.0,505.6 592.0,505.7 593.0,505.7 594.0,505.5 595.0,505.3 596.0,505.0 597.0,505.0 598.0,505.2 599.0,505.5 600.0,505.8 601.0,505.8 602.0,505.6 603.0,505.3 604.0,505.1 605.0,505.2 606.0,505.3 607.0,505.5 608.0,505.7 609.0,505.8 610.0,505.8 611.0,505.9 612.0,505.9 613.0,505.9 614.0,505.8 615.0,505.7 616.0,505.5 617.0,505.3 618.0,505.1 619.0,504.9 620.0,504.8 621.0,504.9 622.0,505.2 623.0,505.5 624.0,505.6 625.0,505.5 626.0,505.4 627.0,505.4 628.0,505.3 629.0,505.4 630.0,505.5 631.0,505.6 632.0,505.7 633.0,505.7 634.0,505.7 635.0,505.7 636.0,505.7 637.0,505.5 638.0,505.2 639.0,505.0 640.0,505.0 641.0,505.1 642.0,505.3 643.0,505.4 644.0,505.5 645.0,505.5 646.0,505.5 647.0,505.6 648.0,505.6 649.0,505.7 650.0,505.8 651.0,505.9 652.0,505.9 653.0,505.7 654.0,505.6 655.0,505.5 656.0,505.5 657.0,505.5 658.0,505.5 659.0,505.5 660.0,505.6 661.0,505.6 662.0,505.7 663.0,505.7 664.0,505.6 665.0,505.3 666.0,505.1 667.0,505.0 668.0,505.2 669.0,505.5 670.0,505.8 671.0,505.8 672.0,505.7 673.0,505.4 673.2,505.4 L673.2,516.5 Z" fill="rgba(10,125,132,0.85)"/><path d="M35.0,505.1 L36.0,505.2 L37.0,505.3 L38.0,505.4 L39.0,505.4 L40.0,505.3 L41.0,505.2 L42.0,505.0 L43.0,505.0 L44.0,505.2 L45.0,505.5 L46.0,505.7 L47.0,505.8 L48.0,505.6 L49.0,505.3 L50.0,505.1 L51.0,505.1 L52.0,505.2 L53.0,505.3 L54.0,505.4 L55.0,505.5 L56.0,505.7 L57.0,505.8 L58.0,505.9 L59.0,505.9 L60.0,505.7 L61.0,505.4 L62.0,505.3 L63.0,505.3 L64.0,505.6 L65.0,505.8 L66.0,506.0 L67.0,505.9 L68.0,505.9 L69.0,505.8 L70.0,505.7 L71.0,505.6 L72.0,505.5 L73.0,505.5 L74.0,505.5 L75.0,505.5 L76.0,505.5 L77.0,505.5 L78.0,505.6 L79.0,505.6 L80.0,505.5 L81.0,505.5 L82.0,505.5 L83.0,505.4 L84.0,505.3 L85.0,505.3 L86.0,505.2 L87.0,505.4 L88.0,505.7 L89.0,505.9 L90.0,506.0 L91.0,505.8 L92.0,505.5 L93.0,505.3 L94.0,505.3 L95.0,505.5 L96.0,505.8 L97.0,506.0 L98.0,506.0 L99.0,506.0 L100.0,505.9 L101.0,505.9 L102.0,505.7 L103.0,505.4 L104.0,505.0 L105.0,504.8 L106.0,504.9 L107.0,504.9 L108.0,505.0 L109.0,505.1 L110.0,505.2 L111.0,505.2 L112.0,505.3 L113.0,505.4 L114.0,505.5 L115.0,505.6 L116.0,505.7 L117.0,505.8 L118.0,505.6 L119.0,505.4 L120.0,505.1 L121.0,505.0 L122.0,505.1 L123.0,505.3 L124.0,505.5 L125.0,505.5 L126.0,505.5 L127.0,505.4 L128.0,505.3 L129.0,505.3 L130.0,505.4 L131.0,505.5 L132.0,505.7 L133.0,505.8 L134.0,505.8 L135.0,505.9 L136.0,505.9 L137.0,505.9 L138.0,505.9 L139.0,505.8 L140.0,505.7 L141.0,505.6 L142.0,505.4 L143.0,505.2 L144.0,505.0 L145.0,505.1 L146.0,505.3 L147.0,505.6 L148.0,505.7 L149.0,505.7 L150.0,505.5 L151.0,505.4 L152.0,505.3 L153.0,505.4 L154.0,505.6 L155.0,505.7 L156.0,505.8 L157.0,505.7 L158.0,505.6 L159.0,505.4 L160.0,505.4 L161.0,505.5 L162.0,505.6 L163.0,505.8 L164.0,505.9 L165.0,506.0 L166.0,506.0 L167.0,506.0 L168.0,506.0 L169.0,505.9 L170.0,505.9 L171.0,505.8 L172.0,505.8 L173.0,505.8 L174.0,505.8 L175.0,505.8 L176.0,505.8 L177.0,505.8 L178.0,505.8 L179.0,505.8 L180.0,505.8 L181.0,505.7 L182.0,505.6 L183.0,505.5 L184.0,505.4 L185.0,505.2 L186.0,505.1 L187.0,505.0 L188.0,505.1 L189.0,505.5 L190.0,505.8 L191.0,506.0 L192.0,505.9 L193.0,505.7 L194.0,505.5 L195.0,505.3 L196.0,505.2 L197.0,505.0 L198.0,504.9 L199.0,504.8 L200.0,504.9 L201.0,505.1 L202.0,505.3 L203.0,505.3 L204.0,505.3 L205.0,505.3 L206.0,505.3 L207.0,505.3 L208.0,505.2 L209.0,505.1 L210.0,505.1 L211.0,505.1 L212.0,505.3 L213.0,505.7 L214.0,505.9 L215.0,505.9 L216.0,505.6 L217.0,505.2 L218.0,505.0 L219.0,505.0 L220.0,505.3 L221.0,505.7 L222.0,505.9 L223.0,505.9 L224.0,505.7 L225.0,505.6 L226.0,505.5 L227.0,505.3 L228.0,505.2 L229.0,505.1 L230.0,505.0 L231.0,505.0 L232.0,505.1 L233.0,505.2 L234.0,505.2 L235.0,505.3 L236.0,505.3 L237.0,505.3 L238.0,505.3 L239.0,505.3 L240.0,505.1 L241.0,505.0 L242.0,505.0 L243.0,505.1 L244.0,505.4 L245.0,505.7 L246.0,505.7 L247.0,505.7 L248.0,505.6 L249.0,505.6 L250.0,505.6 L251.0,505.7 L252.0,505.9 L253.0,506.0 L254.0,506.0 L255.0,505.9 L256.0,505.9 L257.0,505.8 L258.0,505.8 L259.0,505.8 L260.0,505.7 L261.0,505.7 L262.0,505.8 L263.0,505.9 L264.0,505.9 L265.0,506.0 L266.0,506.0 L267.0,506.0 L268.0,506.0 L269.0,505.9 L270.0,505.8 L271.0,505.7 L272.0,505.6 L273.0,505.6 L274.0,505.5 L275.0,505.5 L276.0,505.5 L277.0,505.4 L278.0,505.4 L279.0,505.4 L280.0,505.4 L281.0,505.4 L282.0,505.5 L283.0,505.6 L284.0,505.7 L285.0,505.8 L286.0,505.9 L287.0,505.9 L288.0,505.9 L289.0,505.9 L290.0,505.9 L291.0,505.8 L292.0,505.8 L293.0,505.8 L294.0,505.8 L295.0,505.8 L296.0,505.8 L297.0,505.7 L298.0,505.4 L299.0,505.1 L300.0,504.8 L301.0,504.9 L302.0,505.0 L303.0,505.2 L304.0,505.3 L305.0,505.3 L306.0,505.1 L307.0,505.0 L308.0,504.9 L309.0,505.0 L310.0,505.2 L311.0,505.4 L312.0,505.5 L313.0,505.5 L314.0,505.5 L315.0,505.5 L316.0,505.5 L317.0,505.5 L318.0,505.5 L319.0,505.5 L320.0,505.5 L321.0,505.6 L322.0,505.7 L323.0,505.8 L324.0,505.8 L325.0,505.6 L326.0,505.3 L327.0,505.1 L328.0,505.1 L329.0,505.3 L330.0,505.5 L331.0,505.7 L332.0,505.7 L333.0,505.6 L334.0,505.6 L335.0,505.5 L336.0,505.4 L337.0,505.3 L338.0,505.1 L339.0,505.1 L340.0,505.2 L341.0,505.5 L342.0,505.8 L343.0,506.0 L344.0,505.8 L345.0,505.4 L346.0,505.0 L347.0,504.9 L348.0,504.9 L349.0,505.1 L350.0,505.3 L351.0,505.4 L352.0,505.4 L353.0,505.4 L354.0,505.4 L355.0,505.4 L356.0,505.5 L357.0,505.5 L358.0,505.5 L359.0,505.5 L360.0,505.7 L361.0,505.8 L362.0,506.0 L363.0,506.0 L364.0,505.8 L365.0,505.6 L366.0,505.5 L367.0,505.5 L368.0,505.6 L369.0,505.7 L370.0,505.9 L371.0,505.8 L372.0,505.6 L373.0,505.3 L374.0,505.2 L375.0,505.2 L376.0,505.2 L377.0,505.3 L378.0,505.4 L379.0,505.3 L380.0,505.2 L381.0,505.1 L382.0,505.0 L383.0,505.1 L384.0,505.3 L385.0,505.5 L386.0,505.6 L387.0,505.5 L388.0,505.4 L389.0,505.3 L390.0,505.3 L391.0,505.4 L392.0,505.5 L393.0,505.7 L394.0,505.7 L395.0,505.6 L396.0,505.3 L397.0,505.0 L398.0,504.9 L399.0,505.0 L400.0,505.1 L401.0,505.3 L402.0,505.4 L403.0,505.6 L404.0,505.8 L405.0,505.9 L406.0,505.9 L407.0,505.6 L408.0,505.1 L409.0,504.8 L410.0,504.9 L411.0,505.1 L412.0,505.4 L413.0,505.6 L414.0,505.6 L415.0,505.6 L416.0,505.6 L417.0,505.6 L418.0,505.6 L419.0,505.6 L420.0,505.7 L421.0,505.7 L422.0,505.6 L423.0,505.6 L424.0,505.5 L425.0,505.5 L426.0,505.4 L427.0,505.4 L428.0,505.4 L429.0,505.4 L430.0,505.5 L431.0,505.7 L432.0,505.9 L433.0,505.9 L434.0,505.8 L435.0,505.5 L436.0,505.2 L437.0,505.1 L438.0,505.3 L439.0,505.5 L440.0,505.6 L441.0,505.6 L442.0,505.6 L443.0,505.6 L444.0,505.6 L445.0,505.6 L446.0,505.6 L447.0,505.7 L448.0,505.7 L449.0,505.7 L450.0,505.6 L451.0,505.5 L452.0,505.4 L453.0,505.3 L454.0,505.1 L455.0,504.9 L456.0,504.8 L457.0,504.9 L458.0,505.2 L459.0,505.6 L460.0,505.7 L461.0,505.7 L462.0,505.4 L463.0,505.2 L464.0,505.1 L465.0,505.2 L466.0,505.4 L467.0,505.6 L468.0,505.7 L469.0,505.8 L470.0,505.9 L471.0,506.0 L472.0,506.0 L473.0,506.0 L474.0,505.9 L475.0,505.8 L476.0,505.7 L477.0,505.6 L478.0,505.4 L479.0,505.3 L480.0,505.3 L481.0,505.4 L482.0,505.6 L483.0,505.8 L484.0,505.8 L485.0,505.7 L486.0,505.5 L487.0,505.3 L488.0,505.2 L489.0,505.2 L490.0,505.2 L491.0,505.2 L492.0,505.2 L493.0,505.3 L494.0,505.4 L495.0,505.5 L496.0,505.5 L497.0,505.5 L498.0,505.6 L499.0,505.6 L500.0,505.6 L501.0,505.6 L502.0,505.6 L503.0,505.6 L504.0,505.6 L505.0,505.6 L506.0,505.5 L507.0,505.5 L508.0,505.4 L509.0,505.3 L510.0,505.3 L511.0,505.3 L512.0,505.4 L513.0,505.5 L514.0,505.7 L515.0,505.7 L516.0,505.6 L517.0,505.4 L518.0,505.2 L519.0,505.2 L520.0,505.3 L521.0,505.4 L522.0,505.5 L523.0,505.5 L524.0,505.3 L525.0,505.0 L526.0,504.8 L527.0,504.8 L528.0,504.8 L529.0,504.9 L530.0,504.9 L531.0,505.1 L532.0,505.4 L533.0,505.7 L534.0,505.8 L535.0,505.8 L536.0,505.5 L537.0,505.2 L538.0,505.1 L539.0,505.1 L540.0,505.2 L541.0,505.3 L542.0,505.3 L543.0,505.2 L544.0,505.1 L545.0,504.9 L546.0,504.9 L547.0,505.0 L548.0,505.3 L549.0,505.6 L550.0,505.7 L551.0,505.6 L552.0,505.5 L553.0,505.3 L554.0,505.2 L555.0,505.0 L556.0,504.9 L557.0,504.9 L558.0,504.9 L559.0,504.9 L560.0,505.0 L561.0,505.1 L562.0,505.2 L563.0,505.5 L564.0,505.7 L565.0,505.9 L566.0,505.9 L567.0,505.9 L568.0,505.8 L569.0,505.7 L570.0,505.6 L571.0,505.3 L572.0,505.0 L573.0,504.8 L574.0,504.9 L575.0,505.3 L576.0,505.7 L577.0,505.9 L578.0,505.8 L579.0,505.4 L580.0,505.1 L581.0,504.9 L582.0,505.0 L583.0,505.1 L584.0,505.3 L585.0,505.4 L586.0,505.4 L587.0,505.4 L588.0,505.4 L589.0,505.4 L590.0,505.5 L591.0,505.6 L592.0,505.7 L593.0,505.7 L594.0,505.5 L595.0,505.3 L596.0,505.0 L597.0,505.0 L598.0,505.2 L599.0,505.5 L600.0,505.8 L601.0,505.8 L602.0,505.6 L603.0,505.3 L604.0,505.1 L605.0,505.2 L606.0,505.3 L607.0,505.5 L608.0,505.7 L609.0,505.8 L610.0,505.8 L611.0,505.9 L612.0,505.9 L613.0,505.9 L614.0,505.8 L615.0,505.7 L616.0,505.5 L617.0,505.3 L618.0,505.1 L619.0,504.9 L620.0,504.8 L621.0,504.9 L622.0,505.2 L623.0,505.5 L624.0,505.6 L625.0,505.5 L626.0,505.4 L627.0,505.4 L628.0,505.3 L629.0,505.4 L630.0,505.5 L631.0,505.6 L632.0,505.7 L633.0,505.7 L634.0,505.7 L635.0,505.7 L636.0,505.7 L637.0,505.5 L638.0,505.2 L639.0,505.0 L640.0,505.0 L641.0,505.1 L642.0,505.3 L643.0,505.4 L644.0,505.5 L645.0,505.5 L646.0,505.5 L647.0,505.6 L648.0,505.6 L649.0,505.7 L650.0,505.8 L651.0,505.9 L652.0,505.9 L653.0,505.7 L654.0,505.6 L655.0,505.5 L656.0,505.5 L657.0,505.5 L658.0,505.5 L659.0,505.5 L660.0,505.6 L661.0,505.6 L662.0,505.7 L663.0,505.7 L664.0,505.6 L665.0,505.3 L666.0,505.1 L667.0,505.0 L668.0,505.2 L669.0,505.5 L670.0,505.8 L671.0,505.8 L672.0,505.7 L673.0,505.4 L673.2,505.4" fill="none" stroke="rgba(120,150,60,0.7)" stroke-width="0.8"/><path d="M35.0,516.2 L673.2,516.2" stroke="#0f7a80" stroke-width="1.2"/></svg>
<div class="t" style="left:10.0px;top:403.70px;font-size:6.5px;font-weight:bold;color:#25a0b4;width:16px;text-align:right">400</div>
<div class="t" style="left:10.0px;top:430.60px;font-size:6.5px;font-weight:bold;color:#25a0b4;width:16px;text-align:right">300</div>
<div class="t" style="left:10.0px;top:457.50px;font-size:6.5px;font-weight:bold;color:#25a0b4;width:16px;text-align:right">200</div>
<div class="t" style="left:10.0px;top:484.40px;font-size:6.5px;font-weight:bold;color:#25a0b4;width:16px;text-align:right">100</div>
<div class="t" style="left:10.0px;top:510.80px;font-size:6.5px;font-weight:bold;color:#25a0b4;width:16px;text-align:right">0</div>
<div class="t" style="left:27.0px;top:522.52px;font-size:6.0px;font-weight:normal;color:#666;">9. Jan</div>
<div class="t" style="left:95.4px;top:522.61px;font-size:5.9px;font-weight:normal;color:#777;width:17px;text-align:center">01:00</div>
<div class="t" style="left:164.4px;top:522.61px;font-size:5.9px;font-weight:normal;color:#777;width:17px;text-align:center">02:00</div>
<div class="t" style="left:233.3px;top:522.61px;font-size:5.9px;font-weight:normal;color:#777;width:17px;text-align:center">03:00</div>
<div class="t" style="left:302.2px;top:522.61px;font-size:5.9px;font-weight:normal;color:#777;width:17px;text-align:center">04:00</div>
<div class="t" style="left:371.2px;top:522.61px;font-size:5.9px;font-weight:normal;color:#777;width:17px;text-align:center">05:00</div>
<div class="t" style="left:440.1px;top:522.61px;font-size:5.9px;font-weight:normal;color:#777;width:17px;text-align:center">06:00</div>
<div class="t" style="left:509.0px;top:522.61px;font-size:5.9px;font-weight:normal;color:#777;width:17px;text-align:center">07:00</div>
<div class="t" style="left:577.9px;top:522.61px;font-size:5.9px;font-weight:normal;color:#777;width:17px;text-align:center">08:00</div>
<div class="t" style="left:646.9px;top:522.61px;font-size:5.9px;font-weight:normal;color:#777;width:17px;text-align:center">09:00</div>
<div style="position:absolute;left:34px;top:539.8px;width:642.6px;height:1px;background:#c8ccd0"></div>
<div style="position:absolute;left:34px;top:540.5999999999999px;width:642.6px;height:9.6px;background:#d9e7f8"></div>
<svg style="position:absolute;left:0;top:0" width="1381" height="650"><path d="M39.0,544.3 L40.0,544.3 L41.0,544.3 L42.0,544.3 L43.0,544.4 L44.0,544.4 L45.0,544.4 L46.0,544.4 L47.0,544.5 L48.0,544.5 L49.0,544.6 L50.0,544.8 L51.0,544.9 L52.0,545.1 L53.0,545.3 L54.0,545.4 L55.0,545.5 L56.0,545.6 L57.0,545.7 L58.0,545.6 L59.0,545.4 L60.0,545.1 L61.0,544.8 L62.0,544.4 L63.0,544.1 L64.0,543.8 L65.0,543.6 L66.0,543.5 L67.0,543.5 L68.0,543.5 L69.0,543.5 L70.0,543.5 L71.0,543.5 L72.0,543.5 L73.0,543.5 L74.0,543.5 L75.0,543.5 L76.0,543.6 L77.0,543.7 L78.0,543.9 L79.0,544.2 L80.0,544.5 L81.0,544.7 L82.0,544.9 L83.0,545.1 L84.0,545.1 L85.0,545.1 L86.0,545.1 L87.0,545.0 L88.0,544.9 L89.0,544.7 L90.0,544.6 L91.0,544.5 L92.0,544.3 L93.0,544.2 L94.0,544.2 L95.0,544.1 L96.0,544.0 L97.0,543.9 L98.0,543.8 L99.0,543.8 L100.0,543.7 L101.0,543.7 L102.0,543.7 L103.0,543.7 L104.0,543.7 L105.0,543.7 L106.0,543.8 L107.0,543.8 L108.0,543.8 L109.0,543.9 L110.0,543.9 L111.0,543.9 L112.0,543.9 L113.0,543.9 L114.0,543.8 L115.0,543.8 L116.0,543.8 L117.0,543.7 L118.0,543.7 L119.0,543.6 L120.0,543.6 L121.0,543.5 L122.0,543.4 L123.0,543.3 L124.0,543.2 L125.0,543.1 L126.0,543.0 L127.0,542.9 L128.0,542.9 L129.0,542.8 L130.0,542.9 L131.0,543.0 L132.0,543.2 L133.0,543.5 L134.0,543.8 L135.0,544.1 L136.0,544.4 L137.0,544.7 L138.0,544.9 L139.0,545.1 L140.0,545.2 L141.0,545.4 L142.0,545.6 L143.0,545.7 L144.0,545.9 L145.0,545.9 L146.0,546.0 L147.0,546.0 L148.0,546.0 L149.0,545.9 L150.0,545.8 L151.0,545.7 L152.0,545.6 L153.0,545.4 L154.0,545.3 L155.0,545.2 L156.0,545.1 L157.0,545.1 L158.0,545.1 L159.0,545.0 L160.0,545.0 L161.0,545.0 L162.0,545.0 L163.0,545.0 L164.0,544.9 L165.0,544.9 L166.0,544.8 L167.0,544.7 L168.0,544.5 L169.0,544.3 L170.0,544.1 L171.0,543.9 L172.0,543.7 L173.0,543.6 L174.0,543.6 L175.0,543.6 L176.0,543.6 L177.0,543.7 L178.0,543.8 L179.0,543.8 L180.0,543.9 L181.0,544.0 L182.0,544.0 L183.0,544.0 L184.0,544.0 L185.0,543.8 L186.0,543.7 L187.0,543.5 L188.0,543.3 L189.0,543.1 L190.0,542.9 L191.0,542.8 L192.0,542.7 L193.0,542.8 L194.0,543.1 L195.0,543.4 L196.0,543.8 L197.0,544.2 L198.0,544.6 L199.0,545.0 L200.0,545.2 L201.0,545.3 L202.0,545.2 L203.0,545.1 L204.0,544.8 L205.0,544.5 L206.0,544.2 L207.0,543.9 L208.0,543.7 L209.0,543.5 L210.0,543.4 L211.0,543.4 L212.0,543.4 L213.0,543.4 L214.0,543.4 L215.0,543.4 L216.0,543.4 L217.0,543.4 L218.0,543.4 L219.0,543.4 L220.0,543.5 L221.0,543.8 L222.0,544.2 L223.0,544.6 L224.0,545.2 L225.0,545.6 L226.0,546.0 L227.0,546.3 L228.0,546.4 L229.0,546.3 L230.0,546.1 L231.0,545.7 L232.0,545.2 L233.0,544.8 L234.0,544.3 L235.0,544.0 L236.0,543.7 L237.0,543.6 L238.0,543.7 L239.0,544.0 L240.0,544.3 L241.0,544.8 L242.0,545.2 L243.0,545.7 L244.0,546.1 L245.0,546.3 L246.0,546.4 L247.0,546.4 L248.0,546.2 L249.0,546.0 L250.0,545.7 L251.0,545.5 L252.0,545.2 L253.0,545.0 L254.0,544.9 L255.0,544.8 L256.0,544.8 L257.0,544.9 L258.0,545.0 L259.0,545.1 L260.0,545.2 L261.0,545.3 L262.0,545.4 L263.0,545.4 L264.0,545.4 L265.0,545.4 L266.0,545.4 L267.0,545.4 L268.0,545.3 L269.0,545.3 L270.0,545.2 L271.0,545.1 L272.0,545.0 L273.0,544.9 L274.0,544.7 L275.0,544.4 L276.0,544.2 L277.0,543.9 L278.0,543.6 L279.0,543.3 L280.0,543.1 L281.0,542.9 L282.0,542.9 L283.0,543.0 L284.0,543.2 L285.0,543.5 L286.0,543.9 L287.0,544.3 L288.0,544.6 L289.0,544.9 L290.0,545.2 L291.0,545.2 L292.0,545.2 L293.0,545.0 L294.0,544.7 L295.0,544.4 L296.0,544.1 L297.0,543.8 L298.0,543.5 L299.0,543.3 L300.0,543.2 L301.0,543.3 L302.0,543.3 L303.0,543.4 L304.0,543.5 L305.0,543.6 L306.0,543.7 L307.0,543.8 L308.0,543.9 L309.0,543.9 L310.0,543.9 L311.0,543.8 L312.0,543.6 L313.0,543.5 L314.0,543.3 L315.0,543.1 L316.0,542.9 L317.0,542.8 L318.0,542.7 L319.0,542.6 L320.0,542.5 L321.0,542.5 L322.0,542.4 L323.0,542.4 L324.0,542.4 L325.0,542.4 L326.0,542.4 L327.0,542.4 L328.0,542.4 L329.0,542.5 L330.0,542.7 L331.0,542.9 L332.0,543.2 L333.0,543.4 L334.0,543.5 L335.0,543.7 L336.0,543.7 L337.0,543.7 L338.0,543.5 L339.0,543.3 L340.0,543.1 L341.0,542.8 L342.0,542.6 L343.0,542.4 L344.0,542.2 L345.0,542.2 L346.0,542.2 L347.0,542.3 L348.0,542.4 L349.0,542.6 L350.0,542.9 L351.0,543.1 L352.0,543.3 L353.0,543.6 L354.0,543.8 L355.0,544.0 L356.0,544.2 L357.0,544.5 L358.0,544.8 L359.0,545.0 L360.0,545.2 L361.0,545.5 L362.0,545.7 L363.0,545.8 L364.0,546.0 L365.0,546.1 L366.0,546.2 L367.0,546.3 L368.0,546.4 L369.0,546.4 L370.0,546.5 L371.0,546.5 L372.0,546.5 L373.0,546.4 L374.0,546.2 L375.0,546.0 L376.0,545.7 L377.0,545.3 L378.0,544.9 L379.0,544.5 L380.0,544.2 L381.0,544.0 L382.0,543.7 L383.0,543.5 L384.0,543.3 L385.0,543.1 L386.0,542.9 L387.0,542.8 L388.0,542.7 L389.0,542.6 L390.0,542.6 L391.0,542.6 L392.0,542.7 L393.0,542.8 L394.0,543.0 L395.0,543.2 L396.0,543.4 L397.0,543.5 L398.0,543.6 L399.0,543.6 L400.0,543.6 L401.0,543.5 L402.0,543.3 L403.0,543.1 L404.0,542.9 L405.0,542.7 L406.0,542.5 L407.0,542.4 L408.0,542.4 L409.0,542.4 L410.0,542.4 L411.0,542.5 L412.0,542.5 L413.0,542.6 L414.0,542.7 L415.0,542.8 L416.0,542.9 L417.0,543.1 L418.0,543.2 L419.0,543.4 L420.0,543.7 L421.0,544.0 L422.0,544.2 L423.0,544.5 L424.0,544.7 L425.0,544.8 L426.0,544.8 L427.0,544.8 L428.0,544.8 L429.0,544.8 L430.0,544.8 L431.0,544.8 L432.0,544.8 L433.0,544.8 L434.0,544.8 L435.0,544.8 L436.0,544.7 L437.0,544.5 L438.0,544.1 L439.0,543.7 L440.0,543.3 L441.0,542.9 L442.0,542.6 L443.0,542.3 L444.0,542.2 L445.0,542.3 L446.0,542.5 L447.0,542.8 L448.0,543.1 L449.0,543.4 L450.0,543.7 L451.0,544.0 L452.0,544.2 L453.0,544.2 L454.0,544.2 L455.0,544.2 L456.0,544.2 L457.0,544.1 L458.0,544.1 L459.0,544.0 L460.0,544.0 L461.0,544.0 L462.0,544.0 L463.0,544.0 L464.0,543.9 L465.0,543.9 L466.0,543.9 L467.0,543.9 L468.0,543.9 L469.0,543.9 L470.0,543.9 L471.0,543.9 L472.0,543.8 L473.0,543.7 L474.0,543.5 L475.0,543.3 L476.0,543.1 L477.0,543.0 L478.0,542.8 L479.0,542.7 L480.0,542.7 L481.0,542.7 L482.0,542.8 L483.0,543.0 L484.0,543.2 L485.0,543.4 L486.0,543.5 L487.0,543.7 L488.0,543.8 L489.0,543.8 L490.0,543.8 L491.0,543.7 L492.0,543.5 L493.0,543.3 L494.0,543.1 L495.0,542.9 L496.0,542.7 L497.0,542.6 L498.0,542.5 L499.0,542.6 L500.0,542.9 L501.0,543.2 L502.0,543.6 L503.0,544.0 L504.0,544.5 L505.0,544.8 L506.0,545.0 L507.0,545.1 L508.0,545.1 L509.0,545.1 L510.0,545.1 L511.0,545.1 L512.0,545.0 L513.0,545.0 L514.0,545.0 L515.0,545.0 L516.0,545.0 L517.0,545.0 L518.0,544.9 L519.0,544.9 L520.0,544.9 L521.0,544.9 L522.0,544.9 L523.0,544.9 L524.0,544.9 L525.0,544.9 L526.0,544.8 L527.0,544.7 L528.0,544.6 L529.0,544.4 L530.0,544.3 L531.0,544.1 L532.0,544.0 L533.0,543.9 L534.0,543.9 L535.0,544.0 L536.0,544.2 L537.0,544.5 L538.0,544.9 L539.0,545.3 L540.0,545.7 L541.0,546.0 L542.0,546.2 L543.0,546.3 L544.0,546.2 L545.0,546.0 L546.0,545.8 L547.0,545.4 L548.0,545.0 L549.0,544.6 L550.0,544.3 L551.0,544.0 L552.0,543.7 L553.0,543.6 L554.0,543.4 L555.0,543.3 L556.0,543.2 L557.0,543.1 L558.0,543.1 L559.0,543.0 L560.0,543.0 L561.0,543.0 L562.0,543.0 L563.0,543.0 L564.0,543.1 L565.0,543.1 L566.0,543.2 L567.0,543.3 L568.0,543.4 L569.0,543.6 L570.0,543.7 L571.0,544.0 L572.0,544.3 L573.0,544.6 L574.0,544.9 L575.0,545.3 L576.0,545.6 L577.0,545.9 L578.0,546.1 L579.0,546.1 L580.0,546.0 L581.0,545.7 L582.0,545.3 L583.0,544.7 L584.0,544.2 L585.0,543.7 L586.0,543.2 L587.0,542.9 L588.0,542.8 L589.0,542.9 L590.0,543.1 L591.0,543.4 L592.0,543.7 L593.0,544.1 L594.0,544.5 L595.0,544.9 L596.0,545.2 L597.0,545.5 L598.0,545.6 L599.0,545.8 L600.0,545.9 L601.0,546.0 L602.0,546.1 L603.0,546.2 L604.0,546.2 L605.0,546.2 L606.0,546.2 L607.0,546.2 L608.0,546.2 L609.0,546.2 L610.0,546.2 L611.0,546.1 L612.0,546.1 L613.0,546.0 L614.0,546.0 L615.0,545.8 L616.0,545.7 L617.0,545.5 L618.0,545.3 L619.0,545.0 L620.0,544.8 L621.0,544.5 L622.0,544.4 L623.0,544.2 L624.0,544.1 L625.0,544.1 L626.0,544.1 L627.0,544.1 L628.0,544.1 L629.0,544.1 L630.0,544.1 L631.0,544.1 L632.0,544.1 L633.0,544.1 L634.0,544.1 L635.0,544.3 L636.0,544.6 L637.0,544.9 L638.0,545.2 L639.0,545.5 L640.0,545.7 L641.0,545.9 L642.0,545.9 L643.0,545.9 L644.0,545.8 L645.0,545.8 L646.0,545.6 L647.0,545.5 L648.0,545.4 L649.0,545.3 L650.0,545.2 L651.0,545.2 L652.0,545.2 L653.0,545.3 L654.0,545.3 L655.0,545.4 L656.0,545.5 L657.0,545.5 L658.0,545.6 L659.0,545.6 L660.0,545.6 L661.0,545.6 L662.0,545.4 L663.0,545.1 L664.0,544.8 L665.0,544.4 L666.0,544.0 L667.0,543.6 L668.0,543.2 L669.0,542.9" fill="none" stroke="#82a9d6" stroke-width="0.9"/></svg>
<div class="t" style="left:45.0px;top:543.74px;font-size:5.5px;font-weight:normal;color:#9aa3aa;">9. Jan</div>
<div class="t" style="left:171.0px;top:543.74px;font-size:5.5px;font-weight:normal;color:#9aa3aa;">02:00</div>
<div class="t" style="left:306.0px;top:543.74px;font-size:5.5px;font-weight:normal;color:#9aa3aa;">04:00</div>
<div class="t" style="left:441.0px;top:543.74px;font-size:5.5px;font-weight:normal;color:#9aa3aa;">06:00</div>
<div class="t" style="left:576.0px;top:543.74px;font-size:5.5px;font-weight:normal;color:#9aa3aa;">08:00</div>
<div style="position:absolute;left:39px;top:540.3px;width:3.5px;height:9px;border:0.5px solid #b8bcc0;background:#f2f2f2;border-radius:1px"></div>
<div style="position:absolute;left:667.6px;top:540.3px;width:3.5px;height:9px;border:0.5px solid #b8bcc0;background:#f2f2f2;border-radius:1px"></div>
<div style="position:absolute;left:34px;top:550.1999999999999px;width:642.6px;height:7.8px;background:#c3cbd3"></div>
<div style="position:absolute;left:33.5px;top:550.1999999999999px;width:7px;height:7.3px;background:#f1f1f1;border:0.5px solid #ccc"></div>
<div style="position:absolute;left:669.1px;top:550.1999999999999px;width:7px;height:7.3px;background:#f1f1f1;border:0.5px solid #ccc"></div>
<svg style="position:absolute;left:35px;top:551.5999999999999px" width="5" height="5"><path d="M3.2,1 L1.2,2.5 L3.2,4 Z" fill="#333"/></svg>
<svg style="position:absolute;left:670.6px;top:551.5999999999999px" width="5" height="5"><path d="M1.8,1 L3.8,2.5 L1.8,4 Z" fill="#333"/></svg>
<svg style="position:absolute;left:352.8px;top:552.3px" width="6" height="4"><rect x="0" y="0" width="0.7" height="3" fill="#888"/><rect x="2" y="0" width="0.7" height="3" fill="#888"/><rect x="4" y="0" width="0.7" height="3" fill="#888"/></svg>
<div style="position:absolute;left:102px;top:563.6px;width:487.5px;height:22.8px;border:1px solid #cfd4d8;border-radius:3px;background:#fff"></div>
<svg style="position:absolute;left:106.1px;top:567.5px" width="7" height="7"><circle cx="3.2" cy="3.2" r="3.1" fill="#0e7f86"/></svg>
<div class="t" style="left:115.1px;top:567.48px;font-size:6.52px;font-weight:normal;color:#333;">10.40.64.3 (QA-Cat9300)</div>
<svg style="position:absolute;left:194.31310546875px;top:567.5px" width="7" height="7"><circle cx="3.2" cy="3.2" r="3.1" fill="#b9c2c8"/></svg>
<div class="t" style="left:203.3px;top:567.48px;font-size:6.52px;font-weight:normal;color:#333;">10.40.70.10 (SQE3650POE.ipswitch.com)</div>
<svg style="position:absolute;left:331.0823828125px;top:567.5px" width="7" height="7"><circle cx="3.2" cy="3.2" r="3.1" fill="#1aa9c4"/></svg>
<div class="t" style="left:340.1px;top:567.48px;font-size:6.52px;font-weight:normal;color:#333;">10.40.71.162 (lb100)</div>
<svg style="position:absolute;left:406.258671875px;top:567.5px" width="7" height="7"><circle cx="3.2" cy="3.2" r="3.1" fill="#7f8385"/></svg>
<div class="t" style="left:415.3px;top:567.48px;font-size:6.52px;font-weight:normal;color:#333;">172.16.58.4 (2901CME.nmdevsqa.com)</div>
<svg style="position:absolute;left:536.8708789062499px;top:567.5px" width="7" height="7"><circle cx="3.2" cy="3.2" r="3.1" fill="#5b46ad"/></svg>
<div class="t" style="left:545.9px;top:567.48px;font-size:6.52px;font-weight:normal;color:#333;">192.168.199.1</div>
<svg style="position:absolute;left:106.1px;top:576.5999999999999px" width="7" height="7"><circle cx="3.2" cy="3.2" r="3.1" fill="#7ea22a"/></svg>
<div class="t" style="left:115.1px;top:576.58px;font-size:6.52px;font-weight:normal;color:#333;letter-spacing:0.084px">192.168.199.18 (atl-rd-a-s-sw-3021.mgmt.net.progress.com)</div>
<svg style="position:absolute;left:300.55587109375px;top:576.5999999999999px" width="7" height="7"><circle cx="3.2" cy="3.2" r="3.1" fill="#0e7f86"/></svg>
<div class="t" style="left:309.6px;top:576.58px;font-size:6.52px;font-weight:normal;color:#333;">192.168.199.19</div>
<svg style="position:absolute;left:360.87751171875px;top:576.5999999999999px" width="7" height="7"><circle cx="3.2" cy="3.2" r="3.1" fill="#0e7f86"/></svg>
<div class="t" style="left:369.9px;top:576.58px;font-size:6.52px;font-weight:normal;color:#333;">192.168.199.22 (QA-C9200)</div>
<div style="position:absolute;left:10px;top:596.5px;width:672.7px;height:1px;background:#e9eef0"></div>
<svg style="position:absolute;left:12.4px;top:607.8px" width="7.2" height="5.4"><path d="M1,1 L3.6,4.4 L6.2,1" fill="none" stroke="#555" stroke-width="1.2"/></svg>
<div class="t" style="left:22.8px;top:607.79px;font-size:6.75px;font-weight:bold;color:#404040;">8 of 10 Channel(s) selected</div>
<div style="position:absolute;left:10px;top:620.9px;width:672.7px;height:1px;background:#e6ecee"></div>
<div class="t" style="left:27.6px;top:624.96px;font-size:6.9px;font-weight:normal;color:#444;">Channel</div>
<div class="t" style="left:420.7px;top:625.21px;font-size:6.6px;font-weight:normal;color:#444;">Avg</div>
<svg style="position:absolute;left:437.7px;top:624px" width="5" height="8"><path d="M2.2,0.3 L2.2,6" stroke="#333" stroke-width="1.1"/><path d="M0.2,4.3 L2.2,7 L4.2,4.3 Z" fill="#333"/></svg>
<div style="position:absolute;left:10px;top:633.2px;width:672.7px;height:17.33px;background:#b1e2ea"></div>
<svg style="position:absolute;left:13.6px;top:637.065px" width="7" height="7" viewBox="0 0 7 7"><rect x="0" y="0" width="7" height="7" rx="0.8" fill="#1f8f9c"/><path d="M1.5,3.6 L2.9,5 L5.6,2" fill="none" stroke="#fff" stroke-width="1.1"/></svg>
<div class="t" style="left:27.3px;top:637.65px;font-size:6.75px;font-weight:normal;color:#3d4a4d;">10.40.64.3 (QA-Cat9300)</div>
<div class="t" style="left:420.7px;top:637.78px;font-size:6.6px;font-weight:normal;color:#3d4a4d;">279.54 fps</div>
<svg style="position:absolute;left:0;top:0" width="1381" height="650"><rect x="730.3" y="408.5" width="635.7" height="1" fill="#e6e6e6"/><rect x="730.3" y="444.5" width="635.7" height="1" fill="#e6e6e6"/><rect x="730.3" y="480.5" width="635.7" height="1" fill="#e6e6e6"/><rect x="730.3" y="516.0" width="635.7" height="1" fill="#d8e6e8"/><path d="M731.3,516.2 L731.3,500.0 732.3,502.6 733.3,505.6 734.3,508.2 735.3,510.1 736.3,510.5 737.3,510.5 738.3,510.4 739.3,510.3 740.3,510.2 741.3,510.2 742.3,510.1 743.3,510.1 744.3,510.1 745.3,510.2 746.3,510.2 747.3,510.2 748.3,510.2 749.3,510.2 750.3,510.0 751.3,509.9 752.3,509.7 753.3,509.6 754.3,509.6 755.3,509.7 756.3,509.8 757.3,509.9 758.3,510.0 759.3,510.1 760.3,510.0 761.3,508.9 762.3,506.6 763.3,504.0 764.3,501.7 765.3,500.4 766.3,500.8 767.3,502.6 768.3,505.3 769.3,508.0 770.3,510.0 771.3,510.6 772.3,510.6 773.3,510.5 774.3,510.4 775.3,510.2 776.3,509.7 777.3,508.7 778.3,505.6 779.3,501.5 780.3,497.2 781.3,494.0 782.3,492.9 783.3,494.8 784.3,498.9 785.3,503.8 786.3,508.3 787.3,511.0 788.3,511.3 789.3,511.3 790.3,511.2 791.3,511.2 792.3,511.2 793.3,511.1 794.3,510.9 795.3,509.6 796.3,507.6 797.3,505.2 798.3,503.2 799.3,502.2 800.3,502.7 801.3,504.5 802.3,506.9 803.3,509.2 804.3,510.9 805.3,511.3 806.3,511.1 807.3,510.8 808.3,510.5 809.3,510.1 810.3,510.0 811.3,510.0 812.3,510.0 813.3,510.0 814.3,510.0 815.3,510.0 816.3,510.0 817.3,510.1 818.3,510.1 819.3,510.2 820.3,510.2 821.3,510.2 822.3,510.2 823.3,510.2 824.3,510.2 825.3,510.2 826.3,510.1 827.3,510.0 828.3,509.7 829.3,508.3 830.3,506.2 831.3,504.0 832.3,502.2 833.3,501.5 834.3,502.2 835.3,503.9 836.3,506.0 837.3,508.1 838.3,509.6 839.3,510.0 840.3,510.2 841.3,510.3 842.3,510.3 843.3,510.4 844.3,510.4 845.3,510.4 846.3,510.4 847.3,510.4 848.3,510.4 849.3,510.5 850.3,510.5 851.3,510.6 852.3,510.7 853.3,510.8 854.3,510.9 855.3,511.0 856.3,511.0 857.3,510.9 858.3,510.7 859.3,510.4 860.3,510.2 861.3,510.1 862.3,510.0 863.3,510.0 864.3,510.0 865.3,509.9 866.3,509.8 867.3,509.7 868.3,509.2 869.3,507.4 870.3,504.8 871.3,502.2 872.3,500.2 873.3,499.5 874.3,500.6 875.3,502.9 876.3,505.7 877.3,508.2 878.3,509.7 879.3,509.8 880.3,509.8 881.3,509.8 882.3,509.7 883.3,509.7 884.3,509.7 885.3,509.7 886.3,509.8 887.3,509.9 888.3,510.0 889.3,510.0 890.3,510.0 891.3,510.0 892.3,510.0 893.3,510.0 894.3,509.9 895.3,509.9 896.3,509.9 897.3,510.0 898.3,510.2 899.3,510.3 900.3,510.5 901.3,510.5 902.3,510.5 903.3,510.5 904.3,510.5 905.3,510.4 906.3,510.4 907.3,510.3 908.3,510.3 909.3,510.3 910.3,510.2 911.3,510.2 912.3,510.1 913.3,510.0 914.3,510.0 915.3,509.9 916.3,509.8 917.3,509.7 918.3,509.7 919.3,509.7 920.3,510.0 921.3,510.3 922.3,510.6 923.3,510.8 924.3,510.9 925.3,510.8 926.3,510.8 927.3,510.7 928.3,510.7 929.3,510.6 930.3,510.6 931.3,510.6 932.3,510.6 933.3,510.6 934.3,510.6 935.3,510.6 936.3,509.2 937.3,507.0 938.3,504.4 939.3,502.0 940.3,500.1 941.3,499.1 942.3,499.5 943.3,501.7 944.3,504.7 945.3,507.8 946.3,510.1 947.3,510.7 948.3,510.8 949.3,510.8 950.3,510.8 951.3,510.8 952.3,510.8 953.3,510.8 954.3,510.8 955.3,510.9 956.3,511.0 957.3,511.0 958.3,511.0 959.3,510.9 960.3,510.5 961.3,510.2 962.3,509.8 963.3,509.6 964.3,509.6 965.3,509.6 966.3,509.6 967.3,509.6 968.3,509.7 969.3,509.8 970.3,510.1 971.3,508.5 972.3,505.3 973.3,501.6 974.3,498.3 975.3,496.5 976.3,497.0 977.3,499.7 978.3,503.5 979.3,507.3 980.3,510.1 981.3,510.9 982.3,508.6 983.3,504.1 984.3,498.8 985.3,494.3 986.3,492.0 987.3,492.9 988.3,496.4 989.3,501.2 990.3,505.9 991.3,509.3 992.3,510.2 993.3,510.2 994.3,510.3 995.3,510.3 996.3,510.3 997.3,510.3 998.3,510.4 999.3,510.4 1000.3,510.5 1001.3,510.6 1002.3,510.7 1003.3,510.8 1004.3,510.7 1005.3,510.7 1006.3,510.6 1007.3,510.5 1008.3,510.4 1009.3,510.4 1010.3,510.4 1011.3,510.4 1012.3,510.4 1013.3,510.4 1014.3,510.4 1015.3,510.4 1016.3,510.4 1017.3,510.3 1018.3,510.2 1019.3,510.1 1020.3,510.1 1021.3,510.0 1022.3,510.0 1023.3,510.0 1024.3,510.0 1025.3,509.9 1026.3,509.9 1027.3,510.0 1028.3,510.3 1029.3,510.5 1030.3,510.8 1031.3,511.0 1032.3,511.1 1033.3,511.2 1034.3,511.2 1035.3,511.3 1036.3,511.3 1037.3,511.3 1038.3,511.3 1039.3,511.2 1040.3,511.1 1041.3,511.0 1042.3,510.7 1043.3,510.3 1044.3,509.6 1045.3,508.9 1046.3,508.1 1047.3,507.5 1048.3,507.1 1049.3,507.0 1050.3,507.5 1051.3,508.3 1052.3,509.2 1053.3,509.9 1054.3,510.2 1055.3,510.2 1056.3,510.3 1057.3,510.3 1058.3,510.3 1059.3,510.3 1060.3,510.3 1061.3,510.3 1062.3,510.2 1063.3,510.0 1064.3,509.9 1065.3,509.8 1066.3,509.7 1067.3,509.4 1068.3,508.1 1069.3,506.4 1070.3,504.6 1071.3,503.3 1072.3,503.1 1073.3,504.3 1074.3,506.4 1075.3,508.6 1076.3,510.3 1077.3,510.7 1078.3,510.7 1079.3,510.7 1080.3,510.7 1081.3,510.6 1082.3,510.6 1083.3,510.6 1084.3,510.4 1085.3,510.3 1086.3,510.1 1087.3,510.0 1088.3,509.9 1089.3,509.9 1090.3,510.1 1091.3,510.2 1092.3,510.4 1093.3,510.6 1094.3,510.6 1095.3,510.6 1096.3,510.4 1097.3,510.3 1098.3,510.1 1099.3,510.0 1100.3,510.0 1101.3,510.0 1102.3,510.1 1103.3,510.1 1104.3,510.2 1105.3,510.3 1106.3,510.4 1107.3,510.6 1108.3,510.8 1109.3,510.9 1110.3,511.0 1111.3,511.1 1112.3,511.0 1113.3,510.7 1114.3,510.5 1115.3,510.2 1116.3,510.1 1117.3,510.1 1118.3,510.1 1119.3,510.2 1120.3,510.3 1121.3,510.4 1122.3,510.5 1123.3,510.4 1124.3,510.4 1125.3,510.3 1126.3,510.2 1127.3,510.1 1128.3,510.1 1129.3,510.1 1130.3,510.1 1131.3,510.2 1132.3,510.2 1133.3,510.3 1134.3,510.4 1135.3,510.6 1136.3,510.7 1137.3,510.9 1138.3,511.0 1139.3,511.1 1140.3,509.7 1141.3,507.6 1142.3,505.4 1143.3,503.3 1144.3,501.6 1145.3,500.7 1146.3,500.9 1147.3,502.4 1148.3,504.6 1149.3,507.0 1150.3,508.9 1151.3,509.8 1152.3,510.1 1153.3,510.2 1154.3,510.3 1155.3,510.3 1156.3,510.4 1157.3,510.4 1158.3,510.6 1159.3,510.8 1160.3,510.9 1161.3,511.0 1162.3,511.1 1163.3,510.2 1164.3,508.1 1165.3,505.4 1166.3,502.8 1167.3,501.2 1168.3,501.2 1169.3,502.6 1170.3,504.7 1171.3,507.1 1172.3,509.2 1173.3,510.3 1174.3,510.7 1175.3,511.0 1176.3,511.1 1177.3,511.2 1178.3,511.2 1179.3,511.2 1180.3,511.2 1181.3,511.1 1182.3,510.9 1183.3,510.5 1184.3,509.6 1185.3,506.8 1186.3,502.1 1187.3,496.6 1188.3,491.2 1189.3,486.8 1190.3,484.2 1191.3,484.7 1192.3,488.3 1193.3,493.8 1194.3,500.1 1195.3,505.8 1196.3,509.6 1197.3,510.5 1198.3,510.5 1199.3,510.5 1200.3,510.4 1201.3,510.3 1202.3,510.2 1203.3,509.9 1204.3,509.4 1205.3,508.7 1206.3,508.0 1207.3,507.5 1208.3,507.4 1209.3,507.4 1210.3,507.4 1211.3,507.4 1212.3,507.4 1213.3,507.4 1214.3,507.4 1215.3,507.4 1216.3,507.4 1217.3,507.4 1218.3,507.4 1219.3,507.4 1220.3,507.8 1221.3,508.5 1222.3,509.3 1223.3,509.8 1224.3,510.0 1225.3,510.0 1226.3,510.1 1227.3,510.1 1228.3,510.1 1229.3,510.2 1230.3,510.2 1231.3,511.1 1232.3,510.2 1233.3,508.5 1234.3,506.7 1235.3,505.3 1236.3,505.1 1237.3,506.1 1238.3,507.8 1239.3,509.6 1240.3,510.9 1241.3,510.8 1242.3,510.7 1243.3,510.4 1244.3,509.6 1245.3,508.8 1246.3,508.0 1247.3,507.7 1248.3,507.8 1249.3,508.1 1250.3,508.6 1251.3,509.2 1252.3,509.9 1253.3,510.4 1254.3,509.4 1255.3,508.6 1256.3,507.9 1257.3,507.3 1258.3,507.0 1259.3,507.1 1260.3,507.6 1261.3,508.3 1262.3,509.1 1263.3,509.8 1264.3,510.0 1265.3,510.2 1266.3,510.3 1267.3,510.3 1268.3,510.4 1269.3,510.4 1270.3,510.4 1271.3,510.5 1272.3,510.6 1273.3,510.6 1274.3,510.7 1275.3,510.7 1276.3,510.7 1277.3,510.6 1278.3,510.5 1279.3,510.3 1280.3,510.1 1281.3,510.0 1282.3,509.9 1283.3,509.8 1284.3,509.7 1285.3,509.6 1286.3,509.5 1287.3,509.8 1288.3,510.8 1289.3,509.4 1290.3,506.8 1291.3,503.7 1292.3,500.9 1293.3,499.4 1294.3,499.8 1295.3,501.8 1296.3,504.7 1297.3,507.6 1298.3,509.8 1299.3,510.4 1300.3,510.4 1301.3,510.4 1302.3,510.4 1303.3,510.3 1304.3,510.2 1305.3,510.1 1306.3,510.0 1307.3,509.8 1308.3,509.7 1309.3,509.6 1310.3,509.6 1311.3,509.7 1312.3,509.7 1313.3,509.8 1314.3,509.9 1315.3,509.9 1316.3,510.1 1317.3,510.2 1318.3,510.3 1319.3,510.5 1320.3,510.6 1321.3,510.6 1322.3,510.6 1323.3,510.5 1324.3,510.5 1325.3,510.4 1326.3,510.2 1327.3,509.9 1328.3,508.4 1329.3,506.0 1330.3,503.3 1331.3,501.0 1332.3,499.8 1333.3,500.3 1334.3,502.1 1335.3,504.6 1336.3,507.1 1337.3,508.9 1338.3,509.6 1339.3,509.8 1340.3,509.9 1341.3,510.0 1342.3,510.0 1343.3,510.0 1344.3,509.3 1345.3,508.0 1346.3,506.6 1347.3,505.2 1348.3,504.2 1349.3,504.0 1350.3,504.0 1351.3,504.0 1352.3,504.0 1353.3,504.0 1354.3,504.0 1355.3,504.0 1356.3,504.0 1357.3,504.0 1358.3,504.0 1359.3,504.0 1360.3,504.0 1361.3,504.0 1361.7,504.0 L1361.7,516.2 Z" fill="rgba(14,132,139,0.75)"/><path d="M731.3,500.0 L732.3,502.6 L733.3,505.6 L734.3,508.2 L735.3,510.1 L736.3,510.5 L737.3,510.5 L738.3,510.4 L739.3,510.3 L740.3,510.2 L741.3,510.2 L742.3,510.1 L743.3,510.1 L744.3,510.1 L745.3,510.2 L746.3,510.2 L747.3,510.2 L748.3,510.2 L749.3,510.2 L750.3,510.0 L751.3,509.9 L752.3,509.7 L753.3,509.6 L754.3,509.6 L755.3,509.7 L756.3,509.8 L757.3,509.9 L758.3,510.0 L759.3,510.1 L760.3,510.0 L761.3,508.9 L762.3,506.6 L763.3,504.0 L764.3,501.7 L765.3,500.4 L766.3,500.8 L767.3,502.6 L768.3,505.3 L769.3,508.0 L770.3,510.0 L771.3,510.6 L772.3,510.6 L773.3,510.5 L774.3,510.4 L775.3,510.2 L776.3,509.7 L777.3,508.7 L778.3,505.6 L779.3,501.5 L780.3,497.2 L781.3,494.0 L782.3,492.9 L783.3,494.8 L784.3,498.9 L785.3,503.8 L786.3,508.3 L787.3,511.0 L788.3,511.3 L789.3,511.3 L790.3,511.2 L791.3,511.2 L792.3,511.2 L793.3,511.1 L794.3,510.9 L795.3,509.6 L796.3,507.6 L797.3,505.2 L798.3,503.2 L799.3,502.2 L800.3,502.7 L801.3,504.5 L802.3,506.9 L803.3,509.2 L804.3,510.9 L805.3,511.3 L806.3,511.1 L807.3,510.8 L808.3,510.5 L809.3,510.1 L810.3,510.0 L811.3,510.0 L812.3,510.0 L813.3,510.0 L814.3,510.0 L815.3,510.0 L816.3,510.0 L817.3,510.1 L818.3,510.1 L819.3,510.2 L820.3,510.2 L821.3,510.2 L822.3,510.2 L823.3,510.2 L824.3,510.2 L825.3,510.2 L826.3,510.1 L827.3,510.0 L828.3,509.7 L829.3,508.3 L830.3,506.2 L831.3,504.0 L832.3,502.2 L833.3,501.5 L834.3,502.2 L835.3,503.9 L836.3,506.0 L837.3,508.1 L838.3,509.6 L839.3,510.0 L840.3,510.2 L841.3,510.3 L842.3,510.3 L843.3,510.4 L844.3,510.4 L845.3,510.4 L846.3,510.4 L847.3,510.4 L848.3,510.4 L849.3,510.5 L850.3,510.5 L851.3,510.6 L852.3,510.7 L853.3,510.8 L854.3,510.9 L855.3,511.0 L856.3,511.0 L857.3,510.9 L858.3,510.7 L859.3,510.4 L860.3,510.2 L861.3,510.1 L862.3,510.0 L863.3,510.0 L864.3,510.0 L865.3,509.9 L866.3,509.8 L867.3,509.7 L868.3,509.2 L869.3,507.4 L870.3,504.8 L871.3,502.2 L872.3,500.2 L873.3,499.5 L874.3,500.6 L875.3,502.9 L876.3,505.7 L877.3,508.2 L878.3,509.7 L879.3,509.8 L880.3,509.8 L881.3,509.8 L882.3,509.7 L883.3,509.7 L884.3,509.7 L885.3,509.7 L886.3,509.8 L887.3,509.9 L888.3,510.0 L889.3,510.0 L890.3,510.0 L891.3,510.0 L892.3,510.0 L893.3,510.0 L894.3,509.9 L895.3,509.9 L896.3,509.9 L897.3,510.0 L898.3,510.2 L899.3,510.3 L900.3,510.5 L901.3,510.5 L902.3,510.5 L903.3,510.5 L904.3,510.5 L905.3,510.4 L906.3,510.4 L907.3,510.3 L908.3,510.3 L909.3,510.3 L910.3,510.2 L911.3,510.2 L912.3,510.1 L913.3,510.0 L914.3,510.0 L915.3,509.9 L916.3,509.8 L917.3,509.7 L918.3,509.7 L919.3,509.7 L920.3,510.0 L921.3,510.3 L922.3,510.6 L923.3,510.8 L924.3,510.9 L925.3,510.8 L926.3,510.8 L927.3,510.7 L928.3,510.7 L929.3,510.6 L930.3,510.6 L931.3,510.6 L932.3,510.6 L933.3,510.6 L934.3,510.6 L935.3,510.6 L936.3,509.2 L937.3,507.0 L938.3,504.4 L939.3,502.0 L940.3,500.1 L941.3,499.1 L942.3,499.5 L943.3,501.7 L944.3,504.7 L945.3,507.8 L946.3,510.1 L947.3,510.7 L948.3,510.8 L949.3,510.8 L950.3,510.8 L951.3,510.8 L952.3,510.8 L953.3,510.8 L954.3,510.8 L955.3,510.9 L956.3,511.0 L957.3,511.0 L958.3,511.0 L959.3,510.9 L960.3,510.5 L961.3,510.2 L962.3,509.8 L963.3,509.6 L964.3,509.6 L965.3,509.6 L966.3,509.6 L967.3,509.6 L968.3,509.7 L969.3,509.8 L970.3,510.1 L971.3,508.5 L972.3,505.3 L973.3,501.6 L974.3,498.3 L975.3,496.5 L976.3,497.0 L977.3,499.7 L978.3,503.5 L979.3,507.3 L980.3,510.1 L981.3,510.9 L982.3,508.6 L983.3,504.1 L984.3,498.8 L985.3,494.3 L986.3,492.0 L987.3,492.9 L988.3,496.4 L989.3,501.2 L990.3,505.9 L991.3,509.3 L992.3,510.2 L993.3,510.2 L994.3,510.3 L995.3,510.3 L996.3,510.3 L997.3,510.3 L998.3,510.4 L999.3,510.4 L1000.3,510.5 L1001.3,510.6 L1002.3,510.7 L1003.3,510.8 L1004.3,510.7 L1005.3,510.7 L1006.3,510.6 L1007.3,510.5 L1008.3,510.4 L1009.3,510.4 L1010.3,510.4 L1011.3,510.4 L1012.3,510.4 L1013.3,510.4 L1014.3,510.4 L1015.3,510.4 L1016.3,510.4 L1017.3,510.3 L1018.3,510.2 L1019.3,510.1 L1020.3,510.1 L1021.3,510.0 L1022.3,510.0 L1023.3,510.0 L1024.3,510.0 L1025.3,509.9 L1026.3,509.9 L1027.3,510.0 L1028.3,510.3 L1029.3,510.5 L1030.3,510.8 L1031.3,511.0 L1032.3,511.1 L1033.3,511.2 L1034.3,511.2 L1035.3,511.3 L1036.3,511.3 L1037.3,511.3 L1038.3,511.3 L1039.3,511.2 L1040.3,511.1 L1041.3,511.0 L1042.3,510.7 L1043.3,510.3 L1044.3,509.6 L1045.3,508.9 L1046.3,508.1 L1047.3,507.5 L1048.3,507.1 L1049.3,507.0 L1050.3,507.5 L1051.3,508.3 L1052.3,509.2 L1053.3,509.9 L1054.3,510.2 L1055.3,510.2 L1056.3,510.3 L1057.3,510.3 L1058.3,510.3 L1059.3,510.3 L1060.3,510.3 L1061.3,510.3 L1062.3,510.2 L1063.3,510.0 L1064.3,509.9 L1065.3,509.8 L1066.3,509.7 L1067.3,509.4 L1068.3,508.1 L1069.3,506.4 L1070.3,504.6 L1071.3,503.3 L1072.3,503.1 L1073.3,504.3 L1074.3,506.4 L1075.3,508.6 L1076.3,510.3 L1077.3,510.7 L1078.3,510.7 L1079.3,510.7 L1080.3,510.7 L1081.3,510.6 L1082.3,510.6 L1083.3,510.6 L1084.3,510.4 L1085.3,510.3 L1086.3,510.1 L1087.3,510.0 L1088.3,509.9 L1089.3,509.9 L1090.3,510.1 L1091.3,510.2 L1092.3,510.4 L1093.3,510.6 L1094.3,510.6 L1095.3,510.6 L1096.3,510.4 L1097.3,510.3 L1098.3,510.1 L1099.3,510.0 L1100.3,510.0 L1101.3,510.0 L1102.3,510.1 L1103.3,510.1 L1104.3,510.2 L1105.3,510.3 L1106.3,510.4 L1107.3,510.6 L1108.3,510.8 L1109.3,510.9 L1110.3,511.0 L1111.3,511.1 L1112.3,511.0 L1113.3,510.7 L1114.3,510.5 L1115.3,510.2 L1116.3,510.1 L1117.3,510.1 L1118.3,510.1 L1119.3,510.2 L1120.3,510.3 L1121.3,510.4 L1122.3,510.5 L1123.3,510.4 L1124.3,510.4 L1125.3,510.3 L1126.3,510.2 L1127.3,510.1 L1128.3,510.1 L1129.3,510.1 L1130.3,510.1 L1131.3,510.2 L1132.3,510.2 L1133.3,510.3 L1134.3,510.4 L1135.3,510.6 L1136.3,510.7 L1137.3,510.9 L1138.3,511.0 L1139.3,511.1 L1140.3,509.7 L1141.3,507.6 L1142.3,505.4 L1143.3,503.3 L1144.3,501.6 L1145.3,500.7 L1146.3,500.9 L1147.3,502.4 L1148.3,504.6 L1149.3,507.0 L1150.3,508.9 L1151.3,509.8 L1152.3,510.1 L1153.3,510.2 L1154.3,510.3 L1155.3,510.3 L1156.3,510.4 L1157.3,510.4 L1158.3,510.6 L1159.3,510.8 L1160.3,510.9 L1161.3,511.0 L1162.3,511.1 L1163.3,510.2 L1164.3,508.1 L1165.3,505.4 L1166.3,502.8 L1167.3,501.2 L1168.3,501.2 L1169.3,502.6 L1170.3,504.7 L1171.3,507.1 L1172.3,509.2 L1173.3,510.3 L1174.3,510.7 L1175.3,511.0 L1176.3,511.1 L1177.3,511.2 L1178.3,511.2 L1179.3,511.2 L1180.3,511.2 L1181.3,511.1 L1182.3,510.9 L1183.3,510.5 L1184.3,509.6 L1185.3,506.8 L1186.3,502.1 L1187.3,496.6 L1188.3,491.2 L1189.3,486.8 L1190.3,484.2 L1191.3,484.7 L1192.3,488.3 L1193.3,493.8 L1194.3,500.1 L1195.3,505.8 L1196.3,509.6 L1197.3,510.5 L1198.3,510.5 L1199.3,510.5 L1200.3,510.4 L1201.3,510.3 L1202.3,510.2 L1203.3,509.9 L1204.3,509.4 L1205.3,508.7 L1206.3,508.0 L1207.3,507.5 L1208.3,507.4 L1209.3,507.4 L1210.3,507.4 L1211.3,507.4 L1212.3,507.4 L1213.3,507.4 L1214.3,507.4 L1215.3,507.4 L1216.3,507.4 L1217.3,507.4 L1218.3,507.4 L1219.3,507.4 L1220.3,507.8 L1221.3,508.5 L1222.3,509.3 L1223.3,509.8 L1224.3,510.0 L1225.3,510.0 L1226.3,510.1 L1227.3,510.1 L1228.3,510.1 L1229.3,510.2 L1230.3,510.2 L1231.3,511.1 L1232.3,510.2 L1233.3,508.5 L1234.3,506.7 L1235.3,505.3 L1236.3,505.1 L1237.3,506.1 L1238.3,507.8 L1239.3,509.6 L1240.3,510.9 L1241.3,510.8 L1242.3,510.7 L1243.3,510.4 L1244.3,509.6 L1245.3,508.8 L1246.3,508.0 L1247.3,507.7 L1248.3,507.8 L1249.3,508.1 L1250.3,508.6 L1251.3,509.2 L1252.3,509.9 L1253.3,510.4 L1254.3,509.4 L1255.3,508.6 L1256.3,507.9 L1257.3,507.3 L1258.3,507.0 L1259.3,507.1 L1260.3,507.6 L1261.3,508.3 L1262.3,509.1 L1263.3,509.8 L1264.3,510.0 L1265.3,510.2 L1266.3,510.3 L1267.3,510.3 L1268.3,510.4 L1269.3,510.4 L1270.3,510.4 L1271.3,510.5 L1272.3,510.6 L1273.3,510.6 L1274.3,510.7 L1275.3,510.7 L1276.3,510.7 L1277.3,510.6 L1278.3,510.5 L1279.3,510.3 L1280.3,510.1 L1281.3,510.0 L1282.3,509.9 L1283.3,509.8 L1284.3,509.7 L1285.3,509.6 L1286.3,509.5 L1287.3,509.8 L1288.3,510.8 L1289.3,509.4 L1290.3,506.8 L1291.3,503.7 L1292.3,500.9 L1293.3,499.4 L1294.3,499.8 L1295.3,501.8 L1296.3,504.7 L1297.3,507.6 L1298.3,509.8 L1299.3,510.4 L1300.3,510.4 L1301.3,510.4 L1302.3,510.4 L1303.3,510.3 L1304.3,510.2 L1305.3,510.1 L1306.3,510.0 L1307.3,509.8 L1308.3,509.7 L1309.3,509.6 L1310.3,509.6 L1311.3,509.7 L1312.3,509.7 L1313.3,509.8 L1314.3,509.9 L1315.3,509.9 L1316.3,510.1 L1317.3,510.2 L1318.3,510.3 L1319.3,510.5 L1320.3,510.6 L1321.3,510.6 L1322.3,510.6 L1323.3,510.5 L1324.3,510.5 L1325.3,510.4 L1326.3,510.2 L1327.3,509.9 L1328.3,508.4 L1329.3,506.0 L1330.3,503.3 L1331.3,501.0 L1332.3,499.8 L1333.3,500.3 L1334.3,502.1 L1335.3,504.6 L1336.3,507.1 L1337.3,508.9 L1338.3,509.6 L1339.3,509.8 L1340.3,509.9 L1341.3,510.0 L1342.3,510.0 L1343.3,510.0 L1344.3,509.3 L1345.3,508.0 L1346.3,506.6 L1347.3,505.2 L1348.3,504.2 L1349.3,504.0 L1350.3,504.0 L1351.3,504.0 L1352.3,504.0 L1353.3,504.0 L1354.3,504.0 L1355.3,504.0 L1356.3,504.0 L1357.3,504.0 L1358.3,504.0 L1359.3,504.0 L1360.3,504.0 L1361.3,504.0 L1361.7,504.0" fill="none" stroke="#157d84" stroke-width="1.35"/><path d="M731.3,516.2 L731.3,509.0 732.3,505.7 733.3,501.9 734.3,498.2 735.3,495.2 736.3,493.2 737.3,493.1 738.3,494.8 739.3,497.8 740.3,501.2 741.3,504.3 742.3,506.2 743.3,506.3 744.3,505.0 745.3,502.8 746.3,500.6 747.3,498.7 748.3,497.8 749.3,498.0 750.3,498.8 751.3,500.0 752.3,501.5 753.3,503.2 754.3,505.0 755.3,506.8 756.3,508.3 757.3,509.6 758.3,510.6 759.3,511.0 760.3,511.0 761.3,510.9 762.3,510.8 763.3,510.4 764.3,509.8 765.3,508.9 766.3,506.9 767.3,503.9 768.3,500.4 769.3,497.3 770.3,495.0 771.3,494.2 772.3,495.5 773.3,498.3 774.3,502.0 775.3,505.5 776.3,508.3 777.3,509.5 778.3,509.8 779.3,510.0 780.3,510.1 781.3,510.1 782.3,510.1 783.3,510.0 784.3,509.8 785.3,509.5 786.3,509.2 787.3,509.0 788.3,508.8 789.3,508.8 790.3,508.7 791.3,508.7 792.3,508.7 793.3,508.7 794.3,508.7 795.3,508.9 796.3,509.1 797.3,509.4 798.3,509.6 799.3,509.8 800.3,509.9 801.3,509.9 802.3,510.0 803.3,510.0 804.3,510.0 805.3,508.1 806.3,501.6 807.3,492.1 808.3,481.7 809.3,472.4 810.3,466.0 811.3,462.9 812.3,461.0 813.3,459.9 814.3,459.3 815.3,459.1 816.3,459.3 817.3,464.0 818.3,473.7 819.3,485.6 820.3,497.3 821.3,506.1 822.3,509.7 823.3,508.2 824.3,504.8 825.3,500.5 826.3,496.4 827.3,493.9 828.3,493.9 829.3,496.4 830.3,500.4 831.3,504.6 832.3,508.0 833.3,509.4 834.3,509.3 835.3,509.2 836.3,508.9 837.3,508.7 838.3,508.5 839.3,509.1 840.3,509.5 841.3,508.7 842.3,507.6 843.3,506.6 844.3,506.0 845.3,506.1 846.3,506.6 847.3,507.4 848.3,508.3 849.3,509.2 850.3,510.2 851.3,510.2 852.3,510.2 853.3,510.1 854.3,510.0 855.3,509.8 856.3,509.5 857.3,508.2 858.3,505.2 859.3,501.5 860.3,497.9 861.3,495.1 862.3,494.0 863.3,495.1 864.3,497.8 865.3,501.4 866.3,505.0 867.3,507.7 868.3,508.8 869.3,508.8 870.3,508.7 871.3,508.6 872.3,508.5 873.3,508.5 874.3,508.8 875.3,509.2 876.3,509.8 877.3,510.3 878.3,510.6 879.3,510.6 880.3,510.3 881.3,509.8 882.3,509.2 883.3,508.8 884.3,508.6 885.3,508.6 886.3,508.6 887.3,508.6 888.3,508.6 889.3,508.6 890.3,508.7 891.3,509.0 892.3,509.5 893.3,509.9 894.3,509.7 895.3,505.7 896.3,498.1 897.3,488.5 898.3,478.7 899.3,470.3 900.3,465.0 901.3,462.6 902.3,461.2 903.3,460.6 904.3,460.3 905.3,459.8 906.3,459.4 907.3,459.1 908.3,459.0 909.3,463.8 910.3,478.8 911.3,496.2 912.3,507.7 913.3,509.9 914.3,509.7 915.3,505.9 916.3,499.8 917.3,494.7 918.3,493.5 919.3,495.2 920.3,498.2 921.3,502.0 922.3,505.7 923.3,508.5 924.3,509.5 925.3,509.8 926.3,509.9 927.3,510.0 928.3,510.1 929.3,510.1 930.3,510.2 931.3,510.1 932.3,509.4 933.3,508.0 934.3,506.6 935.3,505.6 936.3,505.3 937.3,505.7 938.3,506.4 939.3,507.2 940.3,508.0 941.3,508.5 942.3,508.9 943.3,509.3 944.3,509.6 945.3,509.8 946.3,510.0 947.3,509.9 948.3,508.3 949.3,505.2 950.3,501.7 951.3,498.3 952.3,496.0 953.3,495.5 954.3,495.5 955.3,495.5 956.3,495.6 957.3,495.7 958.3,495.8 959.3,496.2 960.3,497.9 961.3,500.8 962.3,504.2 963.3,507.4 964.3,509.5 965.3,510.0 966.3,509.9 967.3,509.7 968.3,509.6 969.3,509.5 970.3,509.5 971.3,509.6 972.3,509.7 973.3,509.9 974.3,510.0 975.3,510.0 976.3,509.9 977.3,509.6 978.3,509.3 979.3,509.1 980.3,508.9 981.3,508.9 982.3,509.1 983.3,509.5 984.3,509.9 985.3,510.2 986.3,510.4 987.3,510.4 988.3,510.3 989.3,510.2 990.3,509.6 991.3,503.7 992.3,492.6 993.3,478.2 994.3,462.6 995.3,447.7 996.3,435.5 997.3,428.1 998.3,427.6 999.3,436.3 1000.3,451.6 1001.3,470.0 1002.3,488.0 1003.3,502.2 1004.3,509.1 1005.3,510.0 1006.3,508.0 1007.3,502.0 1008.3,495.6 1009.3,492.6 1010.3,494.3 1011.3,498.4 1012.3,503.3 1013.3,507.5 1014.3,509.3 1015.3,509.4 1016.3,509.5 1017.3,509.6 1018.3,509.6 1019.3,509.6 1020.3,509.6 1021.3,509.5 1022.3,508.7 1023.3,507.5 1024.3,506.2 1025.3,505.4 1026.3,505.4 1027.3,506.2 1028.3,507.3 1029.3,508.5 1030.3,509.2 1031.3,509.1 1032.3,508.8 1033.3,508.8 1034.3,508.8 1035.3,508.9 1036.3,509.0 1037.3,509.2 1038.3,510.2 1039.3,508.4 1040.3,505.1 1041.3,501.1 1042.3,497.4 1043.3,494.8 1044.3,494.3 1045.3,496.2 1046.3,499.6 1047.3,503.6 1048.3,507.4 1049.3,509.9 1050.3,510.5 1051.3,510.5 1052.3,510.4 1053.3,510.3 1054.3,510.2 1055.3,510.2 1056.3,510.2 1057.3,510.1 1058.3,510.0 1059.3,509.8 1060.3,509.0 1061.3,507.1 1062.3,504.4 1063.3,501.6 1064.3,499.3 1065.3,498.1 1066.3,498.4 1067.3,500.0 1068.3,502.4 1069.3,505.0 1070.3,507.3 1071.3,508.6 1072.3,508.9 1073.3,509.1 1074.3,509.2 1075.3,509.2 1076.3,509.2 1077.3,509.2 1078.3,509.4 1079.3,509.6 1080.3,509.9 1081.3,510.0 1082.3,507.3 1083.3,497.9 1084.3,483.7 1085.3,467.4 1086.3,451.1 1087.3,437.3 1088.3,428.4 1089.3,426.9 1090.3,435.4 1091.3,451.1 1092.3,470.4 1093.3,489.2 1094.3,503.8 1095.3,510.3 1096.3,509.3 1097.3,505.1 1098.3,499.9 1099.3,495.2 1100.3,493.0 1101.3,494.5 1102.3,498.6 1103.3,503.7 1104.3,508.2 1105.3,510.3 1106.3,510.2 1107.3,509.9 1108.3,509.4 1109.3,508.9 1110.3,508.6 1111.3,508.5 1112.3,509.2 1113.3,509.3 1114.3,508.7 1115.3,507.8 1116.3,507.0 1117.3,506.5 1118.3,506.5 1119.3,507.3 1120.3,508.3 1121.3,509.4 1122.3,510.1 1123.3,510.3 1124.3,510.4 1125.3,510.4 1126.3,510.4 1127.3,510.4 1128.3,510.0 1129.3,507.6 1130.3,503.9 1131.3,499.9 1132.3,496.4 1133.3,494.4 1134.3,494.7 1135.3,497.1 1136.3,500.8 1137.3,504.8 1138.3,508.3 1139.3,510.4 1140.3,510.6 1141.3,510.5 1142.3,510.4 1143.3,510.3 1144.3,510.1 1145.3,510.0 1146.3,509.9 1147.3,509.9 1148.3,509.7 1149.3,509.5 1150.3,509.0 1151.3,508.2 1152.3,506.5 1153.3,504.5 1154.3,502.4 1155.3,500.7 1156.3,499.9 1157.3,500.1 1158.3,501.3 1159.3,503.1 1160.3,505.2 1161.3,507.1 1162.3,508.5 1163.3,509.3 1164.3,509.7 1165.3,509.9 1166.3,510.0 1167.3,509.9 1168.3,508.5 1169.3,505.4 1170.3,501.1 1171.3,495.9 1172.3,490.0 1173.3,483.7 1174.3,477.3 1175.3,471.2 1176.3,465.7 1177.3,461.0 1178.3,457.4 1179.3,455.3 1180.3,454.9 1181.3,456.4 1182.3,459.3 1183.3,463.1 1184.3,467.3 1185.3,471.4 1186.3,475.0 1187.3,478.7 1188.3,482.6 1189.3,486.4 1190.3,489.9 1191.3,492.8 1192.3,495.3 1193.3,497.4 1194.3,499.3 1195.3,501.1 1196.3,502.8 1197.3,504.5 1198.3,506.5 1199.3,508.4 1200.3,509.7 1201.3,510.0 1202.3,509.8 1203.3,509.6 1204.3,509.3 1205.3,508.9 1206.3,508.7 1207.3,508.5 1208.3,508.5 1209.3,508.6 1210.3,508.8 1211.3,509.0 1212.3,509.1 1213.3,509.3 1214.3,509.5 1215.3,509.7 1216.3,509.9 1217.3,510.1 1218.3,510.2 1219.3,510.2 1220.3,509.0 1221.3,506.3 1222.3,502.9 1223.3,499.6 1224.3,497.1 1225.3,496.3 1226.3,497.4 1227.3,499.8 1228.3,502.9 1229.3,505.9 1230.3,508.1 1231.3,509.0 1232.3,509.0 1233.3,509.1 1234.3,509.1 1235.3,509.1 1236.3,509.1 1237.3,509.2 1238.3,509.3 1239.3,509.4 1240.3,509.4 1241.3,509.5 1242.3,509.4 1243.3,509.3 1244.3,509.1 1245.3,508.9 1246.3,508.7 1247.3,508.6 1248.3,508.8 1249.3,509.2 1250.3,509.7 1251.3,510.1 1252.3,510.5 1253.3,510.5 1254.3,510.5 1255.3,510.4 1256.3,510.2 1257.3,509.8 1258.3,508.1 1259.3,505.1 1260.3,500.9 1261.3,495.8 1262.3,490.1 1263.3,484.2 1264.3,478.2 1265.3,472.4 1266.3,467.0 1267.3,462.5 1268.3,458.9 1269.3,456.7 1270.3,456.0 1271.3,456.8 1272.3,458.6 1273.3,461.2 1274.3,464.4 1275.3,468.0 1276.3,471.7 1277.3,475.1 1278.3,478.2 1279.3,480.7 1280.3,482.6 1281.3,484.2 1282.3,485.8 1283.3,487.5 1284.3,489.4 1285.3,491.8 1286.3,495.3 1287.3,499.4 1288.3,503.5 1289.3,507.1 1290.3,509.4 1291.3,510.0 1292.3,510.1 1293.3,510.2 1294.3,510.2 1295.3,510.2 1296.3,510.2 1297.3,510.2 1298.3,510.3 1299.3,510.2 1300.3,510.1 1301.3,509.9 1302.3,509.8 1303.3,509.7 1304.3,509.6 1305.3,509.6 1306.3,509.6 1307.3,509.5 1308.3,509.4 1309.3,509.2 1310.3,508.8 1311.3,506.9 1312.3,503.8 1313.3,500.3 1314.3,497.0 1315.3,494.7 1316.3,494.3 1317.3,495.8 1318.3,498.7 1319.3,502.1 1320.3,505.3 1321.3,507.7 1322.3,508.5 1323.3,508.8 1324.3,508.9 1325.3,509.0 1326.3,509.0 1327.3,509.0 1328.3,509.1 1329.3,509.1 1330.3,509.2 1331.3,509.2 1332.3,509.2 1333.3,509.2 1334.3,509.1 1335.3,509.1 1336.3,509.0 1337.3,508.9 1338.3,508.9 1339.3,509.1 1340.3,509.3 1341.3,509.5 1342.3,509.8 1343.3,510.0 1344.3,510.0 1345.3,509.2 1346.3,507.7 1347.3,505.5 1348.3,502.8 1349.3,499.7 1350.3,496.4 1351.3,493.0 1352.3,489.7 1353.3,486.6 1354.3,483.9 1355.3,481.7 1356.3,480.0 1357.3,478.6 1358.3,477.5 1359.3,476.4 1360.3,475.4 1361.3,474.4 1361.7,473.9 L1361.7,516.2 Z" fill="rgba(103,84,179,0.75)"/><path d="M731.3,509.0 L732.3,505.7 L733.3,501.9 L734.3,498.2 L735.3,495.2 L736.3,493.2 L737.3,493.1 L738.3,494.8 L739.3,497.8 L740.3,501.2 L741.3,504.3 L742.3,506.2 L743.3,506.3 L744.3,505.0 L745.3,502.8 L746.3,500.6 L747.3,498.7 L748.3,497.8 L749.3,498.0 L750.3,498.8 L751.3,500.0 L752.3,501.5 L753.3,503.2 L754.3,505.0 L755.3,506.8 L756.3,508.3 L757.3,509.6 L758.3,510.6 L759.3,511.0 L760.3,511.0 L761.3,510.9 L762.3,510.8 L763.3,510.4 L764.3,509.8 L765.3,508.9 L766.3,506.9 L767.3,503.9 L768.3,500.4 L769.3,497.3 L770.3,495.0 L771.3,494.2 L772.3,495.5 L773.3,498.3 L774.3,502.0 L775.3,505.5 L776.3,508.3 L777.3,509.5 L778.3,509.8 L779.3,510.0 L780.3,510.1 L781.3,510.1 L782.3,510.1 L783.3,510.0 L784.3,509.8 L785.3,509.5 L786.3,509.2 L787.3,509.0 L788.3,508.8 L789.3,508.8 L790.3,508.7 L791.3,508.7 L792.3,508.7 L793.3,508.7 L794.3,508.7 L795.3,508.9 L796.3,509.1 L797.3,509.4 L798.3,509.6 L799.3,509.8 L800.3,509.9 L801.3,509.9 L802.3,510.0 L803.3,510.0 L804.3,510.0 L805.3,508.1 L806.3,501.6 L807.3,492.1 L808.3,481.7 L809.3,472.4 L810.3,466.0 L811.3,462.9 L812.3,461.0 L813.3,459.9 L814.3,459.3 L815.3,459.1 L816.3,459.3 L817.3,464.0 L818.3,473.7 L819.3,485.6 L820.3,497.3 L821.3,506.1 L822.3,509.7 L823.3,508.2 L824.3,504.8 L825.3,500.5 L826.3,496.4 L827.3,493.9 L828.3,493.9 L829.3,496.4 L830.3,500.4 L831.3,504.6 L832.3,508.0 L833.3,509.4 L834.3,509.3 L835.3,509.2 L836.3,508.9 L837.3,508.7 L838.3,508.5 L839.3,509.1 L840.3,509.5 L841.3,508.7 L842.3,507.6 L843.3,506.6 L844.3,506.0 L845.3,506.1 L846.3,506.6 L847.3,507.4 L848.3,508.3 L849.3,509.2 L850.3,510.2 L851.3,510.2 L852.3,510.2 L853.3,510.1 L854.3,510.0 L855.3,509.8 L856.3,509.5 L857.3,508.2 L858.3,505.2 L859.3,501.5 L860.3,497.9 L861.3,495.1 L862.3,494.0 L863.3,495.1 L864.3,497.8 L865.3,501.4 L866.3,505.0 L867.3,507.7 L868.3,508.8 L869.3,508.8 L870.3,508.7 L871.3,508.6 L872.3,508.5 L873.3,508.5 L874.3,508.8 L875.3,509.2 L876.3,509.8 L877.3,510.3 L878.3,510.6 L879.3,510.6 L880.3,510.3 L881.3,509.8 L882.3,509.2 L883.3,508.8 L884.3,508.6 L885.3,508.6 L886.3,508.6 L887.3,508.6 L888.3,508.6 L889.3,508.6 L890.3,508.7 L891.3,509.0 L892.3,509.5 L893.3,509.9 L894.3,509.7 L895.3,505.7 L896.3,498.1 L897.3,488.5 L898.3,478.7 L899.3,470.3 L900.3,465.0 L901.3,462.6 L902.3,461.2 L903.3,460.6 L904.3,460.3 L905.3,459.8 L906.3,459.4 L907.3,459.1 L908.3,459.0 L909.3,463.8 L910.3,478.8 L911.3,496.2 L912.3,507.7 L913.3,509.9 L914.3,509.7 L915.3,505.9 L916.3,499.8 L917.3,494.7 L918.3,493.5 L919.3,495.2 L920.3,498.2 L921.3,502.0 L922.3,505.7 L923.3,508.5 L924.3,509.5 L925.3,509.8 L926.3,509.9 L927.3,510.0 L928.3,510.1 L929.3,510.1 L930.3,510.2 L931.3,510.1 L932.3,509.4 L933.3,508.0 L934.3,506.6 L935.3,505.6 L936.3,505.3 L937.3,505.7 L938.3,506.4 L939.3,507.2 L940.3,508.0 L941.3,508.5 L942.3,508.9 L943.3,509.3 L944.3,509.6 L945.3,509.8 L946.3,510.0 L947.3,509.9 L948.3,508.3 L949.3,505.2 L950.3,501.7 L951.3,498.3 L952.3,496.0 L953.3,495.5 L954.3,495.5 L955.3,495.5 L956.3,495.6 L957.3,495.7 L958.3,495.8 L959.3,496.2 L960.3,497.9 L961.3,500.8 L962.3,504.2 L963.3,507.4 L964.3,509.5 L965.3,510.0 L966.3,509.9 L967.3,509.7 L968.3,509.6 L969.3,509.5 L970.3,509.5 L971.3,509.6 L972.3,509.7 L973.3,509.9 L974.3,510.0 L975.3,510.0 L976.3,509.9 L977.3,509.6 L978.3,509.3 L979.3,509.1 L980.3,508.9 L981.3,508.9 L982.3,509.1 L983.3,509.5 L984.3,509.9 L985.3,510.2 L986.3,510.4 L987.3,510.4 L988.3,510.3 L989.3,510.2 L990.3,509.6 L991.3,503.7 L992.3,492.6 L993.3,478.2 L994.3,462.6 L995.3,447.7 L996.3,435.5 L997.3,428.1 L998.3,427.6 L999.3,436.3 L1000.3,451.6 L1001.3,470.0 L1002.3,488.0 L1003.3,502.2 L1004.3,509.1 L1005.3,510.0 L1006.3,508.0 L1007.3,502.0 L1008.3,495.6 L1009.3,492.6 L1010.3,494.3 L1011.3,498.4 L1012.3,503.3 L1013.3,507.5 L1014.3,509.3 L1015.3,509.4 L1016.3,509.5 L1017.3,509.6 L1018.3,509.6 L1019.3,509.6 L1020.3,509.6 L1021.3,509.5 L1022.3,508.7 L1023.3,507.5 L1024.3,506.2 L1025.3,505.4 L1026.3,505.4 L1027.3,506.2 L1028.3,507.3 L1029.3,508.5 L1030.3,509.2 L1031.3,509.1 L1032.3,508.8 L1033.3,508.8 L1034.3,508.8 L1035.3,508.9 L1036.3,509.0 L1037.3,509.2 L1038.3,510.2 L1039.3,508.4 L1040.3,505.1 L1041.3,501.1 L1042.3,497.4 L1043.3,494.8 L1044.3,494.3 L1045.3,496.2 L1046.3,499.6 L1047.3,503.6 L1048.3,507.4 L1049.3,509.9 L1050.3,510.5 L1051.3,510.5 L1052.3,510.4 L1053.3,510.3 L1054.3,510.2 L1055.3,510.2 L1056.3,510.2 L1057.3,510.1 L1058.3,510.0 L1059.3,509.8 L1060.3,509.0 L1061.3,507.1 L1062.3,504.4 L1063.3,501.6 L1064.3,499.3 L1065.3,498.1 L1066.3,498.4 L1067.3,500.0 L1068.3,502.4 L1069.3,505.0 L1070.3,507.3 L1071.3,508.6 L1072.3,508.9 L1073.3,509.1 L1074.3,509.2 L1075.3,509.2 L1076.3,509.2 L1077.3,509.2 L1078.3,509.4 L1079.3,509.6 L1080.3,509.9 L1081.3,510.0 L1082.3,507.3 L1083.3,497.9 L1084.3,483.7 L1085.3,467.4 L1086.3,451.1 L1087.3,437.3 L1088.3,428.4 L1089.3,426.9 L1090.3,435.4 L1091.3,451.1 L1092.3,470.4 L1093.3,489.2 L1094.3,503.8 L1095.3,510.3 L1096.3,509.3 L1097.3,505.1 L1098.3,499.9 L1099.3,495.2 L1100.3,493.0 L1101.3,494.5 L1102.3,498.6 L1103.3,503.7 L1104.3,508.2 L1105.3,510.3 L1106.3,510.2 L1107.3,509.9 L1108.3,509.4 L1109.3,508.9 L1110.3,508.6 L1111.3,508.5 L1112.3,509.2 L1113.3,509.3 L1114.3,508.7 L1115.3,507.8 L1116.3,507.0 L1117.3,506.5 L1118.3,506.5 L1119.3,507.3 L1120.3,508.3 L1121.3,509.4 L1122.3,510.1 L1123.3,510.3 L1124.3,510.4 L1125.3,510.4 L1126.3,510.4 L1127.3,510.4 L1128.3,510.0 L1129.3,507.6 L1130.3,503.9 L1131.3,499.9 L1132.3,496.4 L1133.3,494.4 L1134.3,494.7 L1135.3,497.1 L1136.3,500.8 L1137.3,504.8 L1138.3,508.3 L1139.3,510.4 L1140.3,510.6 L1141.3,510.5 L1142.3,510.4 L1143.3,510.3 L1144.3,510.1 L1145.3,510.0 L1146.3,509.9 L1147.3,509.9 L1148.3,509.7 L1149.3,509.5 L1150.3,509.0 L1151.3,508.2 L1152.3,506.5 L1153.3,504.5 L1154.3,502.4 L1155.3,500.7 L1156.3,499.9 L1157.3,500.1 L1158.3,501.3 L1159.3,503.1 L1160.3,505.2 L1161.3,507.1 L1162.3,508.5 L1163.3,509.3 L1164.3,509.7 L1165.3,509.9 L1166.3,510.0 L1167.3,509.9 L1168.3,508.5 L1169.3,505.4 L1170.3,501.1 L1171.3,495.9 L1172.3,490.0 L1173.3,483.7 L1174.3,477.3 L1175.3,471.2 L1176.3,465.7 L1177.3,461.0 L1178.3,457.4 L1179.3,455.3 L1180.3,454.9 L1181.3,456.4 L1182.3,459.3 L1183.3,463.1 L1184.3,467.3 L1185.3,471.4 L1186.3,475.0 L1187.3,478.7 L1188.3,482.6 L1189.3,486.4 L1190.3,489.9 L1191.3,492.8 L1192.3,495.3 L1193.3,497.4 L1194.3,499.3 L1195.3,501.1 L1196.3,502.8 L1197.3,504.5 L1198.3,506.5 L1199.3,508.4 L1200.3,509.7 L1201.3,510.0 L1202.3,509.8 L1203.3,509.6 L1204.3,509.3 L1205.3,508.9 L1206.3,508.7 L1207.3,508.5 L1208.3,508.5 L1209.3,508.6 L1210.3,508.8 L1211.3,509.0 L1212.3,509.1 L1213.3,509.3 L1214.3,509.5 L1215.3,509.7 L1216.3,509.9 L1217.3,510.1 L1218.3,510.2 L1219.3,510.2 L1220.3,509.0 L1221.3,506.3 L1222.3,502.9 L1223.3,499.6 L1224.3,497.1 L1225.3,496.3 L1226.3,497.4 L1227.3,499.8 L1228.3,502.9 L1229.3,505.9 L1230.3,508.1 L1231.3,509.0 L1232.3,509.0 L1233.3,509.1 L1234.3,509.1 L1235.3,509.1 L1236.3,509.1 L1237.3,509.2 L1238.3,509.3 L1239.3,509.4 L1240.3,509.4 L1241.3,509.5 L1242.3,509.4 L1243.3,509.3 L1244.3,509.1 L1245.3,508.9 L1246.3,508.7 L1247.3,508.6 L1248.3,508.8 L1249.3,509.2 L1250.3,509.7 L1251.3,510.1 L1252.3,510.5 L1253.3,510.5 L1254.3,510.5 L1255.3,510.4 L1256.3,510.2 L1257.3,509.8 L1258.3,508.1 L1259.3,505.1 L1260.3,500.9 L1261.3,495.8 L1262.3,490.1 L1263.3,484.2 L1264.3,478.2 L1265.3,472.4 L1266.3,467.0 L1267.3,462.5 L1268.3,458.9 L1269.3,456.7 L1270.3,456.0 L1271.3,456.8 L1272.3,458.6 L1273.3,461.2 L1274.3,464.4 L1275.3,468.0 L1276.3,471.7 L1277.3,475.1 L1278.3,478.2 L1279.3,480.7 L1280.3,482.6 L1281.3,484.2 L1282.3,485.8 L1283.3,487.5 L1284.3,489.4 L1285.3,491.8 L1286.3,495.3 L1287.3,499.4 L1288.3,503.5 L1289.3,507.1 L1290.3,509.4 L1291.3,510.0 L1292.3,510.1 L1293.3,510.2 L1294.3,510.2 L1295.3,510.2 L1296.3,510.2 L1297.3,510.2 L1298.3,510.3 L1299.3,510.2 L1300.3,510.1 L1301.3,509.9 L1302.3,509.8 L1303.3,509.7 L1304.3,509.6 L1305.3,509.6 L1306.3,509.6 L1307.3,509.5 L1308.3,509.4 L1309.3,509.2 L1310.3,508.8 L1311.3,506.9 L1312.3,503.8 L1313.3,500.3 L1314.3,497.0 L1315.3,494.7 L1316.3,494.3 L1317.3,495.8 L1318.3,498.7 L1319.3,502.1 L1320.3,505.3 L1321.3,507.7 L1322.3,508.5 L1323.3,508.8 L1324.3,508.9 L1325.3,509.0 L1326.3,509.0 L1327.3,509.0 L1328.3,509.1 L1329.3,509.1 L1330.3,509.2 L1331.3,509.2 L1332.3,509.2 L1333.3,509.2 L1334.3,509.1 L1335.3,509.1 L1336.3,509.0 L1337.3,508.9 L1338.3,508.9 L1339.3,509.1 L1340.3,509.3 L1341.3,509.5 L1342.3,509.8 L1343.3,510.0 L1344.3,510.0 L1345.3,509.2 L1346.3,507.7 L1347.3,505.5 L1348.3,502.8 L1349.3,499.7 L1350.3,496.4 L1351.3,493.0 L1352.3,489.7 L1353.3,486.6 L1354.3,483.9 L1355.3,481.7 L1356.3,480.0 L1357.3,478.6 L1358.3,477.5 L1359.3,476.4 L1360.3,475.4 L1361.3,474.4 L1361.7,473.9" fill="none" stroke="#5e4aae" stroke-width="1.35"/><path d="M731.3,516.2 L731.3,512.5 732.3,512.7 733.3,512.9 734.3,513.0 735.3,513.2 736.3,513.2 737.3,513.3 738.3,513.3 739.3,513.2 740.3,513.2 741.3,513.2 742.3,513.2 743.3,513.2 744.3,513.2 745.3,513.2 746.3,513.2 747.3,513.2 748.3,513.2 749.3,513.2 750.3,513.1 751.3,513.1 752.3,513.0 753.3,513.0 754.3,513.0 755.3,513.0 756.3,513.0 757.3,513.1 758.3,513.1 759.3,513.2 760.3,513.2 761.3,513.2 762.3,513.3 763.3,513.3 764.3,513.4 765.3,513.4 766.3,513.4 767.3,513.4 768.3,513.3 769.3,513.3 770.3,513.2 771.3,513.2 772.3,513.1 773.3,513.0 774.3,512.9 775.3,512.9 776.3,512.8 777.3,512.9 778.3,513.0 779.3,513.1 780.3,513.2 781.3,513.3 782.3,513.4 783.3,513.4 784.3,513.3 785.3,513.1 786.3,513.0 787.3,512.9 788.3,512.8 789.3,512.7 790.3,512.7 791.3,512.6 792.3,512.6 793.3,512.6 794.3,512.6 795.3,512.6 796.3,512.6 797.3,512.7 798.3,512.7 799.3,512.7 800.3,512.8 801.3,512.8 802.3,512.9 803.3,512.9 804.3,513.0 805.3,513.0 806.3,513.1 807.3,513.2 808.3,513.3 809.3,513.3 810.3,513.4 811.3,513.3 812.3,513.3 813.3,513.1 814.3,513.0 815.3,512.9 816.3,512.8 817.3,512.9 818.3,512.9 819.3,513.0 820.3,513.1 821.3,513.1 822.3,513.2 823.3,513.1 824.3,513.1 825.3,513.0 826.3,512.9 827.3,512.8 828.3,512.7 829.3,512.7 830.3,512.6 831.3,512.6 832.3,512.5 833.3,512.5 834.3,512.6 835.3,512.8 836.3,513.0 837.3,513.3 838.3,513.4 839.3,513.5 840.3,513.4 841.3,513.4 842.3,513.3 843.3,513.2 844.3,513.1 845.3,513.0 846.3,513.0 847.3,513.0 848.3,513.0 849.3,513.0 850.3,513.0 851.3,513.0 852.3,513.0 853.3,513.1 854.3,513.1 855.3,513.2 856.3,513.2 857.3,513.1 858.3,513.0 859.3,512.8 860.3,512.7 861.3,512.6 862.3,512.7 863.3,512.8 864.3,513.0 865.3,513.1 866.3,513.3 867.3,513.4 868.3,513.3 869.3,513.2 870.3,513.1 871.3,512.9 872.3,512.8 873.3,512.8 874.3,512.9 875.3,513.0 876.3,513.2 877.3,513.4 878.3,513.4 879.3,513.4 880.3,513.3 881.3,513.1 882.3,512.9 883.3,512.7 884.3,512.7 885.3,512.7 886.3,512.7 887.3,512.8 888.3,512.9 889.3,512.9 890.3,513.0 891.3,512.9 892.3,512.9 893.3,512.9 894.3,512.8 895.3,512.8 896.3,512.8 897.3,512.9 898.3,512.9 899.3,513.0 900.3,513.1 901.3,513.1 902.3,513.1 903.3,513.0 904.3,512.8 905.3,512.7 906.3,512.6 907.3,512.6 908.3,512.6 909.3,512.6 910.3,512.6 911.3,512.6 912.3,512.6 913.3,512.6 914.3,512.6 915.3,512.7 916.3,512.7 917.3,512.8 918.3,512.8 919.3,512.8 920.3,512.8 921.3,512.7 922.3,512.6 923.3,512.6 924.3,512.6 925.3,512.6 926.3,512.8 927.3,513.0 928.3,513.2 929.3,513.3 930.3,513.3 931.3,513.2 932.3,513.0 933.3,512.8 934.3,512.7 935.3,512.6 936.3,512.6 937.3,512.7 938.3,512.7 939.3,512.7 940.3,512.8 941.3,512.8 942.3,512.9 943.3,512.9 944.3,513.0 945.3,513.0 946.3,513.0 947.3,513.0 948.3,512.9 949.3,512.9 950.3,512.7 951.3,512.7 952.3,512.6 953.3,512.7 954.3,512.8 955.3,513.0 956.3,513.3 957.3,513.4 958.3,513.5 959.3,513.4 960.3,513.2 961.3,513.1 962.3,512.9 963.3,512.8 964.3,512.8 965.3,512.8 966.3,512.9 967.3,513.0 968.3,513.0 969.3,513.1 970.3,513.0 971.3,513.0 972.3,512.9 973.3,512.8 974.3,512.7 975.3,512.7 976.3,512.7 977.3,512.7 978.3,512.7 979.3,512.7 980.3,512.7 981.3,512.8 982.3,512.8 983.3,512.9 984.3,513.0 985.3,513.1 986.3,513.1 987.3,513.2 988.3,513.2 989.3,513.2 990.3,513.2 991.3,513.2 992.3,513.2 993.3,513.2 994.3,513.2 995.3,513.3 996.3,513.3 997.3,513.3 998.3,513.3 999.3,513.3 1000.3,513.4 1001.3,513.4 1002.3,513.4 1003.3,513.5 1004.3,513.5 1005.3,513.5 1006.3,513.4 1007.3,513.4 1008.3,513.4 1009.3,513.4 1010.3,513.4 1011.3,513.3 1012.3,513.2 1013.3,513.1 1014.3,513.0 1015.3,512.9 1016.3,512.8 1017.3,512.7 1018.3,512.6 1019.3,512.6 1020.3,512.5 1021.3,512.5 1022.3,512.5 1023.3,512.5 1024.3,512.6 1025.3,512.6 1026.3,512.7 1027.3,512.8 1028.3,512.9 1029.3,513.1 1030.3,513.2 1031.3,513.3 1032.3,513.4 1033.3,513.4 1034.3,513.5 1035.3,513.5 1036.3,513.5 1037.3,513.5 1038.3,513.5 1039.3,513.4 1040.3,513.3 1041.3,513.2 1042.3,513.1 1043.3,513.0 1044.3,512.9 1045.3,512.8 1046.3,512.7 1047.3,512.6 1048.3,512.5 1049.3,512.5 1050.3,512.5 1051.3,512.6 1052.3,512.6 1053.3,512.7 1054.3,512.8 1055.3,512.8 1056.3,512.9 1057.3,513.0 1058.3,513.1 1059.3,513.2 1060.3,513.2 1061.3,513.2 1062.3,513.1 1063.3,512.9 1064.3,512.8 1065.3,512.7 1066.3,512.7 1067.3,512.7 1068.3,512.7 1069.3,512.7 1070.3,512.7 1071.3,512.8 1072.3,512.8 1073.3,512.8 1074.3,512.8 1075.3,512.9 1076.3,512.9 1077.3,512.9 1078.3,513.0 1079.3,513.0 1080.3,513.1 1081.3,513.2 1082.3,513.2 1083.3,513.2 1084.3,513.2 1085.3,513.2 1086.3,513.2 1087.3,513.2 1088.3,513.2 1089.3,513.2 1090.3,513.2 1091.3,513.1 1092.3,513.0 1093.3,512.9 1094.3,512.9 1095.3,512.9 1096.3,512.9 1097.3,512.9 1098.3,512.9 1099.3,512.9 1100.3,512.9 1101.3,512.9 1102.3,512.9 1103.3,513.0 1104.3,513.0 1105.3,513.0 1106.3,513.0 1107.3,513.0 1108.3,513.0 1109.3,513.0 1110.3,513.0 1111.3,513.0 1112.3,513.0 1113.3,513.1 1114.3,513.3 1115.3,513.4 1116.3,513.5 1117.3,513.5 1118.3,513.3 1119.3,513.1 1120.3,512.9 1121.3,512.7 1122.3,512.6 1123.3,512.6 1124.3,512.7 1125.3,512.7 1126.3,512.8 1127.3,512.9 1128.3,512.9 1129.3,512.9 1130.3,512.9 1131.3,512.9 1132.3,512.8 1133.3,512.8 1134.3,512.8 1135.3,512.8 1136.3,512.9 1137.3,512.9 1138.3,512.9 1139.3,513.0 1140.3,513.0 1141.3,513.1 1142.3,513.2 1143.3,513.3 1144.3,513.3 1145.3,513.4 1146.3,513.4 1147.3,513.3 1148.3,513.3 1149.3,513.3 1150.3,513.3 1151.3,513.3 1152.3,513.3 1153.3,513.2 1154.3,513.2 1155.3,513.2 1156.3,513.1 1157.3,513.1 1158.3,513.0 1159.3,513.0 1160.3,512.9 1161.3,512.9 1162.3,512.9 1163.3,512.9 1164.3,512.9 1165.3,513.0 1166.3,513.0 1167.3,513.1 1168.3,513.1 1169.3,513.2 1170.3,513.2 1171.3,513.3 1172.3,513.3 1173.3,513.3 1174.3,513.3 1175.3,513.3 1176.3,513.2 1177.3,513.1 1178.3,513.1 1179.3,513.1 1180.3,513.1 1181.3,513.2 1182.3,513.3 1183.3,513.3 1184.3,513.4 1185.3,513.4 1186.3,513.3 1187.3,513.1 1188.3,512.8 1189.3,512.6 1190.3,512.5 1191.3,512.6 1192.3,512.6 1193.3,512.8 1194.3,512.9 1195.3,513.0 1196.3,513.0 1197.3,513.0 1198.3,512.2 1199.3,510.5 1200.3,508.6 1201.3,507.1 1202.3,506.4 1203.3,507.0 1204.3,508.6 1205.3,510.5 1206.3,512.1 1207.3,512.9 1208.3,513.1 1209.3,513.3 1210.3,513.4 1211.3,513.4 1212.3,513.4 1213.3,513.4 1214.3,513.4 1215.3,513.3 1216.3,513.2 1217.3,513.1 1218.3,513.1 1219.3,513.1 1220.3,513.1 1221.3,513.2 1222.3,513.2 1223.3,513.3 1224.3,513.3 1225.3,513.3 1226.3,513.2 1227.3,513.1 1228.3,513.0 1229.3,512.9 1230.3,512.9 1231.3,512.9 1232.3,513.0 1233.3,513.2 1234.3,513.4 1235.3,513.5 1236.3,513.5 1237.3,513.4 1238.3,513.2 1239.3,513.0 1240.3,512.8 1241.3,512.7 1242.3,512.7 1243.3,512.7 1244.3,512.8 1245.3,512.9 1246.3,513.0 1247.3,513.0 1248.3,513.1 1249.3,513.1 1250.3,513.2 1251.3,513.2 1252.3,513.2 1253.3,513.3 1254.3,513.3 1255.3,513.4 1256.3,513.4 1257.3,513.5 1258.3,513.5 1259.3,513.5 1260.3,513.4 1261.3,513.2 1262.3,513.1 1263.3,513.0 1264.3,512.9 1265.3,513.0 1266.3,513.0 1267.3,513.1 1268.3,513.2 1269.3,513.3 1270.3,513.3 1271.3,513.3 1272.3,513.2 1273.3,513.2 1274.3,513.2 1275.3,513.2 1276.3,513.2 1277.3,513.2 1278.3,513.2 1279.3,513.2 1280.3,513.2 1281.3,513.2 1282.3,513.3 1283.3,513.3 1284.3,513.3 1285.3,513.3 1286.3,513.4 1287.3,513.4 1288.3,513.3 1289.3,513.2 1290.3,513.1 1291.3,513.0 1292.3,513.0 1293.3,512.9 1294.3,512.9 1295.3,512.9 1296.3,512.9 1297.3,512.9 1298.3,512.9 1299.3,512.9 1300.3,513.0 1301.3,513.1 1302.3,513.2 1303.3,513.3 1304.3,513.3 1305.3,513.2 1306.3,513.2 1307.3,513.1 1308.3,513.0 1309.3,512.9 1310.3,512.8 1311.3,512.8 1312.3,512.7 1313.3,512.7 1314.3,512.7 1315.3,512.7 1316.3,512.7 1317.3,512.7 1318.3,512.7 1319.3,512.7 1320.3,512.7 1321.3,512.7 1322.3,512.8 1323.3,512.8 1324.3,512.9 1325.3,513.0 1326.3,513.0 1327.3,513.0 1328.3,513.0 1329.3,513.0 1330.3,513.0 1331.3,513.0 1332.3,513.0 1333.3,513.0 1334.3,512.9 1335.3,512.8 1336.3,512.8 1337.3,512.7 1338.3,512.7 1339.3,512.8 1340.3,513.0 1341.3,513.2 1342.3,513.3 1343.3,513.4 1344.3,513.4 1345.3,513.3 1346.3,513.1 1347.3,512.9 1348.3,512.7 1349.3,512.6 1350.3,512.7 1351.3,512.8 1352.3,513.0 1353.3,513.2 1354.3,513.3 1355.3,513.3 1356.3,513.2 1357.3,513.1 1358.3,513.0 1359.3,512.9 1360.3,512.8 1361.3,513.1 1361.7,513.4 L1361.7,516.2 Z" fill="rgba(130,130,130,0.6)"/><path d="M731.3,516.2 L731.3,514.0 732.3,514.1 733.3,514.1 734.3,514.2 735.3,514.2 736.3,514.3 737.3,514.3 738.3,514.2 739.3,514.0 740.3,513.9 741.3,513.7 742.3,513.6 743.3,513.7 744.3,513.8 745.3,514.0 746.3,514.2 747.3,514.3 748.3,514.4 749.3,514.3 750.3,514.1 751.3,513.5 752.3,512.7 753.3,511.8 754.3,511.2 755.3,511.0 756.3,511.5 757.3,512.3 758.3,513.1 759.3,513.7 760.3,513.9 761.3,513.8 762.3,513.8 763.3,513.8 764.3,513.7 765.3,513.7 766.3,513.8 767.3,513.9 768.3,514.0 769.3,514.1 770.3,514.2 771.3,514.2 772.3,514.2 773.3,514.2 774.3,514.1 775.3,514.0 776.3,514.0 777.3,514.0 778.3,514.1 779.3,514.1 780.3,514.2 781.3,514.2 782.3,514.3 783.3,514.0 784.3,513.6 785.3,513.0 786.3,512.5 787.3,512.1 788.3,512.0 789.3,512.5 790.3,513.2 791.3,513.8 792.3,514.0 793.3,513.8 794.3,513.8 795.3,513.8 796.3,513.8 797.3,513.8 798.3,513.8 799.3,513.9 800.3,513.8 801.3,513.8 802.3,513.8 803.3,513.7 804.3,513.7 805.3,513.7 806.3,513.8 807.3,513.4 808.3,512.8 809.3,512.1 810.3,511.6 811.3,511.5 812.3,512.0 813.3,512.7 814.3,513.5 815.3,514.1 816.3,514.3 817.3,514.3 818.3,514.3 819.3,514.3 820.3,514.2 821.3,514.2 822.3,514.2 823.3,514.2 824.3,514.2 825.3,514.1 826.3,514.1 827.3,514.0 828.3,514.0 829.3,513.9 830.3,513.9 831.3,513.8 832.3,513.8 833.3,513.8 834.3,513.8 835.3,513.8 836.3,513.8 837.3,513.8 838.3,513.8 839.3,513.8 840.3,513.7 841.3,513.7 842.3,513.7 843.3,513.7 844.3,513.7 845.3,513.7 846.3,513.7 847.3,513.7 848.3,513.7 849.3,513.7 850.3,513.8 851.3,513.8 852.3,513.9 853.3,513.9 854.3,514.0 855.3,514.0 856.3,514.0 857.3,514.0 858.3,514.0 859.3,514.0 860.3,514.0 861.3,514.0 862.3,514.0 863.3,514.0 864.3,514.0 865.3,514.1 866.3,514.1 867.3,514.2 868.3,514.1 869.3,514.0 870.3,513.9 871.3,513.8 872.3,513.7 873.3,513.7 874.3,513.7 875.3,513.8 876.3,514.0 877.3,514.1 878.3,514.2 879.3,514.3 880.3,514.3 881.3,514.4 882.3,514.4 883.3,514.4 884.3,514.4 885.3,514.4 886.3,514.3 887.3,514.3 888.3,514.2 889.3,514.2 890.3,514.2 891.3,514.2 892.3,514.2 893.3,514.2 894.3,514.2 895.3,514.2 896.3,514.2 897.3,514.2 898.3,514.2 899.3,514.3 900.3,514.3 901.3,514.3 902.3,514.2 903.3,514.1 904.3,514.0 905.3,513.8 906.3,513.7 907.3,513.7 908.3,513.7 909.3,513.8 910.3,513.9 911.3,513.9 912.3,514.0 913.3,514.0 914.3,513.9 915.3,513.8 916.3,513.8 917.3,513.7 918.3,513.7 919.3,513.7 920.3,513.8 921.3,514.0 922.3,514.1 923.3,514.2 924.3,514.2 925.3,514.2 926.3,514.2 927.3,514.1 928.3,514.1 929.3,514.1 930.3,514.0 931.3,513.9 932.3,513.8 933.3,513.8 934.3,513.7 935.3,513.7 936.3,513.7 937.3,513.7 938.3,513.8 939.3,513.9 940.3,513.9 941.3,514.0 942.3,514.0 943.3,514.1 944.3,514.1 945.3,514.2 946.3,514.2 947.3,514.2 948.3,514.2 949.3,514.2 950.3,514.1 951.3,514.1 952.3,514.0 953.3,514.0 954.3,513.9 955.3,513.8 956.3,513.8 957.3,513.7 958.3,513.7 959.3,513.8 960.3,513.9 961.3,514.1 962.3,514.2 963.3,514.3 964.3,514.3 965.3,514.2 966.3,514.1 967.3,513.9 968.3,513.7 969.3,513.6 970.3,513.7 971.3,513.8 972.3,513.9 973.3,514.1 974.3,514.2 975.3,514.3 976.3,514.3 977.3,514.4 978.3,514.4 979.3,514.4 980.3,514.4 981.3,514.4 982.3,514.3 983.3,514.3 984.3,514.3 985.3,514.2 986.3,514.2 987.3,514.2 988.3,514.2 989.3,514.3 990.3,514.3 991.3,514.3 992.3,514.4 993.3,514.3 994.3,514.3 995.3,514.2 996.3,514.1 997.3,514.1 998.3,514.0 999.3,513.9 1000.3,513.9 1001.3,513.8 1002.3,513.8 1003.3,513.8 1004.3,513.8 1005.3,513.8 1006.3,513.9 1007.3,513.9 1008.3,513.9 1009.3,514.0 1010.3,514.0 1011.3,514.1 1012.3,514.1 1013.3,514.2 1014.3,514.2 1015.3,514.2 1016.3,514.2 1017.3,514.2 1018.3,514.2 1019.3,514.2 1020.3,514.2 1021.3,514.2 1022.3,514.1 1023.3,514.1 1024.3,514.0 1025.3,513.9 1026.3,513.9 1027.3,514.0 1028.3,514.1 1029.3,514.2 1030.3,514.3 1031.3,514.3 1032.3,514.3 1033.3,514.2 1034.3,514.1 1035.3,513.9 1036.3,513.7 1037.3,513.6 1038.3,513.6 1039.3,513.7 1040.3,513.8 1041.3,513.9 1042.3,514.0 1043.3,514.0 1044.3,514.0 1045.3,513.9 1046.3,513.8 1047.3,513.7 1048.3,513.6 1049.3,513.6 1050.3,513.7 1051.3,513.7 1052.3,513.7 1053.3,513.8 1054.3,513.9 1055.3,514.0 1056.3,514.1 1057.3,514.2 1058.3,514.3 1059.3,514.4 1060.3,514.4 1061.3,514.3 1062.3,514.2 1063.3,514.0 1064.3,513.8 1065.3,513.7 1066.3,513.7 1067.3,513.8 1068.3,514.0 1069.3,514.2 1070.3,514.3 1071.3,514.4 1072.3,514.4 1073.3,514.4 1074.3,514.4 1075.3,514.4 1076.3,514.3 1077.3,514.3 1078.3,514.3 1079.3,514.3 1080.3,514.3 1081.3,514.2 1082.3,514.2 1083.3,514.1 1084.3,514.0 1085.3,513.9 1086.3,513.8 1087.3,513.7 1088.3,513.6 1089.3,513.7 1090.3,513.7 1091.3,513.8 1092.3,513.9 1093.3,514.0 1094.3,514.0 1095.3,513.6 1096.3,513.2 1097.3,512.7 1098.3,512.3 1099.3,512.1 1100.3,512.0 1101.3,512.3 1102.3,512.8 1103.3,513.3 1104.3,513.9 1105.3,514.1 1106.3,514.1 1107.3,514.0 1108.3,513.9 1109.3,513.8 1110.3,513.7 1111.3,513.7 1112.3,513.7 1113.3,513.7 1114.3,513.8 1115.3,513.8 1116.3,513.8 1117.3,513.8 1118.3,513.8 1119.3,513.8 1120.3,513.7 1121.3,513.7 1122.3,513.7 1123.3,513.7 1124.3,513.8 1125.3,513.9 1126.3,514.1 1127.3,514.2 1128.3,514.3 1129.3,514.3 1130.3,514.3 1131.3,514.3 1132.3,514.3 1133.3,514.3 1134.3,514.3 1135.3,514.3 1136.3,514.3 1137.3,514.3 1138.3,514.3 1139.3,514.3 1140.3,514.3 1141.3,514.3 1142.3,514.3 1143.3,514.3 1144.3,514.2 1145.3,514.2 1146.3,514.2 1147.3,514.2 1148.3,514.1 1149.3,514.1 1150.3,514.1 1151.3,514.0 1152.3,514.0 1153.3,513.9 1154.3,513.8 1155.3,513.7 1156.3,513.7 1157.3,513.7 1158.3,513.7 1159.3,513.8 1160.3,513.9 1161.3,513.9 1162.3,514.0 1163.3,514.0 1164.3,514.1 1165.3,514.1 1166.3,514.2 1167.3,514.2 1168.3,514.2 1169.3,514.2 1170.3,514.2 1171.3,514.2 1172.3,514.2 1173.3,514.2 1174.3,514.2 1175.3,514.1 1176.3,513.9 1177.3,513.8 1178.3,513.7 1179.3,513.6 1180.3,513.6 1181.3,513.6 1182.3,513.6 1183.3,513.6 1184.3,513.6 1185.3,513.6 1186.3,513.6 1187.3,513.6 1188.3,513.6 1189.3,513.6 1190.3,513.7 1191.3,513.7 1192.3,513.8 1193.3,514.0 1194.3,514.2 1195.3,514.3 1196.3,514.3 1197.3,514.3 1198.3,514.1 1199.3,514.0 1200.3,513.8 1201.3,513.7 1202.3,513.7 1203.3,513.7 1204.3,513.8 1205.3,513.8 1206.3,513.9 1207.3,513.9 1208.3,513.9 1209.3,513.9 1210.3,513.9 1211.3,513.9 1212.3,514.0 1213.3,514.0 1214.3,514.0 1215.3,514.1 1216.3,514.2 1217.3,514.3 1218.3,514.3 1219.3,514.3 1220.3,514.2 1221.3,514.1 1222.3,513.9 1223.3,513.8 1224.3,513.7 1225.3,513.7 1226.3,513.7 1227.3,513.7 1228.3,513.7 1229.3,513.8 1230.3,513.8 1231.3,513.9 1232.3,514.0 1233.3,514.1 1234.3,514.2 1235.3,514.2 1236.3,514.2 1237.3,514.1 1238.3,514.0 1239.3,513.9 1240.3,513.7 1241.3,513.7 1242.3,513.7 1243.3,513.7 1244.3,513.7 1245.3,513.7 1246.3,513.7 1247.3,513.7 1248.3,513.7 1249.3,513.7 1250.3,513.7 1251.3,513.6 1252.3,513.6 1253.3,513.6 1254.3,513.7 1255.3,513.9 1256.3,514.1 1257.3,514.3 1258.3,514.4 1259.3,514.3 1260.3,514.2 1261.3,514.1 1262.3,513.9 1263.3,513.8 1264.3,513.8 1265.3,513.8 1266.3,513.8 1267.3,513.9 1268.3,514.0 1269.3,514.0 1270.3,514.0 1271.3,514.0 1272.3,514.0 1273.3,513.9 1274.3,513.9 1275.3,513.9 1276.3,513.9 1277.3,514.0 1278.3,514.1 1279.3,514.2 1280.3,514.3 1281.3,514.4 1282.3,514.4 1283.3,514.3 1284.3,514.2 1285.3,514.0 1286.3,513.5 1287.3,513.0 1288.3,512.5 1289.3,512.1 1290.3,512.0 1291.3,512.3 1292.3,512.9 1293.3,513.5 1294.3,513.9 1295.3,514.1 1296.3,514.2 1297.3,514.2 1298.3,514.2 1299.3,514.2 1300.3,514.2 1301.3,514.1 1302.3,514.1 1303.3,514.1 1304.3,514.1 1305.3,514.1 1306.3,514.0 1307.3,514.0 1308.3,514.0 1309.3,514.0 1310.3,514.0 1311.3,513.9 1312.3,513.9 1313.3,513.9 1314.3,513.8 1315.3,513.8 1316.3,513.9 1317.3,513.9 1318.3,514.1 1319.3,514.2 1320.3,514.3 1321.3,514.3 1322.3,514.2 1323.3,514.1 1324.3,513.9 1325.3,513.8 1326.3,513.7 1327.3,513.7 1328.3,513.8 1329.3,513.9 1330.3,514.0 1331.3,514.1 1332.3,514.1 1333.3,514.1 1334.3,514.0 1335.3,514.0 1336.3,513.9 1337.3,513.9 1338.3,513.8 1339.3,513.8 1340.3,513.8 1341.3,513.8 1342.3,513.8 1343.3,513.8 1344.3,513.8 1345.3,513.8 1346.3,513.9 1347.3,513.9 1348.3,514.0 1349.3,514.0 1350.3,513.9 1351.3,513.9 1352.3,513.8 1353.3,513.8 1354.3,513.8 1355.3,513.8 1356.3,513.8 1357.3,513.9 1358.3,514.0 1359.3,514.0 1360.3,514.1 1361.3,513.9 1361.7,513.7 L1361.7,516.2 Z" fill="rgba(130,160,40,0.6)"/><path d="M731.3,515.9000000000001 L1361.7,515.9000000000001" stroke="#137f88" stroke-width="1.4"/><circle cx="731.3" cy="515.9000000000001" r="1.2" fill="#137f88"/><circle cx="737.0" cy="515.9000000000001" r="1.2" fill="#137f88"/><circle cx="742.6" cy="515.9000000000001" r="1.2" fill="#137f88"/><circle cx="748.3" cy="515.9000000000001" r="1.2" fill="#137f88"/><circle cx="754.0" cy="515.9000000000001" r="1.2" fill="#137f88"/><circle cx="759.6" cy="515.9000000000001" r="1.2" fill="#137f88"/><circle cx="765.3" cy="515.9000000000001" r="1.2" fill="#137f88"/><circle cx="771.0" cy="515.9000000000001" r="1.2" fill="#137f88"/><circle cx="776.7" cy="515.9000000000001" r="1.2" fill="#137f88"/><circle cx="782.3" cy="515.9000000000001" r="1.2" fill="#137f88"/><circle cx="788.0" cy="515.9000000000001" r="1.2" fill="#137f88"/><circle cx="793.7" cy="515.9000000000001" r="1.2" fill="#137f88"/><circle cx="799.3" cy="515.9000000000001" r="1.2" fill="#137f88"/><circle cx="805.0" cy="515.9000000000001" r="1.2" fill="#137f88"/><circle cx="810.7" cy="515.9000000000001" r="1.2" fill="#137f88"/><circle cx="816.3" cy="515.9000000000001" r="1.2" fill="#137f88"/><circle cx="822.0" cy="515.9000000000001" r="1.2" fill="#137f88"/><circle cx="827.7" cy="515.9000000000001" r="1.2" fill="#137f88"/><circle cx="833.4" cy="515.9000000000001" r="1.2" fill="#137f88"/><circle cx="839.0" cy="515.9000000000001" r="1.2" fill="#137f88"/><circle cx="844.7" cy="515.9000000000001" r="1.2" fill="#137f88"/><circle cx="850.4" cy="515.9000000000001" r="1.2" fill="#137f88"/><circle cx="856.0" cy="515.9000000000001" r="1.2" fill="#137f88"/><circle cx="861.7" cy="515.9000000000001" r="1.2" fill="#137f88"/><circle cx="867.4" cy="515.9000000000001" r="1.2" fill="#137f88"/><circle cx="873.0" cy="515.9000000000001" r="1.2" fill="#137f88"/><circle cx="878.7" cy="515.9000000000001" r="1.2" fill="#137f88"/><circle cx="884.4" cy="515.9000000000001" r="1.2" fill="#137f88"/><circle cx="890.1" cy="515.9000000000001" r="1.2" fill="#137f88"/><circle cx="895.7" cy="515.9000000000001" r="1.2" fill="#137f88"/><circle cx="901.4" cy="515.9000000000001" r="1.2" fill="#137f88"/><circle cx="907.1" cy="515.9000000000001" r="1.2" fill="#137f88"/><circle cx="912.7" cy="515.9000000000001" r="1.2" fill="#137f88"/><circle cx="918.4" cy="515.9000000000001" r="1.2" fill="#137f88"/><circle cx="924.1" cy="515.9000000000001" r="1.2" fill="#137f88"/><circle cx="929.8" cy="515.9000000000001" r="1.2" fill="#137f88"/><circle cx="935.4" cy="515.9000000000001" r="1.2" fill="#137f88"/><circle cx="941.1" cy="515.9000000000001" r="1.2" fill="#137f88"/><circle cx="946.8" cy="515.9000000000001" r="1.2" fill="#137f88"/><circle cx="952.4" cy="515.9000000000001" r="1.2" fill="#137f88"/><circle cx="958.1" cy="515.9000000000001" r="1.2" fill="#137f88"/><circle cx="963.8" cy="515.9000000000001" r="1.2" fill="#137f88"/><circle cx="969.4" cy="515.9000000000001" r="1.2" fill="#137f88"/><circle cx="975.1" cy="515.9000000000001" r="1.2" fill="#137f88"/><circle cx="980.8" cy="515.9000000000001" r="1.2" fill="#137f88"/><circle cx="986.4" cy="515.9000000000001" r="1.2" fill="#137f88"/><circle cx="992.1" cy="515.9000000000001" r="1.2" fill="#137f88"/><circle cx="997.8" cy="515.9000000000001" r="1.2" fill="#137f88"/><circle cx="1003.5" cy="515.9000000000001" r="1.2" fill="#137f88"/><circle cx="1009.1" cy="515.9000000000001" r="1.2" fill="#137f88"/><circle cx="1014.8" cy="515.9000000000001" r="1.2" fill="#137f88"/><circle cx="1020.5" cy="515.9000000000001" r="1.2" fill="#137f88"/><circle cx="1026.1" cy="515.9000000000001" r="1.2" fill="#137f88"/><circle cx="1031.8" cy="515.9000000000001" r="1.2" fill="#137f88"/><circle cx="1037.5" cy="515.9000000000001" r="1.2" fill="#137f88"/><circle cx="1043.2" cy="515.9000000000001" r="1.2" fill="#137f88"/><circle cx="1048.8" cy="515.9000000000001" r="1.2" fill="#137f88"/><circle cx="1054.5" cy="515.9000000000001" r="1.2" fill="#137f88"/><circle cx="1060.2" cy="515.9000000000001" r="1.2" fill="#137f88"/><circle cx="1065.8" cy="515.9000000000001" r="1.2" fill="#137f88"/><circle cx="1071.5" cy="515.9000000000001" r="1.2" fill="#137f88"/><circle cx="1077.2" cy="515.9000000000001" r="1.2" fill="#137f88"/><circle cx="1082.8" cy="515.9000000000001" r="1.2" fill="#137f88"/><circle cx="1088.5" cy="515.9000000000001" r="1.2" fill="#137f88"/><circle cx="1094.2" cy="515.9000000000001" r="1.2" fill="#137f88"/><circle cx="1099.8" cy="515.9000000000001" r="1.2" fill="#137f88"/><circle cx="1105.5" cy="515.9000000000001" r="1.2" fill="#137f88"/><circle cx="1111.2" cy="515.9000000000001" r="1.2" fill="#137f88"/><circle cx="1116.9" cy="515.9000000000001" r="1.2" fill="#137f88"/><circle cx="1122.5" cy="515.9000000000001" r="1.2" fill="#137f88"/><circle cx="1128.2" cy="515.9000000000001" r="1.2" fill="#137f88"/><circle cx="1133.9" cy="515.9000000000001" r="1.2" fill="#137f88"/><circle cx="1139.5" cy="515.9000000000001" r="1.2" fill="#137f88"/><circle cx="1145.2" cy="515.9000000000001" r="1.2" fill="#137f88"/><circle cx="1150.9" cy="515.9000000000001" r="1.2" fill="#137f88"/><circle cx="1156.5" cy="515.9000000000001" r="1.2" fill="#137f88"/><circle cx="1162.2" cy="515.9000000000001" r="1.2" fill="#137f88"/><circle cx="1167.9" cy="515.9000000000001" r="1.2" fill="#137f88"/><circle cx="1173.6" cy="515.9000000000001" r="1.2" fill="#137f88"/><circle cx="1179.2" cy="515.9000000000001" r="1.2" fill="#137f88"/><circle cx="1184.9" cy="515.9000000000001" r="1.2" fill="#137f88"/><circle cx="1190.6" cy="515.9000000000001" r="1.2" fill="#137f88"/><circle cx="1196.2" cy="515.9000000000001" r="1.2" fill="#137f88"/><circle cx="1201.9" cy="515.9000000000001" r="1.2" fill="#137f88"/><circle cx="1207.6" cy="515.9000000000001" r="1.2" fill="#137f88"/><circle cx="1213.2" cy="515.9000000000001" r="1.2" fill="#137f88"/><circle cx="1218.9" cy="515.9000000000001" r="1.2" fill="#137f88"/><circle cx="1224.6" cy="515.9000000000001" r="1.2" fill="#137f88"/><circle cx="1230.3" cy="515.9000000000001" r="1.2" fill="#137f88"/><circle cx="1235.9" cy="515.9000000000001" r="1.2" fill="#137f88"/><circle cx="1241.6" cy="515.9000000000001" r="1.2" fill="#137f88"/><circle cx="1247.3" cy="515.9000000000001" r="1.2" fill="#137f88"/><circle cx="1252.9" cy="515.9000000000001" r="1.2" fill="#137f88"/><circle cx="1258.6" cy="515.9000000000001" r="1.2" fill="#137f88"/><circle cx="1264.3" cy="515.9000000000001" r="1.2" fill="#137f88"/><circle cx="1269.9" cy="515.9000000000001" r="1.2" fill="#137f88"/><circle cx="1275.6" cy="515.9000000000001" r="1.2" fill="#137f88"/><circle cx="1281.3" cy="515.9000000000001" r="1.2" fill="#137f88"/><circle cx="1287.0" cy="515.9000000000001" r="1.2" fill="#137f88"/><circle cx="1292.6" cy="515.9000000000001" r="1.2" fill="#137f88"/><circle cx="1298.3" cy="515.9000000000001" r="1.2" fill="#137f88"/><circle cx="1304.0" cy="515.9000000000001" r="1.2" fill="#137f88"/><circle cx="1309.6" cy="515.9000000000001" r="1.2" fill="#137f88"/><circle cx="1315.3" cy="515.9000000000001" r="1.2" fill="#137f88"/><circle cx="1321.0" cy="515.9000000000001" r="1.2" fill="#137f88"/><circle cx="1326.7" cy="515.9000000000001" r="1.2" fill="#137f88"/><circle cx="1332.3" cy="515.9000000000001" r="1.2" fill="#137f88"/><circle cx="1338.0" cy="515.9000000000001" r="1.2" fill="#137f88"/><circle cx="1343.7" cy="515.9000000000001" r="1.2" fill="#137f88"/><circle cx="1349.3" cy="515.9000000000001" r="1.2" fill="#137f88"/><circle cx="1355.0" cy="515.9000000000001" r="1.2" fill="#137f88"/><circle cx="1360.7" cy="515.9000000000001" r="1.2" fill="#137f88"/></svg>
<div class="t" style="left:700.0px;top:403.07px;font-size:6.3px;font-weight:bold;color:#25a0b4;width:22px;text-align:right">30000</div>
<div class="t" style="left:700.0px;top:439.07px;font-size:6.3px;font-weight:bold;color:#25a0b4;width:22px;text-align:right">20000</div>
<div class="t" style="left:700.0px;top:475.07px;font-size:6.3px;font-weight:bold;color:#25a0b4;width:22px;text-align:right">10000</div>
<div class="t" style="left:700.0px;top:510.67px;font-size:6.3px;font-weight:bold;color:#25a0b4;width:22px;text-align:right">0</div>
<div class="t" style="left:724.0px;top:522.52px;font-size:6.0px;font-weight:normal;color:#666;">9. Jan</div>
<div class="t" style="left:790.9px;top:522.61px;font-size:5.9px;font-weight:normal;color:#777;width:17px;text-align:center">01:00</div>
<div class="t" style="left:859.0px;top:522.61px;font-size:5.9px;font-weight:normal;color:#777;width:17px;text-align:center">02:00</div>
<div class="t" style="left:927.0px;top:522.61px;font-size:5.9px;font-weight:normal;color:#777;width:17px;text-align:center">03:00</div>
<div class="t" style="left:995.1px;top:522.61px;font-size:5.9px;font-weight:normal;color:#777;width:17px;text-align:center">04:00</div>
<div class="t" style="left:1063.2px;top:522.61px;font-size:5.9px;font-weight:normal;color:#777;width:17px;text-align:center">05:00</div>
<div class="t" style="left:1131.3px;top:522.61px;font-size:5.9px;font-weight:normal;color:#777;width:17px;text-align:center">06:00</div>
<div class="t" style="left:1199.4px;top:522.61px;font-size:5.9px;font-weight:normal;color:#777;width:17px;text-align:center">07:00</div>
<div class="t" style="left:1267.4px;top:522.61px;font-size:5.9px;font-weight:normal;color:#777;width:17px;text-align:center">08:00</div>
<div class="t" style="left:1335.5px;top:522.61px;font-size:5.9px;font-weight:normal;color:#777;width:17px;text-align:center">09:00</div>
<div style="position:absolute;left:730.8px;top:539.8px;width:634.5px;height:1px;background:#c8ccd0"></div>
<div style="position:absolute;left:730.8px;top:540.5999999999999px;width:634.5px;height:9.6px;background:#d9e7f8"></div>
<svg style="position:absolute;left:0;top:0" width="1381" height="650"><path d="M735.8,548.0 L736.8,548.1 L737.8,548.2 L738.8,548.3 L739.8,548.4 L740.8,548.5 L741.8,548.6 L742.8,548.6 L743.8,548.7 L744.8,548.8 L745.8,548.8 L746.8,548.8 L747.8,548.9 L748.8,548.8 L749.8,548.8 L750.8,548.7 L751.8,548.6 L752.8,548.5 L753.8,548.4 L754.8,548.3 L755.8,548.2 L756.8,548.1 L757.8,548.1 L758.8,548.0 L759.8,548.1 L760.8,548.3 L761.8,548.4 L762.8,548.0 L763.8,546.8 L764.8,546.0 L765.8,546.4 L766.8,547.5 L767.8,548.3 L768.8,548.3 L769.8,548.3 L770.8,548.3 L771.8,548.3 L772.8,548.3 L773.8,548.4 L774.8,548.4 L775.8,548.4 L776.8,548.5 L777.8,548.5 L778.8,548.5 L779.8,547.9 L780.8,546.2 L781.8,545.0 L782.8,545.6 L783.8,547.1 L784.8,548.2 L785.8,548.3 L786.8,548.3 L787.8,548.4 L788.8,548.4 L789.8,548.4 L790.8,548.4 L791.8,548.4 L792.8,548.5 L793.8,548.5 L794.8,548.5 L795.8,548.9 L796.8,548.5 L797.8,547.7 L798.8,547.0 L799.8,547.1 L800.8,547.5 L801.8,547.9 L802.8,548.2 L803.8,548.5 L804.8,548.8 L805.8,549.0 L806.8,549.0 L807.8,549.0 L808.8,549.0 L809.8,549.0 L810.8,548.9 L811.8,548.9 L812.8,548.9 L813.8,548.8 L814.8,548.8 L815.8,548.8 L816.8,548.7 L817.8,548.7 L818.8,548.7 L819.8,548.7 L820.8,548.7 L821.8,548.8 L822.8,548.8 L823.8,548.8 L824.8,548.8 L825.8,548.8 L826.8,548.9 L827.8,548.9 L828.8,548.9 L829.8,548.9 L830.8,548.9 L831.8,548.8 L832.8,548.8 L833.8,548.7 L834.8,548.6 L835.8,548.5 L836.8,548.4 L837.8,548.3 L838.8,548.3 L839.8,548.2 L840.8,548.2 L841.8,548.2 L842.8,548.2 L843.8,548.2 L844.8,548.2 L845.8,548.2 L846.8,548.2 L847.8,548.2 L848.8,548.2 L849.8,548.2 L850.8,548.2 L851.8,548.2 L852.8,548.2 L853.8,548.2 L854.8,548.2 L855.8,548.3 L856.8,548.4 L857.8,548.4 L858.8,548.5 L859.8,548.6 L860.8,548.7 L861.8,548.8 L862.8,548.9 L863.8,548.9 L864.8,548.9 L865.8,548.9 L866.8,548.9 L867.8,548.8 L868.8,548.7 L869.8,548.4 L870.8,547.9 L871.8,547.0 L872.8,546.5 L873.8,546.9 L874.8,548.0 L875.8,548.7 L876.8,548.5 L877.8,548.5 L878.8,548.5 L879.8,548.6 L880.8,548.6 L881.8,548.6 L882.8,548.6 L883.8,548.6 L884.8,548.7 L885.8,548.7 L886.8,548.7 L887.8,548.7 L888.8,548.7 L889.8,548.7 L890.8,548.6 L891.8,548.5 L892.8,548.4 L893.8,548.3 L894.8,548.2 L895.8,548.1 L896.8,548.0 L897.8,547.9 L898.8,547.9 L899.8,547.8 L900.8,547.8 L901.8,547.8 L902.8,547.8 L903.8,547.8 L904.8,547.8 L905.8,547.8 L906.8,547.8 L907.8,547.8 L908.8,547.8 L909.8,547.8 L910.8,547.8 L911.8,547.8 L912.8,547.8 L913.8,547.8 L914.8,547.9 L915.8,547.9 L916.8,548.0 L917.8,548.1 L918.8,548.1 L919.8,548.2 L920.8,548.2 L921.8,548.3 L922.8,548.3 L923.8,548.3 L924.8,548.3 L925.8,548.3 L926.8,548.3 L927.8,548.2 L928.8,548.2 L929.8,548.2 L930.8,548.2 L931.8,548.2 L932.8,548.1 L933.8,548.1 L934.8,548.1 L935.8,548.2 L936.8,548.4 L937.8,548.5 L938.8,548.0 L939.8,546.6 L940.8,545.5 L941.8,546.1 L942.8,547.7 L943.8,548.9 L944.8,548.8 L945.8,548.4 L946.8,548.1 L947.8,548.1 L948.8,548.1 L949.8,548.2 L950.8,548.2 L951.8,548.3 L952.8,548.4 L953.8,548.5 L954.8,548.6 L955.8,548.7 L956.8,548.7 L957.8,548.8 L958.8,548.8 L959.8,548.9 L960.8,548.9 L961.8,548.9 L962.8,548.9 L963.8,549.0 L964.8,549.0 L965.8,549.0 L966.8,549.0 L967.8,549.0 L968.8,549.0 L969.8,549.0 L970.8,548.9 L971.8,548.3 L972.8,547.2 L973.8,545.9 L974.8,545.0 L975.8,545.6 L976.8,547.1 L977.8,548.2 L978.8,548.2 L979.8,548.1 L980.8,548.1 L981.8,548.0 L982.8,548.1 L983.8,547.3 L984.8,545.1 L985.8,543.6 L986.8,544.3 L987.8,546.3 L988.8,547.8 L989.8,547.9 L990.8,547.9 L991.8,547.9 L992.8,547.8 L993.8,547.8 L994.8,547.8 L995.8,547.8 L996.8,547.9 L997.8,547.9 L998.8,547.9 L999.8,547.9 L1000.8,547.9 L1001.8,547.9 L1002.8,547.9 L1003.8,548.0 L1004.8,548.0 L1005.8,548.0 L1006.8,548.0 L1007.8,548.0 L1008.8,548.0 L1009.8,548.0 L1010.8,548.0 L1011.8,548.0 L1012.8,548.0 L1013.8,548.0 L1014.8,548.0 L1015.8,548.0 L1016.8,548.0 L1017.8,548.0 L1018.8,548.0 L1019.8,548.0 L1020.8,548.1 L1021.8,548.2 L1022.8,548.3 L1023.8,548.4 L1024.8,548.5 L1025.8,548.6 L1026.8,548.6 L1027.8,548.7 L1028.8,548.7 L1029.8,548.7 L1030.8,548.7 L1031.8,548.6 L1032.8,548.6 L1033.8,548.5 L1034.8,548.5 L1035.8,548.4 L1036.8,548.4 L1037.8,548.3 L1038.8,548.3 L1039.8,548.2 L1040.8,548.2 L1041.8,548.3 L1042.8,548.3 L1043.8,548.4 L1044.8,548.5 L1045.8,548.6 L1046.8,548.7 L1047.8,548.8 L1048.8,548.9 L1049.8,549.0 L1050.8,549.0 L1051.8,549.1 L1052.8,549.1 L1053.8,549.0 L1054.8,548.9 L1055.8,548.8 L1056.8,548.7 L1057.8,548.5 L1058.8,548.3 L1059.8,548.2 L1060.8,548.0 L1061.8,547.9 L1062.8,547.8 L1063.8,547.7 L1064.8,547.7 L1065.8,547.8 L1066.8,547.8 L1067.8,547.9 L1068.8,548.0 L1069.8,548.1 L1070.8,548.2 L1071.8,548.2 L1072.8,548.3 L1073.8,548.4 L1074.8,548.4 L1075.8,548.4 L1076.8,548.4 L1077.8,548.4 L1078.8,548.4 L1079.8,548.3 L1080.8,548.2 L1081.8,548.2 L1082.8,548.1 L1083.8,548.0 L1084.8,548.0 L1085.8,547.9 L1086.8,547.9 L1087.8,547.9 L1088.8,547.9 L1089.8,548.0 L1090.8,548.1 L1091.8,548.2 L1092.8,548.3 L1093.8,548.4 L1094.8,548.5 L1095.8,548.7 L1096.8,548.8 L1097.8,548.8 L1098.8,548.9 L1099.8,548.9 L1100.8,548.9 L1101.8,548.8 L1102.8,548.8 L1103.8,548.7 L1104.8,548.7 L1105.8,548.6 L1106.8,548.5 L1107.8,548.4 L1108.8,548.4 L1109.8,548.3 L1110.8,548.2 L1111.8,548.2 L1112.8,548.2 L1113.8,548.2 L1114.8,548.1 L1115.8,548.1 L1116.8,548.1 L1117.8,548.1 L1118.8,548.1 L1119.8,548.0 L1120.8,548.0 L1121.8,548.0 L1122.8,548.0 L1123.8,548.0 L1124.8,548.1 L1125.8,548.1 L1126.8,548.2 L1127.8,548.2 L1128.8,548.3 L1129.8,548.3 L1130.8,548.4 L1131.8,548.4 L1132.8,548.5 L1133.8,548.5 L1134.8,548.5 L1135.8,548.5 L1136.8,548.5 L1137.8,548.5 L1138.8,548.4 L1139.8,548.3 L1140.8,548.1 L1141.8,547.9 L1142.8,547.4 L1143.8,546.6 L1144.8,546.0 L1145.8,546.4 L1146.8,547.5 L1147.8,548.4 L1148.8,548.5 L1149.8,548.6 L1150.8,548.7 L1151.8,548.8 L1152.8,548.8 L1153.8,548.9 L1154.8,548.9 L1155.8,548.9 L1156.8,548.9 L1157.8,548.9 L1158.8,548.9 L1159.8,548.9 L1160.8,548.8 L1161.8,548.7 L1162.8,548.5 L1163.8,548.2 L1164.8,547.6 L1165.8,546.6 L1166.8,546.0 L1167.8,546.4 L1168.8,547.6 L1169.8,548.5 L1170.8,548.5 L1171.8,548.5 L1172.8,548.4 L1173.8,548.3 L1174.8,548.2 L1175.8,548.1 L1176.8,548.0 L1177.8,547.9 L1178.8,547.8 L1179.8,547.8 L1180.8,547.7 L1181.8,547.7 L1182.8,547.9 L1183.8,548.1 L1184.8,548.5 L1185.8,548.8 L1186.8,549.0 L1187.8,548.8 L1188.8,546.0 L1189.8,542.5 L1190.8,541.7 L1191.8,544.5 L1192.8,548.0 L1193.8,549.1 L1194.8,549.1 L1195.8,549.0 L1196.8,548.9 L1197.8,548.8 L1198.8,548.6 L1199.8,548.5 L1200.8,548.3 L1201.8,548.2 L1202.8,548.1 L1203.8,548.1 L1204.8,548.0 L1205.8,548.0 L1206.8,548.1 L1207.8,548.2 L1208.8,548.3 L1209.8,548.4 L1210.8,548.5 L1211.8,548.6 L1212.8,548.7 L1213.8,548.8 L1214.8,548.9 L1215.8,548.9 L1216.8,549.0 L1217.8,549.0 L1218.8,548.9 L1219.8,548.9 L1220.8,548.8 L1221.8,548.8 L1222.8,548.7 L1223.8,548.6 L1224.8,548.5 L1225.8,548.5 L1226.8,548.4 L1227.8,548.3 L1228.8,548.3 L1229.8,548.2 L1230.8,548.2 L1231.8,548.1 L1232.8,548.1 L1233.8,548.0 L1234.8,548.0 L1235.8,547.9 L1236.8,547.9 L1237.8,547.9 L1238.8,547.8 L1239.8,547.8 L1240.8,547.8 L1241.8,547.9 L1242.8,548.0 L1243.8,548.1 L1244.8,548.2 L1245.8,548.4 L1246.8,548.5 L1247.8,548.7 L1248.8,548.8 L1249.8,548.9 L1250.8,549.0 L1251.8,549.0 L1252.8,549.0 L1253.8,549.0 L1254.8,549.0 L1255.8,549.0 L1256.8,549.0 L1257.8,549.0 L1258.8,549.0 L1259.8,549.0 L1260.8,549.0 L1261.8,549.0 L1262.8,549.0 L1263.8,549.0 L1264.8,549.0 L1265.8,549.0 L1266.8,548.9 L1267.8,548.9 L1268.8,548.8 L1269.8,548.7 L1270.8,548.6 L1271.8,548.5 L1272.8,548.5 L1273.8,548.4 L1274.8,548.3 L1275.8,548.3 L1276.8,548.2 L1277.8,548.2 L1278.8,548.2 L1279.8,548.1 L1280.8,548.1 L1281.8,548.1 L1282.8,548.0 L1283.8,548.0 L1284.8,548.0 L1285.8,548.0 L1286.8,548.0 L1287.8,548.1 L1288.8,548.5 L1289.8,548.8 L1290.8,548.3 L1291.8,547.0 L1292.8,546.0 L1293.8,546.4 L1294.8,547.4 L1295.8,548.1 L1296.8,548.1 L1297.8,547.9 L1298.8,547.7 L1299.8,547.8 L1300.8,547.8 L1301.8,547.9 L1302.8,548.0 L1303.8,548.1 L1304.8,548.2 L1305.8,548.4 L1306.8,548.5 L1307.8,548.6 L1308.8,548.7 L1309.8,548.7 L1310.8,548.7 L1311.8,548.8 L1312.8,548.8 L1313.8,548.8 L1314.8,548.8 L1315.8,548.8 L1316.8,548.8 L1317.8,548.8 L1318.8,548.8 L1319.8,548.8 L1320.8,548.8 L1321.8,548.8 L1322.8,548.8 L1323.8,548.8 L1324.8,548.8 L1325.8,548.7 L1326.8,548.6 L1327.8,548.5 L1328.8,548.3 L1329.8,547.7 L1330.8,546.7 L1331.8,546.0 L1332.8,546.5 L1333.8,547.9 L1334.8,548.9 L1335.8,549.0 L1336.8,548.9 L1337.8,548.9 L1338.8,548.9 L1339.8,548.9 L1340.8,548.8 L1341.8,548.8 L1342.8,548.8 L1343.8,548.8 L1344.8,548.7 L1345.8,548.7 L1346.8,548.7 L1347.8,548.7 L1348.8,548.7 L1349.8,548.7 L1350.8,548.7 L1351.8,548.7 L1352.8,548.7 L1353.8,548.7 L1354.8,548.7 L1355.8,548.7 L1356.8,548.7 L1357.8,548.7 L1358.8,548.5 L1359.8,548.3 L1360.3,548.2" fill="none" stroke="#82a9d6" stroke-width="0.9"/></svg>
<div class="t" style="left:741.0px;top:543.74px;font-size:5.5px;font-weight:normal;color:#9aa3aa;">9. Jan</div>
<div class="t" style="left:873.0px;top:543.74px;font-size:5.5px;font-weight:normal;color:#9aa3aa;">02:00</div>
<div class="t" style="left:1005.0px;top:543.74px;font-size:5.5px;font-weight:normal;color:#9aa3aa;">04:00</div>
<div class="t" style="left:1138.0px;top:543.74px;font-size:5.5px;font-weight:normal;color:#9aa3aa;">06:00</div>
<div class="t" style="left:1270.0px;top:543.74px;font-size:5.5px;font-weight:normal;color:#9aa3aa;">08:00</div>
<div style="position:absolute;left:735.8px;top:540.3px;width:3.5px;height:9px;border:0.5px solid #b8bcc0;background:#f2f2f2;border-radius:1px"></div>
<div style="position:absolute;left:1356.3px;top:540.3px;width:3.5px;height:9px;border:0.5px solid #b8bcc0;background:#f2f2f2;border-radius:1px"></div>
<div style="position:absolute;left:730.8px;top:550.1999999999999px;width:634.5px;height:7.8px;background:#c3cbd3"></div>
<div style="position:absolute;left:730.3px;top:550.1999999999999px;width:7px;height:7.3px;background:#f1f1f1;border:0.5px solid #ccc"></div>
<div style="position:absolute;left:1357.8px;top:550.1999999999999px;width:7px;height:7.3px;background:#f1f1f1;border:0.5px solid #ccc"></div>
<svg style="position:absolute;left:731.8px;top:551.5999999999999px" width="5" height="5"><path d="M3.2,1 L1.2,2.5 L3.2,4 Z" fill="#333"/></svg>
<svg style="position:absolute;left:1359.3px;top:551.5999999999999px" width="5" height="5"><path d="M1.8,1 L3.8,2.5 L1.8,4 Z" fill="#333"/></svg>
<svg style="position:absolute;left:1045.55px;top:552.3px" width="6" height="4"><rect x="0" y="0" width="0.7" height="3" fill="#888"/><rect x="2" y="0" width="0.7" height="3" fill="#888"/><rect x="4" y="0" width="0.7" height="3" fill="#888"/></svg>
<div style="position:absolute;left:793.8px;top:564.4px;width:481px;height:22.6px;border:1px solid #cfd4d8;border-radius:3px;background:#fff"></div>
<svg style="position:absolute;left:797.8px;top:568.0999999999999px" width="7" height="7"><circle cx="3.2" cy="3.2" r="3.1" fill="#0e7f86"/></svg>
<div class="t" style="left:806.8px;top:568.08px;font-size:6.52px;font-weight:normal;color:#333;">10.40.64.3 (QA-Cat9300)</div>
<svg style="position:absolute;left:886.0131054687499px;top:568.0999999999999px" width="7" height="7"><circle cx="3.2" cy="3.2" r="3.1" fill="#b9c2c8"/></svg>
<div class="t" style="left:895.0px;top:568.08px;font-size:6.52px;font-weight:normal;color:#333;">10.40.70.10 (SQE3650POE.ipswitch.com)</div>
<svg style="position:absolute;left:1022.7823828124999px;top:568.0999999999999px" width="7" height="7"><circle cx="3.2" cy="3.2" r="3.1" fill="#1aa9c4"/></svg>
<div class="t" style="left:1031.8px;top:568.08px;font-size:6.52px;font-weight:normal;color:#333;">10.40.70.4 (QA-2901.nmdevsqa.com)</div>
<svg style="position:absolute;left:1146.8714062499998px;top:568.0999999999999px" width="7" height="7"><circle cx="3.2" cy="3.2" r="3.1" fill="#7f8385"/></svg>
<div class="t" style="left:1155.9px;top:568.08px;font-size:6.52px;font-weight:normal;color:#333;">10.40.71.162 (lb100)</div>
<svg style="position:absolute;left:1222.0476953124999px;top:568.0999999999999px" width="7" height="7"><circle cx="3.2" cy="3.2" r="3.1" fill="#5b46ad"/></svg>
<div class="t" style="left:1231.0px;top:568.08px;font-size:6.52px;font-weight:normal;color:#333;">192.168.199.1</div>
<svg style="position:absolute;left:797.8px;top:577.0999999999999px" width="7" height="7"><circle cx="3.2" cy="3.2" r="3.1" fill="#7ea22a"/></svg>
<div class="t" style="left:806.8px;top:577.08px;font-size:6.52px;font-weight:normal;color:#333;letter-spacing:0.084px">192.168.199.18 (atl-rd-a-s-sw-3021.mgmt.net.progress.com)</div>
<svg style="position:absolute;left:992.25587109375px;top:577.0999999999999px" width="7" height="7"><circle cx="3.2" cy="3.2" r="3.1" fill="#0e7f86"/></svg>
<div class="t" style="left:1001.3px;top:577.08px;font-size:6.52px;font-weight:normal;color:#333;">192.168.199.19</div>
<svg style="position:absolute;left:1052.57751171875px;top:577.0999999999999px" width="7" height="7"><circle cx="3.2" cy="3.2" r="3.1" fill="#0e7f86"/></svg>
<div class="t" style="left:1061.6px;top:577.08px;font-size:6.52px;font-weight:normal;color:#333;">192.168.199.22 (QA-C9200)</div>
<div style="position:absolute;left:698.4px;top:596.5px;width:672.6px;height:1px;background:#e9eef0"></div>
<svg style="position:absolute;left:700.8px;top:607.8px" width="7.2" height="5.4"><path d="M1,1 L3.6,4.4 L6.2,1" fill="none" stroke="#555" stroke-width="1.2"/></svg>
<div class="t" style="left:711.2px;top:607.79px;font-size:6.75px;font-weight:bold;color:#404040;">8 of 10 Channel(s) selected</div>
<div style="position:absolute;left:698.4px;top:620.9px;width:672.6px;height:1px;background:#e6ecee"></div>
<div class="t" style="left:716.0px;top:624.96px;font-size:6.9px;font-weight:normal;color:#444;">Channel</div>
<div class="t" style="left:1109.0px;top:625.21px;font-size:6.6px;font-weight:normal;color:#444;">Avg</div>
<svg style="position:absolute;left:1126px;top:624px" width="5" height="8"><path d="M2.2,0.3 L2.2,6" stroke="#333" stroke-width="1.1"/><path d="M0.2,4.3 L2.2,7 L4.2,4.3 Z" fill="#333"/></svg>
<div style="position:absolute;left:698.4px;top:633.2px;width:672.6px;height:17.33px;background:#b1e2ea"></div>
<svg style="position:absolute;left:702.0px;top:637.065px" width="7" height="7" viewBox="0 0 7 7"><rect x="0" y="0" width="7" height="7" rx="0.8" fill="#1f8f9c"/><path d="M1.5,3.6 L2.9,5 L5.6,2" fill="none" stroke="#fff" stroke-width="1.1"/></svg>
<div class="t" style="left:715.7px;top:637.65px;font-size:6.75px;font-weight:normal;color:#3d4a4d;">192.168.199.1</div>
<div class="t" style="left:1109.0px;top:637.78px;font-size:6.6px;font-weight:normal;color:#3d4a4d;">4026.58</div>
<div style="position:absolute;left:7.3px;top:54.3px;width:66px;height:12.3px;border:1px solid #d3d9dc;border-radius:2px;background:#fff"></div>
<svg style="position:absolute;left:8.6px;top:56.8px" width="9" height="9" viewBox="0 0 9 9"><path d="M4.3,0.3 L8.2,1.9 L8.2,6.6 L4.3,8.5 L0.4,6.6 L0.4,1.9 Z" fill="#1e8a93"/><path d="M4.3,1.4 L6.6,2.4 L4.3,3.3 L2.0,2.4 Z" fill="#bfe0e3"/><path d="M5.6,4.2 L7.2,3.5 L7.2,5.9 L5.6,6.8 Z" fill="#fff"/></svg>
<div class="t" style="left:20.6px;top:59.21px;font-size:6.6px;font-weight:bold;color:#1f8a95;">NTA+ device</div>
<svg style="position:absolute;left:64.9px;top:60.8px" width="5" height="3"><path d="M0,0 L4.4,0 L2.2,2.4 Z" fill="#444"/></svg>
<svg style="position:absolute;left:77.6px;top:56.699999999999996px" width="7.8" height="7.8" viewBox="0 0 10 10"><path d="M5.00,0.40 L6.70,3.05 L9.76,3.85 L7.76,6.30 L7.94,9.45 L5.00,8.30 L2.06,9.45 L2.24,6.30 L0.24,3.85 L3.30,3.05 Z" fill="#1e7f88" stroke="#1e7f88" stroke-width="0.9" stroke-linejoin="round"/></svg>
<svg style="position:absolute;left:92.3px;top:55.099999999999994px" width="10" height="10" viewBox="0 0 10 10"><rect x="0.3" y="1.5" width="9" height="8.2" rx="0.8" fill="#1e7f88"/><rect x="2" y="0" width="1.3" height="2.6" fill="#1e7f88"/><rect x="6.3" y="0" width="1.3" height="2.6" fill="#1e7f88"/><rect x="1.3" y="3.8" width="1.7" height="1.3" fill="#cfe6e8"/><rect x="1.3" y="5.699999999999999" width="1.7" height="1.3" fill="#cfe6e8"/><rect x="1.3" y="7.6" width="1.7" height="1.3" fill="#cfe6e8"/><rect x="3.5999999999999996" y="3.8" width="1.7" height="1.3" fill="#cfe6e8"/><rect x="3.5999999999999996" y="5.699999999999999" width="1.7" height="1.3" fill="#cfe6e8"/><rect x="3.5999999999999996" y="7.6" width="1.7" height="1.3" fill="#cfe6e8"/><rect x="5.8999999999999995" y="3.8" width="1.7" height="1.3" fill="#cfe6e8"/><rect x="5.8999999999999995" y="5.699999999999999" width="1.7" height="1.3" fill="#cfe6e8"/><rect x="5.8999999999999995" y="7.6" width="1.7" height="1.3" fill="#cfe6e8"/></svg>
<div class="t" style="left:104.7px;top:58.21px;font-size:6.6px;font-weight:bold;color:#1f8a95;">Today</div>
<svg style="position:absolute;left:128.70000000000002px;top:60.3px" width="5" height="3"><path d="M0,0 L4.4,0 L2.2,2.4 Z" fill="#444"/></svg>
<svg style="position:absolute;left:141.10000000000002px;top:56.099999999999994px" width="8.2" height="8.2" viewBox="0 0 10 10"><path d="M5.60,0.20 L7.07,2.38 L9.59,3.10 L7.98,5.17 L8.07,7.80 L5.60,6.90 L3.13,7.80 L3.22,5.17 L1.61,3.10 L4.13,2.38 Z" fill="#1e7f88" stroke="#1e7f88" stroke-width="0.9" stroke-linejoin="round" transform="rotate(15 5.6 4.4)"/><path d="M4.2,6 L1,9.3" stroke="#1e7f88" stroke-width="1.6" stroke-linecap="round"/></svg>
<div class="t" style="left:157.7px;top:58.30px;font-size:6.5px;font-weight:bold;color:#1f8a95;">All Sources</div>
<svg style="position:absolute;left:197.9px;top:60.3px" width="5" height="3"><path d="M0,0 L4.4,0 L2.2,2.4 Z" fill="#444"/></svg>
<div style="position:absolute;left:7.2px;top:389.1px;width:66px;height:12.3px;border:1px solid #d3d9dc;border-radius:2px;background:#fff"></div>
<svg style="position:absolute;left:8.5px;top:391.6px" width="9" height="9" viewBox="0 0 9 9"><path d="M4.3,0.3 L8.2,1.9 L8.2,6.6 L4.3,8.5 L0.4,6.6 L0.4,1.9 Z" fill="#1e8a93"/><path d="M4.3,1.4 L6.6,2.4 L4.3,3.3 L2.0,2.4 Z" fill="#bfe0e3"/><path d="M5.6,4.2 L7.2,3.5 L7.2,5.9 L5.6,6.8 Z" fill="#fff"/></svg>
<div class="t" style="left:20.5px;top:394.01px;font-size:6.6px;font-weight:bold;color:#1f8a95;">NTA+ device</div>
<svg style="position:absolute;left:64.8px;top:395.6px" width="5" height="3"><path d="M0,0 L4.4,0 L2.2,2.4 Z" fill="#444"/></svg>
<svg style="position:absolute;left:77.5px;top:391.5px" width="7.8" height="7.8" viewBox="0 0 10 10"><path d="M5.00,0.40 L6.70,3.05 L9.76,3.85 L7.76,6.30 L7.94,9.45 L5.00,8.30 L2.06,9.45 L2.24,6.30 L0.24,3.85 L3.30,3.05 Z" fill="#1e7f88" stroke="#1e7f88" stroke-width="0.9" stroke-linejoin="round"/></svg>
<svg style="position:absolute;left:92.2px;top:389.90000000000003px" width="10" height="10" viewBox="0 0 10 10"><rect x="0.3" y="1.5" width="9" height="8.2" rx="0.8" fill="#1e7f88"/><rect x="2" y="0" width="1.3" height="2.6" fill="#1e7f88"/><rect x="6.3" y="0" width="1.3" height="2.6" fill="#1e7f88"/><rect x="1.3" y="3.8" width="1.7" height="1.3" fill="#cfe6e8"/><rect x="1.3" y="5.699999999999999" width="1.7" height="1.3" fill="#cfe6e8"/><rect x="1.3" y="7.6" width="1.7" height="1.3" fill="#cfe6e8"/><rect x="3.5999999999999996" y="3.8" width="1.7" height="1.3" fill="#cfe6e8"/><rect x="3.5999999999999996" y="5.699999999999999" width="1.7" height="1.3" fill="#cfe6e8"/><rect x="3.5999999999999996" y="7.6" width="1.7" height="1.3" fill="#cfe6e8"/><rect x="5.8999999999999995" y="3.8" width="1.7" height="1.3" fill="#cfe6e8"/><rect x="5.8999999999999995" y="5.699999999999999" width="1.7" height="1.3" fill="#cfe6e8"/><rect x="5.8999999999999995" y="7.6" width="1.7" height="1.3" fill="#cfe6e8"/></svg>
<div class="t" style="left:104.6px;top:393.01px;font-size:6.6px;font-weight:bold;color:#1f8a95;">Today</div>
<svg style="position:absolute;left:128.6px;top:395.1px" width="5" height="3"><path d="M0,0 L4.4,0 L2.2,2.4 Z" fill="#444"/></svg>
<svg style="position:absolute;left:141.0px;top:390.90000000000003px" width="8.2" height="8.2" viewBox="0 0 10 10"><path d="M5.60,0.20 L7.07,2.38 L9.59,3.10 L7.98,5.17 L8.07,7.80 L5.60,6.90 L3.13,7.80 L3.22,5.17 L1.61,3.10 L4.13,2.38 Z" fill="#1e7f88" stroke="#1e7f88" stroke-width="0.9" stroke-linejoin="round" transform="rotate(15 5.6 4.4)"/><path d="M4.2,6 L1,9.3" stroke="#1e7f88" stroke-width="1.6" stroke-linecap="round"/></svg>
<div class="t" style="left:157.6px;top:393.10px;font-size:6.5px;font-weight:bold;color:#1f8a95;">All Sources</div>
<svg style="position:absolute;left:197.79999999999998px;top:395.1px" width="5" height="3"><path d="M0,0 L4.4,0 L2.2,2.4 Z" fill="#444"/></svg>
<div style="position:absolute;left:696px;top:389.0px;width:66px;height:12.3px;border:1px solid #d3d9dc;border-radius:2px;background:#fff"></div>
<svg style="position:absolute;left:697.3px;top:391.5px" width="9" height="9" viewBox="0 0 9 9"><path d="M4.3,0.3 L8.2,1.9 L8.2,6.6 L4.3,8.5 L0.4,6.6 L0.4,1.9 Z" fill="#1e8a93"/><path d="M4.3,1.4 L6.6,2.4 L4.3,3.3 L2.0,2.4 Z" fill="#bfe0e3"/><path d="M5.6,4.2 L7.2,3.5 L7.2,5.9 L5.6,6.8 Z" fill="#fff"/></svg>
<div class="t" style="left:709.3px;top:393.91px;font-size:6.6px;font-weight:bold;color:#1f8a95;">NTA+ device</div>
<svg style="position:absolute;left:753.6px;top:395.5px" width="5" height="3"><path d="M0,0 L4.4,0 L2.2,2.4 Z" fill="#444"/></svg>
<svg style="position:absolute;left:766.3px;top:391.4px" width="7.8" height="7.8" viewBox="0 0 10 10"><path d="M5.00,0.40 L6.70,3.05 L9.76,3.85 L7.76,6.30 L7.94,9.45 L5.00,8.30 L2.06,9.45 L2.24,6.30 L0.24,3.85 L3.30,3.05 Z" fill="#1e7f88" stroke="#1e7f88" stroke-width="0.9" stroke-linejoin="round"/></svg>
<svg style="position:absolute;left:781px;top:389.8px" width="10" height="10" viewBox="0 0 10 10"><rect x="0.3" y="1.5" width="9" height="8.2" rx="0.8" fill="#1e7f88"/><rect x="2" y="0" width="1.3" height="2.6" fill="#1e7f88"/><rect x="6.3" y="0" width="1.3" height="2.6" fill="#1e7f88"/><rect x="1.3" y="3.8" width="1.7" height="1.3" fill="#cfe6e8"/><rect x="1.3" y="5.699999999999999" width="1.7" height="1.3" fill="#cfe6e8"/><rect x="1.3" y="7.6" width="1.7" height="1.3" fill="#cfe6e8"/><rect x="3.5999999999999996" y="3.8" width="1.7" height="1.3" fill="#cfe6e8"/><rect x="3.5999999999999996" y="5.699999999999999" width="1.7" height="1.3" fill="#cfe6e8"/><rect x="3.5999999999999996" y="7.6" width="1.7" height="1.3" fill="#cfe6e8"/><rect x="5.8999999999999995" y="3.8" width="1.7" height="1.3" fill="#cfe6e8"/><rect x="5.8999999999999995" y="5.699999999999999" width="1.7" height="1.3" fill="#cfe6e8"/><rect x="5.8999999999999995" y="7.6" width="1.7" height="1.3" fill="#cfe6e8"/></svg>
<div class="t" style="left:793.4px;top:392.91px;font-size:6.6px;font-weight:bold;color:#1f8a95;">Today</div>
<svg style="position:absolute;left:817.4px;top:395.0px" width="5" height="3"><path d="M0,0 L4.4,0 L2.2,2.4 Z" fill="#444"/></svg>
<svg style="position:absolute;left:829.8px;top:390.8px" width="8.2" height="8.2" viewBox="0 0 10 10"><path d="M5.60,0.20 L7.07,2.38 L9.59,3.10 L7.98,5.17 L8.07,7.80 L5.60,6.90 L3.13,7.80 L3.22,5.17 L1.61,3.10 L4.13,2.38 Z" fill="#1e7f88" stroke="#1e7f88" stroke-width="0.9" stroke-linejoin="round" transform="rotate(15 5.6 4.4)"/><path d="M4.2,6 L1,9.3" stroke="#1e7f88" stroke-width="1.6" stroke-linecap="round"/></svg>
<div class="t" style="left:846.4px;top:393.00px;font-size:6.5px;font-weight:bold;color:#1f8a95;">All Sources</div>
<svg style="position:absolute;left:886.6px;top:395.0px" width="5" height="3"><path d="M0,0 L4.4,0 L2.2,2.4 Z" fill="#444"/></svg>
<div style="position:absolute;left:1378px;top:0px;width:3px;height:650px;background:#476d49"></div>
<div style="position:absolute;left:0px;top:647px;width:1381px;height:3px;background:#476d49"></div>
</body></html>
